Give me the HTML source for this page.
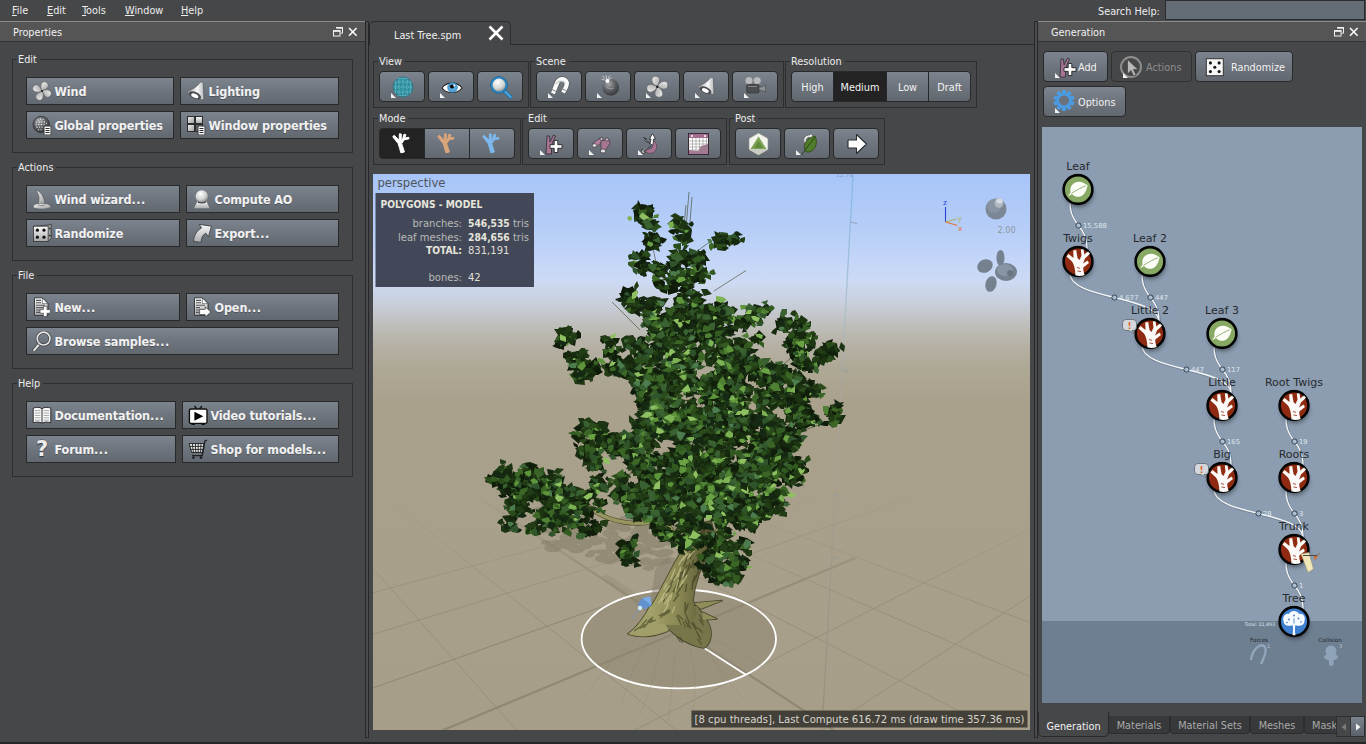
<!DOCTYPE html>
<html lang="en">
<head>
<meta charset="utf-8">
<title>Last Tree.spm</title>
<style>
*{box-sizing:border-box;margin:0;padding:0}
html,body{width:1366px;height:744px;overflow:hidden;background:#464749}
body{position:relative;font-family:"DejaVu Sans Condensed","Liberation Sans",sans-serif;font-size:10.8px;color:#eaeaea;-webkit-font-smoothing:antialiased}
.abs{position:absolute}
/* menu */
.menu{position:absolute;top:0;left:0;width:1366px;height:21px}
.menu span{position:absolute;top:4px;font-size:10.8px;line-height:14px;color:#ededed;white-space:nowrap}
.menu u{text-decoration:underline;text-underline-offset:1px}
.search{position:absolute;left:1165px;top:0;width:200px;height:20px;background:#646c76;border:1px solid #2b2c2e}
/* dock title */
.dtitle{position:absolute;height:21px;background:#555;border-top:1px solid #8c8c8c;border-bottom:1px solid #323335}
.dtitle b{position:absolute;top:4px;font-weight:normal;font-size:10.8px;line-height:14px;color:#f0f0f0}
.vline{position:absolute;width:1px;background:#27272b}
.hline{position:absolute;height:1px;background:#2a2a2e}
/* groups */
.grp{position:absolute;border:1px solid #2d2e30}
.grp>i{position:absolute;top:-7px;left:4px;padding:0 3px 0 1px;background:#464749;font-style:normal;font-size:10.8px;line-height:14px;color:#ececec;white-space:nowrap}
/* buttons */
.btn{position:absolute;border:1px solid #28292b;background:linear-gradient(#7c848e,#6f767f 45%,#62686f);color:#f2f2f2}
.lb{height:28px;font-family:"DejaVu Sans Condensed","DejaVu Sans","Liberation Sans",sans-serif;font-weight:bold;font-size:12.500px;line-height:27px;padding-left:27.500px;letter-spacing:-.120px;white-space:nowrap;text-shadow:0 1px 0 rgba(0,0,0,.25)}
.lb svg{position:absolute;left:5px;top:3px;width:20px;height:20px}
.tb{width:46px;height:31px;border-radius:4px}
.tb svg{position:absolute;left:50%;top:3px;margin-left:-12px;width:24px;height:24px}
.tb.dd:after{content:"";position:absolute;left:11px;bottom:3px;width:0;height:0;border-left:5px solid #f1f1f1;border-top:5px solid transparent}
.sel{background:#232323}
.rb{height:31px;font-size:10.8px;line-height:31px;text-align:center;color:#f2f2f2}
.rbt em{position:absolute;top:1px;font-style:normal;font-size:10.800px;line-height:29px;color:#f2f2f2;white-space:nowrap}
.dis{background:#464749;border-color:#303133}
.dis em{color:#8d8d8d}
.btab{position:absolute;top:716px;height:18px;padding-top:1px;background:#38393b;border:1px solid #2c2d2f;border-top:none;border-radius:0 0 4px 4px;font-size:10.800px;line-height:17px;text-align:center;color:#a9a9a9;white-space:nowrap;overflow:hidden}
.el{letter-spacing:.500px}
</style>
</head>
<body>


<!-- ===== icon defs ===== -->
<svg width="0" height="0" style="position:absolute">
<defs>
  <linearGradient id="gSil" x1="0" y1="0" x2="1" y2="1"><stop offset="0" stop-color="#f4f4f2"/><stop offset="1" stop-color="#9b9c9c"/></linearGradient>
  <linearGradient id="gSilV" x1="0" y1="0" x2="0" y2="1"><stop offset="0" stop-color="#fafafa"/><stop offset="1" stop-color="#a9aaab"/></linearGradient>
  <linearGradient id="gLamp" x1="0" y1="0" x2="1" y2="0"><stop offset="0" stop-color="#a2a4a6"/><stop offset=".6" stop-color="#f8f8f8"/><stop offset="1" stop-color="#b9bbbd"/></linearGradient>
  <radialGradient id="gBall" cx=".4" cy=".3" r=".75"><stop offset="0" stop-color="#ffffff"/><stop offset=".6" stop-color="#cfd0d0"/><stop offset="1" stop-color="#7c7d7e"/></radialGradient>
  <radialGradient id="gDark" cx=".38" cy=".3" r=".8"><stop offset="0" stop-color="#a4a7aa"/><stop offset=".5" stop-color="#5b5e61"/><stop offset="1" stop-color="#2e3032"/></radialGradient>
  <symbol id="iFan" viewBox="0 0 20 20">
    <g transform="rotate(22 10 10)">
      <path id="bl" d="M10 10 C6.6 7.4 5.8 2.8 8 .9 C10.4 -.7 13.9 .8 14 3.5 C14 6.300 11.600 8 10 10Z" fill="url(#gSil)" stroke="#5f6266" stroke-width=".6"/>
      <use href="#bl" transform="rotate(90 10 10)"/><use href="#bl" transform="rotate(180 10 10)"/><use href="#bl" transform="rotate(270 10 10)"/>
    </g>
    <circle cx="10" cy="10" r="1.1" fill="#1d1d1d"/>
  </symbol>
  <symbol id="iLamp" viewBox="0 0 20 20">
    <path d="M14 1.400 C15 .800 16.800 1 17.200 2.200 L17.800 17.600 C17.600 18.800 16.400 19 15.400 18.400 L2.400 12.400 C1.200 11.600 1.400 10.400 2.400 9.800 C7 8 11.500 5.500 14 1.400Z" fill="url(#gLamp)" stroke="#4e5155" stroke-width=".6"/>
    <ellipse cx="9" cy="14.300" rx="6.600" ry="3.300" transform="rotate(25 9 14.300)" fill="#4a4c4f"/>
    <ellipse cx="8.800" cy="14.800" rx="3.800" ry="2" transform="rotate(25 8.800 14.800)" fill="#fdfdfd"/>
  </symbol>
  <symbol id="iDoc" viewBox="0 0 8 10">
    <rect x=".5" y=".5" width="7" height="9" fill="#fff" stroke="#2b2b2b"/>
    <path d="M2 3h4M2 5h4M2 7h4" stroke="#2b2b2b" stroke-width="1"/>
  </symbol>
  <symbol id="iTree" viewBox="0 0 24 24">
    <path d="M10.800 20.800 L14.400 20 C13.500 16.600 12.300 13.600 11.700 11.600 L14.200 8 L15.900 2.700 L14 2.200 L12.700 6.600 L11.200 8.600 L11.300 2 L9.400 1.800 L9.200 8.300 L4.200 3.300 L2.700 4.700 L8.100 11.500 C9.100 14.600 10.100 17.700 10.800 20.800Z M14.600 6 L18.800 5.300 L18.900 6.900 L14.100 7.700Z" fill="currentColor" stroke="currentColor" stroke-width="1" stroke-linejoin="round"/>
  </symbol>
</defs>
</svg>

<!-- ===== menu bar ===== -->
<div class="menu">
  <span style="left:12px"><u>F</u>ile</span>
  <span style="left:47px"><u>E</u>dit</span>
  <span style="left:82px"><u>T</u>ools</span>
  <span style="left:125px"><u>W</u>indow</span>
  <span style="left:181px"><u>H</u>elp</span>
  <span style="left:1098px;top:5px">Search Help:</span>
  <div class="search"></div>
</div>

<!-- ===== left dock: Properties ===== -->
<div class="dtitle" style="left:0;top:21px;width:365px"><b style="left:13px">Properties</b><svg class="abs" style="left:333px;top:5px" width="26" height="11" viewBox="0 0 26 11"><path d="M3.500 1h6v5.200h-2" fill="none" stroke="#f1f1f1" stroke-width="1"/><path d="M3 .700h7" stroke="#f1f1f1" stroke-width="1.400"/><rect x=".500" y="4" width="6.500" height="5" fill="none" stroke="#f1f1f1" stroke-width="1"/><path d="M0 3.900h7.500" stroke="#f1f1f1" stroke-width="1.600"/><path d="M16 1 L23.600 8.800M23.600 1 L16 8.800" stroke="#fafafa" stroke-width="1.600"/></svg></div>
<div class="vline" style="left:365px;top:21px;height:716px"></div>
<div class="vline" style="left:368px;top:21px;height:716px"></div>
<div class="abs" style="left:366px;top:22px;width:2px;height:715px;background:#4b4c4e"></div>

<!-- Edit group -->
<div class="grp" style="left:12px;top:59px;width:341px;height:94px"><i>Edit</i></div>
<div class="btn lb" style="left:26px;top:77px;width:148px"><svg viewBox="0 0 20 20"><use href="#iFan"/></svg>Wind</div>
<div class="btn lb" style="left:180px;top:77px;width:159px"><svg viewBox="0 0 20 20"><use href="#iLamp"/></svg>Lighting</div>
<div class="btn lb" style="left:26px;top:111px;width:148px"><svg viewBox="0 0 20 20">
  <circle cx="9.3" cy="9.5" r="8.2" fill="url(#gDark)" stroke="#2d2f31" stroke-width=".8"/>
  <g fill="#e9e9e9"><circle cx="6" cy="5" r=".7"/><circle cx="8.5" cy="4.3" r=".7"/><circle cx="11" cy="4.6" r=".7"/><circle cx="4.6" cy="7.3" r=".7"/><circle cx="7.2" cy="6.9" r=".7"/><circle cx="9.8" cy="6.8" r=".7"/><circle cx="12.4" cy="7" r=".7"/><circle cx="14.4" cy="8.3" r=".6"/><circle cx="4.2" cy="9.8" r=".7"/><circle cx="6.8" cy="9.5" r=".7"/><circle cx="9.4" cy="9.4" r=".7"/><circle cx="12" cy="9.6" r=".7"/><circle cx="5" cy="12.3" r=".7"/><circle cx="7.5" cy="12.1" r=".7"/><circle cx="10" cy="12.1" r=".7"/><circle cx="6.6" cy="14.6" r=".6"/><circle cx="9" cy="14.6" r=".6"/></g>
  <use href="#iDoc" x="11.5" y="10.5" width="8" height="10"/></svg>Global properties</div>
<div class="btn lb" style="left:180px;top:111px;width:159px"><svg viewBox="0 0 20 20">
  <g stroke="#2b2c2e" stroke-width="1"><rect x="1.5" y="1.5" width="7" height="7" fill="url(#gSil)"/><rect x="9.5" y="1.5" width="7" height="7" fill="url(#gSilV)"/><rect x="1.5" y="9.5" width="7" height="7" fill="url(#gSil)"/><rect x="9.5" y="9.5" width="7" height="7" fill="#5f6368"/></g>
  <use href="#iDoc" x="11.5" y="10.5" width="8" height="10"/></svg>Window properties</div>

<!-- Actions group -->
<div class="grp" style="left:12px;top:167px;width:341px;height:94px"><i>Actions</i></div>
<div class="btn lb" style="left:26px;top:185px;width:154px"><svg viewBox="0 0 20 20">
  <path d="M3.6 1.2 C8.5 2 11.6 6.5 13.2 14.6 L6 15.2 C7.6 10.4 7.6 5.4 3.6 1.2Z" fill="url(#gSil)" stroke="#4f5256" stroke-width=".6"/>
  <path d="M1.2 17.6 C1.5 15.2 5 14.2 9.6 14.2 C14.4 14.2 18.6 15.4 18.8 17.4 C18.9 19.4 14.2 20 9.8 20 C5.6 20 1 19.6 1.2 17.6Z" fill="url(#gSil)" stroke="#4f5256" stroke-width=".6"/>
  <path d="M5.8 15.6 C8 17.2 11.6 17 13.4 15.2" fill="none" stroke="#7e8185" stroke-width=".9"/></svg>Wind wizard<span class="el">...</span></div>
<div class="btn lb" style="left:186px;top:185px;width:153px"><svg viewBox="0 0 20 20">
  <path d="M5.4 12.4 L14.4 12.4 L17.6 19.3 L2 19.3Z" fill="url(#gSilV)"/>
  <ellipse cx="9.8" cy="12.8" rx="4.2" ry="1.6" fill="#3c3d3f"/>
  <circle cx="9.8" cy="7.4" r="6.2" fill="url(#gBall)"/></svg>Compute AO</div>
<div class="btn lb" style="left:26px;top:219px;width:154px"><svg viewBox="0 0 20 20">
  <path d="M1.5 3.4 L16.2 2 L19.2 1 L19.2 15.6 L16.2 18.4 L1.5 18.4Z" fill="#9c9d9c" stroke="#2d2d2d" stroke-width=".7"/>
  <rect x="1.5" y="3.2" width="14.6" height="15.2" fill="url(#gSilV)" stroke="#2d2d2d" stroke-width=".7"/>
  <g fill="#111"><circle cx="5.4" cy="7.2" r="1.6"/><circle cx="12" cy="7.2" r="1.6"/><circle cx="5.4" cy="14.2" r="1.6"/><circle cx="12" cy="14.2" r="1.6"/><circle cx="17.8" cy="5.6" r=".8"/><circle cx="17.8" cy="12.6" r=".8"/></g></svg>Randomize</div>
<div class="btn lb" style="left:186px;top:219px;width:153px"><svg viewBox="0 0 20 20">
  <path d="M7.2 1.4 L19.4 3.2 L16.6 13.6 L13.6 10.2 C10.4 12 9.4 15.4 9 19.4 L1.4 18.4 C2 12.8 4.2 8 9.6 5Z" fill="url(#gSilV)" stroke="#33363a" stroke-width=".8" stroke-linejoin="round"/></svg>Export<span class="el">...</span></div>

<!-- File group -->
<div class="grp" style="left:12px;top:275px;width:341px;height:94px"><i>File</i></div>
<div class="btn lb" style="left:26px;top:293px;width:154px"><svg viewBox="0 0 20 20">
  <path d="M2.5 .8 L10.6 .8 L16 6.4 L16 18.4 L2.5 18.4Z" fill="url(#gSilV)" stroke="#2b2c2e" stroke-width=".9"/>
  <path d="M10.4 1 L10.4 6.6 L15.8 6.6Z" fill="#fff" stroke="#2b2c2e" stroke-width=".5"/>
  <path d="M4 3.4h5M4 5.8h5M4 8.2h9M4 10.6h9M4 13h5M4 15.4h4" stroke="#55585c" stroke-width="1.1"/>
  <path d="M11.4 10.8h3.6v3.4h3.4v3.6h-3.4v3.4h-3.6v-3.4H8v-3.6h3.4z" fill="#fff" stroke="#2b2c2e" stroke-width=".6" transform="translate(0 -1.6)"/></svg>New<span class="el">...</span></div>
<div class="btn lb" style="left:186px;top:293px;width:153px"><svg viewBox="0 0 20 20">
  <path d="M2.5 .8 L10.6 .8 L16 6.4 L16 18.4 L2.5 18.4Z" fill="url(#gSilV)" stroke="#2b2c2e" stroke-width=".9"/>
  <path d="M10.4 1 L10.4 6.6 L15.8 6.6Z" fill="#fff" stroke="#2b2c2e" stroke-width=".5"/>
  <path d="M4 3.4h5M4 5.8h5M4 8.2h9M4 10.6h4M4 13h3M4 15.4h3" stroke="#55585c" stroke-width="1.1"/>
  <path d="M7.6 12.4 L13.2 12.4 L13.2 9.8 L19 15 L13.2 20.2 L13.2 17.6 L7.6 17.6Z" fill="#fff" stroke="#2b2c2e" stroke-width=".7"/></svg>Open<span class="el">...</span></div>
<div class="btn lb" style="left:26px;top:327px;width:313px"><svg viewBox="0 0 20 20">
  <path d="M7.4 13 L2.2 19.2" stroke="#3c3e41" stroke-width="3.4" stroke-linecap="round"/>
  <path d="M7.4 13 L2.2 19.2" stroke="#e4e4e2" stroke-width="2" stroke-linecap="round"/>
  <circle cx="11.6" cy="7.6" r="6.4" fill="none" stroke="#3c3e41" stroke-width="3"/>
  <circle cx="11.6" cy="7.6" r="6.4" fill="none" stroke="#e6e6e4" stroke-width="1.7"/></svg>Browse samples<span class="el">...</span></div>

<!-- Help group -->
<div class="grp" style="left:12px;top:383px;width:341px;height:94px"><i>Help</i></div>
<div class="btn lb" style="left:26px;top:401px;width:150px"><svg viewBox="0 0 20 20">
  <path d="M1.2 3.2 C4 2 7.6 2 10 3.6 C12.400 2 16 2 18.800 3.200 L18.800 17.800 C16 16.800 12.400 16.800 10 18.200 C7.600 16.800 4 16.800 1.200 17.800Z" fill="#fbfbfb" stroke="#2b2c2e" stroke-width="1"/>
  <path d="M10 3.600V18" stroke="#2b2c2e" stroke-width="1"/>
  <path d="M2.800 5.600h5.600M2.800 8h5.600M2.800 10.400h5.600M2.800 12.800h5.600M2.800 15.200h5.600M11.600 5.600h5.600M11.600 8h5.600M11.600 10.400h5.600M11.600 12.800h5.600M11.600 15.200h5.600" stroke="#a6a8aa" stroke-width="1"/></svg>Documentation<span class="el">...</span></div>
<div class="btn lb" style="left:182px;top:401px;width:157px"><svg viewBox="0 0 20 20">
  <path d="M6.400 1 L9 4M14 1 L11.400 4" stroke="#111" stroke-width="1.200"/>
  <rect x="1.400" y="4" width="17.600" height="14.400" rx="1.600" fill="#fff" stroke="#111" stroke-width="1.400"/>
  <path d="M6.400 6.800 L15.400 11.200 L6.400 15.800Z" fill="#050505"/>
  <rect x="3.400" y="18.600" width="3.600" height="1.400" fill="#111"/><rect x="13.400" y="18.600" width="3.600" height="1.400" fill="#111"/></svg>Video tutorials<span class="el">...</span></div>
<div class="btn lb" style="left:26px;top:435px;width:150px"><svg viewBox="0 0 20 20">
  <text x="10" y="16.500" text-anchor="middle" font-family="DejaVu Sans, Liberation Sans, sans-serif" font-weight="bold" font-size="21" fill="#ececea" stroke="#4c4f53" stroke-width=".8" paint-order="stroke">?</text></svg>Forum<span class="el">...</span></div>
<div class="btn lb" style="left:182px;top:435px;width:157px"><svg viewBox="0 0 20 20">
  <path d="M1.200 4.600 L16 4.600 L14.600 13.400 L3.600 13.400Z" fill="#f2f2f2" stroke="#1e1f20" stroke-width="1"/>
  <path d="M4.400 4.600 L5.400 13.400M7.400 4.600 L7.800 13.400M10.200 4.600 L10.200 13.400M13 4.600 L12.600 13.400M2 7.400 L15.600 7.400M2.800 10.400 L15 10.400" stroke="#1e1f20" stroke-width=".9"/>
  <path d="M19 1.200 L17 2 L14.200 16.600 L4 16.600" fill="none" stroke="#1e1f20" stroke-width="1.300"/>
  <circle cx="5.400" cy="18.600" r="1.300" fill="#1e1f20"/><circle cx="13" cy="18.600" r="1.300" fill="#1e1f20"/></svg>Shop for models<span class="el">...</span></div>



<!-- ===== centre: document tab + toolbar ===== -->
<div class="hline" style="left:510px;top:44px;width:524px"></div>
<div class="abs" style="left:369px;top:21px;width:142px;height:24px;border:1px solid #2c2d2f;border-bottom:none;border-radius:5px 5px 0 0;background:#464749"></div>
<div class="vline" style="left:369px;top:26px;height:19px"></div>
<div class="abs" style="left:394px;top:29px;font-size:10.8px;line-height:14px;color:#f0f0f0;white-space:nowrap">Last Tree.spm</div>
<svg class="abs" style="left:488px;top:25px" width="16" height="16" viewBox="0 0 16 16"><path d="M1.500 1.500 L14.500 14.500M14.500 1.500 L1.500 14.500" stroke="#fff" stroke-width="2.600"/></svg>

<!-- row 1 -->
<div class="grp" style="left:373px;top:61px;width:156px;height:47px"><i>View</i></div>
<div class="btn tb dd" style="left:379px;top:71px"><svg viewBox="0 0 24 24">
  <circle cx="13" cy="12" r="10" fill="#2f8f9d"/>
  <g stroke="#8fd0e6" stroke-width="1.100" fill="none" opacity=".6" stroke-dasharray="1.500 1"><path d="M3 12h20M4.500 7h17M4.500 17h17M7 3.500h12M7 20.500h12M13 2v20M9 2.800v18.400M17 2.800v18.400M5.500 5v14M20.500 5v14"/></g>
  <circle cx="13" cy="12" r="10" fill="none" stroke="#2a6f7f" stroke-width=".7"/></svg></div>
<div class="btn tb dd" style="left:428px;top:71px"><svg viewBox="0 0 24 24">
  <path d="M3 13 C7 6.500 19 6.500 23 13 C19 19 7 19 3 13Z" fill="#fff" stroke="#2a2a2a" stroke-width="1.100"/>
  <circle cx="13.500" cy="12.500" r="4.800" fill="#55a7dc"/><circle cx="13.500" cy="12.500" r="4.800" fill="none" stroke="#2f7fb5" stroke-width=".8"/>
  <circle cx="13" cy="11.500" r="2.100" fill="#0c0c0c"/><circle cx="15.200" cy="10.400" r="1" fill="#fff"/></svg></div>
<div class="btn tb" style="left:477px;top:71px"><svg viewBox="0 0 24 24">
  <path d="M16 15.500 L22.500 22" stroke="#1f6f9f" stroke-width="4" stroke-linecap="round"/>
  <path d="M16 15.500 L22.500 22" stroke="#4da3d8" stroke-width="2.400" stroke-linecap="round"/>
  <circle cx="11" cy="10" r="7.500" fill="url(#gBall)" stroke="#2b86bf" stroke-width="2.200"/>
  <circle cx="11" cy="10" r="8.600" fill="none" stroke="#1c5f8a" stroke-width=".6"/></svg></div>

<div class="grp" style="left:530px;top:61px;width:254px;height:47px"><i>Scene</i></div>
<div class="btn tb dd" style="left:536px;top:71px"><svg viewBox="0 0 24 24">
  <path d="M6 18.500 L10.200 7.500 C11.800 2.500 20.500 3.200 19.800 9 C19.500 11.800 17.800 14.500 16 17.500" fill="none" stroke="#5e6165" stroke-width="5.800"/>
  <path d="M6 18.500 L10.200 7.500 C11.800 2.500 20.500 3.200 19.800 9 C19.500 11.800 17.800 14.500 16 17.500" fill="none" stroke="#fbfbfb" stroke-width="4.200"/>
  <path d="M9 9.300 C10.500 4.800 17.600 5.200 17.800 9" fill="none" stroke="#c3c5c7" stroke-width="1.300"/>
  <path d="M4.800 14.600 l4.200 1.600 M14.800 13.600 l4 2" stroke="#8c8f93" stroke-width="1.100"/></svg></div>
<div class="btn tb dd" style="left:585px;top:71px"><svg viewBox="0 0 24 24">
  <circle cx="14.700" cy="12.400" r="8.300" fill="url(#gDark)"/>
  <path d="M10.500 12 c2 2 5 2.500 7.500 1" fill="none" stroke="#a9acaf" stroke-width="1" opacity=".7"/>
  <path d="M11 6.500 l-2 -2.500" stroke="#3a3c3f" stroke-width="2.400"/>
  <path d="M11.200 5.800 l-4.700 -5M11.200 5.800 l-1.200-5.500M11.200 5.800 l2.500-5.300M11.200 5.800 l-5.700-1.800M11.200 5.800 l4.500-3" stroke="#dcdcdc" stroke-width=".8"/>
  <circle cx="11.400" cy="5.900" r="2" fill="#fff"/></svg></div>
<div class="btn tb dd" style="left:634px;top:71px"><svg viewBox="0 0 24 24"><g transform="rotate(-38 12.300 11.700)"><use href="#iFan" x="1.300" y=".700" width="22" height="22"/></g></svg></div>
<div class="btn tb dd" style="left:683px;top:71px"><svg viewBox="0 0 24 24"><use href="#iLamp" x="3" y="1.500" width="19" height="19"/></svg></div>
<div class="btn tb dd" style="left:732px;top:71px"><svg viewBox="0 0 24 24">
  <circle cx="6" cy="5.600" r="3.900" fill="#b9bbbd" stroke="#777a7e" stroke-width=".6"/><circle cx="14.200" cy="5.600" r="3.900" fill="#b9bbbd" stroke="#777a7e" stroke-width=".6"/>
  <rect x="3.600" y="9.600" width="12.500" height="8.400" rx="1.500" fill="#4b4d50" stroke="#2f3133" stroke-width=".6"/>
  <path d="M16 12 L18.500 12 L22.500 10.300 L22.500 16.800 L18.500 15.400 L16 15.400Z" fill="#8e9194" stroke="#3a3c3f" stroke-width=".5"/>
  <path d="M5 11.500 h9" stroke="#85888b" stroke-width="1"/></svg></div>

<div class="grp" style="left:785px;top:61px;width:192px;height:47px"><i>Resolution</i></div>
<div class="btn rb" style="left:791px;top:71px;width:43px;border-radius:4px 0 0 4px">High</div>
<div class="btn rb sel" style="left:833px;top:71px;width:54px;border-radius:0">Medium</div>
<div class="btn rb" style="left:886px;top:71px;width:43px;border-radius:0">Low</div>
<div class="btn rb" style="left:928px;top:71px;width:43px;border-radius:0 4px 4px 0">Draft</div>

<!-- row 2 -->
<div class="grp" style="left:373px;top:118px;width:148px;height:47px"><i>Mode</i></div>
<div class="btn tb sel" style="left:379px;top:128px;width:46px;border-radius:4px 0 0 4px"><svg viewBox="0 0 24 24"><use href="#iTree" color="#ffffff"/></svg></div>
<div class="btn tb" style="left:424px;top:128px;width:46px;border-radius:0"><svg viewBox="0 0 24 24"><use href="#iTree" color="#dba57c"/></svg></div>
<div class="btn tb" style="left:469px;top:128px;width:46px;border-radius:0 4px 4px 0"><svg viewBox="0 0 24 24"><use href="#iTree" color="#7db9ef"/></svg></div>

<div class="grp" style="left:522px;top:118px;width:205px;height:47px"><i>Edit</i></div>
<div class="btn tb dd" style="left:528px;top:128px"><svg viewBox="0 0 24 24">
  <path d="M7 22 L8 4 L10.500 4 L11 10 L14.500 3 L16.500 4 L12.500 13 L12.500 22Z" fill="#a87693" stroke="#2b2c2e" stroke-width=".8"/>
  <path d="M15.200 8.500h3.600v4.200h4.200v3.600h-4.200v4.200h-3.600v-4.200H11v-3.600h4.200z" fill="#fff" stroke="#222" stroke-width=".9"/></svg></div>
<div class="btn tb dd" style="left:577px;top:128px"><svg viewBox="0 0 24 24">
  <g stroke="#3a3c3f" stroke-width=".7"><path d="M5 11 L13 5.500 L15.500 8.500 L9.500 14 L6 14.500Z" fill="#b27e9c"/><path d="M13 9 L21 7 L22 11.500 L17 19 L13 17.500Z" fill="#a87693"/><ellipse cx="15" cy="19" rx="2.600" ry="2" fill="#e6e6e6"/><ellipse cx="6.500" cy="13.500" rx="2.200" ry="1.800" fill="#e6e6e6"/><circle cx="13.500" cy="7" r="1.600" fill="#d9b7ca"/><circle cx="19" cy="7.500" r="1.600" fill="#d9b7ca"/></g></svg></div>
<div class="btn tb dd" style="left:626px;top:128px"><svg viewBox="0 0 24 24">
  <path d="M17 9 C21 12 20.500 19 15 21 C11.500 22 9 20.500 8 19 L12.500 17 C15 17.500 16.500 14 15 11Z" fill="#a87693" stroke="#5e3d50" stroke-width=".7"/>
  <path d="M15.500 1.500 L18.500 7 L16.500 7 L16 13.500 L11.500 10.500 L7.500 8.500 L9.500 7 L6.500 5.500 L13 11.500 L14 7 L12.500 7Z" fill="#fff" stroke="#222" stroke-width=".8" stroke-linejoin="round"/>
  <path d="M14 14 L6.500 19 L8.500 20.500 L5 21.500 L5 17 L6.500 18" fill="#fff" stroke="#222" stroke-width=".8" stroke-linejoin="round"/></svg></div>
<div class="btn tb" style="left:675px;top:128px"><svg viewBox="0 0 24 24">
  <rect x="2.500" y="1.500" width="20" height="21" fill="#fff" stroke="#3a2a33" stroke-width="1"/>
  <rect x="3" y="2" width="19" height="4" fill="#a26d8c"/>
  <path d="M3 22 L3 18 L12 19 L15 14 L22 12 L22 22Z" fill="#a87693"/>
  <path d="M3 9h19M3 12h19M3 15h19M3 18h19M6.500 6v16M10 6v16M13.500 6v16M17 6v16M20.500 6v16" stroke="#8e8e8e" stroke-width=".6"/>
  <circle cx="6" cy="4" r="1" fill="#fff"/><circle cx="19" cy="4" r="1" fill="#fff"/></svg></div>

<div class="grp" style="left:729px;top:118px;width:156px;height:47px"><i>Post</i></div>
<div class="btn tb" style="left:735px;top:128px"><svg viewBox="0 0 24 24">
  <path d="M12.500 1 L22 6.500 L22 17.500 L12.500 23 L3 17.500 L3 6.500Z" fill="#f3f3ee" stroke="#8a8d84" stroke-width=".6"/>
  <path d="M12.500 4.500 L20.500 17 L4.500 17Z" fill="#7fa354"/><path d="M12.500 9 L17 16 L8 16Z" fill="#5f8b3a"/>
  <path d="M3 17.500 L12.500 23 L22 17.500 L20.500 17 L4.500 17Z" fill="#c9ccc2"/></svg></div>
<div class="btn tb dd" style="left:784px;top:128px"><svg viewBox="0 0 24 24">
  <path d="M9.500 11 C7.500 6.500 10.500 2.500 15 3 L15.500 1 L18.500 5 L14 7 L14.500 5.200 C11.800 5 10.500 7.500 11.500 10.500Z" fill="#f1f1f1" stroke="#55585c" stroke-width=".6"/>
  <path d="M20 4 C24 12 19 21 11.500 20 C7 15 10 6 20 4Z" fill="#4f7d2b" stroke="#2a4516" stroke-width=".8"/>
  <path d="M19.500 5.500 C15 11 11 17 6.500 23" fill="none" stroke="#2a4516" stroke-width="1"/></svg></div>
<div class="btn tb" style="left:833px;top:128px"><svg viewBox="0 0 24 24">
  <path d="M4 8 L12.500 8 L12.500 2.500 L22.500 12 L12.500 21.500 L12.500 16 L4 16Z" fill="#fff" stroke="#2b2c2e" stroke-width="1.100" stroke-linejoin="round"/></svg></div>

<!--VP_START-->
<svg class="abs" style="left:373px;top:174px" width="657" height="556" viewBox="0 0 657 556" font-family="DejaVu Sans, Liberation Sans, sans-serif">
<defs>
<linearGradient id="sky" x1="0" y1="0" x2="0" y2="1">
<stop offset="0" stop-color="#a7c5f8"/><stop offset=".10" stop-color="#b6cef8"/><stop offset=".16" stop-color="#c5d6f8"/><stop offset=".195" stop-color="#cddaf3"/>
<stop offset=".23" stop-color="#c9d0de"/><stop offset=".265" stop-color="#c0c1c0"/><stop offset=".30" stop-color="#b7b3a8"/><stop offset=".345" stop-color="#aea896"/><stop offset=".41" stop-color="#a9a18c"/><stop offset="1" stop-color="#a69e89"/></linearGradient>
<linearGradient id="gfade" x1="0" y1="0" x2="0" y2="1"><stop offset=".56" stop-color="#000"/><stop offset=".80" stop-color="#fff"/></linearGradient>
<mask id="gm"><rect width="657" height="556" fill="url(#gfade)"/></mask>
<linearGradient id="rul" x1="0" y1="0" x2="0" y2="1"><stop offset="0" stop-color="#79b4dc"/><stop offset=".25" stop-color="#a9bcc9"/><stop offset=".38" stop-color="#aaa79c"/><stop offset="1" stop-color="#918b78"/></linearGradient>
<linearGradient id="trk" x1="0" y1="0" x2="1" y2="0"><stop offset="0" stop-color="#a7a56c"/><stop offset=".45" stop-color="#8b8954"/><stop offset="1" stop-color="#4d4c2c"/></linearGradient>
<filter id="shb" x="-10%" y="-10%" width="120%" height="120%"><feGaussianBlur stdDeviation=".7"/></filter>
</defs>
<rect width="657" height="556" fill="url(#sky)"/>
<g mask="url(#gm)">
<path d="M0.0 418.8L657.0 240.9M0.0 460.3L657.0 258.5M0.0 514.0L657.0 281.1M0.0 689.2L657.0 355.1M0.0 847.7L657.0 422.0M0.0 513.9L657.0 281.1M0.0 394.5L657.0 1134.4M0.0 311.9L657.0 841.2M0.0 216.5L657.0 502.8M0.0 201.2L657.0 448.6M0.0 236.4L657.0 573.4" stroke="#8d8672" stroke-width="1" opacity=".62" fill="none"/>
<path d="M40.6 568.5L482.3 384.1" stroke="#8a836f" stroke-width="2.200" opacity=".8"/>
<path d="M112.2 327.9L477.1 567.0" stroke="#8a836f" stroke-width="2.200" opacity=".8"/>
</g>
<path d="M480 2L449 556" stroke="url(#rul)" stroke-width="1.300" opacity=".8"/>
<path d="M477.4 48.0l7 1.500" stroke="#8f9aa0" stroke-width="1" opacity=".8"/>
<path d="M469.1 196.0l7 1.500" stroke="#8f9aa0" stroke-width="1" opacity=".8"/>
<path d="M462.1 321.0l7 1.500" stroke="#8f9aa0" stroke-width="1" opacity=".8"/>
<path d="M458.7 383.0l7 1.500" stroke="#8f9aa0" stroke-width="1" opacity=".8"/>
<text x="463" y="3.0" font-size="6" fill="#7f9fc4">12.79</text>
<ellipse cx="305.8" cy="464.9" rx="97.2" ry="49.4" fill="#8f8772" opacity=".55"/>
<g fill="#807964" opacity=".5" filter="url(#shb)"><ellipse cx="193.4" cy="367.3" rx="7.4" ry="3.5"/><ellipse cx="220.0" cy="366.8" rx="6.1" ry="2.9"/><ellipse cx="220.3" cy="365.6" rx="4.7" ry="2.2"/><ellipse cx="191.3" cy="362.9" rx="4.9" ry="2.3"/><ellipse cx="173.1" cy="368.5" rx="5.1" ry="2.4"/><ellipse cx="203.2" cy="375.1" rx="8.8" ry="4.1"/><ellipse cx="181.2" cy="355.7" rx="8.9" ry="4.2"/><ellipse cx="227.4" cy="365.8" rx="5.8" ry="2.7"/><ellipse cx="205.8" cy="365.9" rx="5.9" ry="2.7"/><ellipse cx="204.5" cy="354.0" rx="7.1" ry="3.3"/><ellipse cx="186.5" cy="352.6" rx="7.0" ry="3.3"/><ellipse cx="206.2" cy="362.7" rx="5.4" ry="2.5"/><ellipse cx="190.1" cy="350.3" rx="5.9" ry="2.8"/><ellipse cx="180.5" cy="354.8" rx="5.8" ry="2.7"/><ellipse cx="206.4" cy="346.5" rx="5.6" ry="2.6"/><ellipse cx="178.3" cy="355.1" rx="8.4" ry="3.9"/><ellipse cx="196.8" cy="351.4" rx="8.9" ry="4.2"/><ellipse cx="214.3" cy="368.9" rx="7.9" ry="3.7"/><ellipse cx="211.9" cy="371.3" rx="4.7" ry="2.2"/><ellipse cx="185.2" cy="347.3" rx="7.1" ry="3.3"/><ellipse cx="211.7" cy="353.9" rx="7.6" ry="3.6"/><ellipse cx="178.8" cy="353.3" rx="6.6" ry="3.1"/><ellipse cx="215.7" cy="346.2" rx="6.6" ry="3.1"/><ellipse cx="195.0" cy="357.2" rx="7.7" ry="3.6"/><ellipse cx="179.8" cy="346.7" rx="8.2" ry="3.8"/><ellipse cx="194.7" cy="371.9" rx="7.5" ry="3.5"/><ellipse cx="220.5" cy="362.7" rx="5.3" ry="2.5"/><ellipse cx="204.8" cy="363.9" rx="8.0" ry="3.7"/><ellipse cx="209.9" cy="367.5" rx="6.3" ry="2.9"/><ellipse cx="205.3" cy="357.3" rx="6.5" ry="3.0"/><ellipse cx="170.4" cy="355.8" rx="8.2" ry="3.8"/><ellipse cx="210.1" cy="353.8" rx="6.4" ry="3.0"/><ellipse cx="180.0" cy="374.1" rx="8.8" ry="4.1"/><ellipse cx="206.8" cy="367.1" rx="5.5" ry="2.6"/><ellipse cx="201.3" cy="373.5" rx="7.2" ry="3.3"/><ellipse cx="198.8" cy="362.1" rx="6.4" ry="3.0"/><ellipse cx="182.6" cy="370.9" rx="8.8" ry="4.1"/><ellipse cx="190.6" cy="349.0" rx="7.3" ry="3.4"/><ellipse cx="195.7" cy="357.3" rx="8.5" ry="4.0"/><ellipse cx="204.6" cy="344.5" rx="8.1" ry="3.8"/><ellipse cx="183.2" cy="368.1" rx="5.0" ry="2.3"/><ellipse cx="193.7" cy="357.6" rx="4.8" ry="2.2"/><ellipse cx="202.3" cy="368.0" rx="6.0" ry="2.8"/><ellipse cx="199.5" cy="361.1" rx="5.2" ry="2.4"/><ellipse cx="214.5" cy="367.5" rx="4.6" ry="2.2"/><ellipse cx="253.6" cy="371.2" rx="5.2" ry="2.4"/><ellipse cx="236.7" cy="387.3" rx="6.1" ry="2.9"/><ellipse cx="256.8" cy="388.0" rx="9.0" ry="4.2"/><ellipse cx="216.6" cy="381.1" rx="4.9" ry="2.3"/><ellipse cx="251.1" cy="383.9" rx="5.7" ry="2.7"/><ellipse cx="242.7" cy="374.1" rx="4.6" ry="2.1"/><ellipse cx="257.8" cy="375.9" rx="5.2" ry="2.4"/><ellipse cx="232.2" cy="378.4" rx="6.9" ry="3.2"/><ellipse cx="264.6" cy="377.2" rx="7.6" ry="3.6"/><ellipse cx="235.7" cy="387.5" rx="5.3" ry="2.5"/><ellipse cx="240.0" cy="368.9" rx="8.0" ry="3.7"/><ellipse cx="230.2" cy="384.8" rx="8.2" ry="3.8"/><ellipse cx="264.6" cy="377.8" rx="8.1" ry="3.8"/><ellipse cx="247.7" cy="368.1" rx="5.5" ry="2.6"/><ellipse cx="219.2" cy="378.1" rx="4.6" ry="2.2"/><ellipse cx="252.6" cy="380.3" rx="5.7" ry="2.6"/><ellipse cx="226.6" cy="366.2" rx="6.5" ry="3.0"/><ellipse cx="264.5" cy="373.6" rx="8.8" ry="4.1"/><ellipse cx="227.7" cy="383.9" rx="5.5" ry="2.6"/><ellipse cx="241.5" cy="385.0" rx="7.3" ry="3.4"/><ellipse cx="259.3" cy="371.5" rx="6.7" ry="3.1"/><ellipse cx="221.6" cy="368.7" rx="4.9" ry="2.3"/><ellipse cx="221.8" cy="367.7" rx="8.0" ry="3.7"/><ellipse cx="237.0" cy="369.3" rx="5.3" ry="2.5"/><ellipse cx="241.2" cy="371.2" rx="8.1" ry="3.8"/><ellipse cx="255.6" cy="377.4" rx="6.3" ry="2.9"/><ellipse cx="261.1" cy="375.1" rx="5.3" ry="2.5"/><ellipse cx="245.1" cy="382.9" rx="8.6" ry="4.0"/><ellipse cx="241.0" cy="374.0" rx="8.2" ry="3.8"/><ellipse cx="261.1" cy="377.6" rx="6.1" ry="2.8"/><ellipse cx="226.6" cy="377.5" rx="4.6" ry="2.1"/><ellipse cx="260.8" cy="376.9" rx="6.9" ry="3.2"/><ellipse cx="255.1" cy="375.3" rx="8.4" ry="3.9"/><ellipse cx="243.3" cy="373.3" rx="5.6" ry="2.6"/><ellipse cx="233.1" cy="385.6" rx="7.1" ry="3.3"/><ellipse cx="235.9" cy="388.0" rx="5.1" ry="2.4"/><ellipse cx="252.1" cy="374.5" rx="6.6" ry="3.1"/><ellipse cx="212.3" cy="372.3" rx="6.4" ry="3.0"/><ellipse cx="255.5" cy="374.1" rx="6.9" ry="3.2"/><ellipse cx="232.9" cy="378.7" rx="6.5" ry="3.0"/><ellipse cx="267.8" cy="358.9" rx="8.1" ry="3.8"/><ellipse cx="276.7" cy="367.7" rx="7.8" ry="3.6"/><ellipse cx="250.9" cy="354.8" rx="6.8" ry="3.2"/><ellipse cx="242.0" cy="353.2" rx="5.0" ry="2.3"/><ellipse cx="253.1" cy="355.1" rx="5.7" ry="2.7"/><ellipse cx="270.0" cy="346.7" rx="7.0" ry="3.3"/><ellipse cx="268.8" cy="342.7" rx="6.5" ry="3.0"/><ellipse cx="250.8" cy="350.6" rx="6.8" ry="3.2"/><ellipse cx="259.9" cy="347.9" rx="6.9" ry="3.2"/><ellipse cx="238.2" cy="360.1" rx="7.6" ry="3.6"/><ellipse cx="287.8" cy="347.1" rx="5.7" ry="2.6"/><ellipse cx="239.9" cy="352.3" rx="8.3" ry="3.9"/><ellipse cx="273.8" cy="362.2" rx="6.5" ry="3.0"/><ellipse cx="280.2" cy="361.5" rx="4.8" ry="2.3"/><ellipse cx="254.1" cy="345.6" rx="8.5" ry="4.0"/><ellipse cx="281.3" cy="369.2" rx="7.5" ry="3.5"/><ellipse cx="284.6" cy="369.8" rx="8.9" ry="4.1"/><ellipse cx="272.6" cy="373.3" rx="6.3" ry="2.9"/><ellipse cx="237.2" cy="359.3" rx="8.2" ry="3.8"/><ellipse cx="277.4" cy="366.9" rx="6.8" ry="3.2"/><ellipse cx="260.0" cy="364.0" rx="5.9" ry="2.8"/><ellipse cx="266.3" cy="355.8" rx="7.0" ry="3.3"/><ellipse cx="263.2" cy="358.8" rx="6.0" ry="2.8"/><ellipse cx="251.7" cy="350.0" rx="4.8" ry="2.2"/><ellipse cx="293.5" cy="356.7" rx="8.9" ry="4.1"/><ellipse cx="279.2" cy="363.0" rx="4.7" ry="2.2"/><ellipse cx="269.8" cy="349.8" rx="5.1" ry="2.4"/><ellipse cx="241.7" cy="365.2" rx="8.2" ry="3.8"/><ellipse cx="266.4" cy="364.2" rx="8.6" ry="4.0"/><ellipse cx="244.3" cy="352.3" rx="4.9" ry="2.3"/><ellipse cx="290.3" cy="362.7" rx="6.4" ry="3.0"/><ellipse cx="293.1" cy="364.8" rx="7.4" ry="3.4"/><ellipse cx="269.8" cy="353.6" rx="8.4" ry="3.9"/><ellipse cx="292.5" cy="364.0" rx="6.5" ry="3.1"/><ellipse cx="255.1" cy="368.1" rx="8.7" ry="4.0"/><ellipse cx="281.1" cy="389.6" rx="6.9" ry="3.2"/><ellipse cx="282.5" cy="389.3" rx="5.2" ry="2.4"/><ellipse cx="291.4" cy="387.4" rx="5.9" ry="2.8"/><ellipse cx="275.5" cy="394.2" rx="5.8" ry="2.7"/><ellipse cx="272.7" cy="386.0" rx="6.1" ry="2.8"/><ellipse cx="292.9" cy="386.6" rx="4.6" ry="2.1"/><ellipse cx="280.3" cy="378.6" rx="5.4" ry="2.5"/><ellipse cx="261.0" cy="387.5" rx="5.0" ry="2.3"/><ellipse cx="288.1" cy="380.0" rx="6.7" ry="3.1"/><ellipse cx="289.0" cy="380.6" rx="6.8" ry="3.2"/><ellipse cx="273.7" cy="376.8" rx="6.0" ry="2.8"/><ellipse cx="291.1" cy="378.7" rx="7.4" ry="3.4"/><ellipse cx="271.3" cy="389.3" rx="4.7" ry="2.2"/><ellipse cx="286.0" cy="387.9" rx="7.8" ry="3.7"/><ellipse cx="281.7" cy="390.0" rx="4.9" ry="2.3"/><ellipse cx="293.1" cy="378.2" rx="7.5" ry="3.5"/><ellipse cx="279.8" cy="390.8" rx="5.8" ry="2.7"/><ellipse cx="273.5" cy="387.0" rx="6.5" ry="3.0"/><ellipse cx="173.9" cy="346.8" rx="8.9" ry="4.1"/><ellipse cx="168.4" cy="336.7" rx="8.8" ry="4.1"/><ellipse cx="171.9" cy="343.0" rx="4.5" ry="2.1"/><ellipse cx="167.9" cy="342.2" rx="6.8" ry="3.2"/><ellipse cx="178.0" cy="344.1" rx="4.5" ry="2.1"/><ellipse cx="174.6" cy="340.7" rx="6.3" ry="2.9"/><ellipse cx="177.0" cy="338.3" rx="5.9" ry="2.7"/><ellipse cx="176.2" cy="344.8" rx="6.9" ry="3.2"/><ellipse cx="175.0" cy="330.7" rx="7.7" ry="3.6"/><ellipse cx="181.3" cy="334.1" rx="6.0" ry="2.8"/><ellipse cx="180.4" cy="337.7" rx="7.8" ry="3.6"/><ellipse cx="173.2" cy="336.5" rx="8.3" ry="3.9"/><ellipse cx="332.4" cy="357.0" rx="7.8" ry="3.6"/><ellipse cx="320.6" cy="359.8" rx="6.9" ry="3.2"/><ellipse cx="294.2" cy="365.5" rx="8.1" ry="3.8"/><ellipse cx="325.8" cy="353.8" rx="8.5" ry="4.0"/><ellipse cx="308.5" cy="352.3" rx="5.5" ry="2.6"/><ellipse cx="325.9" cy="367.3" rx="6.1" ry="2.9"/><ellipse cx="335.1" cy="376.1" rx="7.0" ry="3.3"/><ellipse cx="303.3" cy="355.8" rx="7.6" ry="3.5"/><ellipse cx="315.6" cy="366.1" rx="8.1" ry="3.8"/><ellipse cx="316.8" cy="353.2" rx="6.9" ry="3.2"/><ellipse cx="313.5" cy="362.1" rx="7.8" ry="3.6"/><ellipse cx="316.9" cy="370.9" rx="5.7" ry="2.7"/><ellipse cx="315.5" cy="357.9" rx="7.8" ry="3.7"/><ellipse cx="334.4" cy="364.1" rx="6.2" ry="2.9"/><ellipse cx="296.5" cy="368.0" rx="8.0" ry="3.7"/><ellipse cx="302.1" cy="356.3" rx="4.8" ry="2.3"/><ellipse cx="324.6" cy="373.3" rx="7.8" ry="3.7"/><ellipse cx="310.7" cy="378.8" rx="4.6" ry="2.1"/><ellipse cx="329.0" cy="369.5" rx="7.5" ry="3.5"/><ellipse cx="309.7" cy="352.2" rx="5.8" ry="2.7"/></g>
<path d="M295 454 L227 404 L234 400 L307 448Z" fill="#8d8670" opacity=".35"/>
<ellipse cx="305.8" cy="464.9" rx="97.2" ry="49.4" fill="none" stroke="#ffffff" stroke-width="1.800"/>
<path d="M330.8 473.7L372.5 500.5" stroke="#fff" stroke-width="1.800"/>
<path d="M277 466Q257 496 249 531M287 471Q282 506 267 541M317 474Q327 516 317 546M332 471Q352 506 372 526M267 462Q237 486 217 516M342 466Q372 481 392 494M302 476Q299 516 295 548" fill="none" stroke="#7d7763" stroke-width=".9" stroke-dasharray="1.500 1.500" opacity=".45"/>
<path d="M277.0 432.0 282.0 396.0 295.0 382.0 307.0 386.0 295.0 426.0Z" fill="#857e69" opacity=".5"/>
<path d="M277.0 432.0 C271.0 444.0 263.0 454.0 255.0 460.0 C267.0 464.0 281.0 463.0 295.0 457.0 L301.0 438.0ZM293.0 452.0 C303.0 463.0 317.0 472.0 331.0 474.0 C338.0 470.0 340.0 460.0 336.0 450.0 L324.0 432.0 L291.0 438.0ZM321.0 429.0 349.0 426.5 328.0 435.0ZM329.0 438.0 344.0 445.0 330.0 446.0ZM274.0 439.0 282.0 426.0 291.0 409.0 300.0 392.0 308.0 378.0 315.0 368.0 321.0 358.0 327.0 349.0 338.0 347.0 342.0 361.0 338.0 374.0 331.0 388.0 326.0 400.0 322.0 414.0 320.0 426.0 324.0 440.0 317.0 452.0 283.0 450.0Z" fill="#45442a" stroke="#45442a" stroke-width="1.600" stroke-linejoin="round"/>
<path d="M277.0 432.0 C271.0 444.0 263.0 454.0 255.0 460.0 C267.0 464.0 281.0 463.0 295.0 457.0 L301.0 438.0Z" fill="#a19f69"/><path d="M293.0 452.0 C303.0 463.0 317.0 472.0 331.0 474.0 C338.0 470.0 340.0 460.0 336.0 450.0 L324.0 432.0 L291.0 438.0Z" fill="#77754a"/><path d="M321.0 429.0 349.0 426.5 328.0 435.0ZM329.0 438.0 344.0 445.0 330.0 446.0Z" fill="#8f8d5a"/>
<path d="M274.0 439.0 282.0 426.0 291.0 409.0 300.0 392.0 308.0 378.0 315.0 368.0 321.0 358.0 327.0 349.0 338.0 347.0 342.0 361.0 338.0 374.0 331.0 388.0 326.0 400.0 322.0 414.0 320.0 426.0 324.0 440.0 317.0 452.0 283.0 450.0Z" fill="url(#trk)"/>
<path d="M276.5 448.5l5.9 -2.4M287.8 441.0l7.9 -4.8M261.5 456.7l7.3 -4.9M274.5 448.6l4.8 -4.8M267.3 454.1l4.6 -3.6M289.6 439.6l7.3 -3.5M287.6 443.6l4.9 -4.7M275.6 446.8l4.0 -3.5M274.5 448.8l4.6 -3.0M270.5 453.7l4.0 -4.3M286.2 441.5l7.7 -4.1M288.0 441.3l5.5 -3.2M291.0 441.2l5.4 -3.3M269.3 450.4l4.4 -4.5M309.6 468.3l-2.7 -5.1M316.3 448.9l-3.1 -7.8M327.5 465.1l-3.9 -7.7M329.2 458.3l-4.2 -4.2M323.0 455.7l-4.3 -6.6M309.6 445.3l-4.8 -4.5M315.2 452.9l-2.9 -7.0M330.3 450.8l-4.0 -5.2M317.7 454.3l-2.5 -4.6M307.2 467.6l-3.5 -4.9M328.2 469.9l-3.3 -4.6M306.8 446.4l-3.0 -4.4M308.2 450.7l-3.7 -7.5M323.5 454.7l-3.2 -6.1M312.3 452.8l-2.2 -5.1M330.0 447.3l-3.5 -6.5" stroke="#3b3a20" stroke-width="1.400" opacity=".55" fill="none" stroke-linecap="round"/>
<path d="M325.6 365.3L327.3 359.9M310.8 403.7L317.4 392.4M322.8 364.0L325.5 360.2M330.9 363.8L331.3 356.2M320.9 406.8L325.9 396.9M329.4 357.8L329.4 353.4M320.2 394.0L325.9 384.1M326.3 384.7L330.5 377.3M313.0 436.4L315.1 430.0M318.3 381.5L320.3 376.3M324.7 385.1L326.0 379.3M318.4 393.2L320.7 385.9M311.2 383.0L314.6 376.9M335.3 359.5L334.6 349.8M299.7 418.8L306.0 406.4M297.2 411.1L302.7 401.6M307.7 400.7L314.1 391.5M293.8 419.2L297.2 411.0M318.1 378.1L324.1 369.9M310.5 392.4L315.5 381.2M324.5 368.4L327.8 363.5M319.0 415.3L319.9 406.8M303.7 420.1L309.6 410.7M300.7 427.0L305.6 420.7M290.5 427.4L292.5 421.7M337.7 364.9L339.5 355.8M329.7 360.8L332.1 356.0M318.1 372.6L321.8 365.2M307.3 405.7L308.1 398.3M304.0 414.8L307.6 401.8M328.6 358.3L330.7 352.6M327.9 369.1L329.7 364.7M320.2 408.5L321.6 401.9M323.7 362.4L327.4 356.7M319.1 371.2L319.8 366.9M328.2 361.5L331.3 353.6M304.5 408.9L310.7 396.1M312.5 417.3L313.6 410.2M312.3 439.4L312.2 428.4M325.3 359.3L327.1 354.5M340.1 360.4L337.8 353.0M313.0 401.0L316.8 389.5M332.6 371.8L336.9 362.8M317.1 384.7L320.1 378.4M320.5 370.3L323.9 365.7M295.5 417.2L298.4 411.5" stroke="#3b3a20" stroke-width="1.500" opacity=".6" fill="none" stroke-linecap="round"/>
<path d="M308.1 410.9L313.8 401.3M291.1 414.9L293.8 409.6M317.6 375.5L320.0 371.2M316.3 383.1L321.4 376.4M311.8 377.2L315.7 370.4M310.3 386.2L313.7 378.3M292.9 417.0L297.1 411.6M310.3 385.0L314.9 379.7M305.8 390.6L310.9 382.4M324.3 356.0L327.3 351.4M328.1 367.6L329.1 364.1M285.9 429.3L291.4 418.9M325.2 360.2L327.7 353.6M302.5 416.6L305.4 406.0M314.6 384.8L316.8 380.0M287.1 427.4L290.4 421.5M312.2 378.4L313.7 375.2M313.2 376.5L315.3 371.9M322.5 369.8L323.1 366.2M304.7 402.8L307.5 393.7M297.3 425.5L299.2 418.7M307.0 412.5L309.8 406.3M300.9 406.2L307.5 396.3M298.0 404.9L301.9 394.9M299.1 439.0L301.7 432.8M309.9 402.8L311.9 395.2M290.7 438.1L295.0 430.8M294.1 431.9L295.7 426.0M288.8 427.1L294.3 419.4M291.8 430.2L297.3 421.4" stroke="#c4c38c" stroke-width="1.300" opacity=".75" fill="none" stroke-linecap="round"/>
<path d="M293.0 345.0 C267.0 353.0 235.0 350.0 215.0 332.0" fill="none" stroke="#4d4b2b" stroke-width="4.8" stroke-linecap="round"/>
<path d="M293.0 345.0 C267.0 353.0 235.0 350.0 215.0 332.0" fill="none" stroke="#97955f" stroke-width="3.6" stroke-linecap="round"/>
<path d="M339.0 366.0 C349.0 348.0 361.0 331.0 373.0 314.0" fill="none" stroke="#4d4b2b" stroke-width="4.6" stroke-linecap="round"/>
<path d="M339.0 366.0 C349.0 348.0 361.0 331.0 373.0 314.0" fill="none" stroke="#97955f" stroke-width="3.4" stroke-linecap="round"/>
<path d="M327.0 352.0 C319.0 326.0 311.0 296.0 303.0 256.0" fill="none" stroke="#4d4b2b" stroke-width="4.8" stroke-linecap="round"/>
<path d="M327.0 352.0 C319.0 326.0 311.0 296.0 303.0 256.0" fill="none" stroke="#97955f" stroke-width="3.6" stroke-linecap="round"/>
<path d="M355.0 340.0 C367.0 334.0 377.0 338.0 385.0 348.0" fill="none" stroke="#4d4b2b" stroke-width="2.5999999999999996" stroke-linecap="round"/>
<path d="M355.0 340.0 C367.0 334.0 377.0 338.0 385.0 348.0" fill="none" stroke="#97955f" stroke-width="1.4" stroke-linecap="round"/>
<path d="M215.0 332.0 C203.0 323.0 187.0 317.0 173.0 315.0" fill="none" stroke="#4d4b2b" stroke-width="3.2" stroke-linecap="round"/>
<path d="M215.0 332.0 C203.0 323.0 187.0 317.0 173.0 315.0" fill="none" stroke="#97955f" stroke-width="2.0" stroke-linecap="round"/>
<path d="M307.0 371.0 C299.0 358.0 295.0 352.0 293.0 345.0" fill="none" stroke="#4d4b2b" stroke-width="5.2" stroke-linecap="round"/>
<path d="M307.0 371.0 C299.0 358.0 295.0 352.0 293.0 345.0" fill="none" stroke="#97955f" stroke-width="4.0" stroke-linecap="round"/>
<path d="M313 54L316 18M317 48L319 23M311 52L313 31M325 76.5L340 65.5M341 117L373 96.5M317 246L387 161M267 156L239 128M347 246L427 176M362 281L465 244M267 296L189 326M372 314L402 266M303 256L295 206M278 66L283 88" stroke="#3d4326" stroke-width=".8" opacity=".75" fill="none"/>
<path d="M266.0 435.0l-7 10" stroke="#8c929b" stroke-width="2.200" opacity=".75"/><path d="M264.5 430.0l5 -6l8 -1.500l1 9l-7 4z" fill="#5f92d4" opacity=".92"/><path d="M269.5 424.0l8 -1.500l1 9z" fill="#7fb0ea" opacity=".9"/><circle cx="267.0" cy="434.0" r="2.200" fill="#c9ecff"/>
<g><path fill="#0e1a08" d="M272 44l-5-2l-5-1l5-5l6 0zM270 40l2 7l-2 3l-5-4l-1-4zM268 38l3-6l7-1l0 3l-2 7zM282 37l-9 7l-8-3l2-4l9-4zM276 73l0-4l0-5l7 2l4 3l-7 4zM290 67l-8 2l-5-2l2-5l5-4zM273 69l8-1l5 3l-7 3l-5 1zM289 67l-2 4l-5 4l-3-3l-1-7l6 0zM313 51l-6 0l-5-6l7 0zM351 72l-4 0l-6-4l5-2l8 1zM352 65l0 2l1 6l-6-2l-7-2l7-5zM269 75l5 6l4 5l-9 0l-6-3zM270 100l-5-7l2-7l7 4zM295 121l0-9l5-5l5 4l0 7zM296 114l2-6l2-4l4 5l-1 5zM301 99l9 3l1 8l-9-3zM301 86l6 4l2 6l-7 0l-8-2zM312 81l6 6l-3 6l-6-3l-4-6zM318 98l6-1l7 2l-6 4l-4 2zM321 95l3 3l4 6l-8 0l-5-4zM328 100l-5 0l-6-4l4-3l8 0zM321 94l3 3l3 3l-6 1l-4-3zM317 111l-2 5l1 4l-7-1l-5-2l5-4zM318 101l5-4l5-3l2 6l-3 5zM279 106l9 1l4 3l-4 4l-4 1l-3-3zM328 80l-2 6l-2 7l-5-4l-4-6l5-2zM308 87l-3 6l-10 1l4-5zM310 108l-7 0l-4-6l8 0zM319 99l8 4l-1 5l-6-3zM265 130l-8 5l-5-6l6-2zM255 136l7-4l5 1l-7 5zM271 123l1 8l-6 7l-5-7zM262 133l-5-5l2-9l6 4l1 7zM250 112l6 3l3 3l-3 4l-7 2l-1-6zM246 119l9-1l4 0l-1 9l-7 2zM352 130l7 5l3 4l-5 2l-5 2l-1-6zM342 145l-6-3l0-9l6 4zM336 145l-8-1l-6-6l10-1l8 2zM318 133l4-3l8-2l-3 7l-8 3zM311 142l-4 0l-8-3l4-3l6-6l1 7zM280 147l-1 4l-5 3l-3-4l3-7zM288 153l-10 0l-6-5l6-2l9-1zM276 155l-3-2l-5-4l6-2l6 3zM278 135l-1-7l8-2l-2 7zM329 160l-6-4l-5-2l6-4l8-1zM328 155l-5-2l-2-7l6 0l4 4zM293 146l-2 6l-7 1l1-5zM349 146l0-5l4-6l2 5l1 6zM328 130l-7 2l-4-3l2-4l6-4l1 6zM323 134l-5-2l-2-3l7-3l5 2l-2 3zM325 153l0-4l1-5l4 2l5 3l-4 2zM358 145l-11 0l-4-9l9 1zM327 150l-5 4l-9-1l7-6zM350 125l1 7l-9 5l-1-9zM369 143l9-4l7 4l-6 3l-5 2zM368 144l7-6l8 2l-4 7l-8 3zM367 142l8 5l1 6l-7 0l-4-5zM400 135l-5 7l-9-1l2-6l5-6zM380 166l1-4l4-4l2 2l5 4l-6 2zM194 171l-7 4l-6-2l1-4l6-4zM210 178l-2 6l-6 5l-1-6zM199 191l-1-6l3-5l6 5l1 5zM191 179l8 0l8 0l-6 6l-7 1zM194 197l3-8l9 0l-1 5zM217 201l2-7l5-4l3 5l3 3l-5 3zM223 183l4 8l1 5l-10-2l-3-5l5-3zM208 209l-5-6l4-6l4 5zM210 192l10 1l0 12l-8-5zM241 197l4-5l2-3l4 4l0 8zM241 184l-8-2l-2-7l8 0l8 2zM240 193l7-2l4 5l-8 2zM276 201l-2-4l2-6l3 3l6 2zM274 191l7 4l1 5l-5 2l-7 1l1-7zM264 206l-10 0l-7-3l2-3l9-7l2 8zM308 184l-7 3l-6 2l2-8l7-2zM376 174l-3 3l-9 3l1-6l3-4zM332 161l4-3l4-4l4 5l3 5l-7-1zM356 193l-8-3l-4-6l10-2l7 3zM347 177l5 3l6 6l-5 1l-8 3l1-6zM335 200l3-2l5-1l1 6l-2 4l-4-2zM338 201l10 0l-1 7l-7-2zM348 204l-8 3l-4-1l3-5l7 0zM343 162l-5 2l-5-1l1-6l10-3zM354 166l2 9l-3 8l-9-9zM357 168l5 3l7 5l-6 4l-11-2zM346 173l8-2l4 6l-7 1zM301 197l0 8l-4 4l-5-2l-2-5l6-3zM294 205l4-2l2-5l6 3l1 6l-5 1zM320 152l6-8l8 3l-5 4zM294 203l-3-5l6-3l1 3zM290 207l-1-5l-1-6l7 0l7 6l-4 2zM302 152l-2-7l6-2l1 5zM290 139l7-2l7 2l-2 6l-8 5zM299 165l-6-2l0-8l6 3l5 2zM304 163l8 2l6 2l-6 4l-4 2l-3-5zM356 179l4 3l2 4l-5 1l-6-2l2-2zM300 187l-2 6l-4 4l-4-3l-1-6zM302 198l-5 4l-10 2l3-7l2-3zM329 154l-5-4l2-6l5 1l4 7zM330 138l7 3l3 3l-8 3l-5 0l2-5zM339 187l-3-6l-3-4l8-2l6-1l-1 6zM289 178l8-4l4 2l-2 5l-6 0zM314 162l4-4l7-6l3 9l-1 4zM313 159l8 0l9 6l-10 5zM341 162l-3 3l-2 5l-5-5l0-6l5 2zM283 154l-3 6l-6 0l2-5zM331 150l5-4l5 1l-1 5l-6 1zM337 153l-7-3l-3-7l9 1l6 1zM339 152l2 3l3 6l-7 4l-7 0l3-7zM326 164l3-7l10-2l-2 7zM318 197l-9-5l-3-4l10-2l6 7zM308 193l6 0l7 3l-5 5l-8-2zM273 165l-2 5l-5 4l-1-5l1-6zM324 173l0 3l-3 4l-5-1l0-5zM295 150l8 0l3 6l-6 4l-7-2zM289 171l-3 7l-8 3l1-5l1-7zM351 169l-4-2l-4-5l6-2l4 0zM404 151l8-5l8 4l-5 5zM402 146l11 4l3 9l-12-3zM408 157l-3-4l2-5l6 1l2 3zM417 190l8-6l7-2l-2 9l-6 3zM424 191l-2-3l0-5l5 1l2 1l-3 4zM422 173l10 3l2 6l-8-2zM424 177l2 5l-5 6l-4-4l-1-6zM427 183l1-7l3-3l4 5l-3 6zM446 189l-6 6l-8-1l6-6zM418 164l6-4l6-1l-2 9l-7 0zM443 159l-1 6l-6 5l-4-5l-5-4l10-1zM429 187l6 5l-3 6l-6-4zM458 177l-6-2l-3-7l7 3l5 1zM343 226l-9 3l-6 1l4-7l5-7l2 6zM334 227l-3-4l6-6l3 7zM360 240l5-3l5-2l0 8l-6 3zM397 206l6 5l-2 5l-6-4zM307 180l7 3l6 3l-6 3l-5 3l-3-5zM397 246l-8-1l-5 0l4-4l2-5l5 6zM387 246l-2-4l0-9l6 2l5 1l-4 7zM375 199l6-2l8 4l-8 3zM372 246l-7 1l-4-5l7-1zM369 239l3 3l4 4l-8 1l-5-4zM270 212l-2 3l-8 4l2-5l1-7zM402 220l4 4l-3 11l-4-5l-5-5zM264 221l0-2l7-5l1 5l-2 5zM371 240l9 0l3 5l-8-1zM340 254l1 5l-1 5l-5-3l-5-2l4-3zM331 257l11 1l4 5l-9 1l-6 0zM341 251l5 5l-2 5l-6-4zM330 238l6-5l10-2l-3 7l-7 5zM337 242l-6-3l0-6l6 3zM318 210l-3 8l-12 0l8-6zM413 239l4-2l7 2l-3 3l-1 5l-4-4zM424 232l-4 9l-9-1l6-7zM347 219l-6-1l-3-4l6-1l4 3zM343 214l4 5l-4 6l-5-3l-5-4l5-3zM374 225l-7 4l-8-1l4-4l5-2zM366 219l5 4l-4 8l-4-7zM322 242l4 6l-6 7l-1-6zM323 253l3-5l4-2l3 3l-2 7zM306 188l-2 6l-7 4l-2-8zM283 223l4-3l5-6l5 9l-3 5l-4-1zM291 214l-6 2l-4-1l1-4l7-3zM410 212l-9-3l-4-5l7-1l6 2zM406 204l0 5l-3 2l-3-2l-4-3l4-2zM415 229l3-1l10 1l-1 3l-6 8l-4-5zM417 238l-5-6l5-7l5 4l3 5zM314 214l0-4l3-4l3 2l6 2l-7 4zM308 256l-5-1l-6-4l8-5l6 0l-1 4zM364 220l-7 6l-9-5l5-4zM345 202l1 4l0 4l-4-1l-6-4l4-2zM335 185l3-7l8-4l-1 6l-3 6zM352 256l-1-6l2-6l6 3l0 6zM351 240l6 4l-3 7l-5-5zM425 235l5 0l6 6l-10 0zM425 231l7-2l7 3l-6 4l-6 2zM393 239l1 6l1 8l-7-2l-7-5zM392 249l-3-5l-2-5l5 1l6 2zM332 256l-4-3l-3-9l7 1l7 6zM341 228l3-3l9-3l-2 5l-1 5l-5-1zM359 218l2 5l2 4l-6-1l-6-2l4-3zM299 215l5 7l-1 3l-6 2l-6-7zM296 210l4 2l7 4l-7 1l-4 4l-2-5zM285 217l5 4l5 1l-6 4l-6 1zM359 199l2-3l6-6l0 7l0 5zM295 224l6 4l-3 7l-4-4zM283 223l10 2l1 4l-3 2l-8-3zM379 211l-4 8l-5 1l-3-7l3-5zM351 225l-1-6l-1-5l9 4l1 5zM298 220l-5-1l-10 0l2-4l8-6l3 3zM293 221l-7-6l1-6l10 5l2 7zM376 237l-7 0l-4-6l5-3l5 2zM429 239l-6 6l-9-2l4-7zM418 236l5-2l4 0l1 7l-4 3l-3-3zM425 217l-6-2l-3-7l10 2zM293 203l8 3l4 6l-7 1l-8-2zM365 244l1-5l7-1l-4 6zM361 202l-2-8l10-3l0 7zM370 195l-7 1l-7-4l7-5l8-1zM299 194l-6 2l-7-3l5-3l7 0zM268 202l4 3l4 3l-7 4l-6-3zM351 199l-8-8l-1-4l10 0l8 5zM353 200l-7-2l-5-1l4-5l8-1l-1 4zM273 208l6 2l3 4l-5 3l-6-4zM368 195l-1-5l1-3l3 1l3 2l-3 4zM305 190l-3 7l-6 5l0-8zM314 199l-1-5l-1-8l6 3l9 2l-7 6zM377 255l0-6l3-4l3 4l3 6zM374 191l-4 1l-7-3l5-3l7 2zM367 184l5 1l7 2l-5 5l-4 1l-3-5zM375 195l-3-5l-4-2l4-4l11 1l-3 5zM284 207l-5 2l-6 3l2-7l3-4zM274 213l1-7l7-4l0 7l-4 4zM393 190l4 6l-3 3l-3-4zM381 212l-1 5l-4 9l-5-7l0-8zM327 263l-9 1l-7-1l0-4l4-7l4 4zM348 216l1-9l6-7l3 12zM398 219l3-7l9-1l-1 8zM442 213l0 3l1 5l-5 1l-4 0l1-6zM416 199l0 4l0 7l-9-6l-3-4zM417 205l-9-1l-4-3l5-4l7 2zM410 232l-2-6l6-4l3 7zM421 224l-3 9l-8-2l5-6zM409 220l-6 3l-4 1l-1-5l-2-7l9 4zM401 206l7-4l6 1l-3 4l-6 2zM430 220l-3-4l5-6l3 7zM427 223l3 2l2 8l-6-2l-4-4zM432 226l-3 3l-11 1l2-5l4-6zM414 212l10-2l8 3l-11 5zM429 211l-2 7l-8 2l3-8zM395 227l1-6l5-4l2 7zM273 228l0-3l2-5l6 6l-4 3zM315 242l-6 2l-7-6l6-2zM268 229l7 0l5 1l-4 5l-9 0zM288 234l-6-1l-3-3l2-3l7 0zM271 236l3-5l7-4l0 7l-3 5zM298 232l-5 4l-4 1l-2-6l0-3l4 1zM301 244l-7 1l-7-4l10-3zM291 250l1-7l6-3l2 6l2 4zM312 202l-6 7l-1 4l-7-4l-2-5l7-2zM292 204l4-3l11 0l-4 8l-5 4zM296 237l2 3l0 5l-7-1l-3-4zM280 219l-6 5l-3 2l-3-5l0-7zM304 238l-5-1l-6-3l4-2l5-5l3 5zM303 253l-6 4l-6-7l6-1zM286 251l2-6l5-3l4 8l-1 5zM271 234l5 2l6 3l-1 3l-5 6l-5-7zM276 232l4 8l-5 2l-2-4zM297 238l3 11l-4 4l-3-3l-6-8zM286 246l9-5l10 0l-6 5l-6 5zM315 250l4-4l7 2l-6 6zM303 215l-4-7l7-10l5 8zM306 198l5 1l5 4l-4 3l-12-1zM269 222l7 8l-6 7l-5-9zM289 243l11-5l6 2l-2 8l-6 4zM280 227l-5 3l-8-4l3-3l6-2zM281 217l3 9l-8 6l-3-4l1-10zM456 239l8 0l3 5l-5 1l-4 1zM466 234l1 5l-7 4l-4-4l3-7zM460 248l-3-6l-1-4l4 1l7 3l-4 2zM439 251l-7 4l-9 2l4-9l4-6zM423 248l7-2l8 1l-6 6l-8 2zM228 272l7-2l8 0l-5 6l-5 2zM222 286l7 3l3 9l-11-4zM218 285l-6-7l1-6l9 4zM217 258l-7-6l0-7l8 2l6 4zM236 262l9 3l0 6l-8-3zM224 262l0-9l12-4l-3 8zM219 285l-2 4l-3 3l-3-4l0-5zM249 282l-10 1l-5-7l9-2zM251 277l-8 4l-8-3l7-5zM227 262l7 1l6 1l-6 7l-8 1zM203 259l8 2l2 6l-7 1l-5-5zM264 266l1 5l0 3l-7-2l-4-2l4-3zM274 263l4 8l-7 5l-2-6zM274 251l-7 2l-2 1l-3-5l3-5l3 3zM273 244l1 5l-4 4l-4-3l2-6zM280 276l-4-6l4-6l5 5zM243 258l9 3l4 3l-10 3l-4-4zM255 267l-8 0l-5-5l10 1zM274 244l4-5l9 2l-4 4l-3 2zM264 237l12-1l6 6l-8 1l-9-1zM281 246l-6-4l-3-1l1-4l6-3l1 6zM306 289l2 9l2 4l-10-2l-6-5l7-2zM312 273l-5 0l-8-3l7-6l11 4zM259 267l-1 5l-8 2l3-7zM252 266l8 5l1 7l-10-2l-8-3zM370 315l1-8l6-3l0 7zM296 306l-13-2l-5-4l11-5l8 5zM310 296l-4 5l-7 3l-1-8l7-4zM274 259l5-9l9-1l-6 9zM308 256l1 7l-4 4l-3-3l0-6zM291 241l5 7l-4 4l-5-7zM362 249l3-9l9 4l-4 6zM390 242l6 3l2 10l-7-2l-5-6zM402 245l-4 6l-5 5l0-7zM385 290l7-2l6 2l-4 5l-4 3l-4-5zM384 295l0-5l2-4l4 2l2 5zM398 296l-7 0l-6-2l6-4l3-3l4 5zM357 280l-10-1l-8-5l11-1zM348 274l1 5l0 5l-7-2l-3-4l6-1zM340 273l7-1l9 5l-5 1l-9 3zM372 262l2 6l-9 6l-3-8l5-6zM396 283l-7 7l-10 0l3-6l9-4zM386 281l8 5l-2 8l-6-6zM399 284l-5 4l-6-1l4-5zM316 245l3-5l3-4l4 6l-1 6zM430 292l-9 2l-4-7l8-1zM314 282l-6-2l-3-5l3-2l10-2zM409 291l-9-2l-1-10l10 4zM402 292l11 5l2 3l-6 4l-9-5zM396 299l5-5l4-1l3 6l-2 3zM309 309l3-5l6-3l0 5l-2 7zM312 311l4-6l6 0l0 5l-5 4zM282 300l1-2l9-2l-2 5l-1 4zM306 294l11-1l4 6l-7 3l-8-2zM301 264l11 1l1 9l-8-4zM418 296l-9-3l1-9l8 5zM319 303l-3 4l-3 4l-5-6l1-5l4 1zM327 302l-3 7l-10 1l2-6zM286 283l8-3l9 5l-10 5zM403 262l7 2l4 2l-3 5l-4 1l-3-3zM278 294l-5 7l-8 1l2-6zM276 303l-5 4l-5 4l-1-6l3-4zM271 291l1 6l-1 8l-5-8zM352 266l-8-5l2-6l7 5zM323 314l-4 4l-5 0l1-4l2-6zM407 281l-2 4l-8-1l3-3l3-4zM350 303l2 4l2 6l-10-2l-4-3zM341 291l-4 3l-7-1l1-5l4-4zM361 254l-5-4l2-8l6 4l1 5zM355 307l6-5l5-2l1 7l-7 3zM360 308l0 5l-2 5l-7-4l0-3l6-3zM359 258l6-5l7-5l0 9l-5 5zM288 250l6-1l10 0l-3 5l-6 5zM294 260l-2-7l3-8l5 5l1 10zM269 258l1 8l-5 3l-3-5l1-5zM259 269l6-2l5-3l1 7l-1 4l-6-2zM251 286l7-4l6 3l-7 4zM359 248l-2-7l4-6l2 5l3 4zM367 241l-2 9l-6 3l-2-7l0-3zM310 285l-1 6l-10 4l-1-5l3-6zM304 291l-5-3l-3-6l6 0l5 3zM318 305l1-6l6-2l0 5l-2 6zM316 302l1-5l0-4l7 3l2 4zM302 312l-5 1l-2 1l-2-4l0-5l4 3zM418 255l-6 4l-11-3l8-5zM299 304l-5 5l-7-2l7-4zM389 273l-3 1l-7-3l4-2l3-3l3 2zM387 271l4-7l8-2l-3 8l-4 6zM301 251l3 6l-3 7l-6-5l-3-3zM342 292l-1 7l-12 2l5-7zM360 272l-5-2l-1-4l8 1zM358 262l5 3l3 6l-5 0l-4 0l-2-6zM404 281l-2-7l-1-6l10 4l5 6l-9 1zM286 289l-3 3l-8 0l0-5l4-3zM270 289l6-1l5-2l-3 8l-6 1zM314 253l0 9l-5 4l-2-4l-4-5zM310 251l-1 6l-10 1l4-5zM260 279l6 3l4 4l-5 2l-7 1l-1-5zM259 289l-3-6l1-6l7 3l2 7zM357 287l-2 6l-4 2l-2-2l-3-3l5-3zM403 273l-11-1l-3-6l9-2l8 1zM406 275l-10 0l-7 1l4-7l6-5l4 7zM403 254l-4 7l-6-1l4-4zM378 281l10 3l1 7l-10-1l-7-3zM379 289l5-7l5 3l-4 3zM338 267l-1-8l0-6l9 6l0 6zM348 261l-6 3l-5 4l-3-7l5-4zM391 280l-6-1l-5-2l5-5l10 2zM326 278l-4 3l-5 5l-3-8l3-5zM354 294l3 8l-7 1l-1-6zM320 303l-2 8l0 4l-8-2l-3-4l6-5zM316 299l7 5l0 7l-9-3zM353 250l10 3l0 9l-7-4zM260 295l3-5l8-4l1 6l-1 6zM278 295l-5 0l-6-2l4-3l6-1zM395 275l-7 3l-7 1l3-7l4-1zM381 272l5 5l-2 8l-4-5l-4-6zM353 291l-6-5l-4-6l7 0l8 0l-3 6zM387 271l2 2l1 7l-5-1l-7-3zM409 258l5-4l7-3l2 6l-1 7l-6-2zM411 259l7 2l4 2l-5 3l-6 2zM402 257l5-4l3-5l3 7l2 7l-6-2zM329 269l-6 3l-4-4l5-3zM269 301l8 4l0 4l-7-2zM268 258l3-3l9 1l-3 6l-5 5zM273 257l-2 7l-4 3l-3-7l3-6zM285 267l2-6l3-6l6 5l0 5zM371 289l9-2l6 4l-5 3l-9-1zM412 295l-2-7l10-7l0 8zM378 313l-5 3l-7-1l1-3l2-4l6 3zM402 318l6-3l5 0l-3 6l-5 2zM390 261l5 3l4 5l-7 2l-8-1zM375 305l6-3l7 1l-7 6zM376 309l5-3l9 0l-5 8l-8 0zM397 291l-10-5l-3-3l10-2l4 3zM429 291l7 4l0 3l-7 0l-6-4zM405 298l6 0l5 1l0 2l-3 5l-4-3zM155 309l-3-6l0-5l7 3l0 5zM192 326l-6-7l4-6l7 4l3 4zM168 361l-7-2l-5-1l4-6l5-1zM162 360l-3-5l-4-6l7 0l5 4zM146 312l2-6l9-3l1 6zM176 306l9-4l5 3l-5 6zM173 333l4-3l5-2l0 5l-2 4zM171 317l2-6l4-6l3 6l5 6l-8-1zM183 315l-2 3l-2 3l-4-3l2-6zM151 308l9-3l4 4l-8 3zM169 295l4 6l-4 5l-4-6zM166 337l7 0l4 4l-6 4l-7-1zM173 320l9-2l5 8l-9 0zM133 320l9-1l4 7l-7-1zM187 306l1 6l-1 3l-6-1l-3-4zM145 307l6-6l12 2l-5 6zM148 334l-2 4l-8 4l-1-5l3-5zM172 342l5-1l4 0l0 5l-6 1zM169 338l7 0l9 3l-7 6l-6 0zM180 309l-1 6l-3 4l-4-7l1-4zM175 351l10-6l6 6l-6 1zM140 335l13-3l6 3l-10 4zM143 325l7 3l5 5l-7 4l-9 1zM148 317l-6-4l1-9l8 4l3 3zM148 299l4 1l6 4l-8 5l-6-1l0-4zM157 312l-5-3l-4-3l5-2l5 0zM141 330l-5-6l5-5l5 4zM189 330l3 5l3 4l-8 3l-7-3l2-4zM145 309l-6 3l-8 0l6-7zM160 312l-3 1l-6-1l4-6l4-1zM147 315l5-2l6 2l-6 3zM155 321l0-7l9-2l2 4l-4 8zM127 292l7 1l5 8l-11 0l-8-3zM149 300l2 4l2 5l-7-2l-2-4zM115 300l6 3l4 4l-6 3l-7-2zM119 314l0-10l4-3l4 2l3 7zM147 314l-6 5l-10 2l4-6l2-6l5 4zM216 354l4-5l6 0l-1 5l-4 5zM220 357l3-7l3-1l3 3l0 5l-6-1zM213 318l2 5l-2 6l-9-5l-1-6zM214 355l3 5l-4 4l-3-3l-3-6zM228 313l-2-5l3-5l5 7zM219 305l7-1l5 6l-8 0l-8-1zM220 335l1 5l-1 5l-8-4l-1-6zM225 333l0-6l9-2l0 5zM182 320l3-4l6-4l1 7l-1 3zM185 325l3-3l5 0l-1 4l-3 3zM279 331l1 5l-7 3l0-5zM257 338l6-4l6-2l0 5l-1 5l-3-1zM264 335l4 8l1 5l-9-2l-2-7zM272 330l-2-4l1-5l5 3l3 3zM269 319l9 0l6 8l-12-1zM286 327l9-3l8 0l-6 9l-9 1zM294 320l5 9l-5 5l-6-3l0-10zM296 319l5 6l2 6l-10-1l-1-7zM261 340l1-4l-3-5l8 1l3 2l-2 4zM264 339l4-4l3-7l4 5l3 6l-6 1zM289 307l4-6l6-1l1 4l-5 5zM305 299l-6 3l-9 2l3-7l6-5zM296 303l-1 4l-4 8l-7-9l2-5zM293 312l-7-3l-3-5l8-2l6 3zM294 304l-7 3l-4-3l7-2zM276 338l-5-5l1-4l6 0l4-2l-1 7zM293 308l5-7l6-4l4 8l-2 5l-7-1zM264 322l4-3l4-2l3 5l-2 7zM291 323l-6 3l-5 0l4-7l3-2zM271 328l2-5l5-7l3 9l-1 8zM272 313l5 3l2 8l-7-1l-5-2zM297 286l6 1l7 8l-9 1l-5 0l-1-6zM284 341l-3-6l5-4l3 6zM251 314l2 6l2 5l-5 0l-7 2l1-7zM272 321l-2 3l-6 3l0-3l-1-6l5 2zM271 287l6 1l3 2l-5 4l-2 2l-2-5zM262 320l-6-1l-7-5l7 0l8 2zM282 323l5-2l6-1l-1 5l-6 2zM264 290l-8 3l-7-5l7-2zM269 344l-8 0l-6-4l7-4l3-1zM305 327l3 7l-2 6l-7-5l-2-6zM297 322l5 3l-3 7l-3-5zM284 297l3 4l2 2l-5 2l-4 1l1-6zM254 315l3-2l4-4l1 6l0 5l-5-2zM348 301l5 3l4 6l-9 2l-6-3zM343 314l8-6l8 2l-9 6zM352 351l-7-3l-3-3l6-3l4-1l2 6zM289 354l5 4l5 7l-10-2l-4-6zM303 359l-2 6l-6 2l0-5l0-5zM298 321l8-5l9 5l-8 4zM360 309l-6 0l-4-3l6-3l7 2zM376 325l-3 7l-2 2l-4-3l-3-6l7 0zM355 318l9 1l5 4l-4 5l-6-1l-1-3zM291 309l-1-6l6-5l0 6zM353 341l-3 1l-7 1l2-3l3-6l3 4zM304 297l2 4l1 6l-6-4l-5-1zM323 336l3 6l1 7l-7-1l-6-8zM288 368l-2-6l7-8l2 7zM337 297l-1 4l-3 3l-5-3l-1-5l7 0zM318 356l-4-4l-2-9l8 2l5 6zM334 303l3-3l6-1l-1 4l-3 3zM375 339l-2 6l-6 4l1-8zM362 316l-3 3l-7 1l2-5l7-3zM367 321l-7-4l0-7l7 2zM323 352l-6 1l-5-1l3-4l6-1zM308 297l6 5l3 1l-6 5l-4 1l-1-6zM339 312l4 7l3 2l-6 3l-8-1l2-5zM278 344l9 0l2 11l-10-3zM335 319l1-8l2-5l6 6l-5 7zM301 352l-7-4l-2-5l3 0l7-2zM302 344l-1-4l3-4l3 2l2 2l-4 3zM297 344l3-3l5-7l2 6l3 8l-7-1zM321 323l1-6l6-3l1 7l-2 4zM292 322l-5 2l-10-2l4-5l7-5zM302 292l7 4l4 5l-6 1l-6 1l1-5zM297 333l-2-4l2-4l3 1l4 2l-3 4zM354 339l-6 5l-8-2l6-5zM299 341l0 5l0 5l-5-2l-4-5zM338 329l8-3l6 4l-7 3zM283 362l-1-8l5-5l4 4l0 5zM282 351l6 4l1 4l-5-1l-6 0l3-4zM359 341l5-3l6-1l-2 6l-3 4zM302 371l1-5l-1-5l8 4l7 2l-10 4zM302 359l3 3l1 6l-5-1l-6 1l4-6zM386 333l-6 2l-6-1l3-4l3-3l3 2zM331 329l0-7l8-2l1 6zM329 300l-2-6l0-5l7 4l1 5zM305 319l-7 3l-7-3l4-4l6-2zM322 334l9 1l3 8l-8 0zM316 317l8 1l5 7l-10 1zM320 364l10 0l4 8l-9-2zM358 324l-2-6l6-6l3 4l-2 7zM369 316l-4 5l-8-1l0-3l4-6l5 2zM319 353l6-2l7 1l-5 5l-5 1zM334 319l8 0l7 5l-11 2zM326 294l3-2l8 2l-1 4l-7 3zM334 303l-6-1l-3-10l10 5zM330 293l8 3l-1 7l-9-5zM384 342l3 6l-4 4l-5-4l1-6zM374 351l2-7l3-4l6 4l1 4l-6 2zM393 327l0 6l-1 4l-4-3l-3-4l3 0zM397 328l-2 5l-8 2l2-5zM365 330l-8 5l-6-1l1-5l5-6zM363 333l-8 4l-4 0l2-7l4-2zM392 336l4 3l2 4l-7 3l-5-1l1-5zM345 316l4 7l-3 5l-4-3l-3-8zM377 320l5 4l4 4l-6 3l-7-4zM395 329l-4-6l1-6l6 4l5 6zM355 336l5 4l-3 6l-4-1l-4-5zM379 333l7 1l4 2l-4 5l-9-2zM380 330l-6 3l-6-1l2-3l1-4l5 3zM340 392l1 7l-9 6l-2-8l0-4zM363 391l1-5l6-6l2 6l-3 6zM361 384l-8 1l-9-1l4-8l8-5l1 7zM348 374l6 0l3 4l-6 3l-5-4zM368 376l-4 0l-4-4l3-3l8 0zM351 395l-4 0l-5-2l3-3l5-2l0 3zM332 387l5-2l6 2l-4 3zM357 369l-8 5l-9 2l2-9l6-4zM336 384l5-6l8-1l-1 4l-7 5zM349 374l-2 6l-10 1l2-7l5-6zM364 379l3 2l3 7l-7-1l-6-5zM360 385l7 2l1 6l-6 0l-4-2zM349 407l-7-3l-5-6l6 0l5 1zM358 388l8 6l1 6l-10-5zM366 362l8 2l8 5l-7 2l-7 4l-2-6zM338 394l-3-5l2-4l3 0l5 2l-2 4zM340 375l7-4l8-3l-3 10l-6 2zM345 369l-8 1l-8-6l9-2l6 0zM383 350l-7 3l-6 1l0-6l4-4l6 3zM381 346l3 6l-2 8l-6-4l-4-8zM247 387l2-4l2-5l4 4l-1 6zM249 372l5-5l8 0l-1 4l-3 5zM335 372l4-7l3-7l4 8l3 5zM346 369l-4 5l-4 3l-1-7l6-6zM314 365l3-3l5-1l3 4l1 3l-8 1zM317 372l-6 1l-6-5l4-1l7-1z"/><path fill="#13230b" d="M271 40l-4 4l-6 2l0-6l-1-4l6 0zM262 35l7-2l6 6l-7 2l-7 2zM277 44l0 5l-6 2l0-4zM279 44l-7-3l-6-5l4-2l10-4l0 8zM314 49l1 6l1 6l-10-3l0-6zM362 67l-4 3l-9 0l1-5l4-5zM362 57l4 6l1 2l-6 0l-3-1l3-3zM347 62l8 5l1 3l-5 2l-6 0l1-5zM273 87l-5 5l-8-1l7-5zM275 96l-4 0l-6-2l4-4l5-2l2 2zM298 103l5 2l4 8l-7 0l-5-2zM317 106l-3-6l7-3l0 5zM304 110l7-10l8-2l-3 9zM295 88l4-1l7 0l-3 4l-6 3zM332 86l-5 5l-6-1l5-6zM318 81l-1 7l0 4l-6-2l-5-2l6-4zM284 91l9 2l2 6l-5 2l-5 1l-2-5zM321 93l4 4l-4 7l-5-4zM304 103l4 1l4 0l-4 5l-3 3l-3-5zM317 116l-2 5l-2 2l-3-4l-2-7l5 3zM313 118l-4-3l-1-5l8-1l6 4zM283 105l7 1l3 9l-5-1l-7-4zM293 111l2 4l-1 5l-6-2l-4-5zM337 87l-10 0l-4-8l10 2zM308 90l-4 4l-3 4l-4-7l0-4zM306 101l5 3l3 6l-6 2l-7-1zM296 105l7-2l4-1l-1 6l-2 4l-4-4zM333 101l-4 3l-6 3l-1-7l1-4l6 3zM279 95l8-1l8 5l-9 4zM259 125l-6 1l-4-3l4-4l3-1l3 4zM315 125l-4 5l-5 5l-2-9l4-6zM287 123l2 6l0 8l-4-1l-9-5zM340 129l-1 8l-8 3l2-8zM279 138l-1 5l-2 4l-3-2l-3-4l3-1zM323 139l-5-1l-8-6l7-3l7-2zM317 134l8-1l6 1l-4 5l-5 1zM351 129l3 5l-4 5l-4-4zM307 134l5 5l1 4l-9-1l-5-2zM305 156l-7 3l-5 0l3-7l6-3zM275 135l-3-3l-2-5l6 0l4-1l-1 6zM285 150l-5 1l-6-1l3-6l10-1zM289 151l-9 2l-4-3l6-7l8 1zM284 139l7 5l-6 10l-7-8zM285 152l0-8l4-5l7 3l-2 7zM302 157l-12 2l-2-7l7-1zM319 129l5-2l6-1l-1 4l-6 6zM308 144l6 6l-3 6l-4-3l-3-7zM314 146l2 6l-2 6l-6-4l-4-5zM322 140l12-1l6 4l-9 5zM345 145l4-4l8 2l-6 3zM316 143l-4-5l0-6l5 3zM355 134l-3 3l-5 0l-1-4l6-3zM384 132l9 1l3 6l-8 3l-6-3zM360 141l10 6l0 5l-9 0zM381 130l7 2l2 6l-5 1l-8-2zM386 156l7 7l-8 8l-3-9zM385 136l-2 5l-4 3l-3-3l0-5zM192 156l5 6l-5 5l-2-6zM200 160l-3 4l-5 2l-2-5l2-4l5 2zM184 156l7-2l9 0l-1 6l-2 5l-10-4zM204 187l0-6l4-6l4 5l0 5zM197 197l3-8l11-1l-6 6zM237 169l3-5l7 0l-2 5l-6 3zM233 161l2 5l-5 4l-3-3l1-5zM252 195l8-4l5 4l-5 3zM254 190l11 1l8 4l-10 4l-5-1zM237 187l8 5l-5 5l-5-4zM241 186l5 2l5 1l-3 5l-5 3l-3-6zM246 198l-6-3l-1-5l7 2l4 4zM249 195l-5-5l3-7l4 3l6 6zM248 182l2 7l-3 5l-5-5l-1-9zM267 196l-5-2l-4-5l5-1l7 3zM268 183l4 3l2 4l-5 2l-8-3l5-3zM261 171l-8 2l-5-7l7 1zM278 204l0-5l4-6l5 3l1 7zM270 200l6-5l8-2l-2 5l-6 6zM270 201l-1 8l-6 4l-2-5l1-9zM272 208l-8 2l-4-2l7-2zM268 215l6-4l9-4l-1 9l-6 3zM253 202l1-3l2-5l6 4l0 5zM260 201l-5 4l-6-1l3-4l5-4zM294 189l3-7l7-3l-1 8zM360 193l-5 3l-7-1l0-5l6-4zM351 162l-3 4l-4 3l-3-3l-5-4l9-1zM352 188l-5-3l-3-6l7 1l5 2zM336 157l1-7l8-4l1 6l-2 3zM279 163l6-2l5 3l-4 4zM314 186l7 0l4 4l-6 3zM297 146l5-2l6 1l-3 5l-3 3zM280 180l-6 2l-8-5l9-4zM283 201l11-2l6 0l-3 7l-7 2zM311 186l-3 4l-4 2l-2-4l2-4zM304 181l2 6l-3 5l-6-2l-2-10zM361 174l5 3l3 3l-7 3l-8-2zM374 178l1 5l3 6l-9-1l-4-4l4-2zM368 176l6 6l0 5l-7-1l-4-6zM295 153l13 1l2 6l-4 2l-11-1zM348 188l11-5l7 3l-9 5zM317 153l-6-5l3-7l6 7zM325 150l-2-4l4-4l2 6zM351 178l-7 4l-9-3l4-4l11-2zM337 154l6-3l9 0l-5 5l-4 4zM330 162l-9 5l-5-2l2-5l6-5zM278 161l2-3l2-4l5 2l4 4l-8 2zM288 163l-4-6l5-8l4 9zM286 159l-4-5l5-8l3 6zM293 152l-2 7l-6-1l3-6zM342 168l-6 1l-6-3l7-4l7 0zM324 163l6-1l10 0l-4 4l-2 5l-6-2zM290 174l-8 1l-6-5l5-2l9-3zM288 161l-8 1l-4-7l6 1zM335 172l-5-3l1-6l7 3zM310 171l3-6l8 0l-4 6zM262 169l6-4l9 6l-7 5zM331 181l-4 5l-7 0l1-3l1-8l7 2zM367 176l-2 5l-8 1l0-5l1-5l5 1zM356 172l4 1l7 4l-5 4l-8 1l-1-4zM293 163l0-5l4-5l4 4l1 5zM277 172l3 0l6 1l-1 3l-5 3zM300 156l3-5l8-1l-2 6zM344 156l8-3l9 3l-9 4zM421 171l8 3l10 2l-9 5l-9 2zM448 189l-3 5l-6 2l-1-3l0-5l5 0zM424 164l-4-3l0-6l6 3zM432 152l-8-2l-5-1l4-5l9 1zM440 165l0 6l-4 4l-4-6l4-6zM453 180l4-6l7-5l1 9l0 6l-7-5zM442 176l7 2l3 5l-6 0l-6-2zM335 223l-1 4l-7 4l-1-6l4-6zM375 239l-6 1l-6-4l5-4l7-1zM403 214l-9-3l-7-2l8-5l6-4l2 9zM407 205l-6 3l-6 1l3-5l3-5zM349 201l-1-7l8-4l-1 6zM355 199l-4-4l-4-6l11-1l6 7zM309 182l3 5l-6 6l-1-7zM394 251l-7-4l-3-4l11 0l6 2zM394 250l-6-3l2-10l6 5zM400 256l-4-3l-7-4l7-4l11-2l-4 6zM323 252l-6-7l7-6l4 7zM375 208l0-7l7-7l2 9zM390 197l-6 8l-6 3l-2-8l9-6zM306 199l5-6l4-2l2 4l2 4l-8 0zM276 232l7 0l8 6l-7 2l-9-2zM383 188l-8 3l-5 1l0-5l1-4l6 2zM389 189l-4 5l-11-1l3-7l8-3zM326 247l3-3l5-3l1 5l-3 5zM318 245l5-4l6 2l-2 3l-3 3zM314 247l8-4l6 1l-3 6l-10 1zM263 214l0-4l3-5l4 6l1 3zM272 209l0 6l-7 0l0-4l2-5zM416 232l5 2l2 4l-4 1l-5 2l0-6zM397 229l-4-5l1-6l7 3l2 6zM405 223l-5 3l-7 2l2-7l6-3zM322 214l-3-8l3-5l5 5l4 5zM262 219l6-4l9 5l-8 3zM331 236l-2 4l-5 3l1-8zM315 223l-2-8l3-8l6 6l5 1l-5 6zM430 206l-2 5l-5 5l-3-5l0-4zM370 195l4 5l-2 7l-7-4l-1-6zM373 198l-4 4l-6 0l2-6l6-1zM306 204l4 7l-4 5l-5-2l-3-6zM365 232l-3-7l-2-7l7 2l8 5zM305 240l-7 1l-4 1l-2-6l1-4l9 4zM297 201l0-8l2-6l5 4l1 5zM354 225l3 7l-6 5l-3-5zM282 215l-1-6l0-3l9 0l6 4l-6 2zM281 220l2-7l7 1l-1 4zM313 202l3 4l1 5l-5-1l-3-4zM276 217l6 0l7 3l-4 2l-6 3zM282 211l9 6l-4 7l-9-5zM421 208l-8 1l-5 1l2-8l1-3l6 5zM427 233l10-3l4 9l-8-1zM406 219l-6-2l-6-6l8-5l10 3zM393 210l6-3l7 5l-4 4l-9 0zM403 209l4 2l4 6l-7 2l-8-3zM334 248l-6 0l-3 1l2-6l3-1zM323 224l-1 9l-10 3l2-7zM316 226l6 1l3 4l-4 2l-5 3l0-5zM313 230l3-3l5-5l2 6l-3 7zM343 219l10 0l4 5l-3 3l-10 0zM340 227l0-6l2-4l5 6l1 3zM354 232l-6-5l-4-4l11 0l5 4zM360 218l0 7l-6 4l-1-8zM296 223l-7 5l-6 2l-1-6l1-7zM389 189l-3 7l-7 3l-1-4l-2-6l9 0zM377 199l1-6l7-2l2 5l-3 6zM378 189l3 6l0 5l-7-2l-3-3zM349 213l-10-5l2-6l8 4zM363 238l1-6l6-7l5 6l-1 7zM354 230l8-2l4 6l-5 1zM425 214l-3 5l-7 1l2-6zM361 195l3-8l9-3l0 8l-4 8zM373 237l-5 1l-7-2l3-4l2-4l5 6zM346 236l-4 9l-6 2l-1-6l3-8zM306 211l-10 4l-7 0l3-7l2-5l7 4zM358 189l4 7l2 3l-6 2l-6-5zM276 211l5 1l7 1l-5 5l-10 4l0-5zM417 205l3-3l6-2l-2 6zM365 208l-1 5l-2 4l-5-3l-2-6zM363 216l-1-3l3-6l4 5l1 3zM275 202l1 7l-8 7l0-10zM296 189l6 3l4 7l-7 1l-7-2zM269 216l5-3l4-1l0 8l-5 4zM367 191l-1-5l2-3l3 0l3 4l-4 2zM368 183l6 2l5 0l-5 6l-2 3l-4-6zM307 193l-5 2l-5 3l-1-5l-1-7l6 3zM312 186l2 5l-3 6l-5-4l-4-6zM374 250l7-4l9 2l-9 6zM357 238l-1 6l-7 4l-1-4l-1-7l5 2zM345 197l-4 7l-8-1l5-6zM352 200l-3 2l-7 3l1-6l3-5l3 2zM395 199l-3-5l0-5l9 3l3 6zM371 195l3-4l8-1l-2 6l-4 4zM368 193l1-5l2-5l6 3l5 2l-8 4zM310 254l5 1l5 1l-1 4l-3 3l-3-3zM368 253l-6-8l4-6l5 4l3 4zM385 206l5-6l7-3l3 7l-2 3zM418 199l-6 1l-6-6l4-2l9 2zM414 199l-7-4l-3-5l7 0l4 1zM418 233l-10-2l-3-4l9-4l5 5zM404 227l-7-4l1-8l7 5zM408 225l-8-3l-2-8l10 4zM419 199l4 6l-3 8l-4-8zM437 213l-5 6l-5 5l-1-6l-2-5l7-1zM396 222l-6 2l-6-2l3-6l3-2l4 4zM296 238l-7 1l-9-4l6-4l6-4zM293 234l-7 0l-6-6l4-2l9-1zM323 246l-6-3l0-5l6 0l6 3zM317 251l0-5l4-6l4 4l1 6zM295 247l0-7l3-3l4 5l1 3zM276 217l0 7l-4 6l-4-6l-5-4l7-2zM281 220l-5 5l-6 2l-2-7l5-5zM304 234l-7-2l-2-2l6-2l7 0zM300 255l-8 2l-4-6l5-2l7-1zM298 237l3 5l-4 7l-4-8zM272 237l8-5l7 2l-8 5zM281 241l-6-1l-8-5l7-2l11 1zM316 249l4 2l5 5l-6 0l-6-2zM268 231l6-4l9-1l-4 8l-8 2zM305 237l5-2l6 3l-5 3l-4 3zM291 250l-5-4l-4-6l6-1l8 2l-3 4zM284 240l8 0l4 8l-7-3zM292 206l-4 7l-10 0l5-6zM325 215l-8-3l-3-4l8 0zM456 241l4-2l5-2l0 5l-4 5zM464 242l-6 1l-5 0l2-3l5-6l2 5zM456 240l5-3l6 4l-5 2l-6 2zM438 249l-2-4l0-7l4 1l5 3zM429 244l2 6l-9 3l0-5zM424 251l4-3l1-1l3 4l-1 4l-2-1zM202 274l9-2l8 0l-2 7l-7 4zM219 272l4 3l1 3l-6 2l-3 0l-1-4zM218 278l2-5l5-4l3 7l-6 6zM222 263l8 1l2 6l-8-1zM228 273l-6-5l-2-5l4 0l8 2l-2 2zM231 257l-3 7l-3 3l-5-5l-1-6l5 1zM217 247l-2 6l0 4l-7-5l-1-4zM241 277l-5-3l-6-5l9-2l7-2l-2 8zM210 279l5-3l4 2l-1 2l-6 3zM225 248l5 5l1 7l-8-2l-7 0l6-7zM213 290l-5-7l6-6l4 4l2 7zM242 277l4-3l10 0l-4 4l-3 6zM206 270l-8-7l2-6l8 5zM265 258l-6-4l3-8l7 7zM275 268l-7 2l-5-4l7-2zM265 247l7-2l8 1l-6 5l-6 4zM277 263l6 4l4 5l-9 1l-4-3zM236 263l8-2l8 4l-8 3zM266 257l5-2l6-2l1 3l-2 8l-5-3zM255 262l-3 6l-4 2l-3-5l2-4zM283 245l-6-5l3-6l5 7zM266 287l-4-3l-4-1l4-5l5 0l1 3zM258 285l3-4l5 0l1 4l-1 4zM309 285l6 6l1 6l-8-2l-7-4zM339 242l9 0l6 3l-8 4l-9 0zM342 251l3-3l7-2l1 3l-3 8zM376 280l0 5l-4 4l-3-4zM371 280l-2 6l-5 1l-1-8zM369 281l5-3l6 1l-5 5zM335 289l-2-5l0-5l3-1l6 1l-1 4zM328 242l8-5l10 4l-9 5zM336 236l6 4l2 4l-7 3l-8 2l3-8zM334 250l-1-4l3-7l5 2l3 4l-4 3zM295 248l3-5l4-4l3 5l0 7zM309 240l-5 2l-7 1l2-5l3-5zM300 245l1-7l9-1l-4 8zM419 265l5 2l0 6l-6-1l-2-5zM326 237l8-5l5 0l-1 6l-1 3l-5-1zM374 319l-7-4l7-9l2 8zM282 308l8 0l4 3l-5 4l-8 0zM343 289l0-4l4-4l4 4l-1 5zM347 277l2 6l-4 5l-4-3l0-6zM352 287l-4-5l-2-6l9 2l4 6zM313 283l5-2l6-1l-2 4l-4 4zM313 267l-8-1l-7-6l5-3l8-4zM279 245l7 0l4 3l-3 3l-4 1zM366 261l3 3l2 6l-7-2l-3-4zM319 250l0-7l1-4l7 2l4 4l-3 3zM333 310l-7 1l-9 2l3-7l1-5l7 3zM324 303l0 6l-5 6l-4-8zM290 292l-6-5l-3-6l7 0l8 3zM317 276l1 4l1 8l-9-5l-2-6zM402 292l7 4l2 6l-4 1l-8 2l1-7zM330 301l-4 8l-11-1l6-7zM420 270l-2 7l-6 2l-2-6l0-4zM292 308l-4-6l-2-5l6-1l6 3l-3 3zM316 299l-5-5l0-6l8 3zM326 286l-5-3l-5-7l8-1l5 4zM409 289l1-2l4-4l2 5l1 2l-6 1zM415 298l-7-3l1-8l8 5zM320 261l3-3l8-3l-1 4l2 3l-7 2zM332 269l-9 0l0-8l6 2zM326 301l-5 6l-9 2l0-5l3-6zM300 288l-3-7l0-6l10 3l2 8zM292 280l4 3l-1 5l-3-1l-4-6zM344 277l0 6l-1 3l-4-2l-3-4l4-2zM350 311l-6 2l-7 3l3-9l7-3zM272 253l7-4l3-2l1 4l1 4l-6 0zM319 297l-3-6l-2-4l4-1l4-2l1 5zM310 286l6-4l8 4l-7 5zM325 282l0 4l-3 5l-3-3l-5-2l5-3zM372 250l-7-5l5-9l5 8zM357 248l3-5l3-3l4 4l0 4zM273 269l-9 0l-7-6l12-1zM254 281l8 1l-2 6l-5-2zM259 289l-2-6l1-6l5 4l5 4zM375 261l4-6l7 3l-4 4zM368 254l6-2l9 5l-9 4zM304 309l-5 0l-7-1l4-3l5-6l2 4zM339 267l4 6l-3 5l-5-4l0-7zM295 297l3 8l0 5l-8-2l-3-5zM298 309l-5 1l-6 0l-1-2l3-7l4 3zM356 263l7 4l1 5l-8 1l-7-4zM278 281l4 5l-2 8l-3-3l-5-3zM379 306l-5 0l-7-2l5-4l8-1zM350 299l-3-7l3-4l5 4l0 4zM395 272l0-5l1-2l5 3l0 4zM396 261l5-4l6-1l-1 7l-4 2zM318 302l6-2l5 0l-2 6l-2 2l-5-3zM323 313l-1-4l1-6l5 3l4 5zM389 292l-7-4l-4-5l8-2l6 2zM335 267l4-7l10 0l-7 8zM384 279l0-6l0-3l5 1l4 3l-5 3zM396 258l2-7l3-3l3 3l6 3l-6 3zM265 266l2 5l-1 3l-6-3l-4-2l5-2zM309 279l5-3l12 4l-7 3zM340 270l-7 2l-10-3l8-6l11 1zM341 266l-3 3l-7 2l1-6zM386 275l-3 5l-6 2l-2-4l0-8zM347 278l-4-4l-2-3l6-2l4 0l-1 5zM347 275l8 0l4 6l-5 3l-10-5zM289 249l-6 5l-2 5l-4-5l-3-5l7-2zM382 280l1-7l5-2l2 7l-4 7zM411 256l7-1l4 4l-5 3l-7 0zM311 276l6 7l1 5l-5-1l-9 0l5-5zM300 312l5-4l5-2l3 4l-2 9l-6-5zM300 313l5-4l8-2l1 5l-4 7zM338 262l-5 3l-5 0l-1-5l7-4zM325 275l-2-6l0-5l4-1l7 0l-3 8zM275 308l2-6l6-2l-3 8zM274 307l2-6l8-4l0 6l2 7zM283 251l8 6l5 5l-10 0l-8-7zM341 240l9-1l3 1l0 4l-8 6l0-5zM404 266l2-6l5-5l5 5l3 7zM308 294l8-1l6 4l-6 4l-5-1zM317 293l-9 0l-6-2l8-5l6 0zM379 306l9 0l3 2l-4 5l-7 0zM412 312l0-7l1-7l7 4l1 7zM393 304l7-1l8 7l-10 0zM364 303l6-4l4-1l1 6l-3 5l-5-4zM367 304l3 0l6-1l1 5l-2 5l-4-4zM417 289l-6 4l-7-3l2-5l7 0zM393 325l5 0l9 3l-11 4zM371 287l10-1l5 5l-6 2l-6 1zM386 287l0 5l-4 3l-3-5l-1-5zM376 304l1 7l-7 6l-2-7zM376 311l4-4l7-1l-3 6l-1 2zM382 310l0-7l4-3l4 5l-2 4zM410 282l0 4l-5 6l-4-4l-3-6zM388 277l4 2l3 5l-5 2l-5-1zM383 309l-4 3l-7-3l6-3zM388 287l2-6l4-3l3 6l-1 7zM423 284l5 4l5 6l-9 0l-9-7zM422 290l-4 3l-7 4l0-6l-5-6l8 0zM377 292l-7 3l-5-3l6-5zM206 320l-8 5l-6-1l2-5l6-3zM197 322l0-5l-1-5l5 0l7 2l-5 5zM201 318l-4 5l-4 6l-3-8l-2-4l6-2zM193 319l-6 0l-5-5l6-2l5-2zM170 306l5 0l6 4l-4 2l-7 0zM167 304l-3 1l-7-2l6-6l7 2zM131 343l8 1l6 0l-3 5l-5 2l-3-5zM153 328l-3-6l0-4l8 2l1 6zM147 321l5-1l4-3l0 6l-3 4l-3-3zM166 319l-3 3l-5 3l0-3l-4-4l7-1zM153 324l-4-5l-2-6l11 1l4 6l-5 2zM156 318l4-2l6-3l-2 8l-4 4zM143 330l1 6l-6 7l-1-6l-2-4zM187 313l-9 3l-6-5l2-3l11-1zM177 316l-3-1l-1-8l5 2l6 3zM179 316l-9-1l-5-1l6-6l4-2zM164 316l6-1l4-2l0 6l1 4l-7-3zM160 322l2-3l6-7l3 7l-2 6zM186 347l0 3l-4 3l-3-3l-2-4l5-1zM146 324l-6 6l-7-1l2-5l6-2zM195 340l-7 4l-6 0l1-7l7-4zM151 289l6-1l8 3l-4 4l-6 4l-2-6zM151 310l8-5l4 5l-7 3zM143 317l5 0l5 4l-4 2l-6-1zM155 316l-6 1l-6 3l-2-4l0-5l7 1zM124 298l8 1l4 8l-7 0zM140 304l-7 2l-6-3l6-4l6-3zM126 294l10 4l-1 6l-6-3zM146 310l2 7l-6 4l-2-7zM199 353l2-4l2-3l6 2l3 5l-4 1zM221 322l-5 6l-6 3l-2-6l1-6zM217 308l12 2l2 5l-7 3l-6-4zM230 316l-5-3l-2-5l7 0l4 3zM233 316l-8-2l1-5l7 1zM210 341l-6-4l3-7l5 3zM204 338l6-5l6 1l-1 4l-1 6l-5-4zM207 331l-2-8l8-3l-1 7zM196 331l-6-1l0-9l6 3zM296 321l7 3l4 5l-5 1l-7 0zM301 326l3 5l-5 4l-3-6zM263 327l-3 5l-7 4l-1-5l-1-6l5 2zM261 311l10-1l4 5l-7 1zM261 339l-5-2l-7-5l8-3l9 1zM278 337l-5 2l-6 3l-3-7l2-5l6 2zM310 296l-8 6l-7-1l4-6zM290 331l-1 5l-6 7l-3-6l-3-6l4-2zM276 319l-2 8l-6 5l-6-7l-1-6l9 1zM241 308l7-6l9-1l-6 8zM270 281l8-1l5 1l-1 7l-6 4l-4-6zM291 320l-5 2l-9-2l6-5l4-2zM284 328l3-7l7 0l-2 5zM254 314l-2 2l-7 2l1-5l3-4zM243 315l2-5l8 0l0 3l-4 5zM262 287l1 7l0 3l-5-2l-4-6zM263 331l5 4l0 3l-5 1l-6-5zM262 330l5 6l-9 7l-2-8zM292 325l7 2l7 3l-6 2l-4 2l-2-3zM299 338l-4 7l-11-2l9-7zM285 305l0 4l-5 4l-3-4l2-5zM252 312l5-3l4-1l0 5l-2 5zM254 325l-6-8l0-8l9 2l7 6zM369 327l-8-3l-1-8l7 3zM354 350l-6 0l-7-2l5-2l3-4l4 5zM347 313l-2 3l-6 2l0-5l-1-3l6 1zM300 356l1 6l0 3l-6-1l-4-7zM302 323l7-8l9 0l-2 5l-7 5zM278 355l0-7l5-4l3 8l-4 7zM356 312l-7-4l-4-4l9-4l6 1zM368 317l-1-5l1-6l4 4l1 5zM298 305l-11-1l-3-6l8-2l5 3zM356 341l1 6l-3 4l-6-4l2-6zM338 326l-8 5l-8-1l4-5l9-4zM327 344l-3 5l-4 3l-3-4l1-6zM290 367l-5-2l-2-8l9 4zM325 335l-7-3l0-8l6 1l6 5zM325 338l-1-4l1-8l6 8zM376 346l-3 3l-5 1l0-4l0-3l4 0zM345 300l1 4l-1 4l-4-2l-1-6zM375 340l0 7l-5 6l-3-6l0-5zM362 315l-3 3l-4 3l-4-6l2-4l5 2zM321 327l5 4l-2 6l-5-3l-5-3zM327 330l1 7l-8 0l2-5zM347 349l-7-3l-6-6l10-2l8 3zM319 348l-1 5l-8 3l-2-7zM318 352l3-6l6-3l1 7zM324 343l6 3l3 6l-6-1l-5-3zM312 299l2 8l-5 4l-2-2l-5-2l5-5zM332 321l1-4l3-5l3 4l5 6l-5-1zM366 320l3 4l-1 6l-5-3l-2-6zM340 315l-4-5l-1-5l6 0l6 2zM299 338l2 6l-2 5l-5-3l0-5zM305 299l3-4l8-5l1 9l-4 7zM296 324l7 4l2 5l-6 1l-6-2zM349 299l8 1l6 5l-9 3l-8 1zM373 344l-7 1l-7-7l7-1l7-1zM375 335l3 2l5 6l-8 2l-6 0l1-6zM293 341l6 4l-1 7l-9-2l-2-5zM291 353l1-10l7-3l1 7zM282 356l2-3l3-4l4 4l-1 4zM370 323l4-1l6 0l-3 4l-2 3zM370 326l3-5l7-1l0 6l-5 4zM336 299l-6-2l-5-7l4-2l11 1zM290 310l-3 4l-6 4l0-4l-1-6l4 0zM318 319l-3 7l-9 2l1-8l1-4zM304 356l2 6l-5 7l-3-3l-5-6zM297 363l2-5l7-1l-2 5zM324 338l1-5l5-4l1 5l3 6l-6 0zM332 350l-5 1l-6-1l1-5l5-4l2 5zM332 317l7-2l6 4l-6 3l-5 3zM369 341l-8-1l-5-5l5-2l8 2zM359 313l3 5l1 4l-8 0l-4-4zM387 348l-6-1l-2 0l-1-4l1-3l6 2zM332 338l1-9l4-3l4 7zM390 333l-2-3l2-6l4 1l4 6zM385 329l2 4l1 5l-7 1l-8-5l7-2zM354 336l-5-1l-4-5l5 0l4-1l0 3zM348 333l4 0l10 1l-5 5l-1 4l-6-5zM354 338l3 2l5 2l-4 3l-6 4l-1-7zM382 327l6 7l-5 7l-4-7zM391 328l-5 4l-5 3l-2-9l3-4zM384 345l-2-4l-4-5l7 1l8 2l-4 4zM344 374l9-3l7 4l-5 3zM356 379l-7-4l-5-9l11 4zM339 395l-6 3l-7-3l5-3l7 0zM354 408l-3-2l-3-3l3-3l7-1l-1 6zM353 400l0 7l-2 4l-8-3l-2-9zM359 389l1 4l-4 10l-5-6l-2-6l6-1zM374 391l-8 0l-9-2l5-4l2-5l8 6zM340 378l8 1l2 4l-6 2l-6-4zM343 399l6-4l5 0l0 4l-5 3zM336 385l6 0l5 5l-6 1l-7-1zM345 374l5-6l7-1l-1 8l-6 3zM359 373l-7 1l-9-3l10-4l6 2zM355 407l0-3l-1-5l6 1l5 3l-5 4zM340 374l9 2l5 6l-7-1l-9-1zM339 395l7 1l1 6l-3 0l-5 2l-1-6zM349 399l-1 4l0 4l-5-2l-4-6l5 1zM358 404l2-7l4-1l1 3l-1 6zM373 366l1 4l-2 5l-7-4l-1-3zM333 380l4 2l5 3l-4 2l-4 2l-1-3zM329 388l0-9l6-5l3 7l5 4l-9 2zM350 372l1 6l1 2l-5 0l-7-5l6-1zM375 345l6 1l4 2l-3 3l-8 1l1-5zM375 347l6 2l1 4l-8-2zM375 341l1 5l-2 5l-5-1l-6-4l4-3zM247 373l7 7l-3 7l-5-3l-4-5zM259 380l-5-2l-3-4l6-1l5 1zM252 385l4-3l6 6l-6 1zM249 386l9-6l10 7l-11 3zM249 365l4 2l0 6l-6 1l-5-4l3-3zM347 365l-3 6l-9-3l4-4zM314 355l9 4l5 5l-9 3l-5-2zM322 371l-4-5l-1-4l4 0l8 2l-3 4z"/><path fill="#182c0f" d="M287 47l-7 7l-8 0l2-8zM271 51l0-5l6-3l3 5l-3 3zM276 41l1 3l3 8l-5 0l-7-1l1-7zM276 51l-8-2l-5-2l8-6l9-1l-1 8zM276 76l-6-7l3-10l7 9zM314 54l-3 4l-4 1l-2-5l-1-4l6 1zM367 64l-2 6l-4 2l-2-5l5-6zM346 71l6 0l4 3l-4 3l-8-1zM341 57l9 4l0 5l-7-3zM270 84l-7 2l-7-1l1-3l7-5zM268 102l-3-5l-1-6l5 1l6 5zM274 89l0 6l-8 2l3-6zM330 88l-7-7l2-6l5 7zM291 91l-5 5l-3 3l-3-6l0-7l5 2zM324 108l-1-7l7-4l3 6zM326 89l-7-3l-2-5l8-1l6 4zM290 97l-1 4l-2 3l-3-1l-3-5l4 0zM266 138l-5 0l-10-3l3-3l4-6l5 6zM267 124l0 6l-1 5l-8-2l-2-4l6-3zM252 123l5-7l4-1l2 4l1 6l-7-2zM262 124l-7-6l-3-3l8-2l5 5zM343 144l7-5l7-2l-1 6l-8 7zM349 130l5 4l1 6l-8-2zM310 125l-1 6l-7 5l-2-6l4-7zM290 136l-11 0l-3-8l9 1zM283 133l1-8l12-1l-6 9zM340 132l0 8l-8 2l2-6zM331 144l-6-6l7-6l3 5zM278 148l-7-3l-3-5l7-2l9 4zM353 136l-2 3l-1 5l-6-4l-3-6l7 1zM346 136l3-6l5-2l1 7l-5 2zM307 145l-5-6l-1-4l6 1l6 6zM299 149l-1 5l0 5l-6-3l-1-5zM288 128l-10 0l-5-4l8-2l6 2zM289 156l-6-8l6-5l3 7zM284 146l-5 4l-7-2l1-4l5-4zM285 151l6-6l4-2l1 6l0 5l-7-2zM315 121l6-2l6-2l-2 6l-3 3zM319 114l6 4l6 3l-8 5l-6-1l1-4zM324 127l-4-1l-5-5l5-1l7 0zM309 150l1-3l4-5l4 5l3 7l-9-2zM316 148l6 3l9 2l-5 6l-7 1l-2-4zM388 144l-2-6l-4-5l11 0l4 5l-4 4zM365 145l6 0l5 2l-4 6l-4 2l-3-3zM388 162l-2 5l-5 3l-1-3l-1-5l3 1zM385 137l2 6l0 5l-6-2l-4-4zM190 170l-1-8l6-2l3 4l-1 4zM181 168l4-7l9-1l0 7l-6 4zM184 170l2-6l3-1l2 4l-3 5zM197 160l-6 0l-5-6l7-1l6-1l-1 3zM211 189l-6-2l-7-4l8-4l7-3l0 7zM229 193l-7 3l-7 2l2-7l5-4zM222 201l-6 5l-9 0l1-5l8-5zM246 188l-1 6l-6 2l0-6zM245 200l-2-4l3-7l4 4l4 3zM232 175l5 3l5 5l-5 0l-7 1l0-5zM259 187l-7 7l-6 0l-1-6l10-5zM263 186l6-3l5 0l-2 5l-7 3zM264 168l-9-1l-2-5l7-1zM273 194l6 1l4 1l-2 4l-5 4l-1-4zM282 198l-7 4l-6-2l6-6zM255 205l11-4l5 3l-8 5zM267 202l6 1l4 5l-5 2l-6-1zM268 202l6 3l3 1l-4 4l-7 0zM282 201l-6 2l-7 1l0-6l8-6zM274 218l0-6l3-7l4 4l2 6zM291 210l0 5l-7 5l-1-9zM309 193l-10-2l-4 0l5-6l8-4l-2 5zM369 164l4 2l6 6l-6 2l-4 4l-2-6zM359 164l8-1l6 5l-8 3zM342 167l-7-3l-3-4l8-1l8 1l-4 5zM273 190l2-4l6-5l2 4l3 5l-7 1zM282 177l6 3l0 4l-4 1l-4-4zM307 189l0-5l4-5l3 2l1 7zM282 167l4 0l8 2l-6 3l-5-1zM292 205l3-4l7-2l-1 7zM299 163l10 2l5 5l-11 0zM323 149l4-3l7 0l-2 6l-6 3zM307 137l-2 6l-4 7l-5-7l-2-7zM266 181l3-6l6-4l3 8l-2 6zM266 175l5 2l7 3l-7 5l-6 0l-1-4zM293 200l-1-4l3-7l4 6l5 4zM303 154l7 4l4 5l-10 2l-7-6zM303 171l-2-4l-1-4l5-1l4 4zM285 172l7 1l5 2l-4 4l-11-1zM285 172l9 1l2 5l-6 2l-5-3zM294 172l-1 5l0 3l-4-2l-6-5l5 0zM297 188l5-3l10 0l-5 6zM370 179l4 3l4 5l-6 0l-5 0l2-4zM298 163l3-8l7-5l-1 9zM316 156l-4-4l-3-6l7 1l5 0l0 4zM294 198l-6-4l4-5l4 3zM298 193l-5 1l-8-3l5-4l7-4zM284 200l10 0l2 3l-6 2zM300 201l-5-2l-4-3l2-1l6-4l0 7zM333 181l3-4l8-2l-1 5l-5 5zM348 158l-4-2l1-8l5 5zM285 174l4-1l6-2l0 4l-2 8l-3-4zM284 171l-2-4l0-4l4 2l3 3zM285 166l10 5l-1 5l-8-1zM333 158l9-6l5 4l-2 5l-6 1zM277 160l2-5l7-2l2 4l0 7l-5-1zM331 173l-1-7l8-2l-1 6zM330 172l2-6l3-1l3 5l-1 3zM315 163l5 4l-1 7l-6-3zM305 168l5-5l12-5l-3 7l0 5zM262 165l4 5l0 3l-8 0l-3-5l4-2zM333 174l-5 3l-6 1l2-4l4-5zM366 181l-4-5l-1-8l5 2l6 3zM278 172l8 3l5 5l-6 2l-9-3zM303 147l7 6l-2 10l-7-6zM370 182l-6 3l-9-4l7-3l7-3zM372 177l-1 5l-3 6l-3-2l-4-5l5-2zM370 185l-6-5l-2-7l8 2l6 3zM350 158l2 4l-2 7l-7-5l0-3zM428 170l-8 0l-9 2l2-8l9-5l1 6zM425 169l-8 0l-5-5l8-1zM410 167l11 0l2 8l-11-1zM419 143l1 4l-1 3l-5-2l-3-4zM441 195l-8-2l-2-6l8 1zM430 163l-8-1l-4-5l7-2l7 4zM429 169l-7 4l-9-7l10-2zM424 158l5 6l1 7l-9 0l-6-3zM426 192l2-5l7 0l1 5l-4 5zM463 179l-6 0l-3-3l5-2l5 0zM455 186l-5 0l-5-5l8-3l7 4zM359 189l1 4l0 4l-4 0l-6-1l4-5zM398 238l-1 5l-4 5l-4-5l1-8zM325 252l-7 2l-5-2l5-4zM360 249l0-5l4-5l3 3l3 4l-4 2zM318 194l-1 5l0 2l-6-2l-1-4l4-2zM376 181l2 4l4 5l-6 3l-6 0l1-6zM416 236l-5-4l-2-6l9 0l4 7zM272 226l-9-3l-2-6l8-2l6 4zM383 247l-6 0l-5-1l2-6l3-6l5 7zM319 218l-8-2l-1-7l7 2zM412 249l1-7l9-1l-4 7zM296 219l2 6l0 6l-7-3l-2-5zM425 202l5 4l0 8l-8-3zM296 207l12 0l0 7l-6-2zM308 212l-5-5l-1-5l7 1l3 4zM386 194l-11 0l-6-5l9-4zM385 190l-7 0l-7 0l5-7l6-2zM336 247l-3 4l-7 0l1-5zM301 192l-5 2l-4-2l2-2l1-3l4 1zM343 228l4-4l8-4l2 11l-8 5zM352 240l-5-3l-5-3l4-4l8 3zM280 212l4 4l1 10l-5-3l-10-6zM426 228l-6 0l-4-4l5-3l5 1zM298 251l5-6l6-2l0 7l-7 5zM308 257l-5-1l-7-3l5-4l6-1zM362 230l-10-2l-3-6l7-1zM279 218l8 2l1 9l-8-3l-7-4zM412 209l-1-3l-3-6l9 1l6 3l-5 2zM346 179l-2 6l-2 6l-8-4l-2-8zM338 212l-2 6l-9 3l0-8zM324 208l8-1l6 1l-3 4l-4 3l-3-3zM349 252l8-5l7 0l-2 6l-9 2zM397 247l-6 3l-9 0l3-4l-1-7l10 4zM395 222l1 9l-9 2l2-7zM382 226l7 0l6 5l-6 3zM367 192l3 4l0 8l-9-3l-5-4l6-4zM351 200l10-4l7 3l-4 5l-10 3zM370 240l4 6l-4 7l-4-5zM358 212l5-4l3-3l3 6l-1 7l-6-2zM347 211l5-2l6 5l-6 2zM374 236l-4-1l-7-1l2-5l5-2l3 2zM361 222l5 5l-1 7l-8-6zM357 233l3-5l4-3l2 6l-1 6zM370 233l-1 5l-2 3l-4-2l-2-4l5-2zM374 233l-2 6l-8 1l4-7zM343 243l-5 1l-4 4l-3-7l4-7l5 5zM341 236l2 7l-6 6l-4-5l-1-4zM301 208l-3 7l-3 3l-4-5l2-6zM371 242l-8-4l-4-5l9-1l5 4zM363 200l-5-6l0-7l8 2l5 6zM362 197l-8 3l-5 0l3-6l7-2zM353 188l7 4l5 4l-10 2l-9-4zM420 201l6 4l4 3l-7 1l-5 0zM413 208l2-3l4-3l4 5l0 4l-3-1zM301 198l-9 3l-6-3l6-3zM283 232l2-8l7 0l-2 6zM281 220l5 4l3 4l-5 1l-6 0zM362 214l-5-6l0-3l8 0l5 5zM264 211l4-5l8-1l-3 6zM301 188l4 6l-3 5l-4-4l-2-6zM355 191l-3 5l-4 3l-3-6l4-4zM269 219l3-5l5-6l3 3l2 7l-4-1zM376 255l-4 3l-6-2l3-3l5-1zM395 233l-1-7l6-8l2 7l-1 6zM395 230l7-5l10 1l-6 6l-8 6zM403 229l-8-1l-4-4l5-2zM362 236l-1 5l-1 4l-8-4l-3-4l5-2zM334 215l0-6l0-6l8 3l2 8zM334 203l4-4l10-3l-1 8l-11 7zM372 210l5 3l3 8l-8-1zM341 202l8 1l6 5l-7 3l-6-3zM396 207l-10-1l-5-6l10 0zM412 217l-4 4l-10 0l3-6l5-5zM437 215l-3-5l2-6l5 4l3 6zM417 199l-4 4l-6-3l6-4zM434 205l-9 3l-7 1l1-6l7-7zM431 201l-1 8l-6 2l-3-6l4-5zM405 204l1 6l-4 3l-2-4l0-5zM432 225l-3-6l2-7l6 3l4 8zM438 228l-7 3l-8 0l1-5l7-6zM404 230l-10-3l1-9l8 3zM400 213l0 5l-4 5l-1-2l-5-5l7-1zM277 225l-2-5l0-2l6 0l2 4zM282 231l-7-1l-1-9l8 2zM306 242l-6-4l1-8l6 6zM308 238l3 4l-3 7l-4-4l-1-6zM288 240l-5-5l-4-3l7-2l5-2l-1 6zM316 242l-1-5l1-2l4 0l4 4l-4 1zM310 254l-2-7l-1-2l6 0l5 4l-3 2zM314 241l4 4l-3 7l-3-6zM270 237l1-3l1-6l6 5l0 6zM290 211l5-3l4-2l0 5l1 5l-6-2zM301 238l-4 4l-6 2l2-6l3-2zM304 235l-3-8l6-6l3 10zM296 246l9 3l4 3l-5 5l-4 1l-4-5zM294 242l1 7l-3 4l-5-4l1-7zM324 256l-7-3l-3-3l6-2l7 2zM273 223l-2 7l-11-2l8-5zM310 243l-3-5l4-5l3 4zM283 249l9-7l8-1l-3 8l-7 2zM285 203l3 6l0 5l-6-1l-7-2l4-4zM287 222l-3-7l0-5l8 2l9 3l-8 3zM281 229l-5 1l-8-2l4-4l9-2zM282 252l5-3l5 6l-7 0zM276 254l2-4l3-3l2 4l3 4l-5-1zM317 213l6-6l5 0l0 7l-4 3zM473 241l-5 9l-8 0l6-9zM467 242l-9-1l-7-3l7-6l4 1zM428 241l4 7l-2 8l-6-5l-4-6zM428 244l6 0l5 6l-7 0l-6-1zM431 250l4-4l4-3l3 5l0 5zM231 271l4 1l6 1l-4 5l-7-2zM210 277l4-3l9-3l-3 6l-2 4l-3-3zM215 282l-4-6l-2-4l6-2l8 3zM224 272l-4 5l-9 4l0-5l0-8l7 4zM209 281l5-5l7-4l0 6l-1 7l-7-3zM205 276l4-2l4-3l3 6l-2 3zM210 247l4 6l-1 7l-6-3l-5-4zM212 283l-8-3l6-7l3 5zM204 275l4 2l7 2l-3 3l-4 4l-6-4zM209 283l7-5l7-4l1 9l0 5l-9-2zM217 277l6-3l9-1l-4 7l-5 3zM215 260l-3-7l4-4l3 4l3 5zM235 266l-4 4l-6 1l2-6l5-3zM263 267l-4 2l-6 0l2-6l4-2zM269 269l4-2l7-3l0 7l-1 4l-5 0zM272 267l6 4l2 4l-6 2l-4 3l-2-7zM258 250l12-1l5 7l-9-1zM262 270l0-7l6-4l2 4l0 7zM266 246l4 2l4 7l-8-1l-6-2zM274 241l1 4l-4 4l-4-1l-2-6zM266 242l9 4l-1 7l-8-3zM279 271l-5 0l-4-4l2-1l6-1zM247 258l5 3l-2 9l-5-4zM272 248l4 9l-7 5l-4-4l-2-8zM262 255l10 4l1 6l-8-1zM267 281l-6-2l-6-3l6-2l6-1zM313 287l1 6l-4 5l-3-6zM306 276l3-5l0-4l6 3l1 4l-3 1zM301 276l5-7l10 2l-3 6zM261 251l8-9l8 0l-1 8l-4 4zM342 239l9 5l-5 8l-4-7zM377 259l7 1l8 0l-6 6l-6 3zM342 274l3 5l1 6l-7-2l-4-4zM250 270l7 1l-1 9l-7-3zM413 267l7 3l5 4l-4 1l-8 1l1-5zM303 242l8-2l5 4l-5 2l-8 2zM325 233l9 1l5 2l-5 3l-7 0zM283 317l2-5l3-6l4 4l5 3l-6 3zM312 301l-6 0l-6-3l4-5l9 1zM282 248l6 8l-2 6l-4-3l-4-7zM310 271l-9-5l-3-4l4-1l6-3l1 7zM362 248l-2-4l3-4l4 3l0 5zM375 251l-5 2l-8-2l5-7l8-1zM345 309l1-4l0-5l5 2l4 5l-4 2zM339 244l-8-1l-5 0l4-8l4-3l2 5zM330 308l-7-1l-2 0l2-5l6-4l2 6zM291 283l-2 7l-5 4l-2-8zM422 297l-3-2l-6-3l7-3l5 0zM409 287l-4-1l-8-3l6-4l8-1zM330 303l3 4l3 4l-7 0l-5-1l4-4zM339 253l6-7l10-2l-2 7l-4 4zM347 254l-2-7l6-5l1 7zM421 261l1 5l-1 5l-5-3l-3-4zM351 295l7-1l7-1l-3 6l-4 5l-4-4zM356 304l5-8l8 4l-7 5zM368 304l-8-1l-9-5l7-2l7-1l1 3zM284 303l4-3l4-1l1 6l-2 4zM315 281l6-5l4-4l3 8l4 4l-9 0zM316 284l0-8l8-3l2 6zM308 264l6-1l4 6l-7-1zM311 262l-1 5l-4 2l-3-3l3-7zM336 290l-3-8l12-4l-2 8zM324 283l9-5l9 0l-3 7l-11 4zM403 271l1-6l7-3l3 5l-4 5zM350 259l-1 5l-7 3l0-6l2-4zM320 309l9 2l6 7l-7 0l-10 0zM311 307l10-2l4 6l-10 2zM394 286l1-5l6-3l2 5l0 5zM331 302l0-5l7-3l-3 7zM367 249l-8 5l-5-10l6 0zM276 260l3-10l8-3l-2 9zM363 255l5-2l7 1l-3 4l-5 4l-3-4zM371 243l-5 6l-11-6l13-3zM313 310l-1-6l-2-6l7 2l5 4l-5 3zM358 251l0-8l2-5l9 3l5 4l-8 4zM305 288l-6-4l2-7l5 3zM376 261l-1-5l-3-7l7 1l6 1l-3 6zM431 266l-6 5l-9-4l6-6zM417 266l5 3l1 4l-4 1l-5 0l1-5zM428 267l-5 2l-7 2l2-9l6-1zM414 252l1 3l0 4l-4 0l-6-3l5-3zM395 267l-4 5l-6-4l4-3zM303 263l-4-3l-5-4l6-2l3-1l2 4zM297 253l4-3l9 3l-6 2zM349 298l-9 2l-7-3l4-5l6-2zM390 259l4 5l3 6l-6 0l-6-1l2-5zM385 262l0 4l-4 5l-2-3zM388 266l1 7l-7 2l-1-7zM314 255l-2 4l-10 5l0-8l5-6zM373 296l3 4l-4 7l-3-5zM379 302l-5 4l-7 0l0-6l3-4zM265 292l-6-2l-4-1l5-4l1-3l4 4zM406 265l-7-1l-6-2l7-5l5 1zM319 314l3-5l5-4l2 6l1 7zM401 254l-3 4l-7 3l-1-8l4-4zM394 259l-4-4l-4-6l7 1l6 2l-2 4zM315 277l4 3l2 6l-8-3l-3-4zM261 266l0 4l-6 6l-1-5l-2-6zM348 300l6-1l4-1l-1 6l0 3l-5-3zM351 304l1-5l9-3l-2 6zM314 273l6-1l9-4l-2 7l-3 5l-5-2zM267 281l7 3l3 2l-5 4l-7-2zM351 262l4 2l2 6l-4 1l-8 0l4-6zM341 271l6-2l4 3l-3 4l-8 2zM344 273l6 0l7 1l-5 8l-6 1l-2-5zM283 244l-3 6l-2 4l-5-4l-3-3l6-4zM281 244l4 3l2 6l-6-2l-5-4zM318 290l-8 1l-6-2l6-6l6-2zM261 260l1-5l10-6l1 7l-3 7zM269 255l5 0l5 3l-6 2l-5-1zM405 251l0-4l2-3l4 3l3 4zM310 316l-5-1l-1-10l6 3zM257 259l5-3l6-4l2 4l1 7l-7 0zM284 266l1-5l6-2l0 5l-2 5zM353 242l-2 4l-5 5l-7-4l-2-5l9 0zM378 288l11 2l0 8l-9-3zM388 298l-8 1l-7-1l1-6l7-3l2 4zM348 304l10-1l6 3l-7 4l-7-1zM414 255l5 4l3 5l-9 0l-8-3zM412 269l-3-5l-5-3l9-2l5 2l-2 5zM315 261l-3-3l-2-3l6-2l4 4zM326 260l-9 4l-4 2l-1-5l4-6l5 4zM316 300l-10-3l-1-7l5 0l7 1zM392 310l-5 3l-7-2l4-4l5-4zM382 303l12 3l4 3l-9 4l-6-2zM419 306l-3 3l-8 0l5-4zM420 299l3 6l-2 6l-6-1l-3-4zM405 305l-5 3l-5 0l1-6l7-2zM395 296l5 4l3 4l-9 2l-4-5zM398 329l-9-2l-4-6l9 1zM394 331l0-6l4-4l4 4l0 7zM374 317l-6-2l-8-1l8-6l7 0zM420 299l0 10l-1 6l-8-7l0-5zM413 307l2-4l4-5l5 4l5 4l-7 3zM405 328l-1-3l-5-5l6-2l7 2l-2 4zM400 322l6 1l7 3l-5 2l-2 3l-3-4zM373 278l0 6l-4 2l-4-4l3-6zM376 281l-2 5l-4 4l-3-4l0-7zM416 284l-8 6l-10-5l10-5zM409 283l2-4l6-2l-1 5l-5 5zM380 313l-1-5l4-5l3 3l4 4zM400 290l-6 1l-6-6l3-3l9-3zM389 290l-2 4l-7 5l-1-5l0-5l4 0zM379 293l7-2l8 1l-5 5l-3 5l-3-6zM413 286l8 1l4 1l-2 3l-3 4l-3-3zM359 294l10-7l5 0l-1 7l-8 2zM361 295l6-7l6 0l-4 7zM406 303l-2-6l5-7l4 7zM414 293l-4 5l-5 4l-1-7l3-4zM164 357l-9-2l-4-3l8-4l7 0l-2 5zM150 305l8 3l0 12l-8-6zM162 306l-6 5l-6-1l2-4l4-5zM185 309l-4 4l-6 0l2-4zM189 344l-3-6l3-5l3 2l5 4zM165 305l2-5l4-3l2 6l-2 4zM139 314l-3 4l-6 5l-3-5l-1-7l8 2zM137 321l-5-5l-3-7l10 2l3 4zM129 342l9-1l5 6l-9 2zM175 340l-1 3l-6 5l-1-5l-2-4l8-1zM159 306l-9 3l-3-7l10 0zM163 313l-10-8l1-6l7 1l4 7zM159 304l-4 6l-2 3l-4-5l0-4l4 1zM138 327l6-6l3-6l5 6l3 3l-9 5zM194 336l-7 0l-5-4l6-3l6-3zM160 329l-8-4l-6-4l8-3l8 1zM193 311l-8 3l-6 4l-1-7l-2-6l9 2zM172 332l10 1l4 5l-7 3l-8-3zM155 299l6 4l1 5l-8 0l-5-2zM161 303l-5 5l-6 1l1-5l3-4zM182 343l6 7l-7 7l-4-7zM171 302l7-2l11 1l-7 7l-8 0zM177 350l-4-4l-5-5l9-1l5 5zM173 333l-3-2l-7-7l8-1l5 0l1 4zM135 305l6-3l7 0l-1 5l-2 4l-6-3zM193 338l-8 4l-5-5l4-4zM197 336l-6-2l-2-6l6 0l5 3zM202 326l-8 7l-6-1l-1-4l8-4zM144 315l-7 3l-4 1l1-6l4-4zM154 314l6 2l1 6l-7-2zM127 311l3-8l6-7l1 8l-2 8zM140 313l0-6l4-4l4 5zM131 311l-7 0l-5 1l4-6l3-1l3 3zM147 321l-9-1l-6-3l7-4l9-1zM228 359l-8-4l-1-6l9 2zM202 352l3-4l6-1l-1 4l-4 5zM198 356l1-8l5-4l3 4l0 4zM212 323l-8 2l-4-7l8 1zM217 331l-4 1l-8 0l2-4l3-5l5 3zM216 350l3 10l-7 3l-4-7zM211 361l-5-2l-2-8l10 3zM195 346l-3 5l-6 3l-1-5l5-4zM230 311l-4 3l-4 5l-4-6l-2-3l8-3zM217 306l4-3l6-4l-1 8l-7 2zM190 337l5 2l1 8l-6-1l-8-3zM235 330l-6 3l-5-5l5-1l5 0zM184 316l9 2l7 6l-14 0zM277 339l3-5l9-2l1 7l-3 5zM299 334l-5-7l1-8l8 5l4 3zM256 344l-5-6l-1-7l4 0l7 6zM269 335l8 0l7 3l-5 3l-8 3zM274 340l1-8l12-1l-6 7zM281 345l-3-6l6-4l3 5zM283 315l-8 1l-9-5l6-4l7-2zM261 341l-8-4l-1-3l7-1l5 2zM253 329l8 2l7 4l-6 2l-4 4l-4-8zM291 311l3-8l7-6l0 8l2 8zM303 323l-6 2l-10 1l5-6l8-4zM296 325l-8 3l-4 0l0-5l4-5l3 3zM307 316l-6-4l-2-7l5-1l7 3zM287 323l-8 1l-3-2l3-4l7 0zM298 300l0-7l5-7l3 5l1 10zM276 333l10-1l5 4l-6 5l-9 0zM237 319l9-2l8 1l-6 8l-8 0zM241 306l5-4l7-5l0 11l-5 6zM248 306l3-1l5-1l-1 4l-5 3zM269 288l6-4l4-1l0 5l-3 4zM266 317l-2 7l-4 5l-3-4l-3-8l7 2zM259 315l5 5l1 4l-5-1l-3 1l0-6zM252 319l-7-4l-3-5l7-2l6 3zM270 301l-5-3l-3-5l6 1l5 1l-2 3zM352 337l2 7l-3 6l-6-7zM352 318l-6 1l-8-5l5-3l8-1zM360 308l6-3l7 1l-1 5l-8 4zM283 350l2 6l-3 2l-2-4zM369 321l-2 6l-3 5l-4-6l1-10zM329 333l0-3l1-7l6 4l2 7zM302 299l1 6l-1 6l-6-4l-2-5zM331 346l-9 2l-7 0l2-7l4-6l6 6zM323 312l7-1l9 6l-7 2l-10 0zM325 304l6-6l9-3l-2 7l-5 5zM373 344l7 2l1 5l-7 1l-4-6zM305 345l9-1l6 2l-5 5l-9-1zM318 353l-7 2l-10-3l11-7zM343 298l4 2l4 7l-9 0l-5-4zM326 334l-5 4l-7 0l0-4l4-4l2 2zM315 335l-7-4l3-8l8 4l2 6zM381 347l-10 0l-6-4l9-4l9 0zM341 348l1-6l4-3l3 2l3 5l-4 1zM343 314l-2-8l6-5l3 5l2 8zM352 312l-7 4l-5 0l0-5l8-5zM342 313l-1-7l7-3l0 6zM329 354l-8 2l-7 0l2-6l8-4zM298 301l8 0l8 0l-6 8l-5 2l-4-7zM348 315l-3 5l-6 1l-3-6l3-4zM280 345l6 1l4 4l-9-1zM361 313l6 5l1 6l-6 0l-6-3zM300 337l3 5l-3 6l-6-2l-4-3l5-4zM369 316l-4 1l-6 0l2-5l5-2zM353 318l3-4l6-6l5 4l2 5l-4 3zM277 323l-2-5l7-5l2 7zM275 313l8 3l-1 12l-5-5zM305 334l-7-4l-2-7l4 0l9 1zM299 332l3 6l-5 4l-3-5l-2-6zM292 332l6 1l7 3l-4 4l-7 1zM369 306l4 3l2 6l-8 0l-2-5zM373 312l2 6l-5 6l-5-4l-1-7zM350 301l8 2l2 4l-7 2l-5-3zM349 356l2 2l1 6l-5-1l-3-1l2-3zM351 367l-4-4l4-5l3 4zM333 322l6-1l6 3l-5 3zM340 330l-7-3l-1-9l7 4zM283 307l-1 5l-2 2l-4-4l-3-3l6 0zM280 306l6 2l6 5l-8 3l-8-2l3-4zM302 323l7-3l8 2l-6 4l-3 2zM304 322l3-6l7-2l2 5l-6 10zM305 324l-7-2l-3-3l6-1zM297 318l1 3l-6 9l-4-5l-2-6zM326 312l-4 5l-2 4l-5-2l-1-7l4 0zM313 308l7 3l2 6l-6 1l-5-4zM324 343l4 4l5 2l-6 6l-4-1l-2-5zM331 317l7 1l8 2l-8 6l-7 1zM354 326l8-1l4 4l-7 2zM356 335l3-6l2-4l3 6l2 6l-7-2zM376 327l-4 9l-7 3l-2-9l0-4zM361 333l3-4l7-1l1 4l-3 6zM370 343l-4 7l-2 4l-5-4l-2-5l8 0zM358 314l3 3l1 6l-3-2l-6-3l2-2zM362 315l-2 9l-4 5l-4-10l2-5zM342 318l-2-4l3-8l5 4l2 4zM385 341l10-2l6 0l-4 7l-6 1zM391 313l-5-3l1-9l6 6zM398 310l-4 6l-9 4l0-9l0-5zM348 328l4 6l-5 4l-4-3l-1-4zM346 333l-6-6l-2-5l11-1l2 7zM352 318l2 4l-3 6l-8-3l-1-4l4-2zM407 338l-6 2l-4-2l4-3zM381 333l-6 3l-4-1l2-6l8 1zM375 331l-2-3l4-8l3 8zM405 323l-4-1l-9-5l9-3l8 1zM401 317l0 6l-5 6l-5-4l0-6zM375 328l3 5l-1 3l-5-2l-2-4zM379 337l-6 3l-7-3l4-4l8-3zM333 403l-4-6l1-6l6 3l5 3zM360 403l-6 1l-5-1l4-4l6 0zM371 376l-9 0l-6-4l6-3l8-2zM348 389l-9 1l-6-6l8-2l6-2zM355 402l7-1l7 2l-6 6l-7 2zM367 409l-7-1l-6-7l8-2l10 2zM358 387l5 0l5 4l-6 2l-7-1zM342 378l-4-6l3-6l6 5l2 3zM377 343l3 2l5 3l-8 3l-3 0l-2-3zM320 368l-4-6l5-9l4 7zM316 377l-5-4l-5-8l10 0l7 2zM305 379l2-10l7 0l-1 6zM308 361l4 3l3 4l-4 2l-4-1l1-3z"/><path fill="#1d3512" d="M282 56l-8 0l-6-3l6-4l7 0zM261 45l5-3l5-1l-1 3l-2 6l-4-4zM277 43l3 5l-1 7l-6-1l-5-4zM285 70l-6 2l-5-5l6-2l4 1zM288 69l-8 2l-4 5l-3-6l-2-8l7 1zM286 61l-3 5l-7 4l-1-4l1-9zM278 63l4 4l0 6l-5-5l-4-2zM303 48l6-1l7 2l-5 4l-4 4zM294 50l8-7l9-1l-4 8l-5 2zM309 62l5 3l1 4l-4 0l-6-5zM321 67l-7 3l-5 2l0-8l5-6zM303 61l9-2l6 4l-10 6zM316 61l-5-5l3-6l5 5zM347 74l-4-4l2-6l6 4zM267 77l5 1l6 4l-4 2l-7 2l2-5zM279 97l-7-1l-4-6l7 1l6 2zM302 84l4 7l2 5l-10 0l-6-6zM332 80l-1 7l-2 5l-7-5l0-6l4 1zM317 82l2 5l-3 6l-2-4l-4-6zM280 94l5-5l6 3l-1 3l-5 3zM319 97l8-2l7 1l-7 8l-6-1zM319 100l5 0l6 0l-3 5l-4 4l-2-5zM328 104l-10-2l-6-3l9-4l7 1zM302 95l2 7l-3 4l-4-3l-1-7zM312 101l-2 4l-9 3l0-7l2-6zM324 96l1 5l-3 6l-7-6l2-5zM331 100l-2 0l-7 0l2-5l5-6l2 5zM309 99l-5 0l-5-2l6-4l7 1zM295 76l4 0l5-1l2 5l-4 3l-2-2zM302 89l2-9l7-2l2 6zM306 86l-7 3l-6-7l8-1zM331 109l-5-3l-3-1l4-3l6 1l-2 2zM284 102l-3-2l-5-3l6-1l6 0zM248 126l7-7l7 0l0 7l-6 5zM321 128l-6 1l-8-3l7-3zM324 143l1-7l3-3l4 2l5 3l-7 3zM270 139l6-2l4 1l-1 2l-1 6l-6-3zM297 161l-5-4l-5-5l9-2l6 3zM292 147l-6 3l-5 4l-2-5l1-6l4 0zM326 158l-6-9l3-7l6 4zM345 138l6 2l1 7l-9 0l-3-6zM341 136l4 2l5 2l-6 4l-6-1zM301 163l-9 0l-4-5l6-3l7 0zM282 149l8-3l9 4l-8 5zM330 150l-2-6l2-6l7 6zM356 151l-6-6l-1-5l11 2l4 5zM314 165l-2-3l-3-5l5-1l5 1l-2 4zM321 144l-7-1l-8-3l3-4l9-1zM318 137l0 5l-7 4l-1-6l1-6zM355 139l-12-3l1-5l9 1zM382 146l-6-1l-4 1l0-4l4-5l5 4zM370 151l-2-5l0-4l6 0l5 1l-3 4zM366 142l7-1l3 1l-1 4l-4 5l-5-5zM386 139l-5-2l-2-4l5-1l4 2zM365 144l10 4l-1 6l-8-3zM376 134l8-1l5 5l-7 2zM381 139l7 3l2 7l-8-1zM193 162l-8-1l-4-6l7 0l8 1zM206 177l-1 4l-7 3l1-6zM197 194l4-6l6 0l-2 5zM207 198l4 5l1 8l-10-1l-3-9zM211 200l6-5l7 4l-4 5l-11 1zM213 193l9 1l1 3l-8 0zM243 173l-6-4l1-5l5 4zM272 187l-3 4l-2 3l-6-2l-2-3l4-3zM230 176l8 1l4 4l-8 1l-4 0zM234 200l4-6l5-5l3 8l1 6l-10-3zM233 192l13-1l5 6l-10 3zM254 161l4 8l-7 7l-3-11zM362 195l-8-2l-6-3l7-4l10 5zM352 184l5 4l0 5l-5-1l-3-5zM285 178l1 7l-12 5l2-10zM340 154l-4-2l-2-5l6 0l2 0l-1 4zM346 147l-5 6l-10 0l3-6l8-4zM318 183l-4 4l-6 1l2-6zM316 179l-2 8l-10 2l4-9zM346 159l-7 1l-6 0l2-6l6-3l2 5zM339 151l5 1l6 1l-3 6l-3 2l-5-2zM301 163l-5 4l-6 2l-2-4l4-8zM305 168l-2 3l-7 2l1-3l1-8l3 3zM304 174l0-8l5-4l2 6zM329 152l-4-6l1-3l6 4zM326 183l-4 4l0 5l-8-3l-3-6l7-1zM323 185l0 5l-3 7l-4-5l-2-3zM306 201l-5 3l-9-1l2-6l7-2zM302 152l-5-6l-1-5l6 3l4 4zM302 147l-4 3l-4 0l-1-4l1-6l5 3zM301 197l1 5l-7 3l0-6zM304 175l0-8l7-3l0 7zM307 177l-1-2l1-7l5 4l3 4zM370 179l-8-3l-5-4l11-1zM366 175l-4 4l-4 2l-4-6l2-4l5 0zM296 158l2-4l0-4l6 3l5 4l-6 1zM347 194l3-6l6-2l-1 4l-3 6zM324 153l-6 6l-7 2l1-8l6-4zM340 158l1-6l3-7l3 3l3 6zM294 179l5-6l0-5l6 5l3 5l-8 2zM293 163l-8 4l-6-5l5-2zM285 178l-2-3l-1-6l6 2l3 5zM343 159l-5-1l-3-2l6-4l6 2zM342 167l-6-5l-3-2l5-4l6-3l1 8zM343 159l-10-2l-4-6l6-2l10 4zM341 163l-7-2l-3-4l5-2l5 0zM320 195l-7 1l-4-5l5-1zM299 160l-4-2l-4-3l8-2l5 1l-1 3zM355 167l-1 6l-8 0l4-6zM356 166l0 6l-5 3l-5-5l2-3zM351 176l-2-4l2-5l7 2l1 5zM308 154l1 4l0 5l-5-1l-7-4l5-1zM424 152l-7 3l-11-5l10-4zM409 154l-5-5l4-9l6 4l3 8zM419 186l5-1l3-2l2 5l-3 5l-3-2zM425 185l0-2l0-6l3 1l7 2l-5 3zM423 173l5-1l4-2l0 5l0 6l-4-3zM430 162l-8 2l-5 2l1-6l2-6l5 5zM432 159l-10-6l-1-6l8 0l6 2zM435 146l-2 3l-10 2l2-4l3-6zM441 163l2 6l-1 6l-9-4l0-9zM428 190l3-4l4-4l4 6l-2 5zM462 170l5 7l-8 5l-1-7zM456 169l8 4l1 5l-7-1l-4-4zM462 170l-4 9l-9 1l5-7zM455 189l-9-3l-1-9l8 4l4 1zM368 233l3 4l-2 5l-5-3l-2-4zM323 192l-10-1l-6 2l2-7l7-6l3 5zM391 247l6 0l4 1l-1 5l-3 3l-5-3zM402 252l-9-4l-3-4l7-3l7-1l0 6zM401 240l-4 5l-9 1l3-5l6-6zM326 252l-4 3l-7 2l1-5l2-5zM318 193l-5 6l-6 1l-1-7l4-4zM272 241l3-11l5-2l3 9zM272 233l7-4l6 1l-4 7l-5 2zM423 228l-5 5l-6 1l1-5l4-5zM324 206l10 2l-1 6l-7-3zM329 202l5 3l3 1l-3 4l-5 3l-1-5zM329 237l-3 4l-10 3l2-5l-2-8l7 1zM330 237l-4 8l-6 3l-1-7l6-5zM381 241l-7 1l-6 0l7-5l5-1zM343 232l-1 5l-2 4l-5-3l-2-3l6-2zM414 247l3-9l10 1l-2 5zM308 218l-7 7l-5-1l-2-5l6-4zM301 223l-6-2l-1-5l6 1zM427 243l-5-4l0-6l7 0l5 4zM424 234l3 7l-8 5l-2-6zM418 213l5-8l7 2l-5 5zM338 217l7-5l8 3l-3 4l-6 4zM372 199l-3 5l-10-1l6-3zM283 241l10 0l5 5l-6 1l-6 1zM289 245l7-2l4 4l-7 0zM375 194l-1-4l0-6l6 3l2 5zM284 215l4 5l1 5l-7-2l-2-5zM394 209l6-5l6 3l-5 3zM316 212l-7-5l0-7l8 1l7 3zM348 224l4-5l11-2l-5 9zM415 199l2 6l-9 4l1-8zM356 196l-2 9l-10 3l0-7l2-6zM342 208l4-3l4-4l4 5l1 3l-7 1zM334 192l-4-9l5-7l6 7l0 5zM330 207l4 6l-1 5l-6-1l-3-8zM395 226l-7 4l-6-3l6-4zM324 246l8-3l5 5l-7 0zM294 215l9 5l-4 9l-5-4zM292 229l-3-6l-4-5l8 1l6 0l-1 5zM283 220l5-3l7-1l0 3l1 6l-8-1zM371 241l3 5l-2 5l-5-5zM373 247l-6-2l-4-4l8-2l6 3zM361 210l6 0l6 3l-3 4l-4 3l-2-5zM356 208l2 7l-6 5l-1-5zM288 213l6-1l6 5l-5 1l-5 2zM332 207l5-1l5-3l-1 7l-4 6l-3-5zM338 214l-3-2l-1-6l6 0l4 5zM420 238l2 5l-2 7l-6-5l-2-6zM419 215l8 2l3 5l-5 1l-6 1l1-4zM373 191l-1 4l-9 2l2-4l1-7zM364 197l-1-6l2-5l6 5l-1 5zM289 218l2 7l-6 9l-6-6l0-6zM276 228l12 0l4 2l-7 6l-7-4zM288 222l-2 4l0 3l-5-4l-1-3l4 0zM367 231l3 9l-7 3l-2-5l1-4zM278 226l-5-5l-2-4l6-2l5 4zM282 213l-3 6l-9-1l3-6zM295 193l3 2l5 3l-7 2l-5-3zM281 234l-3-6l2-5l4 4l3 3zM388 194l9 1l1 6l-6 0zM398 186l6 6l3 6l-5 0l-6 2l0-7zM399 205l-1-5l5-5l2 8zM302 189l1 7l-2 5l-5-6l0-6zM360 253l6 4l-2 5l-3-2zM371 247l1 5l-6 3l-1-6zM300 194l-6 3l-6-2l3-3l6-2zM396 229l-4 4l-7 1l1-4l6-4zM387 221l6 4l0 9l-7-4zM385 227l7 2l-1 6l-4-3zM323 187l-2 6l-7 3l-2-4l0-6zM383 244l4 6l-3 3l-4-2l-2-4zM352 241l4-9l9 3l-4 5zM339 198l9 3l4 5l-6 3l-8-4zM268 210l5-2l4-1l2 5l-4 5l-3-5zM355 200l-7 3l-6 2l-1-5l3-7l3 3zM392 200l5-4l6 1l-3 4zM380 220l-7 0l-5-1l4-5l6 0zM381 193l-6-4l2-7l5 4zM310 248l5 2l5 3l-5 4l-9 1l3-4zM364 236l5 2l2 5l-3 1l-8-1l2-3zM357 239l7-4l9 4l-8 5l-8-1zM353 205l2 6l-4 7l-5-4l0-6zM386 200l7 1l6 1l-4 6l-8 2zM403 216l7 1l2 7l-7-2zM434 215l7-4l4-2l3 6l0 6l-7-3zM405 200l-1-5l0-5l4 1l6 3zM396 200l10 0l4 8l-8 2zM428 216l-7-2l-3-6l8 0l7 4zM406 222l-4 4l-7-1l2-5l6-1zM386 225l5-5l6-2l0 8l-7 3zM323 236l0 6l-5 6l-3-4l4-7zM275 234l-3 4l-7 1l3-6zM274 229l5-1l10 0l-5 7l-12 1zM280 236l3-7l10 1l-4 7zM282 233l5-4l6 1l-1 3l-4 8l-4-5zM301 250l-6 0l-7-2l6-7l6-3zM290 254l-3-4l0-5l3 0l6 1l-4 6zM280 236l-3 6l-11 1l2-6l8-4zM285 233l-4 6l-5 0l-1-5l2-6zM306 205l4-7l7 1l-5 6zM310 229l6 1l4 4l-4 3l-8 3l0-6zM293 252l2-7l3-3l5 4l0 6zM283 241l3 0l7 4l-6 3l-3 0zM292 206l-3 7l-5 2l-2-5l2-7zM279 219l6-4l7-1l-3 5l-2 3zM290 214l-6 4l-6-2l5-4l5-1zM295 252l-1 5l-6 3l-1-6l2-4zM315 208l8 3l1 7l-8-2l-4-4zM465 248l-3-5l-2-5l5 0l4 5zM438 242l4 3l-2 8l-4-5l-2-3zM234 280l-1-4l4-6l5 4l4 3l-7 3zM223 290l1 4l1 3l-7 0l-6-3l5-2zM224 297l-5-3l-5-4l8-2l5 1zM239 275l-3-4l-2-5l8 1l7 3zM236 249l-3 4l-6 2l-2-3l0-5l6 0zM223 285l-5-4l-2-6l5 1l7 4zM220 277l6 2l4 5l-6 2l-6 0zM220 261l-4-5l1-8l7 7zM221 251l-3 6l-3 5l-4-5l3-7zM239 269l-6-2l-4-5l5-1l9 1zM204 260l7-1l4 4l-9 1zM257 268l5 4l1 4l-4 0l-6 0l2-4zM267 261l5 6l-2 5l-7-1l-1-9zM268 243l3 6l0 6l-6 0l-6-4zM250 257l3 5l2 6l-6 0l-4-3l2-3zM270 238l7-2l8 6l-9 3zM269 240l7-4l6 0l-1 5l-5 3zM283 237l-3 5l-9 0l1-5l6-5zM285 248l-3-6l7-3l1 6zM275 234l6 7l-6 6l-5-9zM277 245l1 6l1 4l-7-2l-7-4l7-3zM269 255l1-4l8-3l-1 5l-1 6zM389 269l-10-4l-2-10l7 4zM386 270l-8-7l1-7l7 3l7 5zM336 282l4-2l6-2l-1 6l-5 3zM423 264l4 5l-7 5l0-6zM319 243l-7 4l-7-3l11-5zM302 250l3-8l3-5l4 6l4 7l-8-1zM345 242l-7-1l-6-2l3-6l10-1zM367 310l7 0l5 1l-2 4l-3 2l-3-3zM277 306l12-1l7 7l-12 1zM332 290l-9 1l-6-4l8-4zM314 292l2-5l6-5l1 5l-1 5zM291 305l-5 3l-6 0l2-4l3-4zM300 306l-10 0l-8-3l7-4l6-4l1 6zM305 296l4 2l5 2l-6 3l-7-2zM273 246l9 1l3 5l-4 1l-9-3zM284 238l8 4l0 7l-5 1l-7-5zM351 306l-8-3l-3-5l9-1l6 5zM353 305l-8-4l-7-4l6-2l8-3l-2 8zM399 247l-4 2l-1 5l-6-3l-2-8l5 2zM407 302l-4-3l-1-5l4 0l6 1l-1 3zM414 300l-7-1l-4-4l6-2l6 1zM403 292l4-1l7-3l1 4l-1 6l-6-2zM363 270l-3-6l4-6l3 4l4 5zM293 283l1 10l-10 0l2-7zM416 292l-2-3l-3-7l6 0l9 1l-4 6zM320 274l-3 5l-8 1l1-4l4-4zM400 294l3-4l11-2l-4 7zM326 306l4-5l6 0l-1 3l-3 4zM348 241l4 0l8 2l-6 7l-4 3l-4-5zM311 314l-1-4l0-8l6 1l6 2l-3 7zM421 269l-1 5l-7 1l-1-6l3-4zM306 295l8-4l7 5l-7 4zM336 258l-3 3l-5 4l-2-5l1-4l4 1zM397 261l7 1l1 6l-6 0l-4-1zM343 259l8 4l0 5l-7-2zM409 280l-6 6l-8 2l0-9l4-5zM353 311l-3 4l-8 3l-1-7l2-4l6 1zM329 302l3-9l2-6l8 6l-1 9zM368 248l-3 5l-7 4l-1-9l1-7zM280 248l4 3l6 6l-6 1l-6 0l-2-4zM363 310l-4 5l-7 1l-1-6l2-3zM376 250l2 6l-1 3l-5-4l-1-4zM311 307l5-3l5-4l3 4l4 5l-10 1zM325 303l-4 8l-9 1l2-6l8-5zM289 255l5-4l6 1l-2 5l-5 4zM318 296l8 3l1 9l-7-2zM292 308l6-3l11 0l-4 5l-5 7zM278 282l-4 4l-6 2l1-4l3-5zM277 284l-2 4l-6 3l0-6l4-3zM262 292l1-7l10-1l-1 5zM401 252l7 1l1 8l-7-4zM340 270l2 3l0 7l-8-3l-2-3zM337 264l6 4l1 6l-6-1l-4-5zM343 300l-9-1l-5-8l10 2zM401 280l-1-5l5-3l4 5l-3 5zM404 276l6 1l6 2l-7 5l-8-1zM351 287l3 6l-3 8l-7-6zM321 301l-2 5l-7 1l-1-4l4-6zM314 311l0-5l-1-6l7 5l1 6zM331 309l-6 1l-5-4l5-2l6 0zM393 280l-5 0l-9-3l8-5l7 0zM323 283l-9 0l-6-6l11-1zM265 265l-1 6l-6 2l0-5zM328 300l0 8l-1 4l-7-5l-3-3l6-3zM356 261l10-3l7 3l-6 5l-11 0zM358 266l0-3l1-7l7 5l3 6zM320 279l-6 4l-6-1l7-5zM344 271l-8 0l-5-6l7 0zM387 265l5 3l8 3l-7 4l-8 2l0-4zM314 284l-7 5l-5-1l2-7l5-3zM264 253l1-2l9-2l-1 6l-1 6l-6-3zM403 252l6 0l5 5l-6 2l-6 2zM346 254l-1-3l5-7l4 5l4 3l-8 3zM340 305l7 0l9 0l-6 6l-1 7l-8-5zM348 304l9 2l4 5l-9 2l-3-1zM319 264l-2 0l-3-6l4-1l5 1zM382 308l-5 0l-8 4l1-7l3-5l3 2zM415 280l3 5l2 2l-7 4l-5 1l0-7zM369 290l9-2l6 8l-5 0l-10-1zM390 300l0-6l0-4l6 0l4 1l-3 5zM389 291l5-5l8 0l-1 7l-2 4zM389 302l0-5l11-4l-2 7l-2 5zM422 307l-6-6l2-7l5 4l6 3zM373 274l0 8l-2 6l-5-5l-2-6zM408 274l-6-2l0-7l7 2zM418 262l-5 5l-5 2l0-7l6-3zM405 274l-5-5l-2-4l7 0l6 3l-2 3zM386 313l-3-1l-5-2l3-3l7 0zM387 273l-3-6l-1-4l9 1l5 4l-7 3zM402 272l-3 1l-6 1l-1-4l1-4l8 2zM388 311l-6-3l-6-3l7-4l7-1l0 6zM378 303l5-4l7-2l-1 7l-5 4zM391 278l4 2l0 6l-5-3l-2-4zM398 284l4 4l0 4l-5-1l-6-2l6-3zM392 290l-5 4l-8 5l-1-6l-1-10l8 4zM425 302l1-7l1-6l6 5l2 5l-5 1zM420 293l-7-2l-5-6l5-1l5-2l1 5zM157 299l4 7l-2 4l-5-2l-3-5zM156 298l7 3l5 2l-6 5l-4 1l-1-3zM199 308l2 8l2 4l-9 0l-5-5l5-3zM174 310l3-7l5-3l5 6l-2 5l-6 0zM172 326l8-1l5 3l-6 4l-5 1zM179 334l-3-8l4-5l7 5zM160 295l-5 6l-5-1l3-6zM161 300l0 8l-10 3l-1-7l4-7zM182 333l9 3l2 8l-7-2zM184 336l9 3l5 6l-10-1zM137 316l-8 2l-6-3l8-4l7 2zM133 349l7-1l5 2l-6 4l-6 0zM178 332l-2 8l-8 1l-2-6l7-5zM175 320l5-5l5 4l-4 3zM181 318l-6 0l-7-6l7 0l5-1zM143 323l4 3l1 5l-7-1l-3-3zM193 339l-8-6l5-5l5 5zM194 328l-2 7l-4 6l-3-5l-1-7zM190 310l-3 4l-5 5l-3-5l1-8zM169 336l9 1l2 6l-3 2l-9-4zM183 345l-9 0l-7-5l10-3l7 0zM146 332l0 8l-1 3l-5-1l-5-3l5-4zM171 347l7 2l4 7l-10-3zM184 359l-6-6l-2-5l8 2zM184 303l2 4l-2 6l-6-1l-4-2l5-6zM173 351l2-4l-1-8l10 3l5 3l-7 5zM157 337l-8 2l-8-7l11-1zM150 312l-1-4l5-6l3 5l0 7zM156 312l-6-4l0-5l4 0l7 5zM141 326l-2 4l-3 4l-5-5l1-4zM200 324l-3 8l-1 3l-6-3l-2-8l7 2zM146 314l-7-3l-6-2l7-5l7-1l0 6zM162 300l-5-1l-4-4l3-1l3-3l3 3zM158 304l-5-7l5-6l4 6zM149 316l4-4l8 1l-5 5zM137 312l3-4l8-1l0 7l-7 5zM139 289l1 6l-4 4l-4-6zM144 314l-4-7l8-4l-1 7zM197 313l9 1l5 1l-3 6l-5 3l-4-4zM200 316l7-1l7 1l-2 3l0 4l-7-1zM190 343l4 2l6 2l-6 4l-9 1zM189 352l5 2l3 4l-8 0zM216 315l4-5l6-3l2 5l-1 6l-6-3zM234 319l-8-2l-2-7l8 1zM195 339l6 5l-1 5l-7-2zM184 348l5-7l7 1l-4 7zM230 324l1 7l-5 4l-3-4l0-5zM211 326l0 8l-7 6l-4-3l-3-8l5 0zM205 323l4 4l-2 7l-4-5zM196 326l-8 0l-2-3l4-2l5 0zM191 319l4 2l1 6l-4 1l-8-5zM285 329l-4 5l-3 4l-4-3l-1-6l4 0zM264 344l-2-5l-2-8l7 2l6 7zM260 326l1 8l0 5l-9-3l-2-4zM278 323l-5 0l-8-2l5-5l7 0zM276 323l-9-1l2-11l7 4zM299 304l-4 9l-9-1l5-6zM301 313l-3-2l-7-2l3-4l6-4l3 7zM290 326l6-5l6 3l-4 4zM281 324l-2 7l-5 5l-4-4l1-6zM289 335l-5 3l-5 0l1-4l2-5zM307 310l-6-2l-6-3l6-3l6 2zM264 327l4-4l4-1l0 4l-3 5zM269 318l5 4l1 5l-5-1l-5 0l3-5zM277 328l2-6l1-2l6 2l3 4l-6 2zM281 325l-3-4l-1-7l8 1l3 6zM301 289l4 5l-3 6l-4-6zM237 321l7-3l4 5l-7 3zM264 324l0-3l2-4l5 4l-1 4zM258 287l4 0l6 5l-4 4l-11-1zM275 303l-5 0l-6 2l0-7l3-3l4 2zM264 296l-2-2l-5-3l7-3l6-1l-3 5zM250 328l-7-3l-4-3l6-3l5-2l0 6zM247 315l-5 7l-6 1l4-6zM252 315l-4 6l-11-2l6-6zM299 341l-9 0l-1-5l5-1l8 2zM289 337l-2 5l-1 4l-6-4l0-7l6 2zM286 306l-9 2l-2-10l8 3zM366 321l0 3l-9 4l2-6zM356 321l7-1l7 0l-4 6l-6 3zM345 311l-1-8l6-3l3 6l0 6zM338 321l4-4l3-4l3 5l1 3l-6 0zM305 311l5 7l-5 4l-2-5zM371 319l-3-4l-3-9l8 3l4 5zM363 309l6 3l5 4l-5 2l-7 0zM280 357l-3-4l1-6l6 2l6 5l-4 1zM342 304l4-6l10 0l-3 6zM370 310l-1 4l-3 5l-6-3l-1-3l4-4zM366 307l0 3l-3 6l-5-1l-6-4l7-6zM292 309l-1-6l2-6l8 4l0 9zM353 351l-4-2l-3-2l3-3l4-2l1 5zM327 330l-2-7l5-4l3 4zM306 310l-5-4l-2-3l8-2l5 1l-3 3zM286 368l4-7l10 2l-5 4zM325 327l6 1l9 1l-8 7l-7-1zM335 319l-6 0l-8-3l9-5zM335 319l-5 1l-4 1l0-7l4-2zM336 302l-9 0l-4-3l4-4l3-4l4 6zM377 353l-5-3l-3-6l8 0l4 3zM320 327l-7 7l-7-1l2-8l8-3zM328 335l-7-3l2-9l5 4zM352 340l-9 8l-6-1l5-9zM326 354l-2 4l-7 5l-1-6l-1-5l5 0zM277 350l-1-4l-2-4l7-1l5 3l-3 4zM361 332l-3-6l1-6l5 3l5 1l-5 5zM341 314l-5-8l1-6l7 3l6 3l-6 4zM370 316l-6 5l-3 2l-2-6l0-5l5 1zM311 346l-9-2l-1-5l9 1zM325 332l2-6l4-5l4 7zM325 319l5 1l4 3l-3 4l-8 0zM316 293l0 6l-2 5l-5-2l-2-7zM306 334l-3 5l-6 3l-2-4l0-5l5 0zM369 311l-2 8l-8 0l4-10zM356 341l-7 0l-2-6l4-1zM345 331l7 0l5 4l-6 3l-6-1zM359 310l-6-1l-6-3l5-4l7 1zM372 341l1 4l-4 4l-3-1l-4-3l8-3zM351 363l-6-4l-4 0l4-3l5-4l1 7zM337 329l9-5l7 0l-2 6l-9 5zM351 332l-7 0l-3-2l3-5l8 1zM372 344l-8-3l-7-4l6-2l7-2l2 4zM366 334l4 3l1 7l-7-3l-1-6zM304 372l3-5l7-2l1 5l0 7l-6-3zM325 291l7 1l1 8l-4-2l-8-5zM302 357l6 4l2 6l-6-2l-5-2zM338 333l-3 7l-5 5l-4-6l3-7zM329 366l-3 6l0 5l-6-5l-4-6l5 0zM329 364l1 7l-7 3l-1-7zM365 312l-5 7l-5 2l-3-6l1-7zM378 336l-6 0l-4 0l2-5l5-1zM363 339l7 4l2 7l-7 0l-6-2l3-4zM363 345l2-5l3-2l3 3l3 4l-7 0zM342 335l-5 4l-8 0l-1-5l5-7l4 5zM331 331l5 0l6 3l-6 3l-6-1zM385 334l-4-5l3-4l4 3l1 4zM380 328l9 2l4 4l-7 2l-6 1zM348 311l-4 3l-8 2l2-8l6-2zM341 316l5-6l5-4l2 7l-6 5zM391 334l3 7l-2 5l-7-5zM356 339l-4-2l-5-4l7-4l4-1zM393 300l4 5l5 7l-9 0l-8 1l3-7zM348 328l2 5l-1 5l-4-2l-4-3zM339 332l9 0l5 3l-8 4l-7 1zM396 328l-4 4l-6 3l-2-3l2-6l3 2zM403 330l7 3l3 6l-9-2zM413 336l-6 3l-5 2l0-6l0-6l9 4zM370 346l-9 2l-6-7l6-1l7-2zM363 346l-5 2l-8 0l3-6l2-5l5 5zM378 331l5 1l5 7l-8 1l-7 0zM365 371l-6 3l-9 3l2-7l5-5zM350 403l-1-8l7-3l0 7zM354 396l2-8l1-3l7 5l3 3l-5 2zM366 386l7-1l3 5l-6 1zM365 381l-6-4l-5-3l4-2l7-2zM344 387l6 4l5 6l-8 2l-7 1l3-7zM357 389l8-5l9 7l-7 2zM367 391l-4-3l-4-4l6-2l8 0l-2 6zM373 388l-4 4l-7 5l-2-7l0-6l4 2zM362 406l-8-5l-1-5l10-2l5 5zM364 368l2 2l0 5l-5 1l-5-3l3-3zM328 362l9-2l11 6l-8 4l-8 2zM335 365l6-3l7 0l-3 4l-3 5l-3-4zM380 342l1 8l-6 3l-3-6zM374 348l5-4l6 1l-3 5l-7 4zM378 359l-3-3l0-7l5-1l7 2l-3 5zM252 385l-1-6l-1-5l6 1l6 1l-4 5zM265 361l-1 7l-7 3l0-5l3-4zM307 375l2-9l4-6l7 7l2 2l-7 5z"/><path fill="#101d0a" d="M272 72l7 0l3 3l-7 1zM294 65l-2 3l-3 2l-2-4l1-3zM353 68l0 4l-1 3l-3-3l-2-1l3-2zM353 68l-1-3l0-2l3 0l2 3zM306 92l-6 1l-5 0l3-3l4-3zM314 88l1 4l-2 3l-2-5zM287 88l5 3l4 2l-6 3l-4-1l2-3zM319 103l1-2l6-5l0 7l-3 5zM320 95l-1 3l-3 3l-1-3l-3-4l3 0zM303 107l0 5l-3 2l-3-4l1-2zM259 131l4 2l2 3l-5 2l-5-1zM365 135l-3 4l-5-1l3-4zM337 142l-4-4l0-5l5 4zM316 139l1-2l5-1l-1 2l-3 4zM344 132l0-5l7-1l-3 5zM300 134l4-3l6 2l-3 3zM302 151l5 3l2 4l-3 2l-3 1l-2-5zM275 148l4-2l3 1l-3 3zM322 151l4-2l6 0l-4 4zM324 159l1-4l5-1l-2 4zM316 126l3-1l2 0l0 1l0 3l-3-1zM314 153l-3 2l-4 0l2-4l4-2l0 2zM322 164l-2-4l-1-3l5 0l5 4zM321 150l4 3l-1 5l-4-4zM310 142l-5 1l-4-1l3-5l4 1zM191 176l-6-2l-6-2l6-3l6-2zM204 165l-2-4l3-5l3 3l0 5zM206 191l3 2l3 0l-3 3l-3 1l-1-2zM237 196l-5-1l-2-4l3 1l5-1zM269 184l-2-3l0-5l3 0l5 1l-3 5zM237 196l1-4l3-1l2 2l0 4zM244 200l-1-3l-1-3l3 1l3 1l-1 2zM280 201l0-3l2-3l3 2l0 3zM271 202l5-1l2 2l-3 1l-4 1zM370 168l0 3l-1 2l-2-1l-2-4l3 0zM312 189l-4-4l4-3l3 5zM342 155l2 2l0 3l-3 0l-3-1l1-2zM360 176l-5 2l-4-5l5 0zM324 186l-4 0l-4-3l4-3l6 0l-1 3zM288 195l5 0l4 4l-5 1l-6-1zM296 143l3 3l2 4l-5 1l-4-3zM310 170l0-3l4-3l2 3l1 3zM309 156l3 1l1 1l-4 1l-2-1zM319 158l5 0l2 0l-1 4l-1 1l-4-2zM288 147l4 1l2 2l-3 1l-3 1l1-3zM284 153l-1 4l-5 3l-2-3l2-5zM326 163l4 1l4 0l-2 4l-4 2l-2-2zM338 165l6 0l7 2l-5 3l-5 0zM327 166l-4 3l-3 0l-1-4l3-2zM349 155l4-3l4 1l-3 2zM430 176l-3 4l-4 0l-2-4l3-4zM427 159l1 4l-1 2l-3-1l0-5zM431 166l-3-3l2-3l3 2zM449 189l-5-2l-5-3l4-2l4-3l2 6zM351 197l-2-2l-3-6l6 1l4 2zM311 190l2-2l6 2l-3 1l-4 2zM397 246l-5 3l-4 1l0-5l5-3zM379 190l3 1l4 2l-5 1l-1 0zM382 180l2 3l0 3l-3 0l-4-1l4-4zM383 182l3 1l2 3l-4 2l-2 0l-1-4zM333 251l0 3l-5 3l-3-4l3-5zM425 239l-4-3l-4-3l7-2l4 1zM264 207l7 0l4 1l-6 3l-8 0zM266 219l-7 2l-2-2l2-4l5-1zM412 254l3-3l1-1l2 2l0 2l-2 0zM306 197l0 2l0 4l-4-3l-1-2zM289 211l1 3l-1 2l-3-2l-1-3zM385 197l7 0l6 1l-3 3l-5 2zM321 203l-2 2l-4 2l0-3l3-3zM345 203l5-1l2 0l-2 4l-4-1zM323 252l-4-3l0-3l5 1l1 3zM319 212l2 3l0 4l-3-1l-3-3zM288 232l-3 0l-2-1l1-2l3-2zM355 201l4-1l4 0l-1 4l-3 2l-2-2zM366 187l1 4l-6 1l1-2zM391 192l-3 2l-4 0l1-3l3-2zM385 202l-2 5l-1 2l-2-3l-2-2l3-1zM361 213l-5 1l-3-1l2-4l6-1zM344 214l6-1l6 3l-5 2l-6 0zM427 250l-3-1l-4-1l3-2l3-1l0 3zM352 194l2-5l2-3l3 2l1 3l-4 3zM366 232l4-1l3 1l-1 2l-5 1zM368 234l-2 2l-3 1l-2-4l2-2l2 1zM274 219l1-3l3-1l1 1l2 2l-4 1zM263 210l3 0l6 3l-6 2l-7 0zM296 201l-2-3l-3-4l5-1l6 2l-2 3zM360 200l0-2l2-2l2 1l2 3l-3 1zM316 256l6 1l1 3l-2 1l-5 2l0-5zM356 207l-2 2l-3 2l-1-1l-2-3l4-1zM346 203l4 3l-2 2l-2 0l-3-3zM426 215l1 4l-4 3l0-5zM324 242l-6 0l-4-3l6-3l6 0zM302 234l-7 1l-1-5l6 2zM294 251l0-3l2-2l2 2l-2 4zM294 213l-4-1l-2-1l3-2l4 1zM274 232l4-3l4 2l-4 3zM462 241l-5 0l-6 0l2-4l5-4l2 4zM462 235l1-5l8 1l-5 5zM454 241l6-2l3 2l-1 3l-1 3l-4-3zM246 272l-4 0l-4-1l3-4l6 2zM218 281l-1-6l5-3l1 6zM221 291l1-4l6-3l1 5l-1 4zM218 246l4 2l3 2l-4 2l-5 2l1-3zM211 283l5 0l4 5l-5 0zM241 275l-3-1l-3-2l5-1l4 1zM205 274l-4-2l-1-4l5 3zM276 241l3 0l2 4l-4 0l-4-1zM312 272l5-2l4 3l-3 2l-5 1zM270 257l-2-3l-3-3l6-1l3 2l-1 2zM344 242l-6-2l0-3l5 2zM381 268l-2-5l1-7l6 4l1 3zM260 265l1 2l0 4l-4-3l-3-2l3-1zM264 267l-2 1l-4 0l1-3l3-1zM253 275l6 2l1 3l-4 1l-3-3zM374 311l2-5l3-2l2 5l-2 4zM365 310l2 3l-1 3l-3-2l-1-2zM370 302l4 5l0 3l-5 0l-4-2l3-3zM282 314l-1-1l-3-3l3 0l3-1l-1 2zM356 281l-4 3l-3 2l0-4l1-3zM301 293l3 2l1 4l-4-2l-3-3zM281 244l0 3l-4 3l-3-3l0-3zM278 255l-3-5l4-2l2 4zM315 260l-3 2l-5-1l3-2l3-2zM394 264l-4-4l3-5l3 4zM395 290l-5-2l1-3l3 2zM333 278l-1-5l0-2l5 1l1 5zM390 284l3-6l4-2l1 4l1 4zM335 297l0 3l-4 2l-1-2l0-2zM294 286l3 4l-3 6l-3-5zM315 277l-4 2l-1 1l-2-2l1-4l1 2zM405 291l1 2l-2 4l-2-4zM405 304l-4-3l-2-3l6 1l3 1zM356 305l1-3l4-4l2 5l1 3l-4-1zM363 293l-4 2l-6-2l4-3l5-1zM294 299l1 5l-2 3l-3-4zM307 290l2 0l2 4l-4 1l-3-2zM298 287l7 3l3 5l-6 0l-4-2zM287 283l4 1l3 3l-5 1zM398 280l3-3l1-3l3 1l4 4l-5 2zM391 281l2-3l4-1l-1 4l-4 3zM320 307l-1-3l1-3l4 1l1 4zM268 273l-2 2l-2 2l-3-2l-2-3l5 0zM361 237l2 7l-6 2l0-4zM377 256l-3 1l-7 1l1-5l3-4l4 3zM279 291l-5-1l-3-1l2-4l5-2zM292 310l1-2l4-3l1 3l1 3zM392 261l-3 3l-4 0l0-3l2-3zM273 286l5 2l1 5l-5 0l-4-2zM376 296l-1 3l-2 3l-6-2l-1-1l3-3zM400 253l2-2l5-1l-1 5l-3 3zM318 296l3 3l-2 3l-3-1l-4-5zM309 276l1 4l-5 2l-1-2l-3-4zM271 269l-2-4l4-4l3 4l0 3zM411 264l-2-4l-1-3l4 2l2 3zM352 253l-3 1l-4-1l2-4l2-1zM357 311l-5-3l-4-4l6-1l3 1zM379 289l-3 0l-5 0l2-4l4 0zM409 308l0-3l2-3l3 4l0 2zM389 303l0 3l0 4l-3-1l-2-1l1-3zM392 276l-3 3l-3 0l0-3l3-3zM399 262l-2 2l-3 3l-1-2l0-4zM194 322l5 2l2 1l-5 2l-3-2zM154 314l-2-3l0-3l3 1l2 4zM181 300l3 3l1 4l-5-1l-3-1zM183 338l6 0l1 4l-5-1zM185 323l-5-2l-4-2l6-3l4 2zM148 302l1-4l1-3l4 3l1 3zM149 356l-2 2l-3 1l0-3l1-2l3 1zM168 344l5-1l6 0l-2 2l-5 5zM196 331l4 0l4 2l-2 4l-5 0zM197 342l-2-2l0-4l4 1l3 1l-3 2zM166 321l-3 4l-6 2l1-7zM175 319l6-3l7 1l-7 5zM161 320l-4-4l1-4l4 1l3 4zM179 307l3 0l7 3l-5 2l-5 2zM173 312l-2 4l-6 1l3-5zM150 340l-5-1l-3 1l2-4l3-3l2 2zM134 323l-6 1l-3-3l7-1zM191 336l-4-1l-2-4l5 1zM144 318l1 3l-5 4l0-6zM152 318l-5 2l-3 2l1-5l1-3zM206 321l1-3l6 0l-3 3zM212 325l-5 1l-2-3l5 0zM228 307l-2 4l-3 2l-2-5l3-3zM197 327l-1 3l0 3l-5-1l-1-1l2-3zM282 348l-4-4l6-3l0 5zM257 338l3 4l-1 3l-5-2l-2-2zM294 334l5-1l4 2l-6 3zM281 335l-4 0l-3-2l4-3l6 0zM278 302l0-4l8-2l-4 7zM263 313l-2 2l-5 2l-2-4l1-5l4 2zM252 329l-4 0l-3-2l2-1l3-2zM341 308l4 2l1 3l-6-1l-3-2zM365 328l7 2l2 5l-7-3zM285 304l4-2l4 1l-3 3zM341 350l0-3l1-2l3 3l0 2zM329 334l-5 0l-5 1l3-7l8-1zM339 317l-4 1l-4 1l1-3l-1-3l4 1zM310 344l-3-2l-1-4l4 1zM310 310l-3-2l-1-4l4 0l4 3zM295 329l3-2l6 3l-6 2zM359 325l2-1l3 0l1 3l-1 2l-3-1zM373 345l-3-2l0-5l3 1zM365 356l-2-4l0-4l4 2l2 2zM369 317l-1 2l-4 2l-1-3l1-3zM350 314l-2-2l0-4l3 1l3 1l-1 2zM340 325l6-1l4 3l-3 3l-5 2l-1-5zM374 322l4-1l5 2l-4 3l-4 0zM386 333l5 2l2 2l-3 3l-3 1l-2-4zM362 392l3 1l2 4l-4 0l-3-1zM343 390l4 1l1 6l-7-3zM344 394l-3 2l-5 0l1-3l-1-3l4 1zM374 384l-2 4l-5 4l-2-6l1-4zM341 363l-4 3l-7-1l5-3zM341 366l2 4l0 2l-5-1l-1-4zM365 346l4 0l3 3l-3 1l-4 0zM251 382l-1-3l2-2l2 2zM262 360l3 0l1 1l-1 3l-4 1l0-2zM338 356l-4-1l-4 1l1-3l3-4l2 3zM312 369l-6-2l-3-2l4-3l4-3l1 4z"/><path fill="#7db254" d="M258 42l1 2l-1 3l-3-1l-1-3zM343 122l7 1l4 3l-6 3l-5-2zM239 172l1 5l-4 4l-2-6zM435 177l1 4l-1 2l-3-2l0-3zM319 213l-1 4l-2 3l-3-2l-2-5zM375 188l3 1l4 3l-6 1l-6-2zM291 225l5-4l6 3l-7 3zM394 202l4 1l3 2l-3 2l-3 1l-1-4zM397 230l-5-2l0-3l3 0l4 3zM409 194l0 2l-2 1l-2-2l0-2zM299 230l1-3l5-2l-2 5zM310 194l2 5l-5 5l-2-4l-1-7zM322 209l4-1l4-1l-1 3l-3 3zM212 277l6-1l3 2l-1 3l-6 2zM228 272l1 3l-3 7l-3-3l-2-4zM270 274l2 1l3 3l-4 0l-3-1zM280 264l0-3l3-3l2 2l2 3l-4 1zM394 285l2-4l3-4l3 4l2 2l-5 2zM256 286l3-4l7 0l-4 5zM304 312l3-4l6-1l-2 4l-4 4zM173 307l5 2l3 3l-6 1l-4 0zM120 304l5 0l5-1l-1 6l-3 2l-3-1zM222 316l2-1l3 2l0 1l-3 3l-1-2zM270 317l0-3l2-2l3 2l-1 2zM251 328l2-3l3-3l3 5l1 4l-4-2zM290 343l-2 3l-5 1l0-4l0-3zM340 321l-4 2l-7 1l0-4l4-3zM337 326l-3-2l-2-4l5-1l4-1l0 5zM348 330l6 0l4-1l-1 6l-3 2l-2-2zM394 339l2 1l3 3l-2 1l-5-1z"/><path fill="#6ba344" d="M260 86l4 1l1 1l-2 2l-3-1zM260 204l5 1l5 1l-6 3l-4-1zM404 208l-3 3l-5-2l5-2zM391 238l5 0l3 3l-4 1l-2 2l-2-3zM374 246l-4 1l-7-1l4-3l6-3zM311 197l-4-3l3-5l3 4zM429 204l0 5l-4 2l-2-1l-4-3l6-2zM369 219l-1 4l-5 2l1-5zM428 240l-3 1l-4-3l2-3l4-2l1 5zM292 216l-3-3l-1-4l5 1l3 5zM364 235l2-3l2-4l2 5l1 1l-5 2zM269 237l7 1l3 7l-8-2zM318 214l-4 2l-3-1l1-3l4-1zM230 269l5 1l4 4l-5 0l-5 1zM216 272l1 2l0 2l-3 0l-2-3zM266 280l-1-3l1-3l3 2l1 1zM309 293l3 1l3-1l-1 4l-4 2l-1-2zM318 315l-4-3l-1-2l4 0l3 3zM336 290l4 2l3 5l-6-1l-4-2zM402 268l3-1l3 1l-2 3l-4 0zM353 293l0 4l1 3l-5-1l-4-2zM406 323l2-3l3-4l3 4l-1 3zM155 304l4-3l4-1l-1 3l0 3l-4-2zM302 317l3-2l5 0l-1 3l-1 3l-2-1zM373 320l-2-4l-1-2l5 0l3 2zM323 337l4-1l3-1l0 4l0 2l-4-1zM286 350l1 3l-2 3l-2-3zM343 308l6-4l6 3l-6 3zM360 362l0-2l1-3l2 2l1 1z"/><path fill="#4d7c4e" d="M277 50l-4 3l-6-3l7-2zM396 134l-1 3l-3 2l-1-1l-1-4l2 0zM311 189l2-5l4-1l1 4l-3 4zM346 178l-5 6l-7 0l5-6zM299 157l3-1l9 0l-3 3l-3 5zM364 185l6 4l1 5l-7-1l-4-3zM364 250l-1-6l4-3l2 3zM309 196l-3 4l-4 2l0-5l0-2zM401 206l7-1l4 5l-5 2zM241 271l-2 4l-5 1l-1-4l4-3zM264 267l-2-6l6-1l-1 3zM253 273l-3 1l-5 1l1-3l1-2l4 1zM330 305l-5-2l-1-5l6 0l3 4zM401 280l3 3l-2 4l-2-4zM319 312l-4 1l-5-2l5-4zM329 266l-1 1l-3 3l-1-4l2-2zM390 254l4 2l1 1l-2 1l-3 1l0-2zM284 240l2 5l-4 5l-3-6zM310 311l0-4l8-1l-1 4l-5 5zM383 281l6 1l3 5l-6 0l-7-2zM193 340l-4 1l-3 1l0-4l3-2zM275 318l-7 1l-3-4l4-1zM347 316l-2-2l-3-4l4 0l3 0l0 3zM297 330l-3-5l1-4l4 4zM334 320l5 2l2 1l-2 4l-6 1l0-2z"/><path fill="#8fc062" d="M349 142l-4 2l-5 2l0-3l3-4zM297 134l3 1l2 2l-3 1l-4 0zM214 191l4 5l-2 5l-4-4zM281 216l-5 1l-2-3l2-1l5-1zM320 187l-5 1l-6-3l2-2l5-1zM297 206l-2 0l-3-3l2-1l4-1l0 4zM430 161l3-2l4-1l2 3l-1 5l-5-3zM356 206l-2-3l0-4l5 3l0 3zM364 185l5 2l1 4l-5-1l-3-3zM420 207l5 2l2 4l-6 0l-6-2zM302 195l7 3l2 2l-4 2l-4 2l-1-5zM435 248l3-3l4-3l2 5l2 4l-6-1zM232 263l-6 1l-2-2l3-3l4 0zM262 275l-5 0l-3-2l3-1l4 1zM349 235l3 4l1 4l-6-2l-4-2zM313 288l5 2l2 4l-5 1l-5-3zM349 275l-4-3l0-4l4 1l3 2zM359 264l1-3l4 0l-1 2zM409 251l1 4l-1 2l-3-1l-2-2l2-1zM379 264l-4 2l-5 3l0-4l1-4l2 0zM357 289l-4 0l-7-4l4-2l8 0zM313 285l3 0l4 1l-2 2l-3 2l-1-2zM307 289l3 1l2 2l-2 2l-5-1zM413 317l6 2l5 2l-6 3l-4-2zM391 303l-2 2l-4 1l0-3l3-3zM427 302l-3-2l-2-4l4-2l6 1l-1 3zM152 302l4 3l2 4l-5-1l-3-1l1-2zM210 350l-8-2l-2-4l4-1l5 2zM212 327l-4 2l-3 2l0-3l1-4l3 0zM328 341l1 3l-2 2l-2-1l-2-3l4-1zM309 304l-3 1l-5 1l1-3l1-2l2 1zM305 368l2 2l-1 4l-2-1l-2-3zM311 317l2-6l5-1l-2 5z"/><path fill="#5e953b" d="M296 110l5-3l4 3l-3 2zM290 96l-3 0l-4-1l3-3l3-1zM284 151l2-3l3-2l0 3l0 4zM367 131l5 0l3 1l-3 3l-4 1zM225 184l5 1l3 4l-4 1l-5-3zM335 177l-6-3l-1-5l6 0l5 2zM281 183l-2 3l-2 2l-3-4l-1-3l6 0zM340 210l-3 2l-1 2l-2-3l0-3l1 1zM423 243l0-2l-1-3l3 0l4 1l-2 2zM340 215l6 1l-1 6l-5-3zM292 224l0 3l-3 3l-4-4l1-4zM354 254l4 2l1 4l-3-1l-3 1l1-4zM319 197l-4-2l-1-5l6 0l3 2zM370 181l3 1l1 3l-4 0l-2-2zM356 209l-3 4l-4 1l0-3l2-4zM429 226l0-4l1-5l4 6l0 4zM282 237l-1-1l-2-3l5 0l2 1zM277 219l-3-1l-2-1l1-3l2-1l2 2zM309 238l2-2l2-3l3 3l0 4l-3-1zM272 229l2-3l3-1l0 5zM234 265l-4-1l-4-5l6 0l4 0zM301 257l-3 4l-6 1l0-4l4-5zM290 284l0 5l-4 2l-2-4l-2-4zM279 256l-5 1l-4-1l3-5l4-1zM283 304l-3 3l-4 1l3-5zM349 306l3-3l4-1l1 3l1 3l-4 0zM394 309l-1 3l-4 1l0-3l1-3zM398 305l3-1l6 1l-4 4l-7 1zM394 318l1 5l-5 5l-1-4l0-5zM383 310l-5-1l-5-1l3-4l5-3l0 4zM178 306l4 1l0 3l-3-1l-3-1zM174 304l4 4l-2 5l-3-3l-3-4zM258 315l-5-1l-2-4l5 1zM349 348l-6 2l-3-1l3-5l5 1zM305 345l-6-3l0-5l4 1l3 2zM304 315l2 3l-2 2l-2-1l-1-3zM340 369l4 2l4 3l-7 2l-4-1z"/><path fill="#1c3412" d="M267 39l1 7l-7 2l1-6zM277 51l4-4l5 0l-2 3l-4 2zM285 73l-4-1l-4-2l4-3l5-1zM312 57l-3 0l-6-1l2-2l1-3l3 2zM312 55l-6-1l-2-2l5-3l3 1zM341 73l0-4l3-3l2 5l-3 3zM346 58l4 1l4 4l-6 2l-5-1zM346 61l1 6l-2 5l-5-5l-2-4zM271 90l-4 1l-2-3l5 0zM314 80l7 1l2 5l-6-1zM313 102l2-2l6-1l-2 4l-3 2zM266 128l-7-2l-2-3l5-1zM257 124l5 1l5 2l-4 2l-2 3l-3-3zM287 130l-2-2l0-4l3 1l4 3zM349 134l1 3l-4 3l0-3zM339 120l-8 2l-3-7l6 0zM314 156l-5-1l-6-2l4-3l6-2zM328 145l-6-1l-2-5l3 0l5 0zM374 146l3 6l-3 4l-4-2l-3-4zM384 140l-1-4l4-2l1 3zM386 139l2-2l3-1l1 3l-3 3zM379 142l5 2l3 1l-3 3l-4-1zM199 157l2 4l1 4l-6-1l-4-3zM192 163l4 1l1 3l-3 1l-4-1zM213 184l-1-2l0-3l3 1l2 2zM214 177l1 5l1 2l-4-1l-2-2l1-2zM198 186l4 2l5 3l-5 2l-5-1zM216 199l-4-1l-3-2l4-3l4 1zM217 185l3 4l1 6l-6-2l-3-4zM272 187l-2-3l2-4l4 3zM243 194l3 3l1 4l-5-2zM262 194l-5 0l-4-3l5-2l4-1zM264 199l5 1l4 3l-4 1l-5 1zM346 163l3 2l0 4l-4-2zM273 191l-2-4l-1-5l5 1l3 1l-1 3zM287 188l-7 1l-6 0l3-5l6-3zM347 201l-3 2l-5 1l3-5l3-2zM347 173l4 2l3 3l-5 2l-4-3zM296 206l0-3l4-1l0 3zM316 187l0-6l5 0l1 3zM301 201l-3 3l-7 1l4-6l2-4zM303 177l-4 3l-2 0l2-3zM308 171l-6-1l-5-3l8-1zM361 176l5 4l0 4l-7-3zM340 150l-5 0l-4-1l2-4l7 0zM338 144l-2 2l-4-1l2-2l3-1zM321 138l4 0l3 2l-3 1l-4 1zM275 154l6-3l3 2l-3 2zM356 171l-4 5l-4-1l2-3zM341 165l0-3l4-3l1 3l-3 4zM353 170l4-1l3 0l0 3l0 3l-4 0zM296 153l4 1l2 2l-2 2l-3 1zM419 172l-7 2l-4-3l6-3zM415 151l-7-1l0-4l3 2zM423 179l-3-3l-1-3l4 0l5 0l-3 3zM420 174l-2-4l3-3l4 4zM426 155l-6 0l-4-3l5-3l4 1zM460 180l-1 4l-3 1l-2-2l0-3zM359 233l5-2l7 1l-4 5l-3 2zM396 252l2 2l2 4l-3 1l-3 0l0-3zM389 256l2-5l3-2l2 5l-4 3zM300 198l4-2l5 2l-3 3zM274 210l0 3l-3 3l-3-3l0-4zM360 201l0-3l2-2l3 2l1 3l-2 1zM370 223l-4-3l-1-6l4 1l7 3zM339 222l5-2l3 0l-1 3l-3 3zM286 208l-4 1l-3 3l-2-4l5-4zM284 207l-4-3l-1-7l5 3l4 1zM303 248l-5-3l3-4l3 3zM297 252l1-3l4-2l0 4zM335 217l-4 2l-6 2l0-5l2-5l3 2zM330 216l4 3l-2 5l-4-4zM330 243l5 2l3 2l-5 2l-4 2l2-5zM293 215l5-1l3 2l-2 3l-6 0zM296 215l-2-4l2-3l3 1l2 3zM298 221l-6 1l-4-1l1-3l1-3l6 2zM381 194l-6 0l-2-6l5 1zM370 226l6-3l6 3l-5 2zM342 197l5-5l6 1l-3 5zM282 229l-2-4l4-2l2 2zM402 197l3-3l6 3l-4 3zM368 259l5 3l2 4l-5 1l-5-2zM369 190l-5-3l2-5l5 3zM369 217l-3-3l1-6l5 5zM310 253l3 3l0 4l-5-2l-1-6zM310 251l-3 3l-3 0l1-4l3-2zM384 209l7 0l5 2l-5 2l-4 1zM436 219l6-1l6 4l-4 2l-6-1zM412 227l2-4l6-3l-1 7zM415 223l4 1l3 2l-1 1l-4 3l-2-4zM407 231l-3-3l-1-5l5 3l5 1zM431 221l-1 5l-6 0l2-5zM394 227l-1-3l1-4l3 3l2 3zM274 229l4 0l4 0l-1 2l-1 3l-3-2zM274 237l-4-2l-2-4l6 0l2 3zM303 237l-2 2l-3 3l-2-4l0-2l2 0zM290 248l2 2l-1 5l-5-2l-1-3zM314 248l4 1l3 2l-3 3l-4 2l0-4zM310 208l-2 2l-6 2l1-5l1-3l4 2zM290 217l3-4l2-2l4 2l0 3l-5 2zM461 242l-1 3l-2 3l-3-3l1-3zM435 249l-5-2l-5-2l6-3l2 0l3 2zM209 293l1-5l1-5l5 4l3 4l-6 0zM219 268l0 3l-3 1l-1-2l2-4zM213 269l3-3l1-3l2 4l-1 2zM278 279l-5-2l-3-1l5-2l5-1zM261 262l2 3l-1 2l-2 0l-3-1l1-2zM255 267l1 3l1 3l-4 0l-3-1l0-2zM245 268l5 0l3 0l-1 3l-5 3zM373 284l3-3l4-2l1 2l0 4zM340 240l-5 2l-3-4l5-2zM426 268l2 2l-1 4l-2 0l-3-3l1-2zM315 247l-5 0l-5 0l1-3l3-4l2 3zM345 286l3 2l1 3l-4 1l-3-1l0-4zM349 303l-6-3l2-5l3 3zM402 286l-4-1l-3-4l6 0l3 0zM408 283l3-5l4-2l0 6zM324 310l-3-2l-2-3l5 0l4 1zM424 274l-2 3l-2 2l-1-3l0-2l3 0zM351 297l5 0l2 3l-5 1zM292 301l-3-2l-3-4l6 0l3 3zM303 303l-3-2l-3-1l5-2l3 1zM407 290l4 0l4 0l-1 3l-5 2zM328 272l2-5l6-1l-1 4zM331 259l-5 0l-2-4l4 0zM295 294l0-5l2-5l4 3l2 4zM352 263l-1-1l0-4l3 2l2 1zM388 284l6-2l6 2l-8 4zM313 289l2-6l5 0l1 4l-2 2zM312 286l-5-3l1-4l6-1l5 3zM363 255l2 2l1 2l-5 1l-2-2l1-1zM367 244l3-5l3-1l3 4l-4 4zM299 248l-2 3l-6 5l0-4l1-5zM303 286l3 2l1 2l-2 0l-4 0l1-3zM377 253l1 4l-1 3l-2 0l-3-3l2-1zM271 291l3 2l1 3l-3-1l-3-2zM410 261l-6 1l-6-4l7-2zM381 284l-3-1l-2-3l4-1l3 2zM255 273l2-2l4-1l0 3l-1 2zM358 264l3 4l-1 3l-5 0l-3-2l3-2zM345 270l6 2l-1 5l-4-2zM302 286l5-1l4 2l-2 4l-5 2zM410 252l-4-1l-5-3l4-3l6 0zM271 248l3 1l4 3l-3 1l-5-1zM270 254l4 5l-2 5l-5-4zM405 258l1-3l0-3l4 3l2 1l-3 2zM383 314l-4-2l1-4l4 2zM409 285l-1 4l-2 2l-3-3l1-4zM381 307l4 4l-3 3l-3-4zM382 306l-3 5l-7-2l5-3zM394 290l-3 0l-5-3l3-2l5-1l1 2zM399 289l3-1l3 1l-1 2l-5 1zM376 295l-1-2l-1-3l3 0l3 1l-1 1zM369 290l-6 2l-4-2l4-3zM174 353l-1 4l-4 2l-1-3l-1-4zM128 315l-1-2l3-4l4 3l-1 4zM132 359l-4-2l0-6l4 1l6 5zM141 325l0-4l0-3l4 2l3 1l-4 2zM145 323l5-2l7 2l-3 4l-5 3zM150 322l1-4l7-2l-3 6zM187 359l-6 0l-3-4l7-1zM173 342l3-2l6-1l-2 5l-2 4zM169 345l-4 1l-3-3l6-1zM167 320l2-2l4-2l0 3l-1 4zM177 349l0-6l4-4l2 5l2 4zM152 305l2 2l0 5l-6-2l-2-4zM186 345l4 1l3 4l-3 0l-4 0l0-3zM157 301l-1-4l2-3l2 2l2 3zM149 314l8 1l3 1l-3 3l-5 1zM207 325l-2-4l2-4l3 3l5 2l-4 1zM222 326l3 3l2 3l-4 0l-4-2l2-2zM210 329l-6 1l-6-2l3-2l5-3zM191 328l-2-5l1-5l5 3l5 1l-4 3zM266 344l-2 3l-4 2l0-6l4-2zM302 329l0 5l-1 3l-4-4l1-4zM296 335l-1-4l3-4l2 3l3 4zM248 331l5-3l8 3l-4 3l-5 3zM273 331l1-5l5-3l0 6zM266 334l-3-3l-1-4l6 1l2 2zM263 315l-1-3l4-5l3 3l0 6zM271 285l-5-4l1-4l4 3zM291 338l1 3l3 2l-5 1l-5-1l1-2zM366 316l-4-3l-1-4l5-1l5 1l-3 3zM347 346l5 4l-1 5l-4-3l-2-3zM288 367l1-4l3-2l1 4l-2 3zM336 312l-2-4l2-4l4 3zM339 304l-7 0l-5 0l4-4l3-4l3 6zM337 310l1-5l4-2l0 4l-1 3zM314 341l2 3l3 5l-6-2l-4-5zM339 314l2 0l4-1l-1 3l0 3l-4-3zM298 346l-1-5l2-2l2 4zM281 317l-4 2l-6 0l3-3l5-1zM348 308l5-3l5-2l0 5l-4 6zM292 345l4 0l5 0l-3 3l-2 3l-4-3zM281 314l-4-1l-3-1l3-3l5-1l0 2zM310 321l3 1l1 4l-3 0l-4-3zM329 359l0 6l-2 4l-3-2l-4-2l3-3zM322 348l6 5l-2 4l-4-3zM340 322l1 2l3 3l-3 1l-3 1l0-4zM367 348l3 5l-3 5l-3-4zM373 345l-4 2l-3 4l-3-5l1-5zM378 342l1 5l-4 1l-2-4zM337 328l1 3l-1 4l-3-2l-4-3zM390 333l-4 4l-4-2l4-3zM387 324l6 3l2 4l-5 1l-6-2zM373 331l5 0l3 6l-5 0l-6-3zM336 396l2-4l2-3l3 2l4 4l-7 1zM353 358l4 2l4 2l-5 3l-4 1zM367 384l-1 4l-3 0l-1-3zM374 348l5 0l1 1l-1 2l-5 2l0-4zM255 377l2 1l1 2l-4 0l-2-2zM258 369l-1 7l-6 0l0-5zM340 371l3-1l4 1l-2 2l-3 2zM321 368l-3 1l-3-1l2-2l4-1z"/><path fill="#335a21" d="M314 74l-6-5l1-6l5 4zM319 94l4 4l-1 3l-4-1l-3-5zM332 110l-4 0l-3 0l2-4l6-1zM288 151l-6-1l-2-4l3 0l4 1zM335 152l-1-4l2-4l4 4l1 4zM316 137l-1 5l-2 3l-5-4l-1-3zM199 162l0 2l-1 3l-2-2l0-3zM260 190l0-4l1-3l2 2l2 2l-3 1zM376 177l-3-3l0-4l4 0l2 2zM354 203l-5-1l-3-4l7 1zM341 153l2 4l4 1l-4 2l-5 1l1-4zM351 181l-1-4l4-5l2 6zM357 181l2-4l4-1l0 5l-5 2zM348 183l3-3l4-1l-1 3l-2 3zM273 170l1 4l-2 4l-5-3l-1-3zM322 168l2 4l-5 2l-2-3zM422 163l3 3l1 4l-4-1l-4-1zM339 219l3-2l3-1l0 4l-4 2zM327 255l-3-5l2-6l4 5zM340 185l0-5l3-4l3 5l0 6zM423 238l2-3l2-1l2 3l0 3zM345 221l-2-2l-2-2l3-1l3 1l-1 1zM356 227l-3 2l-3 1l0-3l0-2l3 0zM290 227l-3-4l5-3l2 5zM291 199l2-6l7 1l-2 5zM316 196l-1-3l0-2l2-1l7 0l-4 3zM412 204l-5 6l-4 0l1-4l3-3zM291 225l-1 4l-3 2l1-4zM312 240l2-1l5 1l-2 3l1 3l-4-3zM301 241l4-1l5-1l-2 3l-2 2zM324 251l-4 6l-7-2l4-4zM469 239l-3 0l-3-4l4-1l2 0l1 3zM240 262l0 3l-1 4l-4-1l-3-3l4-2zM281 247l-3-2l-2-3l2-2l5-1l1 4zM337 277l-1 4l-3 1l-1-3l2-2zM275 254l-4-1l-1-3l4 1zM293 246l1 3l-1 3l-3-2l-2-2l4-2zM320 274l2 5l-4 3l-2-3zM392 286l4-1l3-2l2 5l-2 4l-3-2zM312 294l5-3l5 3l-6 1zM347 244l4-2l4-1l1 4l-1 3l-4-1zM292 252l-7-1l-3-2l6-3l5 0zM385 257l2 2l1 5l-4-2l-2-1zM401 282l1-4l4-1l-1 5zM404 251l-1 3l-2 4l-4-4l-1-3l3 0zM314 319l-2-5l5-4l1 6zM316 274l6 1l3 5l-5 0l-5-2zM320 306l2-2l4-2l1 4l-2 3zM331 270l-6-3l1-6l4 3zM425 265l-4-1l-4-3l5-2zM268 260l0-5l3-3l3 2l3 3l-5 1zM274 267l2-5l4 0l-2 5zM349 252l-3-5l2-3l2 2l4 4zM328 264l-8-1l-3-6l7 1zM389 313l-6 2l-3-4l5-1zM389 316l-7 0l-2-4l5-2l5 1zM190 301l-4 4l-6-2l4-3zM175 335l3 2l1 3l-2 1l-2-1l0-2zM163 298l6 0l3 2l-5 3l-5-1zM179 318l-4 4l-6-3l3-2zM137 315l3 3l-2 2l-2-2l-2-2zM198 318l-3 4l-6-1l4-3zM133 316l4 0l2-1l1 3l0 3l-4-2zM196 342l3-1l5 1l-2 2l-4 2zM236 309l-2-3l-1-2l5 0l3 2zM195 350l4 0l4 1l-3 3l-6 1zM289 330l-5 2l-5 1l0-4l5-3zM289 326l-4-1l-3 0l0-3l4-2l2 2zM304 289l1 5l0 3l-6-2l-2-2l3-2zM263 312l2 3l2 3l-5-1l-3-3zM294 318l4 3l-2 3l-3-3zM276 300l-4 5l-4-1l2-4zM305 330l-3-2l-4 0l5-3l2 0l0 3zM359 324l2 2l1 3l-5-1l-2-1zM347 308l2-4l8-1l-2 5zM343 310l-5 2l-2-3l3-1zM301 302l3 2l5 2l-3 3l-4 1l-2-3zM282 349l-4-4l-5-3l7-1l4 1zM362 319l4 3l-3 6l-4-2l0-5zM359 305l-3 3l-4 1l1-4l2-2zM347 329l6 4l-4 4l-3-2zM344 329l2 6l-2 3l-4-3l-2-4zM354 362l-2-3l3-4l2 5zM349 332l-1-6l5-2l1 2l2 5zM286 318l-4-1l-5-1l4-3l4 0zM287 326l5-5l6 1l-2 4l-2 4zM332 337l-4-3l-5-1l5-3l5-1l-1 2zM356 316l5-3l4 1l-1 3l-3 4zM329 301l2-3l2-1l1 2l1 2l-3 0zM359 314l-1 2l-4 4l-3-2l-2-5l5-1zM387 342l-2 3l-4 0l1-2l-1-3l4 1zM389 325l5 3l2 3l-5 0l-3-2zM352 328l-4 4l-3 1l-2-3l2-4l2 0zM390 335l-2 3l-4 1l-1-4l3-3zM328 388l-2-3l-3-4l3-1l6 0l-1 4zM343 404l2-3l4-1l0 3l2 1l-5 0zM344 376l1 6l-1 6l-6-6l-2-5z"/><path fill="#3a6131" d="M271 35l0 3l-2 4l-3-2l-2-2l4-1zM281 38l-4 4l-5-1l1-4l1-3l4 2zM300 96l7 0l3 6l-8 0zM326 95l4 5l0 3l-5-1l-3-6zM287 146l3 2l2 5l-5-1l-6-1zM393 132l-2-2l-3-2l4-1l3-1l-1 3zM391 136l0 5l-6 4l0-4l-1-6zM192 166l2-2l3-1l1 3l-4 3zM207 186l-6-2l-3-3l5-1l5 1zM271 193l1-2l3-1l1 2l-1 2zM248 188l-5 1l-5-3l7-2zM262 183l5-2l4 3l-5 2zM273 195l3-5l7-3l-1 5l-4 4zM351 174l-4 1l-3 1l-1-4l1-3l5 3zM320 167l-4-4l2-4l5 4zM369 183l0-2l-1-2l4 1l2 2zM310 164l-3-5l0-5l5 2l3 4zM286 166l-3-3l2-4l5 4zM294 165l2-3l4-2l0 4l-2 1zM315 171l-4-3l-2-4l7-1l3 1zM414 135l0 5l-5 4l-2-4l2-5zM433 193l-3-1l-2-1l2-1l3-1zM440 197l2-3l2-2l2 4l-1 4l-2-1zM395 210l4-2l6 1l-5 3zM319 243l2-2l5-1l0 4l-1 2zM311 246l5 2l0 6l-5-3l-3-2zM321 256l2-7l5 0l0 5zM316 206l-3 5l-4 1l-2-3l1-3l4 0zM427 251l-6-2l-1-3l5-2l5 1zM367 178l3-4l2-2l2 4l-2 5zM359 212l-6-3l-2-5l5 1l3 2zM351 246l6 0l2-1l0 4l-3 4l-3-4zM436 240l2 3l-2 2l-2-1l-4-1l3-2zM292 206l0 3l-2 2l-1-2l0-3zM398 222l3 2l3 3l-1 2l-4 2l-3-3zM390 191l3-3l4 1l-2 4zM414 223l-6 0l-5 0l2-5l2-4l3 3zM315 231l4-2l3 2l-3 3zM308 203l-4 2l-5 2l-1-5l5-5zM271 255l-4 2l-4-4l4-2l5 0zM265 276l-1-4l3-5l2 3l2 4zM262 277l4-1l3 2l-2 2l-4 1zM290 242l-3 3l-2 2l-2-2l-2-2l4-1zM271 247l1 3l0 3l-5 0l-1-4zM310 248l1 4l-2 2l-3-2l1-3zM302 250l-5-1l-2-2l3-2l2-1l2 3zM421 277l-3 2l-4 2l0-3l-2-4l6 1zM323 305l2 1l1 3l-3 0l-2 1l1-3zM369 249l-8-5l1-4l6 3zM296 309l-7 0l-3-1l3-3l4-2l0 4zM275 294l3-1l5-1l-2 4l-3 3zM327 300l-2 4l-1 4l-4-2l-2-4l2-1zM332 307l3 4l1 4l-4-1l-4-1zM352 312l1 5l-2 3l-3-2l-3-5zM391 306l2-3l4 0l-1 3l-2 3zM401 303l0 3l1 2l-5-1l-4-2l4-1zM376 308l-1 4l-3 3l-1-4zM369 282l1 1l3 2l-3 1l-3 0l1-2zM386 280l4 0l3 2l-2 1l-3 2l-1-3zM365 288l2 3l1 3l-4 0l-2-1l1-3zM163 310l-3-4l-1-4l4-1l5 1zM153 308l3-2l4-2l1 2l3 4l-6 0zM169 354l-4 3l-4 3l-1-5l2-3zM186 303l-2 1l-4 0l1-2l4-2zM178 352l-4 1l-6-1l1-4l5-1zM159 311l-1 2l-2 2l-1 0l-4-2l3-2zM184 344l-4-3l2-3l3 3zM165 304l-4-2l-3-2l5-1l4-1zM146 293l4-4l6 5l-5 1zM264 335l1-2l2-2l1 2l0 4l-2-2zM273 337l-3 5l-8-1l4-5zM296 302l2-3l2-2l3 2l2 5l-6 0zM276 314l2 3l1 2l-5-1l-1-3zM309 293l-7-2l-3-4l7 0zM265 316l5 1l2 7l-7-4zM262 334l5-3l2 3l-3 1zM328 325l0 4l-2 2l-3-3l-2-3zM325 317l3 4l-6 3l1-5zM347 358l6 0l1 2l-4 3l-5 0zM303 311l5 3l1 3l-5 1l-4-1zM332 336l4 2l2 7l-5-1l-6-4zM340 314l5-2l6 4l-8 1zM326 366l-5-5l-2-3l7 0l3 4z"/><path fill="#4f8033" d="M286 40l-1 4l-5 0l1-3zM291 188l4-1l2 1l-1 3l-3 0zM328 189l-2-2l-2-2l5-2l2 1l-1 4zM426 195l2-3l6 0l-1 3l-2 3zM308 205l1-2l5-4l1 4l-2 4zM352 210l5 4l-4 4l-1-3zM426 201l-4 2l-5-1l5-4zM367 241l5-1l5 3l-3 3l-6 2zM377 194l-6 1l-3-4l6-1zM315 247l3-1l4 1l-1 2l-4 1zM212 274l1-4l2-2l3 2l2 2l-4 1zM420 276l-3-2l3-3l2 2zM337 282l6-2l3 2l-1 2l-5 5l-1-3zM285 252l-2-3l-1-5l4 2l3 0zM264 278l2-2l4-1l-1 4l-2 1zM344 294l-4-4l-2-3l6 0l2 1zM174 312l2 0l3 0l-1 3l-2 2l-1-2zM137 310l2-3l3-2l2 3l-2 2zM257 316l1 3l1 5l-5-2l-3-3zM366 313l0 4l1 2l-5 0l-2 0l1-4zM343 315l0-2l2-2l1 4zM383 339l3-2l2 2l-2 1z"/><path fill="#2f542c" d="M285 55l-2 2l-1 2l-3-2l0-4l3 0zM355 65l-6-1l-3-4l3-2l6 1zM348 73l2-2l1-3l3 2l0 3zM317 87l-6 1l-5-2l6-3zM307 80l-2 3l-5 1l1-5zM320 108l-4-4l0-4l5-1l4 4zM318 104l2 3l-2 2l-2-1l-2-2zM317 89l0-3l5-2l0 4zM304 105l4-1l5 0l-3 5l-5 1l0-4zM253 118l4-3l6 2l-4 3zM357 146l-6-1l-4 0l4-3l5 1zM330 137l4 3l-4 5l-1-3zM267 151l3-2l5 1l-3 3l-3 1zM320 129l4 0l4 0l-3 3l-1 2l-2-3zM351 135l1 2l1 2l-4 0l-3 0l2-3zM323 146l-4-1l-4-3l4-2l4 1zM353 134l-5 2l-4-2l3-3zM346 160l3 3l0 4l-6-1l-2-3zM282 166l-1-5l0-4l5 3l4 5l-6 1zM314 189l4 3l2 3l-6 1l-4-2zM360 188l-1-1l-3-3l5-1l3 1l-1 2zM276 160l3-1l4 0l-1 3l-4 3zM316 202l3-5l5-1l0 4l-4 4zM419 169l-1 5l-3 2l-3-4l1-2zM425 147l1 4l-1 4l-5-1l-1-6zM421 184l4 0l3 6l-6 0l-2-1zM434 192l3-1l3 2l-1 2l-1 1l-4-2zM447 172l4 0l5 0l-3 3l-3 2l-2-3zM396 210l-1-3l3-2l1 2l0 4zM400 207l3 1l1 3l-4-1zM348 191l4 1l3 2l-3 2l-3 2l-1-4zM392 244l4 0l5 1l-2 3l-4 5l-2-3zM337 238l-4 3l-8 0l4-4l1-4l5 4zM369 237l1-4l4-1l-1 4zM413 238l1-5l2-2l3 4l0 5zM332 253l1-4l5-3l2 6l-4 5zM420 212l-2-2l-3-4l6 1l3 1l-1 1zM340 190l-1-3l3-3l2 2l-1 4zM439 237l-2 2l-5 1l1-3l1-4l4 2zM429 238l-2-2l-2-3l5 0l4 3zM337 203l1 4l1 3l-3-2l-4-1l2-1zM366 191l-3 0l-3 3l-1-4l0-3l3 0zM284 226l1-3l0-3l4 3l3 3l-5 1zM372 197l-5-2l0-5l5 2zM336 212l0-5l5-2l-1 6zM414 194l-4 0l-3-1l2-2l3-2l0 2zM405 215l3 1l3 4l-6 1l-3-1l0-2zM401 203l4-5l5 1l-5 4zM284 226l-8 0l-2-4l8 0zM297 196l4 0l4 1l-3 4l-5 0zM306 254l-4 1l-7 0l4-3l4-4zM313 240l-3-3l-1-3l6 2zM305 249l0-4l0-2l5 1l2 4zM316 231l1 7l-1 2l-6-2l1-6zM329 209l-4 2l-4-2l1-2l6-2zM461 245l3 3l0 5l-5 0l-6-4zM447 244l4 5l-6 4l0-5zM233 300l-4-1l-1-3l2-1l4 1zM215 261l2-4l3-3l1 5l-2 3zM262 269l-1 2l-6 1l1-2l-2-3l4 0zM277 270l-3 2l-4 0l2-3l2-2zM280 242l2 3l-3 5l-1-3zM296 242l2 4l-4 6l-3-4zM306 252l-1-4l1-3l4 3l1 2zM421 263l-5-2l-1-5l6 2zM306 246l2-3l5-1l0 2l-2 4zM288 252l-2 4l-4 1l-1-3l0-3l4 0zM377 245l0 5l-3 2l-2-2l1-4zM320 238l3 1l4 4l-3 1l-7 2l3-4zM327 270l5-1l4 3l-6 2l-4 1zM374 253l-4-1l-2-3l2 0l5 1zM290 311l-1-2l0-4l4 1l4 3zM409 248l3 3l1 5l-3-1l-5-3zM332 301l-3-2l-1-2l5 0l1 3zM367 262l1 1l0 4l-3-2l-2 0l2-3zM338 262l3 5l-4 3l-1-5zM415 275l5 2l-2 8l-5-4l-1-5zM374 293l0 3l-3 3l-2-5l0-3zM399 297l5-1l5-1l-1 4l-2 4l-5-3zM194 321l0 4l-3 3l-1-3l0-4zM160 302l-4 1l-2-2l3-3l3 2zM144 351l2 4l-2 4l-5-1l-4-4l5-1zM181 310l0 7l-3 2l-2-2l-1-4zM174 317l3 2l0 4l-4-1l-2-3zM167 304l-6 2l-3 0l3-5l5 0zM188 314l-1 2l-2 2l-3-2l0-3l3-1zM150 339l-1 3l-5 2l0-4l4-3zM173 341l3 4l3 3l-8 0l-3-2zM135 333l-1 2l-3 1l0-2l-1-3l4 1zM184 335l-2 2l-4 2l1-4l2-2zM147 311l1 4l-1 3l-3-3zM140 302l-5 1l-4-2l3-3l4 1zM286 326l8-1l5 4l-6 0zM265 318l3-5l3-3l2 6l-4 3zM263 330l-2 2l-5-2l1-1l3-2zM303 299l2 5l0 3l-4-3l-2-2zM268 324l-2 2l-2 2l-2-1l-1-3l2-1zM266 322l4-3l4 0l-2 4zM300 296l-5 0l-4-3l4-1l4 0zM284 336l4 1l0 5l-4 0l-5-2zM261 323l-3-1l-4-2l1-3l4-1l2 3zM344 350l3-2l5 0l-1 4l-5 1zM345 347l5-4l5 1l-3 5zM299 363l-1 2l-3 3l-1-3l-1-3zM320 348l4 2l1 5l-5-1zM306 348l3 1l3 2l-4 1l-4 0zM364 315l4 2l2 5l-5 0l-5-2zM323 363l4-1l5-3l0 6l-5 2zM332 352l-4 1l-6 0l3-2l1-5l3 3zM348 323l-4-2l-2-5l6 2zM380 349l3-3l5 0l-3 3l-3 3zM394 330l4 0l3 0l-3 3l-3-1zM384 335l4 0l4-1l-2 3l-1 3l-3-2zM372 332l2-3l4-1l-1 3zM390 326l4-1l6-1l-3 4l-2 3zM363 402l-2 1l-4-1l2-3l3-1zM248 384l-2-5l1-3l3 0l6 1l-5 4zM347 374l-4-1l-2-2l3-2l4 0zM322 369l-6-1l-2-3l2-1l7 1z"/><path fill="#152813" d="M278 37l-3-2l-1-3l3 0l5 2zM280 42l-2 0l-5 0l2-4l5-1zM270 78l2-2l1-3l3 1l1 3l-3 0zM282 74l1-4l1-2l3 2l2 2l-4 1zM306 68l-3-2l-3-2l3-2l5-2l1 5zM319 56l-1 7l-2 2l-4-3l1-5zM357 69l-2 0l-2-1l0-1l2-2l2 3zM307 101l-2 1l-3 2l-1-3l0-3l4 2zM322 78l2 3l0 2l-3 0l-4-1l3-1zM299 107l-4-3l1-4l4 1l2 4zM312 118l5 0l3 2l-4 1l-3 0zM328 93l0 6l-4 2l-1-5zM319 85l-5-3l0-5l7 3zM323 88l3-3l6-1l-2 3l-1 5zM302 112l-4-4l1-3l3 1l3 2zM299 106l5-1l4 0l-2 5l-4 4zM278 97l5-2l7 0l-5 6zM273 134l-3-2l-3-4l5-1l4 1zM265 124l6-2l5 3l-6 2zM351 137l-1 3l-2 2l-1-3l0-3zM348 137l3 0l3 4l-3 1l-5-1zM279 133l6-1l2 6l-5-2zM287 147l0-4l2-3l3 3l-1 4zM312 153l2-3l3-2l1 3l2 2l-4 0zM354 132l-3 0l-3-2l3-1l4-2l0 2zM369 159l1-4l0-2l3 3l1 2l-3 0zM378 150l-2 3l-6-1l5-2zM209 193l3 4l1 3l-6-1l-4-4zM232 165l3-1l5 2l-3 3l-4 1zM236 169l-1 4l-1 2l-2-3l2-2zM238 180l4 4l0 3l-5-2zM358 192l-2-3l1-3l3 0l2 5zM355 179l-2 4l-4 3l-3-3l4-5zM308 179l3-2l4-2l0 6l-5 2zM337 152l4 3l-1 7l-3-4zM342 158l-1 3l-3 1l-1-3l1-3zM323 179l-5 4l-4-3l4-2zM301 140l-3 2l-4 2l-1-3l2-5l4 2zM313 160l-5 2l-6-2l4-2l6-1zM347 173l4 2l-1 3l-4-1zM355 179l1 3l-1 2l-3-2l-2-1l2-1zM335 145l2 3l-4 6l-2-5zM346 160l-3 0l-3 0l1-3l4-2l0 3zM292 180l-3 1l-2 2l-2-3l0-4l5 2zM287 169l-1 3l-3 2l-2-1l-1-4l3 1zM350 162l-5-1l-5-2l4-3l5-2zM337 152l0 6l-5 1l1-4zM326 159l7-1l3 4l-6 1zM301 158l1-2l3-1l1 1l0 3l-4 0zM281 179l3-3l5 1l-3 2zM365 176l0 4l-3 2l-1-2l1-5zM412 155l1-2l2-2l1 2l1 3zM444 190l0-3l-1-3l3 1l3 2l-2 1zM421 160l-2 4l-5 3l0-5zM430 152l3-3l5-2l0 5l-2 2l-3-1zM435 192l4 2l1 5l-5 0zM461 179l0-3l3-2l2 1l1 2l-3 2zM447 182l1-3l1-2l3 1l1 3l-3 0zM366 239l-5 0l-4-4l5-2l4 0zM384 243l6-1l4 2l-2 4l-5 0zM373 249l-9 0l-2-3l7-2zM316 196l1-2l1-3l3 1l2 2l-3 2zM279 235l5-1l4 3l-4 1zM270 212l2 0l4 1l-3 2l-4 1zM396 216l4 3l0 5l-4-2l-5-2zM334 203l-2 4l-1 2l-4-4l1-3zM376 240l8 0l2 5l-8-1zM340 253l-4-4l3-5l3 3zM334 241l-3 6l-3 1l-2-5l2-4zM324 214l0 4l2 3l-6-1l-2-2l2-3zM349 219l-3 0l-1-1l2-3l3 0zM339 220l7 3l-3 5l-4-4zM365 199l7-1l4 2l-5 3l-4 0zM367 210l6 3l1 4l-7-2zM330 248l-1-6l3-4l3 5l0 5zM356 228l-6 1l-3-1l4-3l2-1zM316 208l4-3l5 1l-4 3zM301 247l-3-3l-3-3l4-1l5 3zM282 222l2-4l6 1l-3 3zM387 245l0 5l-5 1l0-3zM336 245l-3-1l-2-3l3-1l4 1zM345 221l-1 5l-5 0l-1-4l5-2zM301 225l-3-1l-4-3l3-1l2-2l2 4zM286 215l1 2l1 2l-4 1l-4-1l2-2zM294 227l-5 0l-1-3l2-1l4 0zM386 242l0 2l-4 1l-1-2l1-3zM368 244l-2 4l-4 1l0-4l2-2zM381 241l3 3l-1 3l-4 0l-4-2l3-2zM362 208l-1 4l-3 4l-1-4l-2-3zM419 218l2-5l8 1l-5 4zM360 191l3-2l4 1l-2 3zM366 243l5-2l5 2l-7 3zM292 213l1-3l3-2l2 4zM278 231l4-1l3 2l-4 2zM285 195l-2-3l3-4l3 4zM285 229l-2 5l-3 2l-2-3l0-3zM361 186l5 3l-1 5l-2-2l-3-2zM284 218l-6 1l-6-4l6-2l6 2zM275 215l-6-2l-1-3l3 0l4 0zM359 235l-2 0l-2-1l1-2l4-2l0 3zM340 214l2-3l4-2l0 2l0 5zM356 207l-3 4l-5 0l3-4zM397 188l2 2l2 5l-6 1l-3-5zM380 188l-4 3l-3-1l1-3l3-1zM407 220l-4 0l-3-1l1-3l3-2zM436 215l5 0l2 6l-5-1l-5-2zM419 200l-1 3l-5 3l0-3l-3-3l5-1zM424 204l-1-4l3-4l3 3l0 3zM406 200l3 2l3 2l-2 1l-3 0l0-1zM399 225l-5 0l-3-3l3-2l5 2zM292 230l-3 2l-5-1l2-2l4-2zM319 245l0-5l3-5l3 4l0 6zM294 242l-1 3l-2 3l-4-3l-2-3l7-1zM282 229l-5 0l-7 0l4-4l3-4l2 3zM302 234l-2-4l2-5l4 3l1 5zM299 245l-6 5l-4 0l0-4l4-4zM298 247l-3-3l0-3l4 1l2 3zM287 246l3-2l5-1l-2 4l-2 2zM286 238l-3 0l-1-2l1-2l4 1zM314 229l4 1l4 3l-4 0l-4 2zM317 240l-1 3l-4 3l-1-3l-1-4zM279 238l1-3l3-3l1 3l0 4zM269 245l1 4l-4 4l-2-3l-2-5zM247 267l-3-1l-5 0l3-3l2-2zM276 234l3-2l4-1l-1 4l-1 1zM272 250l-6-1l0-4l3 0zM352 243l5 1l2 4l-5 1l-3-1zM341 282l1 2l1 4l-2 0l-5-2l3-2zM329 249l-1-3l-2-3l5 1l3 2zM308 252l-1-4l4-4l1 3l1 5zM366 305l6 2l2 5l-7-1zM290 309l-2-5l3-3l2 2l4 2l-4 3zM291 253l-2 2l-5-1l1-2l4-2zM294 245l-3-1l-1-3l4 0zM346 305l-3-3l-2-1l4-2l4 3zM430 296l-2-1l0-5l4 3zM422 293l-4 2l-2-3l3-2zM324 256l6 2l2 3l-7-1l-3 0zM303 280l-2 2l-3 0l0-3l2-3zM341 287l-2-2l-3-1l4-2l2 0l1 2zM277 293l-3 2l-6 0l1-3l0-4l5 2zM301 315l4-2l4 2l-3 2l-3 0zM343 304l5 2l5 3l-7 2l-6-2zM273 253l5-2l4 2l-5 2zM370 254l-3 4l-7 1l1-5l3-4zM368 249l5-3l4 2l-3 3l-2 1zM360 242l-3-4l1-3l5 4l1 1zM412 274l3-3l4 1l-3 2zM420 263l4 1l3 1l-2 3l-4 2l-1-4zM309 260l4 0l2 2l-3 1zM305 256l0-2l3-3l2 2l0 2zM312 259l-4-1l2-5l2 2zM310 257l-5 5l-4 2l1-6l3-3zM381 295l-3 0l-4-1l3-3l4 0zM269 283l4-2l3 1l-2 4l-3 1zM321 303l4-4l6-3l0 5l-4 5zM351 292l4 1l2 3l-4 0l-2-1zM364 257l-2 4l-5 1l2-3l1-4zM328 266l3-1l4 1l-3 2l-2 2zM353 273l1 5l-3 5l-3-5zM427 260l-6-1l-2-5l7 1zM273 264l-3-3l-1-3l5 1l2 2zM413 255l1 4l-4 3l-2-3l0-4zM307 308l-2-4l0-3l5 0l2 3zM302 315l-3-2l0-3l2-1l3 1l0 3zM284 256l5 2l3 3l-4 0l-5-2zM314 292l-1 3l-5 3l-1-3l2-4zM304 298l3-1l3 1l-2 3l-3 1zM380 296l0 4l-1 4l-4-2l-4-4l5 0zM411 294l-4 4l-7-3l4-2zM368 299l0-3l2-3l1 2l1 3zM393 304l2-6l6 1l-3 3zM407 279l-2-5l4-2l1 5zM400 268l7-3l5 1l-3 5l-5 0zM433 292l-4-2l0-4l4 2zM184 303l4 0l4-1l-1 4l-1 4l-3-3zM178 302l-3-2l-1-5l6 1l2 2zM133 356l-2-2l-1-4l5 0l3 5zM162 323l-1-2l3-5l3 3l2 2zM151 318l3-3l3-2l0 3l-1 3l-2-1zM186 346l-4 2l-4-2l2-3zM182 313l-4 0l-4-4l6-1zM183 348l-2 5l2 3l-7-2l-2-3l3-3zM164 323l-4-3l-3-6l5 0l6 0l-2 4zM167 313l-4 1l-5-2l4-2l3-1zM134 302l-1 3l-1 2l-4-2l-3-3l4-1zM209 350l1 2l-3 4l-2-2l-1-5zM194 326l4-2l4-2l1 3l0 5l-4-3zM291 332l-3-4l0-6l6 3l4 4zM283 327l6-3l2-1l1 5l-1 3l-4-3zM290 310l3-2l3 0l-2 3l-1 1zM293 303l6 0l3 4l-6 0zM260 285l6 2l2 5l-5 0l-5-1zM262 291l2-5l3-1l0 5zM287 339l-3-4l3-3l2 0l4 1l-3 3zM360 317l-4-1l-4-5l4-1l7 2zM303 321l4 2l2 1l-2 2l-3 0l-1-1zM359 313l3 3l2 3l-4 2l-5 1l2-5zM302 302l-3-2l0-3l4 0l2 3zM334 324l0-3l4 0l0 2zM336 301l-4-1l-3-2l4-2l4 1zM372 347l-2-3l-2-6l4 1l6 1zM307 350l6-2l4 2l-5 3zM346 319l-2-6l7-2l0 5zM307 314l0-2l-1-3l4 1l2 2l-2 1zM312 304l2 2l0 3l-3 1l-4-3zM278 341l5-1l5 1l-3 5l-5 0zM375 331l-7-1l-1-5l5-1l3 2zM319 320l0 3l1 3l-4-2l-3-2zM283 316l-2-4l0-3l4 3zM310 365l0 4l-4 3l-3-4l1-4zM313 316l0 4l0 3l-4-2l-4-2l5-4zM311 311l-2 4l-4 2l-1-3l2-3zM314 332l4-1l5 2l-3 1l-4 1zM322 371l2 0l3-2l0 4l0 1l-3 0zM380 331l-1 4l-4 4l-3-4l1-5zM395 309l-4 2l-4 0l1-2l2-3l2 2zM353 332l-5 1l-4-1l3-3l5 0zM392 336l0-3l0-3l5 1l1 2zM401 333l0 3l-2 4l-3-2l-2-4zM403 336l1-4l1-3l3 3l-1 3zM416 328l-5 4l-5-3l4-2zM383 332l-3-1l-3-1l3-2l2-1l2 2zM366 332l3-3l6-1l-2 4l-2 3zM352 381l-3-3l0-5l5 2l3 4zM349 374l1-2l4-2l3 2l-1 5l-3 0zM355 372l4 2l-1 5l-4-4zM376 391l-4 1l-4-1l4-3l4-1zM351 394l-4 1l-5 0l2-3l4-1zM372 338l5 4l1 4l-4 0l-4-2z"/><path fill="#223d16" d="M285 68l-5 1l-5 0l1-2l2-6l4 4zM272 69l2-5l6-1l-1 3l-2 5zM270 95l-1 4l-4 1l-1-3l-1-2zM279 91l-7 2l-3-1l3-4zM272 93l-4 0l-2-2l1-1l4 0zM302 92l1-3l1-2l3 2l1 2l-2 1zM303 105l-7-2l-4-5l5 1l6 0zM319 94l3-4l7 0l-1 5l-6 3zM322 87l2-6l7-2l-2 5l-2 4zM309 77l2-5l5-1l-3 4zM287 102l1-2l2-2l2 2l1 4l-3 0zM262 117l-1-5l3-5l2 5zM335 133l2-1l4 0l-2 3l-3 1zM268 137l5-2l7 0l-3 5l-5 2zM314 138l2-2l4-1l0 3l-2 3zM353 141l-2 3l-6 2l0-4l3-4zM281 151l-4-1l-1-2l2-2l3 0l0 4zM352 146l-1 5l-5 2l1-5zM359 144l-3 1l-2 2l-1-4l2-2zM353 139l-6 1l-3 0l1-4l7-2zM368 154l-1-3l0-3l3 1l2 0l-2 3zM196 165l-6 2l-3-1l3-3l3-2zM204 185l5 4l-4 5l-4-5zM228 190l7 2l0 6l-6-4zM202 208l2-5l4-2l2 4l0 3l-3 0zM234 171l-4-4l-3-5l7 0l5 1zM232 196l4 3l4 2l-5 2l-4-2zM240 166l0 3l-3 5l-4-4l-1-5zM257 172l-2-2l-1-4l2-1l4 0l-2 4zM279 205l5 0l2 2l-1 2l-4 1l-1-3zM371 175l-6-3l1-5l5 3zM329 150l3 0l2 2l-3 2l-5-3zM315 180l3 3l2 4l-5-1l-3-3zM322 148l2-1l4 1l-2 2l-5 1zM291 198l2 2l2 3l-4 1l-4-1l2-3zM297 144l4-3l6 4l-8 2zM306 166l-4 1l-2-1l2-2l4-1zM282 180l-1-6l7-4l-1 6zM294 183l4-1l7 0l-4 3l1 4l-6-4zM286 173l3 3l1 3l-5-1l-3-2zM316 176l-1 2l-3 1l0-2l0-3l2 1zM377 182l-3 2l-2 1l-1-1l-1-2l4-1zM316 149l-3 3l-6 2l2-5zM285 187l1 3l2 2l-4 0l-4-3zM350 159l-4-2l-1-2l4-1l3 2zM337 172l-6 3l-3-2l2-4l5-1zM299 162l-2-3l1-3l4 1l1 4zM420 166l1-3l0-3l3 3l1 3zM414 148l2 2l0 3l-3-1l-4-2l3-1zM431 179l-4-2l-1-5l5 2zM417 140l2-3l3-1l3 4l-2 3l-3-1zM359 232l4-2l5-4l0 4l-1 5zM401 202l5 3l0 7l-6-3l-4-2zM317 188l0 4l0 4l-5-2l-1-3l3-1zM314 199l-4 0l-4 1l1-5l3-3l2 3zM276 245l-3-3l1-2l3 0l1 2zM269 235l4 3l0 5l-3 1l-6-1l3-4zM426 233l-4 0l-2-3l1-1l5 1zM327 205l1 3l1 2l-4 0l-3-2l3-2zM413 247l4-5l4 0l2 4l-4 3zM298 204l1-6l1-4l6 5l2 3zM423 239l-8-1l-1-6l5 1l6 2zM317 245l3 4l-4 3l-1-5zM286 224l-4 1l-2-2l3-3l4 1zM346 249l1-7l4-1l1 3l0 5zM397 214l4-4l7-1l-2 3l-4 5zM386 229l-3-2l2-3l3 2l0 3zM350 216l4 1l1 4l-4-1l-2-3zM287 219l4-2l5 1l-1 4l-4 2zM296 230l-5 1l-4-2l1-2l1-5l6 4zM354 211l1 4l2 3l-6-1l-3-3zM291 209l5-2l3 1l-1 3l-5 0zM365 240l-3-3l-2-5l6 0l6 5zM415 210l3 0l3 1l-2 2l-5 0zM370 194l-2-5l-2-3l6 2l4 2l-3 2zM372 195l-2 3l-3 3l-1-6l2-3zM354 201l-1-4l3-4l2 4zM419 207l-1-5l3-6l4 5l1 6zM408 197l-2 4l-3 1l-1-2l3-4zM294 190l-1-3l4-3l2 2l0 4zM296 189l-1 5l-4 0l1-3zM280 206l4 2l2 5l-6-1l-5-4zM342 197l-3 4l-4 0l2-3zM381 214l4 0l5 2l-3 3l-5 3l-1-5zM418 206l-2 3l-5 1l1-4l3-3zM410 206l-2-3l-1-2l5-1l6 2l-4 3zM428 220l2 4l-2 5l-5-2l-3-4zM304 228l2 4l-2 4l-3-3zM307 244l-4 2l-5-1l3-3zM315 241l2-5l7-1l-2 4zM312 244l0-8l6-1l-1 5zM308 255l-2 0l-5 0l2-4l3-1zM275 229l-2 3l0 1l-2 0l-2-2l2-1zM292 237l4 4l0 4l-7-3l-1-4zM298 246l-2-3l-2-3l6 1l3 1l-3 3zM456 248l1-5l5-3l0 4l-1 5zM219 259l7-3l7 0l-5 5zM228 257l-1 2l0 3l-4-3l1-4zM217 294l-2-4l3-4l3 5zM231 287l-2 2l-3 2l0-4l1-3zM246 266l-5 2l-3 0l0-4l4-2zM270 246l2 3l-3 2l-2-3zM261 247l5 4l3 5l-5 0l-6-1l2-3zM262 255l1-4l4-2l0 3l-2 3zM278 260l-5-1l-3-3l5-2zM273 260l8-3l4 5l-5 2zM287 255l-7 0l-3-4l5-2l3 1zM375 279l0 3l-1 3l-3-2l-2-2zM387 262l-4 0l-2-2l2-2l3 0l0 2zM259 273l-4-2l-4-2l5-2l5 0l0 3zM341 240l-4-2l0-5l4 1l4 3zM301 251l4-1l4 2l-3 2zM417 269l4-2l5 0l0 3l-5 3zM318 281l2 5l2 3l-6 1l-4-3zM325 294l2 2l1 4l-4-1l-1-3zM372 237l2 2l1 3l-4 0l-4-2zM389 252l2-3l3 1l0 3zM416 298l-4 1l-5-2l5-2zM330 246l-6-1l-4-3l6-3l3 0l2 3zM324 235l5 2l3 3l-2 2l-5 0l0-2zM282 286l6-2l7 4l-8 2zM416 296l-5 1l-4 1l0-4l2-4l4 2zM326 313l-3-2l-2-2l5 1zM312 300l4 1l6 4l-5 0l-5 2zM410 275l2-4l2-2l4 3l-1 4zM418 270l-3-3l-1-2l4-1l3 4zM415 290l-4-3l0-2l5 0l1 2zM330 260l3 1l2 1l-2 2l-5-1zM300 285l-3-1l-4 1l1-3l0-2l3 1zM260 296l5 3l1 3l-6 0zM323 316l-4 2l-2 3l-3-3l-1-4l5 0zM395 275l7 1l5 2l-5 3l-5 1zM275 254l3 0l2 1l-2 2l-2 2l-1-3zM368 240l-2 4l-5 1l0-6l5-2zM356 245l3-2l2 0l0 2l0 2l-2-1zM416 274l-4-2l-1-3l2-1l3 2zM332 291l-5 3l-5 1l-1-3l0-5l4 2zM295 316l-5-4l3-4l4 5zM344 292l1-5l4-2l1 4l-1 3zM350 291l-2 3l-2 2l-2-4l-1-1l4-1zM321 302l4 0l2 3l-3 1l-4 0zM383 269l3 3l2 2l-3 1l-4-1l1-1zM358 300l3-3l4 0l-1 4l-4 3zM265 289l4-3l5 1l-1 3l-4 2zM347 284l2-3l0-3l3 2l1 3l-3 1zM347 244l5-3l5 3l-6 1zM422 306l-2-3l3-2l1 3zM379 307l-2-5l0-3l6 2l2 3zM385 326l3 0l3 0l-1 2l-2 3l-1-3zM401 326l-3 1l-3 3l-2-3l-3-3l6-1zM376 310l2 4l0 5l-5 0l-3-4l3-2zM427 305l-4-2l-3-2l4-1l2-1l0 2zM399 289l-4-1l-2 0l1-3l4-1l2 3zM376 286l-1 2l-3 5l-4-4l2-6zM196 316l5 0l4 2l-3 2l-5 1l0-3zM168 354l-1 7l-6 1l0-6zM183 330l-4-1l-2 0l2-3l3-1l0 1zM175 321l5 1l6 4l-5 1l-7-1zM155 296l-4 4l-5 1l2-6l4-2zM129 306l1 4l0 3l-3-1l-3-3zM182 318l-2-1l-2-3l2 0l3-1l0 3zM156 322l-5-3l-2-2l2-2l6-1l-1 3zM138 338l-1-4l6-2l0 5zM133 334l5-3l3-1l-1 5l-5 2zM188 302l0 6l-7 3l0-5zM163 335l4 2l3 2l-4 1l-4 0l1-2zM178 330l-3-3l0-4l4 2l1 3zM184 349l1 3l-1 2l-3-1l0-3zM140 313l-3-4l1-6l4 3zM146 302l1-4l1-2l3 2l0 5zM132 327l1-2l4-1l0 2l-3 2zM188 330l3 1l4 1l-2 1l-1 4l-3-3zM194 331l-1-4l2-3l4 3l-2 4zM131 310l8 0l3 4l-7 0zM131 302l0-3l2-3l2 3l0 2zM127 305l5-1l3 1l-2 4l-3 1zM134 293l2 2l4 2l-4 1l-3 2l0-4zM129 291l-2-2l0-4l3 1l3 1l0 2zM136 317l0-3l1-2l2 1l3 1l-4 2zM236 346l-2 6l-1 1l-6-2l0-4l3-1zM220 301l1 1l0 3l-2 0l-3-2zM213 331l5 2l4 1l-4 3l-2 3l-1-4zM204 326l1-4l2-4l4 4l0 4zM192 325l-3 3l-3 2l-1-4l2-3l3 1zM266 337l3-1l4-1l-1 2l0 3l-4-2zM305 328l-1 4l-6 1l2-4zM272 314l4 4l2 3l-5 0l-4-2zM267 308l1 4l-1 3l-5-1l-1-4zM255 331l2 0l3-1l0 3l0 1l-3 0zM304 323l-2 4l-5 1l2-6zM285 313l0-4l4-2l0 3zM282 320l5-2l5 0l-2 4l-5 3zM290 315l-3 3l-2 4l-2-3l-1-5l4 0zM273 325l-6 1l-4-2l4-3l5 1zM291 327l-1-5l2-4l3 3l2 4zM273 293l-2 3l-2 2l-3-4l2-3zM279 307l-2-3l2-3l3 2l2 2zM263 317l-3 5l-4 3l-2-5l1-3zM362 324l-2 4l-1 1l-2-2l0-4l2 2zM342 309l5 2l5 0l-5 4l-6 1zM319 316l-2 5l-3 4l-4-6l4-3zM368 312l-1-2l-1-4l2 0l6-1l-1 4zM299 311l-4 2l-5 2l0-5l6-2zM333 331l-5-1l-2-4l4 0l4 3zM316 330l4 1l1 5l-5 0l-2-3zM364 319l-3 2l-2-1l0-4l5-1zM328 330l4 1l3 3l-3 2l-5-1zM365 323l6 0l3 2l-4 2zM294 340l4 0l2 2l-4 1zM383 348l-3-2l-5-2l3-2l3-3l4 6zM374 349l-6 1l-6-3l6-4l7 2zM369 335l3 1l1 5l-3-2l-4-1zM288 357l-2 4l-4 2l-3-3l0-2l4-1zM292 351l1 5l0 4l-5-1l-2-2l1-2zM366 335l-5 0l-3-4l6 1zM318 352l3 4l-2 3l-4-2l0-3zM340 327l0-2l4-2l1 1l-2 4zM298 321l2 2l-1 4l-2-2l-2-3zM288 367l1-5l2-3l3 4l1 2zM303 362l-4 2l-5-1l4-3zM328 306l0 7l-3 3l-3-3l0-5zM320 371l0-5l4-1l1 2l-1 4zM361 337l-6 0l-1-2l4-1zM343 332l-2 2l-3 2l-2-3l1-4l4 1zM389 333l4-2l5 1l-3 4l-4 1zM343 309l-3 2l-4-2l4-2zM339 329l3-3l3-1l-1 4l-1 2zM356 326l-2-2l-1-4l3 2l3 0zM382 332l-2-3l-3-3l3-1l4-1l0 4zM371 343l-6-1l-3-5l7 2zM337 397l-2 4l-5 1l1-4l3-3zM339 408l3-3l5 2l-4 2zM366 393l-4 4l-4 0l2-4l2-2zM363 387l6 1l2 3l-3 2l-5-1zM354 375l-1-4l4-3l3 3l0 4l-3 0zM364 368l2 2l2 2l-6 1l-2-4zM353 395l2-3l4-4l2 3l2 4l-5 1zM361 391l3-5l4 0l-1 4zM342 370l2-2l6-2l-2 5zM344 365l-5 5l-4 0l1-5l3-4zM381 347l0 2l-3 2l-2-2l-1-2zM319 373l-2 3l-5 1l0-4l1-3z"/><path fill="#2a4c1b" d="M358 63l3 6l-5 4l-2-5zM349 67l3 2l1 4l-2 0l-6-2zM275 89l-2 3l-4 2l-3-2l0-4l5-1zM284 99l1-5l6-4l-1 7zM316 103l3 3l1 3l-4 0l-4-3zM316 111l-1 4l-7 3l2-6zM304 84l-1-3l0-3l4 1l3 0l-3 4zM300 99l6 5l-2 5l-5-5zM332 100l6 1l0 5l-5-2zM311 130l1 1l1 2l-4 1l-2-1l1-2zM282 127l3 3l0 3l-6-2zM269 145l4-1l3 1l-2 2l-4 2l0-2zM307 148l6-2l3 5l-5 0zM339 158l-8-4l2-7l5 6zM316 154l-4-3l0-2l4 0l4 3zM285 201l-1 4l-2 2l-3-2l-2-2l4-2zM317 182l-6 0l-3-3l6-2l3 2zM306 152l-2 2l-6 1l2-4l3-3zM302 163l-4 3l-6 0l2-4zM315 163l-6 3l-6-1l3-5l7-1zM289 197l-2-2l-2-3l3-1l4 0l-1 3zM313 181l-5 1l-5-3l3-2zM338 160l3 2l3 5l-6 0l-3 1l1-5zM262 172l3 1l2 2l-3 1l-2-1zM437 164l-4-1l-3-4l4-1l5 2zM431 193l-3-3l2-4l3 3zM310 195l-3-2l-2-2l2-2l5-1l-1 4zM368 247l1 3l-2 3l-1-4zM399 226l-3 0l-5 0l2-3l2-3l3 3zM326 207l7-2l3 2l-2 5l-4 1zM296 231l-2-5l4-3l1 4zM283 252l4-3l5-2l1 5l-3 4zM316 213l-2-4l0-2l3 1l2 3zM351 223l1-3l3-1l2 3l-2 2zM286 223l-1 6l-6-1l2-3zM399 212l0-3l1-3l4 2l1 2zM391 236l-6 3l-5-1l3-3l3-3zM364 193l3 4l3 3l-7 1l-3-2l2-3zM346 207l-8 3l-5-6l9 0zM373 194l-6 0l-1-5l4 0zM348 192l2-2l4-1l-2 4zM309 188l-4 2l-3-1l1-2l3-2zM363 234l3-4l4-4l1 5l1 5l-4-1zM447 209l3 2l4 3l-4 2l-6-2zM414 212l6 1l4 2l-3 3l-5 2zM315 234l4-3l4-1l0 4l-1 4l-5-2zM308 203l-1-3l2-2l3 3zM308 234l4 6l1 4l-7-2l-3-4zM291 220l-4 2l-8 2l4-4l1-5zM291 252l-5 1l-5-1l2-3l6 0zM287 255l-6-4l1-5l6 3zM206 266l4-1l4-1l2 3l-1 3l-5 0zM209 258l-1-2l-1-3l3 0l4 0l-2 3zM277 275l-4-1l2-3l2 2zM281 276l-4 4l-3 1l-1-4l2-3zM262 286l-3 2l-3 3l0-5l1-3zM302 273l4-4l7-1l-2 4l-3 3zM283 320l2-5l3-2l0 6zM294 305l-3 2l-3 1l-2-4l2-3l4 1zM367 262l4 2l2 2l-5 2l-3-2zM405 296l3-3l6 0l-4 4zM305 293l2-3l2-3l3 2l1 4l-2 0zM300 277l-3 4l0 3l-4-2l-4-3l4-1zM398 288l3-3l5 2l-2 3l-3 1zM316 278l3-1l3 1l-1 3l-2 1zM351 307l5-1l3 4l-5 0zM343 296l-2 7l-3 1l0-6zM382 265l7-1l3 2l-3 4l-5-1zM335 266l2 1l6 3l-7 2l-4 1zM274 286l2 1l2 3l-5 1l-3 0l1-3zM414 252l3-2l3 2l0 2l-3 2zM329 268l3 0l1 4l-4 0l-3-2zM331 265l2 2l1 4l-4-1l-3-2zM403 327l-5 0l-3-1l2-2l3-1zM370 314l3-3l5-1l-2 5zM394 292l0 2l-3 3l-2-1l-2-3l2-1zM397 270l0-4l3-2l2 3l2 4l-3 0zM393 285l5-2l3-1l1 4l-5 2zM380 308l1 3l-2 2l-3-1l0-3zM425 292l0 6l-4 2l-3-2l-1-5zM190 341l3 2l2 2l-3 1l-3 0l0-2zM180 335l0 4l-1 5l-4-2l-4-6zM146 297l2 1l2 2l-3 1l-4 0l1-2zM199 333l-4-1l-3-3l2-1l5-2l0 3zM166 322l5-1l4 1l-1 3l-3 3l-3-3zM186 339l1-3l2-1l1 1l0 3zM145 309l-4 3l-4 0l4-4zM191 351l0-2l4-3l0 3l2 3zM228 325l-2 4l-6 3l1-5l1-4zM181 322l3-1l3-1l-1 4l-1 2zM180 335l-3-3l-3-4l5 0l4 2zM269 341l-2 3l-4 0l2-4zM296 335l0-5l2-3l5 3l0 3l-3 1zM273 341l-3-1l-2-2l3-2l3 2zM293 325l2-4l5 0l0 3l-1 2zM293 306l-5 0l-3-4l6-1zM275 343l3-3l3-1l1 3l0 3l-5-1zM273 281l5 5l-2 4l-5-2l-2-5zM243 304l4 5l-2 5l-3-3l-3-3zM265 302l-3-2l-3-2l5 0l3 2zM243 324l-1-3l2-4l1 4zM371 321l-2 0l-6 1l1-3l2-3l2 1zM367 321l0 3l-3 3l-1-3l2-4zM344 311l1 2l-1 4l-2-1l-4-3zM361 313l4 3l2 4l-6 0l-3-4zM335 303l-6-5l3-5l4 3zM330 299l1-4l1-3l3 4l0 4zM313 346l-3 2l-5 0l2-3l0-2l5 1zM313 332l3 3l-1 2l-3-3zM360 328l-3-4l-1-3l4 0l4 1l-2 3zM337 366l4-2l5 2l-3 3l-2 1zM284 343l5 4l0 3l-5 0l-4-2zM380 328l0 3l0 5l-5-4l-2-4zM377 329l5 0l4 3l-4 2l-3 1l-1-3zM369 338l-1 4l0 3l-5-3l-3-3l5-1zM342 395l1 2l-3 4l-2-2zM352 397l4-2l5 3l-4 2zM359 371l5-3l7 2l-2 3l-5 2zM321 377l-3 0l-3-2l3-1l4 1z"/><path fill="#3b6626" d="M314 102l-5 1l-7-2l5-4l7-2zM336 101l-3-1l-3-1l1-2l1-2l3 2zM319 99l4 2l3 3l-4 1l-2 1l-2-3zM270 131l-1 2l-2 3l-2-2l0-4zM304 158l-3 3l-4 2l0-5l1-5zM324 155l-1-4l3-2l1 2l0 3zM309 149l3-5l7 1l-4 6zM338 144l1 3l2 4l-3-1l-6 0l3-3zM364 141l6 1l5 4l-6 1l-6-2zM203 207l-4-3l-3-4l4-1l4 1l0 3zM371 171l5-3l4-1l0 4l-6 3zM312 143l6 1l2 3l-4 0l-3 1zM354 181l1-5l7 0l-2 5zM354 145l1 2l0 4l-3-2l-3-1l2-1zM337 168l-5 2l-3-1l2-2l4-2zM369 181l-5 2l-4 0l3-4l4 0zM288 159l1-4l5 0l0 3zM428 175l-9 0l0-7l6 3zM421 148l-1 3l-4 2l-1-5zM425 191l2-3l2-1l2 1l1 5l-3-2zM421 146l1-3l1-4l3 3l-1 4zM337 225l-5 2l-4-2l0-3l2-4l5 3zM309 180l3 0l1 4l-3 0zM321 245l-6-1l-1-5l4 1zM420 247l1-3l-2-3l4 1l3 1l-1 2zM392 184l-1 6l-5 5l-1-5l0-5zM333 253l-4-2l-1-5l5 1l5 2zM356 246l0 4l-5 2l-1-6zM381 224l6 3l2 2l-6 2l-3-3zM365 224l-5 3l-4-3l6-3zM363 235l-1-4l2-4l4 2l2 2l-4 2zM341 244l-2-5l2-3l3 3l1 4zM280 206l1 5l-1 4l-5-2l-3-5zM276 211l1-2l5-2l1 2l1 2l-4 1zM290 195l2-4l3-3l3 3l1 4l-5 0zM319 190l-4 2l-3-2l5-2zM386 223l-2 4l-4 2l-1-6l4-4zM374 189l3 0l4 1l-2 2l-4 2zM418 206l5 1l1 6l-4-2zM403 221l-3 5l-7 1l3-6zM310 239l-3 2l-2 1l-1-3l2-4l1 2zM293 255l-3-3l1-4l3 2zM300 247l-3 4l-2 2l-3-4l2-5zM434 251l-1-5l5 0l0 3zM220 251l1 5l-6 4l-1-3l-1-5zM272 269l-3-1l-3 0l2-3l3-3l2 3zM273 244l-3-3l-2-2l6 0l4-1l-3 5zM323 292l-6 2l-5-1l4-4l5 0zM301 260l-2 2l-2 4l-2-4l-2-1l3-2zM398 297l0-3l2-3l2 2l1 3l-3 0zM384 290l3-3l6 0l-3 3l-2 3zM336 274l3 2l0 3l-3 0l-3-1zM408 276l-4-2l-1-2l4-2l2 1zM387 260l-4 3l-4-3l5-1zM406 282l-4-3l-1-5l6 0l3 4zM334 313l-5 0l-6-3l5-2l5 0zM277 293l-1-4l2-2l3 2zM377 263l5 2l4 3l-7 2l-2-1zM292 262l-2-1l-1-3l4 1zM346 242l2 4l-5 2l-1-4zM372 290l5-3l4 0l-1 3l-4 3zM418 261l1 4l-2 5l-5-3l-1-5zM374 296l-4-1l-2-4l4 2zM411 311l3 3l3 6l-4 0l-7-5zM383 309l0 3l-1 5l-4-3l-1-6zM153 361l-1-3l1-6l4 3l5 4zM150 308l-2-1l-4-3l3-1l4 0zM172 305l0 3l-2 1l-2-2l0-3l3 0zM159 342l4-4l5-2l1 6l-3 4zM174 310l2-3l7 0l-1 3l-5 5zM144 322l-2-4l5-2l1 4zM150 310l0 4l-1 3l-5-3l-3-2l5-2zM223 317l1 5l-3 3l-3-3l1-5zM213 316l-1 5l-2 4l-4-4l0-5zM224 312l6-1l3 3l-5 2zM204 338l3-2l3-2l0 4l-1 3zM200 321l-7 1l-4-3l5-2zM268 320l3-5l6-3l-2 7zM283 305l3 1l2 4l-3-1l-4 0zM284 325l-5 1l-4-1l3-3l5-2l0 3zM257 320l3-1l5 1l-3 4l-4 2zM340 317l4 0l3 2l-4 3l-3 2l-1-4zM288 359l6-2l4 2l-3 3l-5 2zM332 307l-6-2l1-5l4 3zM310 357l-4-3l2-4l3 2l1 2zM333 317l-1 4l-3 2l-1-2l-1-3l2 0zM364 316l-6-2l-3-3l6-1l5 2zM306 368l-3-1l-2-1l3-2l4 2zM356 324l4 0l5 0l-3 3l-6-1zM361 375l-1-5l2-3l3 3l2 4l-2-1zM352 390l0 3l0 3l-5 0l-5-3l4-1zM335 378l2 1l3 5l-5-1l-2 0l-1-3zM381 342l5 0l4 1l-3 4l-4 4l-2-5z"/><path fill="#16280e" d="M275 71l-3-2l-2-3l3-1l4 0l-1 3zM280 73l-6-1l-1-6l5 2zM310 69l-1-3l1-4l3 1l4 2l-3 1zM306 52l2 5l-4 4l-4-5zM344 63l3-2l2-1l1 4l-3 2zM272 88l5 0l1 5l-5-1zM316 92l0-3l0-4l4 2l4 2l-5 2zM283 111l4-2l4 1l-2 3l-4 0zM347 139l0-4l5-3l3 4l-3 6zM307 133l7 2l2 3l-7 2l-4-3zM276 160l0-5l6-1l1 3l-3 5zM276 152l-3-3l-2-1l3-1l3-1l-1 2zM292 158l6-1l6 3l-4 3l-5 0zM351 144l-2-5l7-3l-1 5zM351 149l-5 3l-4-1l4-5zM324 139l-4 1l-2 0l-1-3l2-3l4 2zM394 134l0 6l-3 2l-3-4l2-4zM204 198l-5-2l-2-5l6 0l4 3zM214 197l2-2l4-1l-1 3l-2 3zM204 203l4 0l4 3l-4 2l-4 0zM209 209l-3-1l-2-1l1-2l3-2l1 3zM244 194l-3 3l-5 1l2-5l4-2zM259 183l3 3l1 4l-3 0l-5 0l2-4zM239 180l0 4l-3 1l-1-3l0-3zM275 192l4 3l1 2l-4 0zM271 196l3 4l-1 4l-4-3l-1-3zM273 216l2-3l1-3l3 2l0 3l-4 1zM255 208l3-2l4-1l-1 3l-3 3zM341 201l-2-2l0-2l2 0l2 0l-1 2zM330 143l3 2l0 4l-2 0l-4-1zM341 157l-4 0l-1-7l5 3zM345 175l5-2l5 2l-5 2zM324 186l5 3l-3 6l-3-4zM279 175l-3 6l-7 2l2-7zM300 160l-1-2l4-4l1 3l-1 3zM344 159l-2-3l1-4l3 4zM331 172l2-4l6 1l-4 4zM278 173l3-2l4 0l-1 3l-1 3zM273 156l8 0l0 4l-4 0zM264 166l1-3l4 0l0 2zM315 184l0-4l4-2l1 4l-2 3zM353 183l1-2l2-5l2 3l2 2l-2 2zM398 159l2-3l4-3l0 4l-1 4zM427 178l-10 2l-1-6l7 1zM430 155l4 6l-4 4l-4-5zM332 228l2-1l6-3l0 5l0 3l-5 0zM398 243l1 4l-5 4l-2-4l-1-4zM364 242l4-3l5 4l-5 2zM371 235l-3 3l-4 2l0-4l4-3zM274 236l-3 1l-4-1l2-3l5 0zM423 213l-1 3l-3 1l0-3zM362 222l1-3l3-1l0 2l-2 3zM375 187l2 2l2 2l-3 1l-4-1l1-3zM365 253l-3-1l-3-1l1-4l2-2l3 4zM431 236l-2 0l-4-4l4-1l2 0l1 2zM321 224l0 4l-3 3l-1-4zM342 222l7-1l3 5l-3 1l-6 1zM351 229l3 0l2 3l-4 0zM366 200l-4-3l-2-2l4-3l3 1l1 4zM365 247l4 2l1 3l-3 0l-6-2zM359 219l-3 2l-2 1l-1-4l2-1zM295 215l3 3l0 4l-3 0l-4-4zM282 219l0-3l0-3l3 2l1 3zM353 229l4-3l5 1l-1 3l-3 2zM364 192l1-4l2-5l4 4l0 3zM370 242l-4 3l-2 1l-3-4l1-4l4 2zM366 240l-2-1l-3-3l3 0l4-1l-1 2zM359 235l6 0l4 3l-3 3l-7 1zM284 225l-1 4l-5 0l-1-3l3-3zM422 211l-6-2l3-8l4 5zM428 205l-4 0l-3-1l2-3l4-2zM286 219l-3 3l-3 1l1-4l1-3zM368 210l-2 1l-3 2l0-3l0-3l2 1zM364 256l0 6l-5 2l0-4zM385 229l0-2l1-3l2 0l3 3l-2 1zM394 225l2 4l-2 3l-3-2l-2-5zM348 199l-3 2l-4 0l0-2l2-4zM362 187l7-2l4 3l-6 3zM315 260l3-1l4 0l-2 4l-3 2zM394 222l1 4l-1 4l-4-3l-2-3zM404 216l2 2l-1 3l-3-3zM409 204l1 2l1 3l-5-1l-2-3zM446 215l-4 3l-6-1l3-3zM419 213l4 3l2 3l-5-1l-2-2zM398 220l-3 2l-2 2l-2-3l-1-3l4-1zM398 229l-5-2l-3-1l3-3l4-1l1 2zM278 224l1 5l-3 4l-5-6l4-3zM308 243l-5 4l-4-2l6-3zM276 237l5-4l5 0l-2 5l-2 2zM318 253l-3-5l1-3l4 3l2 3zM276 216l-1-5l5-4l0 5zM281 219l0 4l-5 2l0-5zM290 241l-3 2l-2 0l0-3l3-1zM269 240l4-3l3-1l1 5l-2 3l-2-2zM308 238l-3 4l-3 1l-2-5l4-3zM329 246l-4 1l-4 0l0-4l4-3l1 3zM303 247l-5-3l-4-2l5-2l5 1zM320 212l1-2l1-2l2 1l2 4l-4-1zM316 213l-2-3l2-3l4 3l0 3zM461 233l3-4l7-1l-4 5zM455 232l1 3l-2 3l-3-2l0-3zM462 230l-1 3l-4 1l0-3zM219 249l-7 3l-2-4l5-2zM234 265l6 1l0 5l-4-2zM278 266l-2 5l-3 2l-1-4l3-4zM271 275l-2 2l-5 0l1-3l4-2zM273 257l0-4l3-3l3 3l-1 5zM350 245l2 4l-2 3l-3-2l-2-2l3-2zM377 261l3-1l4 1l-3 2zM307 242l-4-1l-3-3l3-2l4 3zM303 245l5-1l2 6l-6-1zM383 311l0 2l-3 5l-3-3l-3-2l5-2zM295 305l-5 2l-5-3l7-2zM306 299l0-3l2-2l2 1l2 2l-3 1zM287 238l2 4l-2 5l-5-4zM411 300l-2 3l-5 1l2-4zM412 298l2 2l1 5l-6 0l-3-3zM339 265l5-1l4-1l1 6l-3 3l-2-2zM287 295l-3-5l1-4l6 2l2 3zM361 295l4 1l4 1l-5 3l-3 1zM321 279l-3-1l-1-3l3 0l4 1zM327 278l-5-4l0-4l6 1l5 5zM367 242l1 5l-4 0l0-2zM366 248l-7 2l-3-2l6-3zM277 250l4-2l3-2l0 5l-2 3zM313 290l-1-5l7-4l1 5zM354 313l5 1l3 3l-3 1l-4 0zM294 266l-2-6l4-2l1 6zM366 243l3 3l2 3l-7 0l-3-2zM307 279l-3 4l-3 2l-1-4zM372 258l-3-1l-4-4l4-1l3-2l1 4zM324 286l2 6l-4 3l-2-5zM290 301l2 5l3 2l-4 1l-6 2l1-5zM298 257l-5-4l1-5l4 3zM340 302l-4 1l-6-2l4-3l4-3l1 4zM302 253l5 1l4 1l-3 4l-4 2l-2-5zM259 280l4 4l3 2l-5 3l-7-3zM353 283l-2-4l2-5l3 1l4 3zM404 265l-1-2l0-2l3-1l3 2l-2 2zM407 262l-3 1l-2 1l0-4l2-3l1 2zM336 270l3-3l4 0l-2 3zM362 297l-4 2l-7-1l5-4zM322 274l-1 3l1 2l-5 0l-2-1l3-3zM320 278l-1 2l-2 3l-2-1l-2-2l2-1zM269 256l5-1l4 3l-5 1zM328 263l2-1l4 1l-3 2l-3 1zM416 260l4 2l-1 6l-4-3zM306 298l0 1l-4 4l-2-2l-1-3l3-2zM411 293l-6-4l2-4l5 3zM404 286l2 4l-1 3l-3-3zM400 283l3 0l2 4l-4-1zM388 268l3-2l2 1l0 2l-1 2l-2-1zM385 289l1 4l-4 3l0-3l-2-5zM366 285l4-3l7 3l-5 3zM185 311l-5-1l-4-1l4-4l5-1zM194 321l-5-1l-1-3l5 0zM193 342l-2-2l-3-2l3-1l4-1l1 3zM158 307l4-3l5 3l-4 2zM159 305l1 3l-2 2l-2-2l-2-2l2-1zM142 347l-3 0l-3-2l1-2l2-1l3 2zM162 313l-5 1l-4-1l2-3l1-2l3 2zM169 350l0 6l-6 2l0-5zM174 343l1 0l5 0l-3 3l-3 1zM175 346l-5-2l6-4l1 4zM139 311l-1-3l1-2l3 2l0 2zM138 313l3-3l3 1l-1 3zM150 298l3-2l4-1l0 2l-1 3zM132 297l4 2l2 2l-2 2l-3 2l-2-4zM151 309l-2-3l-3-3l5-2l3 1l-1 2zM140 315l3-4l5-1l-3 5zM266 339l6 0l4 4l-6 1l-5 0zM264 338l2-3l4-2l1 3l-2 3zM258 330l1-3l3-1l1 3l-2 2zM278 338l3-4l5 1l-3 3zM276 330l-4 1l-4 0l1-3l4-2zM285 328l-3 2l-4 4l-1-6l3-3zM279 323l4-2l4-2l1 2l1 5l-5-2zM288 328l-3-4l5-3l1 4zM257 336l-4 0l0-5l5 2zM260 332l2 2l3 3l-6 0l-4-1zM268 336l7 1l0 4l-3-1zM288 332l4 2l4 3l-3 2l-6 2l1-4zM352 305l-6 2l-3-1l1-4l5 0zM359 325l3-4l7 3l-5 2zM295 308l-3-4l0-5l5 1l4 4zM288 368l1-5l3-4l3 5l-1 3zM309 359l0-4l1-3l5 3l0 3zM318 330l-6 1l-2-1l0-3l1-4l5 4zM278 355l4-3l7-1l-2 4l-6 4zM368 318l-2 4l-2 2l-3-3l-2-1l3-3zM351 353l5 0l4 3l-3 1l-6 2l0-3zM353 326l0 2l-1 3l-4 0l-4-3l6-2zM289 353l-2-1l-5 1l2-3l0-2l4 1zM329 290l4 1l3 2l-3 3l-5 1l2-4zM288 308l-2 2l-3 1l-1-3l2-4zM284 304l6-1l5 4l-7 1zM298 317l-6 2l-5 2l3-7l3-1zM359 322l-1-4l2-3l2 3l1 4zM325 354l2-5l7 1l-3 5zM363 328l-3 0l-5-2l4-1l3-2l1 3zM369 354l-2-2l-1-4l4 1l4 1zM356 338l7 1l3 3l-5 0zM376 328l1 3l-4 4l-2-4l1-3zM350 407l2-3l6-2l0 3l-1 5l-3-2zM358 390l-4 1l-4-2l2-2l3-2zM364 372l5-1l3 5l-5 0zM362 406l-3 2l-5-2l2-2l4-2zM376 349l-4 4l-5 2l0-4l0-4l5 2zM365 347l3-1l5 2l-4 2zM327 373l-2 0l-3-3l3-1l3-1l1 2zM324 365l0-5l3-2l2 4l-1 3zM312 381l-6-1l-2-5l7 2z"/><path fill="#6ba344" d="M315 99l2 0l3 2l-2 2l-3 2l-1-3zM362 142l1 5l-2 3l-3-4l-2-3zM303 199l3-3l6-1l-3 5zM349 152l-5 2l-3-4l4-1zM297 202l-1-3l-2-3l5 0l4 2l-2 2zM278 153l3 3l2 4l-6-1l-2-2zM419 170l2-5l5-1l-1 4zM422 182l2-4l7-1l-1 4l-4 3zM349 255l-1-6l3-2l4 3l0 2zM365 229l-6 0l-3-4l4-2l4 1zM353 215l-3-2l-2-3l5-1l5 2zM271 263l0 3l-1 3l-3-3l-1-5zM360 246l5 3l1 4l-6 0l-5-2zM366 265l4 0l2 1l-2 3l-3-1zM266 274l0-2l2-3l2 3l1 3l-3-1zM397 266l0 4l0 2l-4-1l-1-2l3-2zM380 277l4-2l5 3l-5 2l-3 0zM274 299l3 2l-1 4l-3-3zM182 309l2-3l4-2l1 3l-3 4zM149 309l-3 1l-4 1l0-3l1-3l3 1zM152 322l-4-2l-3-2l5-1l5 0l-1 3zM229 312l-4 1l-4-1l3-2zM182 321l2-2l4-1l0 3l-2 3zM292 336l-5 0l-3-4l5-1l4 0zM342 310l2 3l1 3l-3 0l-5-1zM323 328l-5-1l1-3l2 1zM283 316l-4 1l-3 3l-1-4l1-3l3 0zM368 309l2-2l4 1l-3 3l-3 1zM331 336l-1-3l-2-3l4 1l3 2zM357 333l4 1l1 2l-4 1l-3-2zM352 351l-2-4l4-3l1 3z"/><path fill="#335a21" d="M310 52l-5 0l-2-5l5 0zM358 62l1 4l-6 4l0-5l1-4zM318 86l1 2l-4 3l0-2l-1-3zM321 107l-2 4l-3 2l-1-4l3-3zM343 100l-3 1l-4-1l1-3l4-2l1 3zM359 135l0 4l-1 5l-5-2l-2-6zM289 130l-1 2l-2 3l-2-3l-1-2l3-1zM337 139l3-3l4-4l3 6l-2 5zM271 142l-5 0l-1-3l3 0zM318 137l6-2l5 2l-6 3zM296 137l2-4l5-2l-1 6l-2 1zM276 152l4 2l0 3l-5 0zM402 134l-3 3l-4 0l0-4l4-2zM191 164l-3 2l-5 2l0-4l3-4zM203 202l3 0l4 2l-4 2l-4-2zM213 203l-3-3l-1-3l3 0l3 3zM239 196l3-1l6 1l-4 4l-3 3zM272 204l3-2l6-1l-2 4l-3 3zM346 198l-4-3l0-3l4 0l4 3zM341 197l4 3l-3 5l-2-4zM289 170l7-3l2 0l2 3l-3 5l-4-2zM284 192l5-3l5-2l-1 6l-3 3zM275 169l-3-4l1-4l4 2l2 3zM282 175l0 3l-3 3l-2-3zM364 179l-3 0l-4-3l4 0l3 1zM428 158l1-4l-1-4l4 1l6 3l-4 2zM421 169l3-2l2-1l0 2l0 2l-3 0zM328 216l1 3l-3 2l-1-3zM312 248l3-2l2-2l2 3l2 2l-5 0zM326 254l-5-2l-2-4l5 0l4 1zM265 216l4 1l2 2l-3 3l-4-2zM414 234l3-5l5-2l0 3l-1 4zM372 227l3 1l4 1l-2 1l-3 3l-1-2zM415 234l1 5l0 4l-4-3l-2-4zM371 218l-1 4l-2 5l-5-5l-1-3zM293 242l5-2l5 2l-4 3l-4 2zM284 220l0 4l-2 2l-2-3l1-3zM406 198l0 4l0 3l-6-1l-3-3l4-3zM348 251l-4-1l-2-4l5 1zM383 198l3-2l4-1l0 1l0 3l-4 0zM371 252l-3 3l-4 2l-2-4l4-4zM370 191l-1 4l-5 4l-2-4l-1-4zM289 231l-4-3l-1-4l5 2zM282 215l-3 0l-3-3l3 0l5 1zM298 193l-3 2l-3-1l2-3l3 0zM362 195l0-4l5-2l0 4zM308 252l-1-5l1-4l4 4zM293 235l5 2l0 4l-4 0zM282 238l-4 2l-2 1l-1-3l0-3l4 1zM283 208l1-5l3-3l2 4l0 5zM288 213l-1 3l-5 0l3-3zM251 272l1-5l4-2l1 3l0 4zM258 249l4 0l0 5l-4-2zM261 259l-1-5l4-5l1 5zM243 261l5-2l5-1l0 4l-3 3l-4-3zM279 245l0 3l-7 3l2-7zM343 248l1-5l2-2l3 2l-1 5zM337 225l2 6l-5 3l-1-6zM374 238l-2 6l-6 0l1-3l4-4zM395 282l0 5l-7 2l2-5zM315 268l-3 3l-3 2l-1-3l3-4zM418 265l3 2l2 2l-2 1l-3 0l0-3zM409 292l-1-3l-3-4l6 1l3 1zM319 309l5 1l-1 6l-5-4zM398 276l4-2l5-1l0 2l2 4l-5-1zM363 322l-5 0l-5-4l6 0zM350 315l4-1l5 0l-5 4zM334 309l-1-3l1-2l3 1l2 2zM423 269l2 3l2 3l-7 0l-4-1zM295 306l4-1l3 3l-4 0zM404 259l-4 1l-4 0l-1-3l-1-3l7 1zM277 282l3 4l-3 4l-4 0l-1-5zM386 286l3 2l1 2l-2 0l-5-1zM392 329l2-2l3-1l0 2l1 1l-3 1zM394 292l5 3l-1 5l-3-4zM394 263l-1 3l-1 3l-4-3l0-2zM409 290l2 4l-3 4l-3-2l-3-5zM159 361l0-3l1-4l4 2l0 6zM186 301l2 3l-2 5l-4-3l-2-3zM171 293l0 4l-1 4l-5-2l-1-4zM175 332l2 3l0 3l-3-1l-4 0l2-3zM150 315l-5-4l-2-4l8 2l3 3zM189 332l3 2l0 2l-3-1l-3-3zM125 293l4-1l5 1l-3 3l-2 4l-4-4zM186 329l-1 3l-5 2l0-2l-2-4l4 0zM253 327l2 4l-2 3l-3-3l-2-2zM263 330l6 1l3 3l-4 2l-4-2zM296 323l-2 2l-2 1l-1-3l1-3l3 1zM270 332l1 2l1 3l-3 0l-5-2zM297 336l3-4l5 2l-4 3zM302 359l-2 5l-1 4l-4-3l-1-5l4 0zM304 320l1-2l4-3l0 4l0 3zM369 321l-8-2l-4-4l8 0zM354 343l-2 2l-4 0l1-2l0-4l4 3zM293 342l1-3l1-4l5 2l-1 5zM302 329l2 3l-2 6l-3-3l-3-3zM379 345l2 5l-1 4l-3-3l-3-4zM370 338l-6-3l-1-6l6 2zM379 334l-2-6l3-4l3 4zM370 369l-1 3l-1 4l-3-2l-2-2l2-1zM363 390l4 0l2 4l-4 0z"/><path fill="#1c3412" d="M276 51l7-1l2 4l-5 0zM267 50l3-3l5 0l-2 3l-2 3zM356 61l-1 2l-2 3l-3-2l0-4zM341 75l-1-2l-1-3l3 1l2 0l-1 2zM306 89l-1-3l0-3l6 1l2 3l-3 2zM286 92l-5-2l-3-3l5 0l3 1zM325 99l1 4l0 3l-3 0l-4-3zM321 102l0-3l1-3l3 2l2 1l-4 2zM313 121l-4 2l-1 3l-3-3l-1-4l5 0zM307 87l2 2l-1 3l-3-1l-1-2zM290 97l-1 5l-5 1l-1-4l1-3zM295 98l-4 2l-5-1l3-3zM254 124l0 6l-3 4l-3-4l2-5zM337 132l3 4l0 4l-5-1l-3-2l2-2zM332 134l5-1l5 4l-5 2l-4 0zM356 134l4-2l4 3l-1 1l-4 3l-2-3zM292 155l4-3l5 0l-2 4l-4 4zM273 125l3 1l2 0l-1 2l-2 2l-2-2zM328 155l-1-3l3-4l2 3l1 4zM186 157l5 1l1 5l-4-1l-3-1zM197 189l-3-2l-3-3l5-1l2 1zM195 176l2 2l2 2l-4 1l-2 0l0-2zM216 189l4-1l6 1l-2 3l-4 2l-3-3zM231 190l6-1l3 2l-3 2l-4 1zM232 179l0-3l0-3l4 1l3 1l-3 2zM255 168l-4-1l-3-2l4-3l5 1zM350 198l-3 4l-4-2l3-2zM303 202l-2 3l-4 2l0-4l1-3zM312 165l-1 5l-6 3l1-7zM274 174l1 4l-4 4l-1-6zM368 181l-5-4l1-4l3 0l5 1l-2 4zM364 188l-3-3l-3-4l7-1l3 4zM295 198l0 4l-3 3l-3-1l-3-3l5-3zM314 208l-6 1l-4-1l1-3l0-3l5 2zM300 180l3-4l5 0l-2 4zM340 169l-5 2l-6-2l4-2l8-1zM341 154l-3 2l-5 1l3-4zM337 145l1 7l-3 2l-3-3l-1-5zM328 150l4-2l6 2l-5 3l-3 2zM326 169l3-2l4 0l-2 3zM332 157l3 3l1 3l-4 0l-3-4zM287 148l3 3l-2 2l-3-2zM359 177l-2-1l-2-1l2-2l4 0l-1 2zM362 183l5-1l3 0l-3 3l-3 0zM424 151l-4 2l-3 0l1-4l3-1zM425 187l3-1l4-1l-2 3l-2 3zM422 189l1-6l3-1l1 3l0 5zM471 178l-5-4l2-6l4 4zM455 179l1-3l7-4l0 4l-2 6zM375 233l-1 4l-7 1l2-4zM320 249l2 2l1 3l-4 0l-2-1l2-3zM381 180l3 3l3 2l-5 1l-4-1l1-2zM378 178l-4 0l-3-3l5 0zM330 240l-2 0l-5 1l1-3l0-2l4 0zM418 231l0-2l3-3l1 2l1 4zM426 204l4 1l3 3l-4 2l-4-2zM345 234l3 2l3 2l-4 2l-4 0l1-3zM282 219l0-5l3-3l2 2l3 2l-5 4zM404 199l-2 5l-6 1l1-5zM422 239l-3-3l1-5l6 2l3 1l-4 4zM317 209l4 2l1 3l-4 1l-4 0l1-4zM315 205l1 2l1 3l-4-1l0-3zM342 186l5 1l2 4l-5-1zM431 235l3 2l4 3l-3 2l-6-1zM386 231l-3-2l1-4l4 1l1 3zM318 230l-2-3l2-3l2 3zM355 209l5 2l2 5l-4-1l-6-1zM365 236l-3 1l-5 1l2-6l4 0zM359 233l-2-5l5-4l1 6zM365 184l-2 3l-6 0l0-2l5-5zM365 241l-1-3l-2-1l4-2l2-1l0 3zM298 214l-3-5l-3-4l6-1l5-1l-2 6zM372 232l-3 2l-5 1l2-5l5-2zM355 195l0-2l4-5l4 3l0 5zM430 203l-3 4l-4 4l-3-5l0-4l4 0zM306 186l-3 2l-3 1l-1-3l1-3l4 2zM363 212l1-4l1-3l2 4l0 3zM400 205l0-4l6-2l0 5zM297 186l4 2l2 5l-6 0l-1-1zM370 185l4-1l2 1l0 2l-3 2l-1-2zM303 197l-1-3l1-5l4 3l2 4zM372 193l-4-5l-3-3l9-1l3 3zM331 211l5-4l3 0l0 4l-5 3zM352 206l-7 1l-6 1l2-4l5-5l2 4zM409 224l-1-3l2-2l2 1l1 3zM405 201l-3-5l3-7l4 5l2 3zM407 195l5 1l0 5l-4-1zM420 221l-1 3l-6 2l-1-4l-1-4zM402 227l1-3l2-2l2 3l0 3zM394 221l3-3l6-1l1 3l-6 4zM296 246l3 1l4 1l-3 2l-3 1l0-2zM310 213l0-4l1-3l5 1l1 5zM303 249l-3 0l-3-2l2-1l4-1zM315 243l4 3l1 3l-6 1l-5-3zM301 207l-1-4l-1-4l5 1l3 1l-3 4zM276 210l3-3l4-2l1 5l0 4zM283 209l-1-2l0-2l2 0l3 0l-1 3zM282 213l4-2l5 0l0 5l-6 1zM269 233l2-3l6 0l-3 3zM424 248l5-1l3 1l-2 5l-7 1zM215 298l-1-3l0-4l3 1l2 4zM230 283l-4 2l-4 0l2-4l2-1zM220 273l-4 3l-4 3l-1-2l-2-5l4-1zM230 267l-2 4l-6 1l2-6zM211 244l-1 3l-2 3l-2-3l-1-3l3 0zM265 238l2 2l1 2l-3 2l-4-4zM275 233l4 0l4 2l-5 2zM310 288l1 4l-5 3l-1-4zM276 252l-3-3l-1-4l6 0l2 4zM245 274l0-5l4-3l1 6zM352 241l-6-2l-1-6l7 3zM327 246l1-4l3-1l1 1l-2 4zM424 268l-4 3l-3 0l2-5zM303 261l2 4l-3 5l-3-6zM313 303l6-1l5-1l-2 4l0 3l-6-1zM427 291l-4 2l-4 1l2-3l2-2zM419 289l6-3l5 4l-6 1zM408 281l3 2l1 7l-5-3l-5-3zM405 283l-4 5l-6 1l0-5l3-3zM367 300l-2-3l-1-4l4 0l3 0l-1 3zM290 301l-3 3l-3 3l0-4l-1-4l3 1zM299 301l-2 3l-2 4l-3-3l1-5zM323 300l-4-2l1-4l4 2zM329 295l7-3l5 2l-3 3l-6 3zM365 257l-1-4l0-3l3 2l2 1l-1 2zM368 249l-3-2l-2-3l4-1l3 2zM284 247l3 3l2 3l-2 2l-5 0l0-4zM308 293l3-6l5 0l-3 5zM300 259l1-3l3-2l1 2l-1 3zM294 253l4 0l5 1l-2 4l-3 1l-4-3zM297 254l-5 2l-3-2l3-2l4-1zM248 280l4-4l6 2l-4 4zM364 250l1-4l2-5l2 3l2 6zM301 286l-5 0l-3-1l3-2l4-2zM319 295l5 2l1 5l-5-1zM297 302l1 6l-7 3l1-4zM273 285l0 2l-2 4l-2-1l-3-2l3-1zM339 276l6-2l5 0l-3 5l-5 1zM295 252l5-2l4 2l-2 3l-6 0zM395 268l-1-3l1-2l2 1l2 2l-2 2zM400 256l4 0l2 2l-2 1l-3 1l-1-3zM397 252l4 4l5 3l-6 2l-6-1zM318 303l2 3l-2 4l-4-3l-1-3zM318 274l0 3l-4 2l0-2l1-3zM260 264l-2 1l-3-1l1-3l4-2l0 3zM346 296l7 4l0 6l-5-2zM329 297l-2 4l-4 5l-1-5l-1-5zM331 271l-4 3l-9-1l7-3zM277 289l-5 3l-5-3l3-1l5 0zM406 258l-4-4l2-4l5 3l1 4zM292 265l0-4l1-2l2 1l0 4zM349 308l3-4l5-1l0 3l-2 3zM305 256l2-3l6 0l-1 3l-1 4l-4-2zM396 305l-5 2l-6-3l8-2zM387 331l5-4l4-2l-1 6l-4 3zM376 313l4-4l5 2l-3 3zM411 292l0-4l1-2l4 2l0 1zM411 292l-3-4l2-5l5 4l-1 3zM410 296l-3 1l-6 2l1-4l1-2l4-1zM206 318l-6-1l0-4l4 1zM198 318l-1-4l3-2l1 3zM153 360l0-3l3-5l1 4l0 4zM189 315l3-1l3-2l1 3l-1 3l-3-1zM152 304l3 3l-2 4l-4-2l-2-3zM173 309l-1 3l-5 4l-2-5l2-6zM184 332l-5 4l-6-1l2-4l4-3zM173 325l0-5l4 0l0 3zM181 309l-3 2l-3 2l0-2l-1-4l2 0zM148 303l5-4l6 0l-1 4l-2 3zM191 341l-2 3l-5 3l-1-4l2-4zM131 317l0-6l7-3l0 6zM140 312l-1 3l-2 5l-2-5l-1-3zM142 346l0 4l-2 3l-4-2l-2-1l2-3zM196 339l0-4l2-6l5 5l-2 6zM172 335l-1 2l-3 3l-1 0l-3-4l3-1zM167 340l5 0l4 2l-4 2l-6 1zM189 303l-2 4l-6 0l0-2l1-4zM171 322l0 4l-3 3l-2-4l1-3zM142 306l0 2l1 3l-5-1l-4-2l4-3zM193 330l-2 3l-1 2l-4-1l-2-4l3 0zM194 333l5-2l4 0l-2 4l-2 2l-4-3zM152 320l-2-3l0-4l3 1l4 2zM159 320l2 0l4-1l0 1l0 4l-3-2zM226 347l-1 3l-1 3l-3-3l-3-3zM214 360l-2-4l0-3l5 0l3 2l-2 2zM230 309l5 4l1 3l-6 1l-5-4zM219 323l-4 0l-3 0l2-4l3-2zM191 325l-3 4l-6 0l3-4zM279 339l-3 1l-1 2l-2-4l1-3l2 1zM264 316l5 1l2 4l-5-1zM289 320l6 0l4 1l-4 5l-4-2zM277 316l-3-2l1-3l3 2zM304 308l-5 3l-3 1l0-3l1-6l5 4zM272 330l0 4l-2 3l-1-2l-2-2l2-1zM291 299l4 1l5 3l-5 2l-6 0zM280 335l6 0l3 2l-3 3l-5 0zM279 330l-4-3l-1-5l5 3zM284 322l-1 3l-3 2l0-3l0-3l2 1zM280 334l-1-5l2-2l2 1l-1 4zM266 314l5 0l2 2l-2 2l-3 2l-2-3zM289 328l-2-3l-4-2l3-3l5-1l1 4zM309 341l-3-2l0-5l3-1l7 3zM313 312l6 2l-4 7l-4-5zM293 348l-2 5l1 5l-6-4l-2-5zM351 300l-3 3l-1 1l-2-3l2-3l2 1zM368 322l2 3l-4 3l0-3zM288 309l2-2l3-3l1 3l0 3zM362 343l-3 3l-6 1l3-6zM334 341l-1 2l-4 2l-1-2l-1-5l4 2zM322 347l-1-2l-1-2l4-1l2 3l-2 1zM331 346l-2 1l-4 0l3-3zM290 345l-6 4l-4-1l1-4l4-2zM297 347l-3 3l-4-2l4-2zM306 345l-6 0l0-5l4 0zM315 301l0-3l5-1l-1 2l0 3zM348 296l4 0l2 4l-5 0zM283 344l3-1l5 1l-4 4l-3 0zM295 341l-3 2l-5-1l1-1l2-3l3 1zM302 355l5 1l5 0l-4 4l-1 2l-3-3zM298 374l0-3l-1-4l6 2l2 2l-3 2zM361 312l4 2l0 5l-5-4zM361 314l3 3l2 3l-3 0l-5 1l0-3zM376 338l3-3l2-3l2 5l-1 4l-3-2zM382 353l-3 0l-4-2l4-2l3-1l-1 2zM324 336l2-3l4 0l0 4l-3 1zM373 338l3-2l3 3l-3 1zM344 330l-6 1l-3-1l3-3l3-2zM344 387l2-3l4 0l0 3l-3 2zM378 382l-4 0l-2-3l3 0l4-1zM339 408l3-2l5-2l1 4l-2 4l-4-1zM353 400l-3-2l4-5l2 2zM351 381l-4-3l-3-2l5-3l5 0l-2 3zM375 346l7-1l4 3l-6 3zM385 354l-5 1l-2-2l4-3l3 1zM318 370l-1 3l-1 4l-3-3l0-2l2-1z"/><path fill="#3a6131" d="M308 52l4 1l2 3l-2 1l-6-1zM355 61l3 0l4 1l-3 2l-4 2l0-3zM314 108l4 2l2 2l-4 1zM325 94l2-1l3-2l0 2l1 3l-3 0zM321 95l2-3l7-1l-1 3l-3 5zM300 86l-2-3l5-5l2 4l2 4zM344 137l1-2l4-3l2 4l-4 3zM281 129l1 3l1 2l-4 1l-3 0l3-4zM284 145l2 5l-2 5l-5-4l-1-3zM347 135l1-4l2-3l3 4l-2 3zM245 196l-2-4l0-3l5 1l2 4zM312 184l-5 1l-4 0l3-4l3-2zM300 177l-2-4l3-3l2 3zM318 162l-1-5l5-3l1 4l-1 3zM334 151l0 3l-1 3l-3-3l0-3zM264 169l3 2l1 1l-3 2l-2 0l0-3zM440 184l3-2l3 0l1 3l-5 3zM424 236l1-3l1-3l3 3l1 2zM261 215l6-1l4 2l-6 3zM376 198l-3-2l2-4l3 1l1 4zM301 194l4-4l7 1l-3 5l-5 3zM281 214l3-2l4 1l-1 3l-5 1zM420 243l1-6l5-3l1 5l3 4l-7-1zM360 225l-5 2l-5-3l6-3l3 0zM354 183l-3 4l-7 0l3-5zM379 187l-1 6l-6 2l1-6zM373 240l-5-3l-5-3l6-2l5 1zM430 244l-5-2l0-4l4 2zM370 253l4 2l1 3l-4 0l-2-3zM356 208l4 2l2 3l-6 0zM434 208l5 0l4 3l-7 2l-5-1zM410 187l-1 4l-3 4l-3-2l-1-5zM413 236l0-3l2-2l3 2l-2 3zM269 240l5 2l3 3l-5 1l-4 0zM284 226l3 2l0 4l-3-3l-3-2zM297 207l-5-2l-3-2l3-2l7 1zM263 219l3-3l5 0l-1 4l-5 2zM283 238l-4 5l-5 2l2-6zM326 253l0 4l-6 1l2-5zM428 242l1 4l-3 3l-2-2l0-5zM447 249l-4 1l-4-2l4-1l2 0zM268 263l-1-6l3-3l4 4zM265 243l3-2l3 0l1 1l-1 4l-3-2zM342 227l3 4l-3 3l-2-4zM314 292l0-5l5-2l0 6zM310 264l4 1l6 3l-5 2l-3 0zM322 307l-3 2l-3-1l2-3l2 0zM319 309l1 4l1 4l-6-1l-2-4zM370 254l5 0l2 3l-3 1l-3-1zM374 255l-5 2l-3 1l1-5l3-1zM307 303l3-3l4-2l0 5l-3 3zM293 298l6-2l6 4l-6 1zM334 298l0-3l2-4l2 2l1 3zM345 287l5 0l4 1l-2 3l-5 1zM257 258l4 3l-2 4l-3-2l-4-2zM361 296l-4 1l-5-2l5-2zM312 282l3-5l5 0l-2 5zM328 267l3 3l-1 3l-2-1l-3-2zM272 267l-4-5l2-5l3 2l3 7zM414 264l-6-2l-2-3l4-2l6 0l-2 4zM376 304l-2-4l3-2l1 3zM376 306l1 2l-1 4l-3-2l-1-2zM413 333l-2-2l0-4l3 2l4 1zM385 303l-6 0l-3-3l5-2zM403 288l3 3l-2 4l-3-3l-1-4zM151 299l5 0l3 3l-3 2l-4-1zM139 317l3 2l2 2l-2 0l-5 1l1-2zM138 314l2-1l2-1l1 3l0 2l-4-1zM207 351l-3-1l-3-3l5-1l4 0l-2 4zM208 329l-4-1l1-6l4 3zM209 318l2 4l-6 4l-2-5l1-5zM207 366l-4-2l0-3l2 0l3 1zM237 310l-1 3l-1 6l-3-3l-3-4l2 0zM302 325l2 2l1 4l-5-1l-2-5zM290 327l-1 4l-5 3l-3-3l-3-3l5 0zM285 324l-3 3l-8-3l7-4zM279 315l2 4l-1 3l-5-2l-1-4zM304 295l3-1l3-2l1 3l-1 3l-3-1zM241 326l3 1l3 2l-2 2l-5-1zM275 289l-2-3l0-4l4 1l3 0l-2 3zM263 286l3 4l0 3l-4 0l-3-2l1-2zM264 300l-4-4l0-3l6 0l2 4zM258 316l-3-2l-2-3l4 1zM360 306l0 3l-2 3l-4-3l1-3zM328 316l0 4l-1 1l-3-1l-2-3zM373 346l0 4l-3 4l-3-4l-1-4zM349 318l-1-5l-1-5l5 1l6 2l-3 3zM288 349l-4-2l-1-3l2-2l6 2zM338 309l-2 3l-6-2l3-2zM360 305l-1 3l1 1l-4 0l-2-2l2-2zM338 326l2-1l4 0l-1 3l-1 2l-4-1zM317 363l3 0l3 2l-5 1l-2 1zM337 303l-4-2l-1-4l5 0l3 2zM332 402l3-3l3-2l2 2l0 4l-3-1zM358 407l-4-3l-1-5l4 0l4 3zM348 368l-2 4l-2 3l-1-4l1-4zM367 374l3-2l6-3l2 4l-5 5zM329 367l-3 0l-3 0l1-2l0-3l3 2z"/><path fill="#2a4c1b" d="M267 43l0-5l5 0l-1 2zM282 56l-2-3l-1-4l6 1l4 3zM278 81l-5 2l-4 1l1-5l4-3zM289 111l6 0l2 4l-5 1l-3-1zM314 104l2-3l4-2l0 5zM285 110l4 0l3 0l-2 3l-2 1zM282 98l5-2l6 2l-7 4zM288 96l0-3l3-3l1 3zM238 172l-5-1l-3-6l7 1zM249 172l-1 5l-3 3l-2-5l0-3zM347 173l-5-3l0-4l6 1l3 1zM332 204l2-5l7 0l-2 6zM310 153l1-4l2-3l4 2l1 3l-3 1zM341 153l1 4l-5 3l-1-3zM322 172l-4 4l-3 2l-1-5l0-3l3 1zM271 172l-5 1l-5-4l5-2l6-1zM321 180l-3 0l-5-2l3-2l5 0zM291 178l-3 3l-2 3l-2-4l3-4zM350 157l7 3l2 3l-6-1zM428 167l-1 4l-1 3l-3-2l-3-1l5-3zM421 164l2-2l5 0l-1 2l-2 4l-2-2zM446 174l3-2l4 0l1 3l-3 4zM395 246l-5-1l-6 1l4-6l4-1l2 3zM411 229l-3 3l-4 1l2-5zM415 227l-2-3l-1-1l4 0l4 1l-2 2zM353 223l-2 2l-4-1l4-3zM335 210l-5 0l-4-1l3-3l2-2l3 2zM287 212l-4-2l-3-4l6-1l3 3zM275 219l-2 1l-7-1l4-5l5-2zM429 201l-4 2l-3 2l-1-2l-3-4l5 0zM278 223l3 3l1 4l-5-1l-3-5zM289 187l3 3l-4 2l0-3zM359 245l2 2l0 4l-3-3zM381 216l-5 2l-4-2l2-3l3-1zM421 203l6 1l1 5l-4 0zM415 200l5 2l-1 3l-4-2zM394 219l1-4l0-3l4 0l4 1l-4 4zM298 244l0-4l1-4l4 1l4 4zM269 227l3-1l3 2l-1 1l-3 3zM289 236l-2 3l-3 1l0-2l-1-3l3 1zM458 231l5 1l1 5l-5-2zM233 263l7-4l7 2l-7 4zM271 251l-1-5l0-5l6 3l1 6zM270 250l4-6l4 2l-2 3zM373 283l2-2l4-1l-1 3l1 4l-4-1zM413 273l3-2l2-3l2 5l1 4l-4-1zM318 235l1 5l-4 5l-3-5l1-4zM322 238l1 3l-3 3l-2-2l-1-4zM300 259l-6 1l-5-1l3-3l7-2zM390 296l0 3l-1 3l-3-3l-1 0l2-2zM385 300l-1-5l3-4l5 4l-2 6zM326 246l-5-1l-3-7l9 3zM425 286l3-1l3 4l-3 0l-3 0zM324 283l-4 1l-3-1l2-2l3-1zM322 304l1 4l-2 1l-2-3zM420 269l4-3l7 1l-5 3zM289 293l0 3l-5 2l1-3l-1-4zM322 309l-4-1l-3-2l2-1l5 0zM268 300l3 1l-2 5l-1-2zM276 299l-1 5l-3 2l-2-3l0-3zM341 268l-4-2l0-7l5 2zM342 308l4 2l2 4l-6-1zM412 283l-3 3l-6-2l4-3l3-1zM404 269l-5 0l-3-1l4-3l4 0zM323 284l-1-5l3-2l1 3zM341 260l-6-1l-4-3l5-3l4 1zM379 312l-4-6l5-4l2 5zM410 322l-3-3l2-4l3 1l3 6zM415 284l2 0l4 3l-2 1l-2 2l-3-3zM404 301l0-4l4 0l0 4zM150 324l-4 3l-7-1l3-5l5 0zM151 319l0-4l2-4l5 5l-1 4zM151 312l0 3l-2 1l-2-3l-1-2l4 0zM111 303l5 0l5 0l-1 4l-1 4l-5-3zM145 319l2 1l2 3l-2 0l-3 0zM228 330l0-2l0-2l4 1l0 3zM270 317l6-3l6 4l-8 2zM271 325l7 1l1 5l-6-2zM291 335l-3 3l-5 1l2-4l3-4zM244 327l-1-2l2-3l2 3zM269 321l4-1l4-1l-1 4l-3 1zM249 305l-7-1l-4-2l5-2l3-1zM327 324l1-4l2-2l2 1l2 3l-4 1zM287 363l-2-1l-2-2l2-2l4 0zM303 312l-2-5l6-1l0 5zM378 327l2 4l-2 3l-2-2l-2-3zM285 356l3-2l2 2l-3 1zM357 335l1 5l-2 3l-4-3l-1-4zM366 353l-2-5l4-6l1 6zM394 337l-3 1l-4-1l3-2l3-1zM342 316l-5-1l-1-6l7 3zM374 340l-3-1l-2-2l2-2l4 0zM352 406l-5-3l-1-3l6 0l3 4zM367 392l-3-3l-3-6l6 1l5 1l-3 4zM375 393l-2 2l-5 2l0-3l1-5zM353 376l5 2l-2 5l-4-2zM338 382l5 1l2 3l-5 0zM339 401l1-2l6-2l-2 4l-1 2zM259 375l1 7l-3 3l-4-3l1-6z"/><path fill="#16280e" d="M264 36l8 3l-3 5l-4-3zM267 42l5-4l6 2l-6 5zM269 51l-4-2l-1-5l6 2zM269 41l4 0l6 2l-6 3zM280 67l3 0l6-2l-2 4l-4 4zM272 76l1-4l3-3l2 4l-1 4zM270 71l0-3l4-1l0 2l0 3zM306 125l-1-1l-2-2l2-1l2-1l0 3zM314 111l5-2l3 2l-2 1l-2 4zM332 83l-3 0l-5-5l4-1l3-2l2 3zM286 99l-3-1l-1-2l3-1l1 0l0 3zM321 110l-3-3l-1-6l5 2l4-1l-1 5zM323 105l-3-5l4-4l2 6zM283 100l2 3l1 2l-4 0l-3 0l1-3zM263 129l-2 3l-6 4l0-5l1-4zM262 126l-7-1l-1-3l4 0zM286 129l2 4l-4 5l-1-4zM277 131l-1 5l-7-1l5-5zM295 139l-2-2l-1-4l5 1l2 3zM271 149l6-1l4 3l-7 3zM303 148l0 4l-2 3l-3-3l1-3zM282 134l-5 0l-3-1l2-3l5 0zM281 141l3 3l-1 3l-2-1l-3-2zM339 142l3-4l3-1l2 2l0 3zM361 152l4 2l0 4l-4-1l-3-2zM369 151l-4-4l0-1l3 0l3 2zM391 140l-3-3l-1-2l4 0l3 0l-1 2zM187 168l-1-2l2-5l4 4l0 4zM206 184l-1-4l-2-3l6 0l3 4zM198 202l2-4l3-2l3 4l-1 5l-3-1zM251 185l4-4l3-1l2 4l-4 6zM243 200l5-3l4 2l-3 3l-3 2zM245 175l5-1l4 2l-5 3zM274 205l5-1l4 6l-7-2zM265 204l4-1l2 3l-5 0zM309 190l4-2l6-1l-2 5l-7 3zM338 150l3 1l2 6l-5-3zM334 157l-1 3l-3 2l-2-3l2-4zM305 167l1 4l-1 2l-3-1l-2-3zM307 166l-5 0l-3 1l0-4l2-2l4 1zM322 150l-4-1l-3-2l5-1zM292 154l5-3l5 3l-3 3zM307 143l-2 2l-5 1l0-5l4-2zM301 205l0 4l-6 4l0-5l-1-5zM302 184l-2 3l-2 3l-3-3l-2-1l5-2zM344 182l-4 0l-3-2l4-2l3 0zM348 180l-5-2l-3-1l3-4l2-2l2 5zM353 169l-4 1l-4-1l2-4l3 0zM287 182l-3-4l4-4l1 4zM338 159l4-5l8 1l-5 4zM330 162l2 3l-2 3l-4-2l-2-3zM320 181l1 4l-4 2l-2-3l1-4zM300 169l-2-6l5-4l2 4l1 5zM345 153l-3-1l-3-4l6-1l5 1zM428 156l2 5l-4 4l-1-4zM423 164l-4-1l-4-2l3-3l6-2zM438 188l-5 2l-5-5l4 0zM457 167l3 3l1 4l-5 0l-4-2l3-2zM447 172l7 1l4 3l-8 2zM452 180l-1 3l-5 2l-1-4l2-4zM327 226l6-2l3 2l-4 2l-3 2zM400 210l-1-5l2-3l4 2l3 2l-6 2zM316 191l-6 1l-4-2l3-3l4 0zM314 237l3 0l2 3l-3-1zM321 252l2-2l2-3l2 3l2 3l-4 0zM316 198l-5 3l-5-2l4-3zM276 245l3-3l5 0l-3 4zM267 224l-2-4l2-4l4 2l0 6zM270 229l1 3l0 2l-4-2l0-3zM372 241l1-3l0-4l3 2l3 2l-2 2zM345 264l-4-4l1-3l3 3zM331 232l3-1l3 0l0 3l-2 1zM322 211l0 2l-2 3l-3 0l-3-5l5-1zM299 218l-3 1l-3-1l1-3l4-3zM419 253l4-4l4 1l-3 3zM359 204l-1-3l2-6l5 5l0 5zM354 228l-5 3l-6-1l4-3l2-2zM425 231l1 4l0 3l-4-1l-3-2l3-2zM350 248l5-1l4 2l-2 2l-5 3zM432 233l-2 2l-6 0l1-3l4-3zM354 217l5-1l4 0l-2 3l-1 3l-4-2zM336 243l-1-4l4-4l1 5zM370 194l-1 2l-1 2l-2-1l-2-3l3 0zM269 215l4 4l-3 4l-2-3zM406 197l-5-2l-2-5l5 0l6 4zM278 208l-4-2l0-2l4 1zM377 260l-4 2l-4-1l1-3l4-2l1 1zM398 221l3 3l1 3l-4 0l-3-2zM389 220l2 3l1 4l-5-2l-2-1zM359 242l3 0l3 2l-2 2l-4 0zM269 208l3 2l-1 4l-6 0l-3-3l3-2zM369 237l3-1l3 2l-3 2l-2 1zM399 207l-4 3l-4-2l2-3zM409 226l3-4l3-1l1 5l-3 3zM404 224l-1-5l1-4l6 5l-1 4zM404 210l2-3l5-2l-1 4l-2 2zM434 206l4 0l4 0l-1 5l-2 2l-3-3zM383 216l6 0l2 6l-6-2zM262 229l1-3l3-4l3 4l1 6l-3-2zM283 245l0-3l3-3l1 2l0 3zM278 231l3 2l1 3l-4 1l-3-2zM284 240l-3-2l-4-2l3-2l5 0l0 3zM308 230l5 2l-2 4l-3-3zM293 239l-3 0l-4 0l2-3l6-2zM278 207l5-2l4 1l-3 5l-5 0zM461 237l4-1l4 4l-6-1zM435 245l2-2l3-1l2 2l0 2l-4 1zM418 243l6 0l3 2l-3 3l-5 0zM221 284l-2 4l-5 1l3-5zM241 261l-4 1l-3-1l2-2l4-1zM248 273l-1 4l-2 3l-4-3l1-5zM279 250l0 3l0 5l-6-2l-3-4l4 0zM286 241l-5-1l-1-4l3-1l5 1l-1 2zM275 234l4 1l1 5l-5 0l-4-4zM270 245l1-5l8-2l-3 7zM304 299l4 1l3 1l-2 2l-2 2l-2-2zM277 257l-3 0l-7-1l3-3l4-2l1 2zM360 289l-5 1l-4-1l1-2l0-2l4 0zM276 254l-6 1l-5-4l5-3zM283 248l-5 3l-3-1l2-5l4-1zM387 289l5-2l5 3l-5 2l-3 2zM418 303l-6 0l-4-3l6-2zM383 283l1-3l3-3l3 3l0 2zM332 244l0 3l1 5l-6-1l-3-2l3-3zM402 282l5 0l6 4l-5 3l-4 1zM351 244l-3 1l-4-2l3-3l3 0zM356 251l-4-1l-2-2l4 0zM306 262l3 4l-3 4l-3-1l-3-7zM324 258l4-1l4 1l-4 4l-3 3l-1-3zM402 271l0-6l2-4l4 2l4 4l-5 1zM286 261l-3-3l-1-3l4 1l2 3zM353 313l2-3l4-3l1 3l-1 5zM369 250l-2-3l0-3l1 0l4 2l-2 2zM298 245l1 5l-2 3l-3-2l-2-2l2-2zM272 260l-1 5l-7 1l5-5zM305 313l-5 3l-5-3l5-2zM290 308l0-3l2-3l3 3l-1 2zM300 259l-4 1l-4-1l3-2l4-1zM301 251l0 4l-2 2l-3-2l1-2zM350 271l1-4l3-1l0 3zM368 264l-5-2l-3-2l5-1zM411 286l-5-2l-5-1l4-2l2-4l4 4zM305 254l3 0l3 3l-4 0l-3 1zM297 255l2-7l5-2l2 6l-3 3zM400 266l1 3l-4 4l-2-4l0-3zM384 272l-5-2l-2-3l3-1l4-1l2 4zM315 306l5 4l-2 5l-5-5zM345 276l-3-2l-3-3l5-2l4 3zM420 258l2 3l-1 3l-3-3zM316 321l-5-1l-5-3l5-2l4-2l0 4zM323 269l6 4l-4 5l-4-5zM273 312l3-6l4-2l1 6zM379 287l-3 1l-5 0l3-5l5 0zM352 311l-1-2l-1-5l4 2l3 1zM302 298l4-4l5 1l-2 3zM380 309l-3-4l1-3l4 1l2 3zM414 304l5 4l-3 4l-5-5zM396 302l3-1l5-1l-1 4l-3 2zM412 296l-5 0l-3-6l6 1zM382 307l3 4l0 4l-7-2l-2-4zM396 266l3 5l0 2l-4-2l-2-3zM387 306l0 3l-3 2l-2-3l2-3zM399 272l-1 7l-7 1l2-5zM418 290l4-1l2-2l1 3l1 3l-4-1zM413 287l3 2l4 3l-5 1l-5 0zM368 287l0 3l-4 2l-1-4zM188 321l5 0l3 1l-3 2l-3 1zM195 322l-5 2l-5 0l2-5l5 0zM174 332l3-3l5-1l-2 4l-3 3zM172 320l-2-2l-1-3l3 0l3 3zM197 333l4 1l2 4l-3 0l-5-2zM159 327l-2-5l3-4l3 4zM191 341l-3 5l-6 1l0-6zM151 331l3 6l-5 4l-2-4zM143 333l-4-1l-4-3l4-1l4 0zM156 305l-2-2l1-3l3 2zM153 312l5 0l7 1l-3 4l-6 3zM146 320l-3-4l4-3l1 3zM210 348l1-4l5-4l1 6l-3 5zM217 320l-4-1l1-4l3 1zM221 325l6 1l0 6l-4-3zM193 327l-7 0l-4-3l6-2l6 1zM264 348l-3-2l1-4l4 2l2 1zM253 334l-1-3l3-3l2 2l1 4zM280 313l-3 2l-3 1l1-4l1-2l2 2zM252 325l4-2l3 4l-4 0zM305 302l-4 0l-2-2l3-1l3-2zM298 305l2 0l3 3l-3 1l-3 0zM271 336l1-3l6 2l-4 3zM315 309l-5 0l-5-2l5-3l5-1zM266 324l3-1l4 1l-1 3l-3 3l-2-2zM271 321l4 4l0 4l-5-1l-4-3zM302 296l-3 3l-3 1l-2-5l3-4l2 2zM253 314l3-4l2-3l4 4l-2 5zM276 339l-3 4l-1 2l-2-2l-3-3l5-1zM253 340l-3-6l4-4l3 3l1 4zM289 333l-3 1l-4-1l2-2l3-2zM283 309l-2 0l-3-3l3 0l3-1zM247 324l1-3l2-4l3 2l0 4l-3 0zM352 348l-3 0l-3-4l4 0zM341 349l4 0l4 0l-2 4l-4 2l-1-3zM370 312l2 4l-3 4l-3-4l-1-4zM360 298l-4 4l-4-2l4-4zM370 321l1 4l-3 4l-4-3l-3-3l4-1zM327 339l4 4l0 5l-4 0l-5-5zM314 351l4 0l3 0l-2 2l-3 2zM367 341l4-3l3 0l-2 4l-4 1zM318 334l-2-3l-1-2l3 0l3 1l-2 2zM317 350l0-5l-1-3l6 1l2 5zM344 318l-6 0l-2-2l3-2l5 1zM291 342l2 2l3 4l-4 0l-4-3zM285 336l0 4l-3 2l0-4zM315 299l-2 5l-7-1l4-4zM295 330l4 0l6 3l-5 2l-5-1zM292 362l-3-4l5-2l0 3zM370 350l-6 1l-4-3l4-3l6 0zM314 365l-5 2l-3-4l4-1zM321 359l-6 3l-5 3l1-6l2-4zM331 302l0-6l2-3l4 5l-2 4zM293 322l2 2l1 4l-6-1l0-4zM301 321l-5 4l-4-1l2-4l3-2zM294 364l3-3l4-1l-1 5l-1 3zM328 360l4 2l1 5l-5-2l-5-2zM358 319l-2 3l-8 1l2-4l4-3zM354 327l-4-1l-5-1l4-4l4 2zM376 347l5 0l2 4l-5 0l-4-1zM389 349l-4 0l-5-1l5-5l4 0zM356 334l1 3l-1 4l-2 0l-6-3l4-1zM342 326l4 5l-1 4l-4-1l-4-3zM373 334l2-2l0-3l2 3l2 2l-3 0zM358 378l-3 1l-3-3l3-1l4 1zM358 374l-3 1l-3-1l1-2l3-1zM345 371l4 0l6 4l-5 2l-6 0zM346 374l-1-3l0-2l4 2l0 3zM364 391l5 1l1 4l-4-1zM337 374l5 2l3 4l-7 0l-3 0zM383 346l-4-3l0-2l3-1l5 1zM253 393l-5-2l1-5l6 1l1 5zM260 369l0 2l1 3l-3 0l-4-2l2 0zM335 370l5-2l4-1l0 5l-3 2z"/><path fill="#152813" d="M274 70l2-2l3-3l0 3l3 2l-4 0zM310 51l3 0l3 3l-2 1l-3 1l-1-1zM370 61l-5 1l-4-3l3-2zM263 79l2 2l-1 5l-6-2l-3-3zM312 85l-4-2l-3-3l5-2l4 3zM314 96l4 2l2 4l-4 1l-4 0zM314 76l0 2l-1 3l-5-3l2-3zM325 105l0-5l-1-2l6 1l1 3l-2 1zM298 93l-5 5l-7-2l7-3zM254 124l-2-5l0-3l6 1l3 2l-3 3zM305 129l4-5l7 2l-6 4zM338 130l4 3l0 3l-2 0l-4-3zM319 137l-5 0l-3-4l6-1zM317 154l4 3l0 4l-4-1l-2-4zM354 137l-3 1l-4 0l3-3l3-1zM238 196l5-3l4 1l-2 4l-4 1zM278 199l5 0l4 4l-6 3l-5 1l0-5zM264 202l3-3l6 1l-4 4zM357 157l-2-2l-1-5l6 1l4 5zM340 167l-5-3l0-3l5 1zM348 186l3-1l2 1l-1 2l-4 2l-1-2zM345 200l-3 2l-2 1l-2-3l2-2zM306 144l-5 3l-7-2l9-3zM358 179l2-1l3-4l3 5l0 4l-5-2zM305 156l3 0l3 0l-1 2l-1 3l-3-3zM352 155l3 0l3 3l-4 2l-3-1zM274 160l6-3l5 1l-2 4l-6 1zM289 156l-2-2l-2-6l7 3l3 4zM282 152l-1 3l-2 5l-4-5l1-6zM261 176l-3-5l3-3l2 2l3 2zM300 150l4-1l4 1l-3 3l-3 1zM408 157l-1-3l0-3l4 2l2 4zM441 193l-4 4l-5 0l0-3l2-4zM435 188l-2 2l-3 1l1-4zM424 195l1-2l4 0l-1 3zM334 228l-4-1l-4-2l5-3l5 0zM358 240l5-4l5-1l1 5l-1 4zM310 183l-4 2l-4 2l-2-4l3-3zM397 236l-5 3l-5 0l0-4l5-3zM389 192l5 1l0 4l-3 0zM379 187l2-3l1-3l2 4l-1 3zM262 209l4-1l5 3l-4 3l-5-1zM419 240l-5 1l-2-1l2-3l5 0zM405 220l3 2l0 4l-3 0l-6 0l3-5zM404 224l-1-2l0-2l4 1l0 2zM359 198l2 3l-1 3l-3-1l0-3zM296 213l1-4l3-3l3 3l1 3zM366 223l0-3l2-3l4 2l1 3l-4 1zM380 188l-1-2l1-4l4 2l0 3zM395 207l-1-1l-2-2l2-2l4 0l-1 2zM338 210l-3-1l0-3l3 0l3 2zM394 209l6-3l3-2l1 5l-2 5l-3-4zM334 254l0-4l-1-5l4 2l4 1l-3 3zM291 220l-7-2l-2-3l5-2l5 2zM363 205l-5-4l2-5l4 3zM336 212l-2-4l4-3l1 4zM336 204l2 2l3 2l-3 2l-4 1l0-4zM353 227l2 2l0 4l-3-1l-2-4zM373 195l2 4l-2 4l-3-2l-2-4zM364 237l1-1l5 0l-1 3l-3 3zM363 192l3-1l4-1l1 4l-1 5l-5-3zM343 204l5-4l6 3l-5 3zM281 228l3 6l-2 3l-3-2l-3-4zM392 206l2-6l6 2l-2 4zM407 195l-2 1l-4 1l0-3l3-2zM410 196l-4 1l-3-4l4-2l4 0zM291 199l0-4l3-4l2 3l3 3zM376 247l2-3l4-1l-1 3l-1 3zM399 220l4 1l3 1l-3 2l-3 2l-1-4zM345 238l7-1l3 4l-6 1zM341 197l4-3l5 1l-3 4zM358 247l-2-5l5-3l2 4zM381 199l5 1l4 3l-6 1l-4-2zM418 218l-7 3l-4-4l7-2zM404 208l4 4l-1 4l-5-4zM428 222l0-5l2-3l4 3l0 5zM392 219l0 1l2 2l-2 2l-4-1l1-3zM293 229l-5 6l-6 0l4-5zM267 229l2 4l-2 3l-2-5zM299 247l-3 3l-6 1l2-4l1-3l4 1zM299 241l5-3l3 4l-5 2zM297 209l3-4l3-2l3 5l1 2l-4 2zM300 249l-1-2l2-5l3 2l1 5zM317 244l0 4l-4 4l-3-3l-1-4l4-1zM283 240l4 1l2 3l-2 0l-4 1l0-2zM284 228l-3 3l-5 1l0-4l5-4zM315 215l3 3l3 4l-6 1l-5-3zM447 242l-4 2l-6 1l3-6zM222 279l-4 2l-3 1l-2-3l1-4l4 2zM218 274l-2 3l-2 0l-1-3l1-2zM228 270l-5-5l3-5l5 3zM234 269l-2-2l-1-3l3-1l4 0l-1 3zM225 282l-7-1l-4-1l4-4l7 1zM249 279l-4 1l-4-4l5 0zM216 249l2 4l1 3l-5 0l-2-2zM251 266l3 1l1 4l-4 0l-3-2zM242 275l4-2l5 0l-2 4l-4 1zM276 235l-5 0l0-7l4 4zM344 250l2-4l1-3l4 4l3 4l-6 1zM384 266l4 1l3 3l-3 1l-5 0zM418 273l-4-2l-3-5l4 1l5 3zM293 307l-1 4l-1 3l-4-2l-1-3l4-1zM302 260l1 2l1 5l-3 0l-6-1l2-3zM362 246l0 2l2 3l-5 0l-2-2l2-2zM314 282l3 0l4 3l-4 1l-2 1l-1-3zM347 243l7-2l5 2l-3 1l-3 4l-1-2zM315 285l-1-5l-1-4l4 0l5 0l-2 5zM315 261l-3 5l-3 4l-3-6l3-5zM343 261l5 3l1 5l-8-1l-1-4zM345 310l4-1l4-2l0 6l-3 3zM362 246l-3-1l-3-2l4-2l3 2zM358 318l-5-3l0-7l6 5zM318 312l-2 0l-3-1l1-1l2-2l1 2zM336 273l2-4l5-1l0 4l-4 3zM330 295l-2 5l-4 2l-1-2l2-6zM355 277l-1-5l0-3l4 2l3 3zM354 266l-2-4l6-3l-1 5zM277 285l7 3l-1 4l-5-2zM268 297l1-3l6 0l-4 3zM320 305l-1 4l-2 2l-2-4l1-2zM385 293l-1-3l2-4l3 4l0 4zM339 273l-2-3l-6-1l4-3l4-3l1 4zM318 280l4-6l6 2l-4 4zM261 272l5 2l2 6l-6-2zM334 266l2-4l7 0l-2 4zM290 243l1 5l-3 5l-3-6zM265 262l-3-1l-3-3l3-2l5 2zM285 260l0-2l5-2l-1 4zM346 243l2 5l-1 2l-4 0l-3-5zM320 264l4 1l4 3l-2 1l-3 2l-3-3zM374 311l-1-1l-2-3l4-1l5 0l-2 2zM418 297l3 3l1 2l-4 0l-3-3zM404 264l-1-4l4-4l4 3l1 5zM160 307l-4 0l-4-1l2-3l2-2l2 3zM149 305l4-1l3 2l-4 2zM133 319l-3-2l2-3l3 1zM138 309l-5 1l-4-3l6 0zM174 340l0-5l3-2l1 1l0 5zM188 333l0 4l-7 1l2-3zM179 341l4-2l3-2l0 3l-1 4l-2-1zM193 338l1-3l4-2l0 4l-2 3zM135 301l-6 5l-7-3l4-3l7-2zM199 338l5 0l2 4l-4-1zM212 324l1 4l-2 4l-4-3l0-3zM188 344l1-2l2-3l2 3l3 2l-4 0zM190 339l4 4l0 4l-4 1l-4-4zM192 318l-5 1l-6 2l3-4l1-5l4 2zM198 324l-5-2l2-6l5 5zM274 336l5 0l4 3l-7 1zM264 342l2-2l4-2l0 3l-1 3zM296 296l1 3l-2 3l-4-3l-1-4zM297 320l3-1l3 0l-1 3l-4 1zM286 329l-1-6l7-3l1 4l-1 3zM282 333l-4-4l0-4l5 1l3 6zM246 313l0-5l1-4l2 2l6 3l-4 2zM292 325l-3 2l-5 1l1-5l5-2zM258 293l3 0l3 3l-2 1l-3 1l0-2zM247 320l0-4l2-3l2 3l0 4zM268 340l-5 1l-4 3l0-4l-1-4l6 1zM299 343l-4-4l2-3l3 3zM284 299l6-2l5 2l-4 4l-5 0zM365 334l1-4l3-5l3 3l1 4zM283 353l4-2l3 2l-3 1zM362 320l6-4l4 3l-4 2zM359 325l-4-3l0-5l4 0l6 4zM368 313l-2 3l-3 1l1-3zM342 302l-5-1l-1-3l2-2l4-1l-1 4zM317 341l5 4l1 5l-7-2l-2-2zM352 338l1 5l-3 4l-3-3l-2-3zM319 344l-3 1l-4 2l0-5l0-3l7 1zM369 330l-3-2l-2-1l4-2l4 0l-2 2zM344 344l-5 0l-3-2l5-1zM293 342l0-3l4-3l1 5zM294 344l3 3l-1 5l-4-3l-2-2zM370 333l-3 1l-2-4l3 0zM385 334l-1-3l1-3l3 2l1 2zM329 285l2 4l2 5l-4-1l-4 0l1-3zM312 326l3-3l3-2l0 5l-1 2zM336 341l-4 2l-3-1l0-2l4-1zM319 368l-4 2l-4 4l-3-4l-2-4l7-1zM333 349l-2 2l-6 1l4-4zM337 356l-4-3l0-4l5 1l3 6zM332 285l1 5l-6 1l1-4zM364 324l4 1l3 2l-4 2l-3 1zM352 331l4 2l4 3l-4 2l-5 0zM396 327l1-5l3-4l4 4l3 3l-6 1zM363 343l-4 0l-2 0l0-3l3-1zM368 337l-4-4l1-4l3 1l3 3zM357 375l4-1l5 1l-3 2l-6 2zM331 391l4 3l2 2l-2 2l-4 0l-1-3zM348 393l5-3l4 0l-1 3l-2 3l-3-2zM352 401l-4-6l6-3l2 3zM323 391l4-2l6 2l-4 3l-4 2zM355 403l5-3l5 0l-3 5l-4 2zM346 371l-3 1l-4-1l2-4l4-4l1 4zM248 386l-1-4l-1-6l5 2l5 0l-3 3zM261 394l0-4l2-3l3 3l3 2l-5 1zM258 364l2-3l5-2l0 5l-1 4zM254 370l4 0l3-1l-2 3l-4 1zM339 376l8-3l6 2l-7 3zM335 375l-2-4l1-3l4 2l4 2l-4 2zM316 368l-3-5l2-6l5 6zM313 362l-1 6l-3 2l-3-5z"/><path fill="#5e953b" d="M325 129l-2 4l-4 1l-1-4l3-5zM318 150l1-2l0-2l2 0l4 3l-4 1zM199 167l-2 2l-3 3l-2-3l1-4zM422 183l0-5l0-5l8 3l2 4zM318 212l-1 6l-4 3l-4-4l1-4zM299 223l7 2l-1 5l-4-1zM347 228l1-4l4-5l3 3l0 5zM327 192l-5 3l-6-4l5-1zM274 226l-4 1l-6-2l2-3l2-2l4 3zM276 243l-1 3l-1 2l-4-3l0-3zM216 264l6-3l3 1l-4 4zM221 254l4-1l4 3l-2 1l-5 1zM268 258l-1-4l4-2l1 3l0 4zM338 283l-4 0l-3 2l0-4l2-4l1 2zM319 315l0-3l2-3l4 2l1 5zM386 299l1 4l-2 2l-3-2l0-3zM177 332l5-2l5 0l0 4l-4 2zM176 314l-2 1l-3 2l1-3l0-3zM175 340l5 5l-4 3l-2-2zM308 352l-1-4l-1-4l4 1l6 5zM324 333l-4-1l-2-4l5-1l3 2zM360 380l-3 1l-4-2l3-2z"/><path fill="#3b6626" d="M266 38l0-5l2-2l2 2l-1 4zM280 100l4 3l5 3l-6 1l-3 1l-1-4zM310 109l-3-1l-3-2l5-2l2 1l0 3zM326 101l2-1l5 0l-1 2l-4 2zM289 132l-3 0l-3-2l1-2l2-1l2 2zM355 146l-3-3l-1-4l3 0l2 0l-1 4zM283 148l-1 5l-4 2l0-4zM324 157l4 1l5 2l-4 2l-4 1l0-2zM294 164l-5-4l3-5l3 1l3 4zM335 154l-2-2l-1-1l2-2l3 0l1 2zM375 135l1 3l1 2l-3 1l-2-2l1-2zM382 154l-5-3l-3-2l6-1l3 2zM377 148l-3-1l-5-4l7 0l6 1zM281 199l2 4l-3 3l-1-3zM246 196l6-1l2 0l0 4l-1 4l-5-3zM299 169l-1 1l-4 1l-1-2l0-4l5 1zM310 204l-3-3l-1-2l4 0l4 0l-2 3zM357 187l0-5l7-2l0 5zM311 151l-2-4l-1-4l6 2l1 3zM326 161l4-1l4-1l0 6l-2 3l-4-3zM328 155l1 3l-2 3l-3-2l-1-3zM341 154l-1 3l-5 1l0-2l3-5zM284 179l5-3l3-2l0 5l-3 2zM343 169l1-3l2-3l3 4l-2 4zM300 162l-5-5l2-4l3 1l2 3zM418 151l-3-2l-2-1l3-2l4 1zM438 151l-3 1l-4-1l2-2l3-1zM436 170l-7 0l-2-3l2-2l6-1zM455 180l-4-3l-1-3l3 0l3 0l-1 4zM391 256l2-5l4-1l0 4l-2 3zM380 204l-4-5l1-3l4 1l3 3l-1 1zM311 195l0 3l0 5l-5-5l0-3zM322 246l8 0l4-1l-2 6l-4 3l-3-4zM262 208l5-1l7 0l-2 4l-3 4l-4-4zM424 236l5-1l3 1l-2 2l-3 3l-1-3zM407 219l-5 4l-5-1l5-4zM278 216l-1 4l-4 0l2-4zM424 242l-4-1l-1-2l3-1l3 2zM365 207l0-5l3-3l3 3l-1 5zM329 200l6 1l4 2l-4 3l-7 0zM390 216l4 1l4 3l-3 1l-2 3l-2-4zM321 229l0 4l-3 2l-1-4zM334 243l-3 2l-5-1l2-3l6-2zM289 206l6-2l4 2l-5 5l-5-3zM370 238l-3 0l-3-2l3-2l5 0zM367 187l0-5l2-2l4 3zM281 208l-4 0l-2-4l3 0l4 1zM445 219l5 0l3 0l-3 4l-3 2zM407 204l-4 0l-4-3l4-2l5 0zM426 220l0-4l3-2l2 3l-2 5zM292 232l-7 1l-3-2l3-4l7-1zM311 237l4-2l7-1l-3 5l-7 2zM280 228l2 5l-3 3l-3-3l-1-6zM285 232l4 3l1 7l-5-2l-5-2zM301 258l-3-2l-3-4l5 0l4 0l0 2zM300 245l4 1l1 4l-3 0l-4-3zM216 280l6-1l7 3l-6 3l-7 0zM227 280l-2 2l-4 1l1-3l2-2zM202 256l6 2l-1 5l-3-1zM373 281l-5 1l-4-1l4-4l5 1zM338 273l3 2l-1 4l-3-2l-1-2zM315 308l-3 2l-3-3l3-1zM329 285l-3-3l2-4l3 2l1 4zM389 280l5-2l2-1l-1 5l-2 1zM341 311l4 1l2 2l-2 1l-3 0zM412 259l-2 2l-4 1l1-4l2-2l1 2zM389 271l-5 1l-6-2l4-2l6-1zM372 314l-4-1l-4-3l5-1l4 1zM314 302l5 3l0 4l-4 0l-3-1l1-3zM386 272l-3 3l-4 0l1-4zM273 257l4 4l0 3l-4-1l-5-1zM316 295l6 2l-2 4l-3-1zM391 312l-3 2l-2 0l-1-3l1-2l3 1zM393 283l2-1l5 2l-3 2l-3 1zM429 310l-4-6l-1-4l7 2l2 5zM409 295l5-3l5 2l-5 3zM160 356l2 2l0 2l-4 0l-3-1zM153 303l5 2l1 3l-5 0zM196 341l-4 1l-3-1l2-2l5-1zM183 349l-8-2l-3-4l7-1zM191 329l3 1l2 1l-3 2l-1 1l-2-2zM180 329l6 2l1 4l-6-2zM159 299l-2-3l0-5l4 2l3 3zM211 352l-3 0l-3 0l1-4l2-2l3 2zM201 355l-4-2l1-5l4 1l3 4zM217 314l4-4l4 0l-1 3l-1 4zM205 329l4-1l6-1l-3 7l-4 3l-2-3zM223 338l1-3l4-3l1 3l0 3zM294 323l4 2l3 5l-2 1l-6 1l0-6zM267 329l2 4l-4 3l-1-3zM303 297l3 5l-2 5l-5-4l-3-3zM283 288l-5-1l-2-4l5 1l3 0zM337 310l2 2l0 3l-2 0l-4-1l1-1zM339 320l-3-6l2-6l6 6zM309 318l-2 5l-3 2l-2-4l1-3zM366 319l5-3l4-2l-1 6l-2 4l-2-3zM347 303l-1-3l0-3l4 0l1 3zM288 356l4 1l3 3l-3 1l-4 2l-1-4zM330 343l-2 3l-1 1l-2-3l0-2l3 0zM378 343l-2 3l-4 2l0-5l2-2zM363 342l-4-1l-2-4l6 1zM348 332l1 3l1 5l-7-1l-3-6zM351 409l-6-3l0-4l6 0l2 4zM349 370l5-1l4 2l-2 1l-4 1zM351 400l5-1l3 4l-4 1zM354 381l7 0l3 3l-2 2l-3 2l-4-4zM335 363l6 1l1 3l-4 1l-3-1zM252 385l-5-1l0-7l5 3zM265 365l0 2l-2 2l-2-1l-2-3z"/><path fill="#7db254" d="M205 186l-4 0l-6 0l4-5l3-1zM305 194l3 0l5 3l-3 2l-5 1zM348 182l2-2l1-2l3 1l1 1l-3 2zM304 148l5 0l2 1l-3 3l-3 0zM296 199l4 0l2 2l-3 2l-3 0zM293 178l3 1l3 1l-4 4l-3 1l0-4zM306 202l3-1l4 0l0 3l-2 3l-2-2zM346 263l-4-1l-3-2l2-2l6 0zM291 217l5 2l1 6l-6-2zM322 209l6 4l3 3l-7 0l-6-3zM366 235l-2-5l7-3l0 7zM342 202l-1-3l2-4l3 4l3 2l-5 1zM402 223l-2 2l-3 1l1-4zM441 217l-2 2l-3 4l-2-3l0-4zM283 242l-5 1l-5-3l4-2l4-1zM211 282l1-4l0-3l4 2l2 1l-3 3zM269 275l-3-1l-4-3l4-2l2 0l2 2zM259 279l5 0l3 2l-1 3l-5 1l-1-2zM320 306l0-5l3-3l2 4l1 4zM408 265l3 3l-1 3l-2-1l-2-3zM334 293l3-3l3-1l2 3l-2 4zM278 310l-5-4l-2-3l5 0l6 2l-3 2zM374 283l3 3l-1 6l-3-3l-7-2l5-2zM422 303l-4 2l-2 1l0-4l-1-2l5 2zM140 326l0-3l0-3l4 1l2 2zM216 358l5 1l1 2l-4 0zM299 332l3-2l6 1l-3 4l-4 2zM365 355l-2-6l5-4l2 5zM307 335l0-4l1-4l5 4l0 1zM348 331l4 0l4 2l-3 4l-5-1zM283 315l0-2l0-2l4 0l2 1l-1 2zM315 315l6 1l2 2l-5 3l-5-2zM380 392l-2 2l-4 1l1-3zM352 373l1 5l-5 3l-1-4l1-4z"/><path fill="#101d0a" d="M277 47l4 2l-1 4l-4-2zM265 34l-1-3l1-5l3 5zM283 59l-2 3l-2 2l-3-3l-1-3l6 1zM276 64l5 0l6 0l-1 4l-4 3l-2-3zM301 61l-4-2l-2-2l4-2l4 1zM364 67l-3 2l-2 2l-1-4l3-3zM355 65l1 2l1 4l-5-1l-2-1l3-4zM274 84l-1 3l-5 1l0-4l3-2zM268 95l-4-1l-5-2l3-3l4-2zM268 93l1-4l4-3l1 4l0 4zM303 86l0 3l-4 3l-2-2l1-4zM302 96l-4-3l-2-4l4-1l7 3zM317 93l5-3l6 1l-3 4zM318 82l-2 5l-6 2l3-7zM311 83l3 3l0 5l-5-1l-4-4zM284 92l3 0l3 0l-2 2l-3 2zM312 119l-3-1l-2-5l4 0l3 2zM325 99l3-2l2 0l0 3l-4 2zM291 114l-4-4l2-5l3 3zM280 109l3 0l3 1l-2 1l-2 1zM313 108l-4 1l-4 3l-1-5l2-5l4 2zM266 136l1 3l0 4l-6-4l-1-3zM260 120l2 4l2 2l-5 0l-6-2zM326 139l3 1l1 3l-2 1l-3-2l0-1zM326 139l3 2l2 2l-3 2l-4-1zM309 144l-3-4l1-2l2 0l4 3zM304 157l-4-1l-3-1l3-3l5 0zM316 146l4-3l3-1l2 4l-1 5zM318 149l2-2l2-3l1 3l2 2l-3 0zM344 144l2-3l2-2l3 2l-2 4zM302 156l0 5l-3 2l-4-1l0-6zM333 135l-6-1l-1-3l5 0zM321 158l-7-2l1-6l6 4zM376 146l3 2l-1 3l-4-1zM202 172l-5-2l2-5l4 1zM192 165l1 2l-2 3l-2-3zM219 195l4-3l3 0l-1 4l-3 2zM242 195l-3-6l2-3l4 3l2 4zM234 198l-2-3l1-6l5 2l2 3zM237 186l2-4l4-1l1 3l0 3l-4-1zM232 177l4 1l4 2l-4 3l-5-1zM276 208l3-3l4 0l-2 3zM276 213l-8 1l-3-2l3-3l7-2zM282 225l7-4l6 1l-4 5zM269 220l4-3l6-2l-2 5l-2 4zM373 171l-3 2l-4 1l2-4l2-1zM359 187l-5 2l-4-2l4-3zM287 188l-6-1l-2-5l5 0l3 2zM332 154l-3-5l6-2l1 4zM338 155l-2-2l3-3l2 2zM344 157l1 3l2 4l-6-1l-2-2zM284 169l-2-6l4-3l2 5zM291 208l-2 0l-5-1l3-1l4-3l1 3zM360 173l2 1l6 1l-5 3l-3 2l-1-4zM316 147l-6-2l-1-3l3-1l8 2zM309 150l1-5l7-2l0 5zM324 161l4 3l-4 4l-1-3zM288 157l-3-2l-1-4l5 2zM291 173l-2 2l-4 2l-1-4l1-3zM330 168l1-6l5-3l-1 7zM340 164l-3-2l-1-4l4 2l2 2zM309 190l2 2l1 2l-4 0l-2-3zM317 203l-2-5l1-3l5 2l0 3zM281 186l-2-4l0-3l5-1l2 5zM357 179l-4 6l-6 0l5-6zM419 174l-1 3l-4 3l-1-3l4-4zM419 174l5 0l1 3l-4 1zM421 167l2-2l2-2l3 2l1 4l-4-1zM423 154l2-3l4-2l1 4l-3 4zM430 188l3 1l1 3l-3 0zM450 171l4-4l6-2l-1 4l-4 6zM456 186l-2-2l-1-4l4 1l4 1zM333 232l-4-4l0-2l6 0l2 2zM358 193l-3 5l-5 0l1-4l2-4zM394 241l-4 2l-3 0l-1-2l2-4l3 3zM279 237l0 3l-4 1l1-3zM270 217l-4-3l1-3l2 1l3 3zM324 203l3 4l-4 3l-1-4zM372 243l0-4l4-4l2 4l-1 3zM312 212l3-1l4-1l0 5l-2 1l-3-1zM423 239l-5 2l-4-4l5-1zM300 218l-4 5l-6-3l4-2zM292 241l3 1l2 4l-5 1l-6-4zM299 197l-1-2l-1-3l4 0l3 1l-3 3zM308 198l-4 2l-3-1l3-2l4-2zM421 230l-1-4l1-4l5 1l1 5zM340 182l3 5l-4 4l-2-4l-1-3zM342 180l2 3l-3 3l-2-4zM358 246l-2 2l-5 2l0-4l1-2zM439 241l-5-1l-3-5l7 0l4 2zM402 220l-5 4l-4 3l-1-5l2-3zM348 228l-5-1l-4-1l2-2l6-2zM347 218l3 4l-1 2l-3-1l-3-1zM293 220l5-2l4 1l-2 3l-4 1zM361 193l-1 5l-6 2l1-6zM375 200l2-5l4 1l-2 3zM423 243l1-4l5-2l-2 4zM372 236l3 4l-3 2l-3-1l-2-1l3-3zM420 214l-3-2l0-6l5 1l5 1l-5 4zM281 191l5-1l6-1l0 2l-1 5l-4-1zM374 211l-4 0l-4 2l2-4l1-5l3 3zM370 251l-1 4l-2 3l-3-3l0-6zM296 194l1-3l5-2l-1 4zM379 248l-1-5l3-3l2 4zM355 238l0-4l2-2l2 2l0 5zM273 203l4 3l0 4l-6-1l-3-2zM347 204l-3-3l-1-5l4 1l3 2zM379 190l-5 3l-4-2l5-2zM382 194l-3 1l-3-3l3-1zM348 212l5-2l6-2l0 5l-8 5zM398 219l4-1l3 1l-2 2l-3 1zM414 205l6 4l2 5l-7-2zM299 231l-2 5l-6-2l3-3zM306 252l0-5l5-3l1 3zM270 236l-2-3l1-4l4 1l5 3zM266 222l3-2l5 2l-2 2l-5 1zM301 238l-4 2l-6 1l1-5l1-2l5 1zM296 254l-1-4l4-1l-1 2zM299 248l1 4l-3 2l-1-3zM278 225l-3 3l-6 2l2-5l2-2zM305 229l2 5l-5 4l-2-4l0-4zM304 253l-4-2l3-5l2 3zM455 252l-3 0l-5-1l4-4l5 0zM240 283l-3-4l0-4l3 1l5 3l-3 2zM220 284l-6 4l-4-1l3-4l2-2zM210 281l2-2l7 1l-3 4l-4 2zM243 282l-2-5l-1-3l5 0l4 4zM207 257l-3 0l-4-3l5-2l4 1zM272 258l-3-3l3-4l2 4l1 4zM246 271l3-2l5-1l1 5l-5 2zM277 241l-3 1l-5-1l4-3zM264 285l1-4l2-2l2 2l1 5zM304 290l4 1l6 4l-8 2l-3-1zM312 267l3 0l2 2l-2 1l-2 3l-1-3zM346 245l-5 0l-4-1l3-6l3-3l2 4zM395 265l-3 2l-6 1l2-6l4-1zM348 280l-4 2l-5 3l1-4l3-4zM316 293l-4 0l-4-2l4-2l4 0zM291 243l0 3l-2 2l-1-2l-1-3zM343 303l3-4l4 0l-1 5l-2 3zM411 297l-2-1l-4-3l4-2l4 2zM361 271l-3-3l-2-4l7 1l3 5zM366 256l4-2l5 3l-4 2zM317 244l-3-1l0-4l4 1l0 3zM318 303l2 2l0 3l-3 0l-2-1l1-2zM327 311l-2-3l1-3l5 2zM348 242l2 1l2 2l-5 1l-2-1zM296 288l1-2l2-2l2 2l-1 3zM348 263l-6-1l-1-4l5 1zM349 262l-2 6l-5 0l2-4zM319 309l-1 2l0 3l-3-1l-2-2l3-1zM337 291l2 5l-1 6l-5-3l-2-4zM321 306l-2-1l-2-4l3 0l3 1zM276 277l-5-2l2-4l4 2zM294 273l8 1l3 4l-7 0zM424 267l-3-2l0-4l6 0l2 3zM296 306l3 3l2 5l-8-2l-2-4zM271 284l0-4l3-2l2 3l0 2zM268 294l-2 1l-4-1l2-3l3-1zM336 301l2-5l7 0l-3 6zM395 275l-8-2l-2-4l4-2l7 4zM345 301l-1-5l4-5l2 7zM388 265l-3-2l2-7l4 4zM319 285l-2 0l-4 0l2-2l1-2l3 2zM264 267l-1 3l-3 1l1-3zM367 295l-6 4l-3-1l0-5l7-3zM331 310l-1 3l-4 3l-1-3l0-4l2 1zM320 274l-2 5l-5 2l0-3l-2-3l5-1zM317 277l2 3l-2 3l-3-2l-3-2zM378 285l2-5l4-2l2 3l-3 4zM279 252l-3 0l-2-3l3-1l4 1zM307 290l-2-1l-2-3l2 0l4 0zM396 257l1-3l-1-3l5 1l2 3l-4 2zM307 319l1-2l0-3l3 2l3 1l-3 2zM274 297l-3 3l-3-1l2-2zM297 261l-5 1l-1-3l3 0zM404 257l1-3l2-4l4 4l2 1l-3 2zM325 263l5-3l6 0l-3 4l-3 3zM405 305l4 4l0 2l-4 2l-5-2l3-2zM415 297l2 6l-4 3l-2-4zM400 312l-4-4l-1-3l6 2l3 1zM423 307l2-4l5-2l1 2l-1 4zM412 266l2 3l0 3l-4 0l-2-1l3-3zM377 311l3-3l6 0l-4 5zM405 296l-2-3l2-3l3 3zM415 288l5-1l3 5l-4 0zM360 287l-2-4l-1-3l3 1l2 2zM179 330l1 4l-2 3l-3 0l-3-4l4-2zM154 309l-3 1l-5-1l3-4l3-1zM192 327l4 4l3 5l-8-1l-2-1zM187 310l-3 6l-7 0l2-5zM186 313l4 1l5 2l-2 1l-4 3l-2-2zM163 300l0 3l-2 3l-2-3l-1-3l2 0zM170 326l1-3l5-1l-2 5zM171 312l3 4l-6 4l-1-6zM162 335l0 3l-4 1l-1-3zM138 314l0 3l-3 3l-3-3l0-4zM145 314l-5 0l-5-4l6-2l7 2zM160 298l-4-4l0-5l4 1l6 4zM153 302l-3-3l-1-2l3 0l4 2l-2 2zM160 318l-3 2l-6 1l2-4zM143 309l3 3l1 5l-4-2l-4-3zM141 318l-2 1l-2 2l-1-4l-2-3l5 2zM142 304l0-3l3-1l1 3zM127 307l-3 4l-3 2l-2-5l5-2zM224 349l-5 1l-4-1l3-3l5-1zM221 349l4 4l1 4l-6-3zM214 330l-6 1l-4-5l7-1zM222 317l-2 3l-3 1l0-4l1-3zM216 357l4-1l5 0l-1 5l-5 1l-2-2zM225 300l4-1l3 0l-2 3l-2 2zM276 340l0-3l1-3l4 2l0 3zM304 335l-3-2l-2-2l4-1l4 1zM298 298l3 2l4 3l-4 1l-6 0zM291 327l4-1l4 2l-3 2l-5 0zM292 307l-4-2l-2-3l6 0l3 3zM303 303l3-2l5 2l-4 3l-2 1zM297 301l4 0l2 1l-3 2l-3 1l1-2zM248 320l-1-4l0-3l3 2l2 4zM252 312l1 3l0 3l-4-2l-1-2zM257 312l2 1l2 3l-2 1l-6 1l2-3zM343 315l1-4l2-4l3 4l-1 4zM342 318l-4 0l-3-1l3-2l6 0zM309 319l-3 5l-3 1l-1-3l2-3zM277 349l4 0l3 1l-2 4l-6 1zM367 314l-3-1l-2-3l3 0l3 2zM293 314l-2-6l7-4l0 7zM298 299l1 4l-1 5l-5-3l-3-2l4-2zM359 350l-5-3l-1-5l5 2l4 3zM308 305l-1 2l-2 4l-3-1l-2-3l3-2zM301 307l-5-2l-2-4l5 0l5 2zM300 357l-4 3l-7 0l3-5zM283 358l1-5l5-4l1 2l-2 6zM321 316l3 0l2-1l0 2l0 3l-3-1zM371 350l-3-4l1-5l3 2l2 5zM372 357l-3-2l-3 0l2-3l4-1l0 2zM335 304l3 1l3 3l-4 1l-1 2l-2-4zM350 310l-4 1l-2 1l-1-3l-1-3l5 1zM284 342l1 2l-2 3l-2-2l-1-2zM345 318l-6-1l-1-6l6 2zM273 318l3 0l4 0l-3 3l-2 2l-3-3zM354 306l-3-2l0-3l2 0l3-1l0 3zM370 342l6 2l-1 7l-4-3l-4-3zM288 359l-5 1l-4-2l4-3l7 1zM341 301l-7-1l-4-5l5-1l7-1l-2 3zM333 284l4 1l3 4l-5 0l-6 0zM333 293l1 4l-2 2l-2-1l-3-2l2-2zM299 323l6 1l2 3l-5 1zM299 366l-4-4l1-5l4 5zM362 313l3 4l-6 3l1-4zM358 317l3 0l2 4l-3 0zM320 351l-6 1l-5-2l3-3l3-3l3 4zM356 330l-2 1l-4 0l2-2l2-3zM352 333l3-3l5-2l1 5l-6 5zM362 339l-3 3l-6-1l3-2l2-3zM386 329l2 2l0 3l-3 0l-3-1l2-2zM389 329l5 2l3 0l-3 4l-3 2l-2-4zM327 394l5-2l4-3l1 5l0 5l-6-3zM338 393l0 5l-2 2l-5-4l-1-5zM326 386l2 4l-1 4l-3-1l-4-3l4-2zM365 388l1-2l3-3l2 3l0 4zM368 386l6-3l4 4l-6 1zM336 403l5 1l4 3l-6 2l-4 0zM344 383l4-2l6 3l-5 2zM339 363l5 3l1 3l-4 0l-4 1l0-4zM258 378l-5 0l-4-2l5-4l5 2z"/><path fill="#223d16" d="M281 35l-3 4l-6-2l2-4zM305 46l-4-2l-4-2l5-3l5 3zM366 67l2-3l4-1l0 3l-1 3zM257 80l1 1l2 3l-2 1l-2 1l-1-4zM273 95l-2-2l-2-4l7 1l3 4zM299 104l-1 3l-3 5l-2-5l-4-2l6-2zM306 97l4 1l1 3l-3 0l-3 1zM312 111l-1-4l3-5l2 5zM319 102l-5-3l-1-5l5 1l5 3zM334 101l-3 4l-7 0l2-4l3-4zM282 113l6-2l3 2l-3 3zM330 103l1 2l2 3l-3 1l-4-1l2-1zM266 128l-1 3l-4 3l-1-2l-1-2l4-2zM261 132l-5 0l-3-1l4-3l4 1zM329 144l-2 0l-3 0l2-3l2-1zM359 141l-5 4l-7-1l4-4zM291 159l-1-3l2-3l2 3l1 3zM331 153l-3 2l-4 0l1-3l2-3zM318 134l-1 5l-2 2l-2-4l1-4zM318 140l4 2l2 3l-4 1l-4-1zM378 145l-3 3l-4 1l0-3l2-2zM383 142l2-4l6-2l1 4l-6 5zM369 153l-6 3l-6-3l6-2zM388 165l-4 0l-3-5l6-1zM378 168l0-3l0-3l4 3l2 2zM202 158l2 3l0 5l-5-2l-3-4zM185 161l3-2l5 1l-3 4zM205 179l3-5l4 0l0 4l-2 3zM233 194l3 1l1 3l-4 0l-2-2zM241 197l2-1l3-1l0 3l-1 3l-2-2zM275 183l-3 4l-2 4l-3-7l2-4zM270 187l-3 0l-5 0l3-5l5 0zM260 169l-4-2l-3-3l4-2l6 2zM263 169l1-3l4 0l1 3l-3 2zM264 201l1-2l2-2l2 1l1 2l-3 1zM252 205l6-4l6-1l-3 6l-4 1zM369 177l5-3l6 0l-4 5l-2 2zM345 192l3-3l8 0l-2 5l-6 3zM348 184l-4 1l-5 0l2-4l2-3l4 4zM347 180l3 2l0 6l-6-3zM334 202l7 0l3-1l-2 4l-4 4l-2-3zM337 150l4 0l3 3l-2 1l-2 2l-2-3zM286 169l-3-4l0-4l4 1l4 3zM360 172l2 2l-1 4l-3-1l-2-2zM256 175l4 0l4 0l-1 4l-6 3l0-4zM291 170l0-3l-1-3l4 2l4 1l-4 2zM315 176l-1-1l0-2l3-1l2 1l-1 2zM362 190l-2-4l-2-4l5-1l4 1l-1 3zM353 188l-2-2l-1-3l4 0l3 4zM294 192l-4 2l-4-1l3-3l4-1zM334 180l-2-3l1-3l3 2l1 2zM337 168l2 2l3 1l-1 3l-5 2l-1-4zM344 159l-4 1l-4-2l5-2zM325 165l2-3l2-2l1 3l1 2l-3 0zM314 168l-3-2l3-3l2 2zM299 200l2-3l3-2l1 3l-2 3zM331 172l2 1l2 2l-2 1l-4-1zM316 182l1-4l0-2l4 1l3 3l-2 2zM360 166l0 5l-4 3l-4-5l4-5zM349 162l4 1l4 4l-4 1l-5 1zM421 152l-5 4l-5-2l4-4zM436 193l3-5l5 0l-3 5zM441 157l1 2l-1 4l-3-3l-2-2zM449 172l3 3l2 6l-6-1l-6-4zM398 206l-3-1l-4 0l2-2l3-2l1 2zM354 191l1 5l-2 3l-4-3l0-4zM387 240l5 0l6 2l-5 2l-5 3l0-3zM395 245l6 0l6 1l-4 3l-5 2l-1-3zM400 250l3 1l3 3l-4 1l-3-1zM391 254l4-1l4 1l-3 3l-5 1zM376 192l4-4l5-1l1 6l-6 4zM263 205l0 5l-4 4l-2-4l0-5zM329 266l4-4l4 2l-3 2zM344 266l-5-3l-4 0l4-4l4-2l0 4zM340 243l-2-1l-2-1l2-3l2 0l1 2zM290 231l-4-4l3-4l3 3zM426 202l-2 4l-3 2l-1-4l1-3zM300 213l-3-4l3-4l4 3l3 5zM300 209l3 4l-1 5l-4 0l-4-4l2-2zM351 236l-1-3l3-4l0 4zM413 222l3 4l-1 6l-5-4zM351 227l-4-2l-2-2l5-1l4 1zM339 211l2-5l6 0l-2 4zM349 202l5 1l1 3l-2 1l-6 1l3-3zM330 213l-1-7l1-3l5 2l-1 6zM396 219l2-4l1-3l3 2l3 3l-5 1zM386 234l-1-4l4-1l-1 3zM313 226l8-1l3 0l-2 5l-6 2zM292 230l-1-3l3-5l2 4l2 1zM348 221l3-5l1-2l3 4l0 5l-3-2zM372 186l1 2l2 4l-4 0l-3-1l1-3zM356 199l0-5l2-3l4 3l2 2l-5 2zM374 192l4-1l3 4l-5 0zM396 227l-4 2l-3 0l2-3zM383 211l0-5l7-1l-3 5zM413 223l-5 2l-3-4l6-1zM439 213l6 1l1 3l-5-1zM399 192l5-1l6 1l-5 5l-5 1zM399 212l6-2l3 7l-6-2zM274 216l-4 4l-6-2l2-4l2-2zM289 236l0 2l3 4l-6 0l-3 1l2-5zM272 229l2-2l2-1l0 3l0 3zM285 239l-3-2l-1-3l5 1zM293 244l-3 2l-2 1l0-4l3-1zM301 247l4 2l2 3l-6 1l-3-3zM279 222l-6 3l-5-7l7 1zM325 212l-2 4l-5 4l-1-5l0-2zM325 206l2 5l-1 4l-4-3l-1-3zM463 253l-4 0l-2-3l5 0zM457 235l3 0l4 2l-4 2l-3 1zM429 249l-2-5l1-3l5 4l1 2zM427 259l1-4l1-2l3 1l2 3l-4 1zM243 270l-3 1l-4 1l1-3l1-3l3 2zM224 251l4 2l-2 4l-3-4zM220 283l1-4l7-2l-1 5zM258 265l1-2l4-3l2 4l-3 4zM256 269l1 1l3 1l0 2l-4 2l-1-3zM271 250l1 5l-1 1l-3-1l-3-3l4-1zM268 267l5-2l5 1l-4 4zM273 261l-4 1l-3-2l2-1l4-2zM256 241l6 5l-2 6l-4-4zM282 267l4 2l2 5l-5 0l-4-4zM370 316l2-4l2-2l2 3l1 4l-3-1zM288 239l3-3l3-3l1 4l0 5l-4-2zM378 246l-4 3l-4 3l-1-4l2-3zM279 279l3-2l3 0l1 4l-1 3l-3-3zM330 279l-3-1l-4-2l3-2l5 0zM310 273l-2-5l1-4l5 4zM325 305l-3 1l-8 1l3-5l0-4l7 3zM325 303l-1 3l-5 1l3-4zM335 283l0 3l-4 3l-1-4zM421 268l-2 5l-7 4l0-4l1-6zM413 271l-4 4l-1 2l-3-2l-2-3l6-2zM399 266l3 4l-6 3l0-5zM333 289l5 0l3 4l-4 1zM339 286l2 3l0 3l-3 0l-4 1l2-4zM310 291l2-3l4-3l1 5l-3 3zM259 290l0-3l4-4l0 6zM357 241l4 4l-1 3l-5-2l-2-2zM367 243l-3-3l-1-2l4-1l2 2zM421 279l-3-4l0-4l4 3l4 2zM327 293l6 2l-1 6l-5-5zM407 263l4-6l7-2l-1 6l-1 4zM372 273l0-2l1-3l2 3l0 2zM301 256l6 3l-3 6l-5-4zM361 273l-4 4l-4-2l2-3l3-2zM305 256l-3-3l2-3l1 3zM370 300l-4 2l-4-2l3-3l2-1zM255 287l5-2l2 4l-3 1zM325 307l0 2l-3 3l-2-2l0-3zM396 255l3-1l1-2l2 3l0 4l-3-1zM394 255l2 4l1 3l-4 0l-4-3zM358 268l-5-2l-1-4l3 1l3 1zM265 292l4-5l5 2l-3 3zM382 274l4 2l-1 3l-3 0l-2-3zM396 278l-3 2l-2-1l-1-2l0-3l4 3zM345 260l1 3l0 3l-4 0l-2-3l1-1zM316 287l-4 3l-4-3l5-2zM398 257l-2-2l-3-3l5 0l3 2zM304 312l0 3l0 2l-2-1l-3-2l2-1zM425 308l-4 3l-6 0l2-3l4-3zM399 310l-4-1l-3-3l5-1zM417 286l-1 5l-3 3l-2-4l0-5zM407 297l-3-1l-3-3l2-1l4-2l1 3zM376 298l-4 2l-4-1l3-4l4-1zM373 313l-3-3l-1-4l5 0l3 2zM396 303l1-4l4-3l2 6l-2 3zM376 307l4-2l5 1l-2 2l-5 3zM402 282l4-1l3 2l-2 2l-2 2zM400 270l-1 3l-4 2l0-3l0-4l3 2zM388 289l-6-4l1-4l6 3zM379 297l-1-2l2-2l1 1l3 0l-3 3zM416 298l-5-6l3-3l3 2zM153 354l2-4l6-3l2 3l-1 5zM186 306l0 4l-2 1l-2-3l0-2zM163 302l-2 2l-3 3l-2-6l-3-4l7 1zM153 325l-5-4l1-5l5 4zM149 327l5 1l0 5l-3-1l-3-2zM160 305l-1 5l-6 2l2-5zM179 312l8-3l3 4l-6 2zM154 338l2-1l1-2l3 2l0 3l-2 0zM146 315l0-4l2-2l2 2l-2 3zM199 339l-1-3l0-2l4 1l2 2l-3 1zM157 297l2 1l2 5l-6 0l-3-3zM152 314l6 0l3 4l-1 2l-6 2l0-4zM158 322l-1-3l0-2l2 0l4 2l-3 1zM122 296l5-2l3 1l-3 3l-2 1zM142 301l-3 2l-5 0l4-3zM124 308l3 1l3 2l-4 1l-4-2zM305 329l-4-4l1-3l5 1zM269 339l-4 2l-3 1l-1-3l0-2l4 1zM261 337l4 1l3 2l-5 3l-3 2l-1-4zM270 314l-1-4l1-5l5 2l2 4zM305 304l-4-7l4-2l2 4zM285 334l2 3l0 3l-3-1l-2-4zM269 329l-3-5l2-5l6 3l0 5zM253 299l4 2l1 3l-5-1zM285 320l4 2l2 3l-3 1l-3 1l-1-3zM277 295l1 4l-1 3l-4-3l0-3zM257 298l5-2l3 3l-2 2zM263 332l3 5l-1 3l-5-2l0-3zM295 328l4 2l1 2l-4 1zM301 336l-5 3l-5-4l5-1zM370 331l-3 0l-2-3l3-1l4 2zM294 303l-4 2l-4 1l0-4l4-3zM301 299l1 2l-1 2l-3 1l-3-3l3-2zM320 318l4 3l0 5l-5-2l-3-3zM317 328l1 4l-2 3l-2-4zM327 325l-5-2l-3-3l4-2l4 2zM329 297l5-2l6 3l-5 3l-4 0zM370 354l4-5l3 0l0 3l-1 3zM305 351l5 0l3 5l-5 0l-5-1zM357 308l0 5l-4 2l-2-3l0-3zM317 328l3 0l2 1l-2 2l-3 1l0-2zM324 349l1 2l1 3l-3-1l-3-3zM301 350l-3 0l-3 0l1-2l2-2l2 3zM361 327l-1-4l4-5l2 4l3 4l-5 0zM326 316l5 1l4 3l-6 2l-6-1zM352 341l-2-4l2-3l3 0l3 4zM342 327l5 2l0 5l-5-2zM343 319l-1 3l-3 4l-3-2l-4-4l5 0zM334 320l-3 2l-2 1l-2-3l0-3l3 0zM357 332l2-2l4-1l1 3l0 5l-3-2zM340 335l5-4l3 0l0 4l-3 4zM390 338l6-1l5 2l-5 3zM364 344l-4-2l-1-5l4 0l4 3zM387 320l3 2l3 5l-8 0l-4-1zM391 324l5 1l1 4l-5-1zM337 321l3 4l-1 3l-4-2zM395 337l3-2l2-2l2 3l1 3l-5-1zM384 336l5 1l2 2l-3 1l-2 1l-1-3zM349 367l6 2l1 3l-5 1l-3 0zM361 406l-5 3l-5 3l0-6l4-4zM379 376l0 5l-3 2l-2-4l0-3zM355 375l4-3l5 2l-4 3zM363 405l2 1l3 1l-2 3l-1 1l-2-2zM346 369l0 4l-5 4l-1-4l-1-5zM371 393l-5-3l-1-5l7 1l2 3zM346 403l0-5l5 0l-1 4zM353 398l-4 2l-7-1l8-6zM333 385l-1-4l2-4l3 3l4 3z"/><path fill="#2f542c" d="M366 65l-5 2l-8-1l4-4l4-3zM260 76l5 5l3 5l-6-1l-4-2zM264 101l-4-3l-1-6l5 3zM293 104l4-2l5 3l-4 1zM316 74l6 2l4 2l-7 3l-3-1zM310 131l-2 3l-6 0l2-4zM377 133l3-1l3 0l0 3l-3 3l-1-2zM192 169l-2 2l-3 2l0-4l0-2zM254 170l3 1l3 4l-4 1l-4-2zM268 201l2-3l5-1l-2 4l-2 2zM262 203l-6-2l-2-5l6 1l3 2zM269 186l2-5l6-2l-1 7zM296 208l-5-2l-3-4l5 0l4 0l0 4zM332 142l-2 2l-4 2l0-3l0-4l3 2zM308 170l0 1l-4 4l-3-3l-3-5l4 0zM362 180l-3 4l-5 0l0-3l2-4zM406 156l1-5l5-4l1 6l-1 5zM456 177l-3 0l-3-1l2-3l5 0l-1 3zM352 192l-2 1l-4 0l1-3l5-1zM312 191l-3 0l-1-4l4 1zM260 213l0-3l4-3l1 4l0 3zM345 233l-1 4l-4 2l0-4zM348 191l1-3l1-2l2 1l3 3l-5 1zM332 220l2-3l3-3l1 3l3 3l-6 1zM356 252l-4-3l2-5l4 2l3 6zM400 212l5 2l2 2l-6 1l-3-1zM347 219l7 1l0 3l-7-1zM292 214l2 3l-1 5l-4-2l-5-2zM329 203l6 1l3 5l-5 0zM369 232l0 6l-5 2l0-6zM369 215l-3-2l2-4l3 2l1 4zM383 229l4 1l5 2l-4 2l-5 0zM413 228l3-2l4-1l-1 4zM423 209l-6-2l-2-3l6-3l5 1l-2 4zM408 212l-2-3l-2-3l4 1l2 1zM387 224l4-3l4 0l0 2l-2 5l-3-2zM318 245l1 6l-5 2l1-4zM276 239l4 0l4 4l-3 0l-5 0zM296 235l-2 0l-5-1l2-3l4 0zM283 201l3-2l6 1l-3 5l0 4l-5-5zM279 258l6 3l0 5l-6-3zM430 268l-2-4l0-3l3 0l4 1l-3 3zM219 298l-2-3l1-4l3 2l1 3zM228 287l1 5l-1 3l-4-2l-3-2l3-2zM269 244l4 0l3 1l-2 2l-3 2zM274 252l-2 3l0 3l-3-3l-2-2l3-3zM284 307l2 3l-3 3l-2-2l-2-3zM286 249l0-3l0-2l3-1l4 4l-3 0zM296 282l5 3l0 4l-5-1zM327 312l2 0l4 0l0 1l-2 4l-2-3zM268 294l0 5l-4 3l-1-5l0-3zM339 258l4-6l8 2l-6 4zM383 275l5-3l3-1l1 4l-2 4l-2-2zM309 280l4 2l-1 4l-3-3zM296 298l1 4l0 2l-3 0l-5 1l3-4zM373 302l-5 2l-6-3l5-3l5 0zM384 304l-3 2l-3 1l-2-2l0-5l5 2zM348 276l2-3l4 1l-2 2zM343 286l0-4l3-1l2 1l-1 4zM386 291l1-3l2-2l0 3l-1 2zM373 307l5-1l3 1l-4 4l-4-1zM403 303l-5-3l3-6l4 4zM408 274l1 4l-1 2l-4-1l0-3zM161 362l-2-5l5-1l0 4zM146 320l1-1l2-2l2 4l-3 2zM230 315l-5-4l-1-4l6 2zM226 311l2-1l6-1l0 4l-2 5l-4-3zM223 339l2-4l4 0l-3 4zM270 340l5 1l4 4l-5 0l-4 0zM277 336l6 0l4 3l-5 2l-4 1zM303 300l-3 5l-1 4l-6-6l-1-2l6 0zM280 322l-1 3l-2 3l-3-2l-1-3zM247 323l-3-1l-2 0l3-3l3 1zM271 295l2-2l5-3l2 4l2 3l-5 2zM261 337l4-3l5 1l-3 3l-2 3zM299 309l-1-3l1-3l4 3l0 3zM350 308l-6 1l-4-2l3-3l4-2zM385 337l0 4l-5 1l1-4zM327 331l4 2l2 3l-4 1l-3-3zM344 360l1-3l0-3l3 1l2 3l-2 2zM337 324l-2-4l1-6l6 2l4 5zM275 321l-1-2l3-5l3 2l2 2zM293 339l-1-2l1-4l3 1l3 2l-3 2zM301 339l0-1l-1-3l5 1l2 3l-3 1zM369 349l-2-4l0-2l5 1l0 3zM345 316l5 2l2 4l-6-1zM319 295l2 2l3 2l-3 2l-5 2l1-5zM317 320l-3-2l-1-2l1-1l3 0l0 1zM327 360l-1 2l-6 2l1-4l3-3zM328 350l-4 1l-2-1l2-3l3-1l0 2zM342 338l4-3l2 1l-1 2l-3 1zM355 339l-6-1l-3-2l7-1zM384 345l-5-3l2-4l4 4zM368 402l-2 2l-5 3l-1-2l-1-6l4 2zM260 383l1-5l6-2l-1 7zM315 376l-2-2l-1-4l3 0l5 1l0 2z"/><path fill="#8fc062" d="M318 102l-1-5l2-5l4 5l-2 5zM296 96l8 0l3 5l-5 1zM276 136l5-1l4 0l0 3l-2 5l-2-2zM243 159l-1 5l-5 0l1-3zM277 191l2 6l-2 3l-5-4l-2-3zM261 199l6-1l4 3l-7 2zM319 177l-4 4l-5-1l5-5zM341 185l3-3l2-2l2 4l-2 3zM309 148l2-5l7 3l-4 2zM292 154l-3 2l-3 1l1-4l3-2zM297 224l-4 3l-5-1l1-4l6-3zM270 216l3 0l2 1l-3 2l-2-1zM356 241l-1-2l-1-3l5 1l2 1l-2 3zM289 245l7 0l1 6l-6-2zM231 283l5 2l1 6l-7-3zM424 268l3-1l4 3l-6 2zM327 276l2 3l-1 3l-2-1l-3-2zM152 317l-3-2l-5-3l6-1l5 1zM152 308l-4-1l-1-5l4 1zM309 304l-6-1l-1-5l5 0l5 3zM350 325l3-4l5 3l-4 2zM367 316l3-2l4-2l2 4l-1 3l-3 0zM338 337l-2-2l-1-5l4 2l3 3zM339 341l0 3l-5 3l-1-2l0-5z"/><path fill="#4d7c4e" d="M338 65l1 3l0 2l-3-1l-2-4zM302 94l3 1l3 5l-4 1l-4-1zM288 133l-2-4l-3-3l6 1l3 1l-1 3zM277 144l0-4l4-2l1 3l-3 4zM392 142l-4 2l-5-3l4-3zM296 187l3 3l-1 3l-3-3zM300 158l2-2l2-1l1 3l0 2l-2-1zM375 214l-1 4l-2 3l-3-2l-2-3zM296 233l1-3l2-4l5 3l3 3l-6 2zM286 248l-1-3l0-3l3 1l3 2l-2 2zM291 256l-2 2l-4 1l0-4l4-2zM281 239l-2-2l-1-4l6 0l3 3zM333 242l-2-1l-3-3l5 0l2 1zM287 310l-2-6l4-4l2 4l-1 4zM353 296l0 2l-3 3l-1-2l-1-3zM358 257l-1-4l-1-3l4 0l4 0l-1 4zM414 256l-2 3l-5 2l0-4l4-3zM393 277l2-3l5 0l-3 4zM398 319l-5-1l-4 2l1-6l4-2l1 2zM177 316l2 3l0 4l-4-2l-2-2zM252 339l6 0l3 4l-4 2l-4-1zM271 345l4-3l4-1l1 3l-3 5z"/><path fill="#4f8033" d="M273 44l7 0l2 4l-5 0zM319 92l5 1l3 1l-1 3l-4 2l-1-2zM235 176l3-3l4-2l-1 6l-1 2zM280 193l-1 5l-4 3l-2-4l-1-4zM278 203l2 1l4 1l-3 3l-2 1l-1-2zM316 175l-2-2l-3-2l4-1l4 0zM427 238l3 3l-1 3l-3-2l0-3zM332 227l-3 1l-4 2l0-4l1-2l3 1zM411 195l6 3l3 4l-7 2l-3-2zM373 258l-3-2l1-5l3 2zM381 267l3 4l1 6l-6-2l-5-3zM396 259l5-1l2 2l-3 2zM264 271l1 4l-2 4l-4-5l1-3zM269 292l0-6l2-6l5 7zM356 268l-3 3l-2 2l-2-4l-1-2l5 0zM390 315l6 1l5-1l-4 6l-5 1zM280 338l-4-2l-4-5l5 0l6 0zM276 287l0 4l-2 3l-4-3l-1-5zM275 287l-2 1l-4-1l3-2zM280 344l-2 4l-8 1l3-4zM285 352l-2-1l-1-3l3 0l4 2zM307 344l-5 4l-4-1l3-4l2-2zM343 319l3 2l1 5l-4 0l-5-3zM394 310l-3 2l-4-2l1-2zM391 312l3-2l4-1l-1 3l-1 2l-3 0zM383 322l3-2l2 0l-1 3l-2 2zM377 342l-1 3l-3 1l0-3z"/><path fill="#101d0a" d="M274 35l-7 1l-2-4l4-2l5 1zM263 36l4 3l-1 5l-4-3zM268 68l5-4l3-1l1 5l-2 4l-2-3zM266 88l3-1l4 2l-4 1l-3 1zM321 108l3-4l4-2l2 3l3 3l-5 0zM324 97l-1-4l2-3l2 3l-1 3zM293 87l5 1l0 5l-3-1zM301 105l4 3l2 4l-7 0l-3-3zM262 119l-7-1l-2-3l3-1l4-2l0 2zM352 131l1 3l-1 6l-3-3l-2-4zM311 129l-4-1l-3 1l1-3l3-2l1 1zM338 137l-2 1l-7-2l3-2l6-3zM317 132l2 1l3 4l-4 0l-3-1zM275 137l1-2l1-4l4 2l2 3l-3 1zM286 151l-1-5l2-1l1 4zM347 139l2 3l-1 3l-3-1l-3-2l3-2zM327 132l-3-3l-1-5l5 0l3 1l-1 5zM370 143l3 2l1 4l-2 0l-5-4zM187 167l2-2l4 0l-1 2l-2 4zM221 189l-3 5l-6 0l0-2l5-4zM271 207l0 3l0 4l-3-1l-5-2l3-3zM353 179l0 3l1 3l-4-1l-3-4zM337 142l2 2l2 3l-4 1l-4 0l2-3zM340 151l4 2l4 3l-4 3l-8-1zM284 170l0-4l5-1l-1 3zM301 211l-6 0l0-5l5 1zM332 158l-3-1l0-5l4 3l4 2zM296 155l1-6l2-5l4 4l0 5zM292 207l-3-3l-2-2l3-1l3 1l0 2zM363 174l-6 1l-7-2l5-2l5-2zM370 191l-2-4l2-3l2 5zM345 182l3-3l4 1l-2 2zM319 149l-5 5l-4 1l0-6l5-3zM291 202l4-3l4-1l0 5l-3 2zM334 155l4 0l5-1l-2 4l-5 2zM322 153l0 3l-3 3l-2-4l3-3zM330 158l2-2l3 0l1 3l-4 2zM314 187l-1 5l-3 4l-3-4l1-5zM273 163l-2 3l-2 4l-2-3l-3-2l3-3zM368 181l-3-4l-2-4l7 0l3 2l-2 2zM360 161l-5-1l-2-4l4 0l5 0zM415 173l-2-5l4-3l2 2l1 6zM404 144l6 1l2 5l-7-1zM432 192l1 1l1 2l-1 1l-4 1l0-3zM463 180l-4 2l-7-4l4-2l6-1zM394 241l5-2l3 4l-5 0zM292 219l4 3l2 2l-4 2l-5-3zM288 235l4 4l2 2l-3 1l-5 0l1-3zM346 233l-4 1l-2-3l4-1zM282 224l4-1l6 1l-6 4zM288 214l3 3l-2 3l-2-3zM301 254l-2-4l0-4l3 1l6 2l-5 3zM278 229l1-3l1-2l2 1l2 4l-3 0zM396 212l-3-1l1-4l2 2zM368 233l-4 2l-6-3l7-1zM287 221l-3 0l-3-1l0-1l4-3l1 2zM281 217l1-1l3-3l1 3l1 3l-3-1zM371 196l-4-2l-1-4l5 1zM371 190l5 4l-4 4l-3-5zM285 213l3-2l4-1l-1 3l-1 2zM346 207l-3 4l-4 2l-1-3l-1-2l3-1zM349 221l4 0l5 2l-4 4l-2 0zM367 231l3 2l-1 5l-3-2l-3-3zM334 248l2-3l3-1l0 3l-1 4zM284 224l5-1l3 2l-2 3l-5 3l-1-4zM291 193l4-3l5 0l0 3l-5 4zM360 192l-1 2l-4 5l-2-3l-3-4l5-1zM354 202l-4-2l-3-5l7 0l4 3zM359 205l-2-3l0-4l4 1l3 0l-1 3zM402 226l-3 3l-3 1l-2-3l1-6l3 2zM378 255l-2-5l3-4l3 4l3 4zM352 204l-1-7l1-2l3 2l4 4zM311 266l1 3l-2 4l-2-2l-3-3zM318 261l-6 2l-3-3l5-1zM356 223l-3-5l-1-3l4 0l3 0l0 5zM397 210l-6-2l-1-4l6 1zM418 200l-4-2l-1-3l4 0l3 1zM412 224l4-1l6 1l-2 3l-2 5l-4-4zM435 221l-2-1l-1-5l4 1l3 1zM427 223l-5-3l0-6l5 3zM432 219l4 1l2 4l-4 0zM438 206l2 4l-3 3l-1-2l-3-2zM432 224l-4 0l0-5l5 2zM292 231l-1-2l0-4l2 1l2 0l0 3zM297 239l1 4l-4 4l-1-6zM297 206l-3 0l-6-2l4-4l6-1zM270 228l-1 3l-4 4l-2-4l2-4zM300 258l-1-1l-3-2l2-1l3-1l0 2zM280 243l1-3l0-4l6 2l1 5l-2 1zM280 208l3-5l6-2l-1 6l-3 4zM283 197l4 2l4 2l-5 2l-5-3zM268 219l5 2l2 3l-4 0l-4-2zM459 237l5 2l2 3l-5 1l-2-2zM432 242l1 5l-3 4l-3-2l-4-5zM429 254l1-4l3-2l1 3l-1 3zM443 249l-1-3l-2-4l6 1l1 3zM412 254l5-1l4 2l-4 3l-5 0zM223 276l1 4l-4 3l0-4zM222 270l-2 2l-5-1l3-2zM213 269l4 1l0 4l-4-2zM217 269l-1 1l-6 0l2-2l4-3zM229 258l-3 4l-3 3l-3-3l0-6zM218 245l0 5l-1 2l-3-2l-1-6zM217 277l-3 3l-2 3l-3-3l-3-2l5-3zM238 261l-1 2l-2 5l-3-3l-4-2l5-2zM278 268l1 1l2 4l-5 0l-5 0l2-3zM258 255l3-4l6-1l-2 4zM277 238l-4-3l-1-4l6 2zM280 242l-2 4l-6 1l2-3zM354 246l1 2l0 5l-3-2l-3-3zM289 302l0-2l1-3l3 1l1 1l-1 3zM339 271l-1-5l2-4l3 2l2 4zM423 287l-1-3l0-2l4 0l3 1l-2 3zM406 288l-4-1l-2-1l3-2l4 0l-1 2zM407 296l-4 2l-5-2l3-3l4-2zM295 300l-3 0l-4-1l0-1l2-3l2 1zM290 287l5 2l0 5l-4-3zM279 301l-3 0l-5 2l1-4l1-4l5 3zM263 293l1-2l5 0l0 3l-3 3zM351 262l-3 2l-2 2l-4-3l0-3l5 0zM314 320l-4-1l0-6l4 2zM268 260l6-2l4 2l-4 3zM409 270l4 1l3 3l-6 2l-4-2zM409 269l-1-7l3-4l5 5zM340 262l3 1l1 3l-3-1zM383 273l-2 2l-5 0l0-2l0-4l4 1zM361 263l-2 5l-8-1l6-4zM411 275l5-1l4 4l-5 0l-4 1zM399 284l-3-6l6-5l3 5zM287 286l-4-2l-2-5l5 0l3 3zM309 299l3 1l1 3l-2 0l-4 1l1-3zM383 277l4 0l1 5l-3 0zM393 262l-3-3l-2-2l4-3l5 2l-2 2zM388 257l7-2l4 0l-3 5l-4 1zM381 278l2-2l2-2l2 2l1 3l-4 0zM274 312l-2-6l1-4l4 2l4 1l-3 5zM267 259l4 0l4 1l-2 3l0 1l-4-3zM410 328l-5 3l-6-1l5-5zM375 282l-3-3l0-4l5 1l1 4zM410 273l-5-3l-1-3l4-2l4-1l-1 6zM404 264l1 5l-5 3l0-3zM378 311l-2-2l2-3l1 3zM387 292l-4-1l0-6l4 3l3 3zM413 294l6-2l3 1l-1 5l-4 1zM152 306l-1-2l1-3l3 1l2 3zM147 300l5 3l-2 7l-3-5zM165 307l4 2l2 1l-2 2l-3 2l-1-3zM192 336l5-4l4 4l-4 2zM171 326l-3 0l-3 1l0-3l2-3l2 3zM153 305l-5-3l0-4l3 2l5 2zM137 344l1-2l3-3l2 3l1 2zM137 339l5-1l4-1l-3 6l-5 0zM168 346l3 1l2 2l-2 1l-2 2l-1-3zM154 314l-3 0l-5-1l4-3l5-1zM152 309l2 3l2 1l-5 3l-5-1l2-3zM138 302l0 3l-1 2l-3-2l0-3zM127 308l5 4l-1 4l-6-2l-1-4zM213 345l-4 4l-5 0l4-5zM217 363l-4-2l-2-3l5-2l5 2zM189 341l5 3l0 5l-6-3zM200 326l5-1l3 2l-4 1l-3 0zM270 331l5 3l0 4l-4 0l-4-5zM290 322l5-1l3 4l-5 0zM297 299l7-3l4 7l-7 0zM303 290l5 1l2 1l-3 2l-4 0zM266 330l-3-2l-1-3l5 1l2 1zM259 312l2 3l-3 3l-3-3zM242 318l5-1l5 4l-4 2l-5-1zM354 300l0 5l-1 4l-5-4l1-4zM302 360l5 0l3 5l-7-1zM302 366l-3 0l-3-3l5-1zM293 315l4-5l6 1l-3 6zM329 329l1 3l-3 3l-2-3l0-2zM315 350l6-1l4 1l-4 5l-5 1zM345 306l-4 1l-5-2l5-3zM337 308l-6-3l-2-2l3-3l4-1l1 5zM344 306l0 3l-3 2l-2-3l2-4zM322 327l4-1l4 2l-4 3l-3 1l-1-3zM361 349l4 0l4 2l-3 4l-3 1l-3-4zM330 353l-4-3l-1-3l5 1zM308 309l0-3l1-2l4 1l0 5zM360 325l7-2l5 0l-3 5l-4 3zM342 310l0-4l3-2l2 2l0 4zM317 294l-8 2l-4-3l6-3zM303 333l-4 1l-3 0l2-3l4-1zM305 344l-4-1l-2-2l1-1l5-1l-1 3zM371 320l5 0l2 2l-5 2l-3-1zM356 353l2 3l1 4l-4 0l-3-2zM296 348l3-3l6 2l-4 3zM348 331l1 2l-2 3l-2-2l-2-2zM341 321l5 5l1 3l-7-1l-3-3zM371 333l-3-5l-1-1l4-1l5 1l-2 4zM333 319l7 1l1 4l-4-1zM334 338l-6-1l-4-3l8-2zM315 313l5 0l4 3l-4 2l-5 0zM331 370l0 3l-4 2l-1-3l2-2zM346 319l4 3l-3 5l-3-4zM328 309l-5-3l1-7l6 5zM360 325l-4-4l0-3l5 2zM380 342l-1 2l-4 1l1-4zM348 335l-6-1l0-7l4 3zM388 327l3 1l4 1l-1 2l-1 1l-3-2zM385 327l5 0l1 3l-5-1zM342 324l0 4l-4 2l-1-3zM400 334l-5-3l1-4l6 4zM383 330l3-2l5 1l-3 2zM363 341l5 3l1 4l-3 1l-6-5zM388 330l0 4l-1 3l-6-4l0-4zM336 392l2 3l0 2l-3-1l-3-2zM334 393l-1 2l-2 2l-1-2l-1-4zM372 377l-5-1l-3-3l1-1l5-2zM368 392l2 1l4 3l-3 1l-4 0l-1-2zM361 394l4-3l4-3l2 4l0 4zM360 408l0-3l3-3l1 4zM370 376l-2-2l-2-3l3 0l2-1l0 3zM349 372l-1 4l-2 3l-1-2l-3-4l5-1zM342 370l-4 3l-4 1l2-6l2-1zM334 364l2-1l7-1l-1 4l-4 2zM311 371l0 4l-2 5l-4-4l0-4z"/><path fill="#16280e" d="M284 75l-4 1l-3 1l0-4l0-3l3 1zM275 71l4-1l4 1l-2 3l-4 1zM300 46l3 0l4 0l0 4l-3 3l-4-2zM319 47l2 3l-2 3l-2-1l-2-2zM364 71l-4-3l-2-4l4 0l6 4zM283 96l-4 2l-5-1l2-2l4-3zM270 97l3 2l1 3l-3 1l-4-3zM299 99l-3-5l2-3l2 4zM319 88l-6-2l-2-2l4-1l4 1zM288 96l-3-1l-3-1l4-2l2 0zM319 100l-2-3l-1-2l4 0l2 2zM312 124l-2-3l0-3l5 0l2 4zM345 139l6 1l4 3l-2 3l-5 2l-1-4zM308 124l-2 3l-5 1l-1-4l6-3zM335 140l-4 0l-2-1l3-3l4 0l-1 3zM329 131l4-1l5-1l-3 5l-2 2zM321 141l2-4l4-1l1 4l-1 4zM286 150l-2 4l-6 1l2-4zM291 153l2 2l1 3l-4-1l-2-1zM286 142l6 0l4 5l-6 0zM294 149l-6-2l-1-3l5-2l3 2zM325 121l-1 3l-2 3l-2-3l-3-1l4-2zM325 122l4 2l5 2l-3 2l-3 3l-2-4zM319 142l-2 4l-6 2l1-6zM317 151l3 2l0 3l-4 0l-2-2zM320 156l-3 5l-6 1l3-5zM361 149l1-3l4-1l0 3l-1 4zM378 167l2-5l6-2l0 4l-1 5zM196 182l4-2l2-2l2 3l1 4l-5-1zM199 178l-5 6l-4 0l0-5l6-2zM222 197l0 5l-9 1l4-6zM234 195l4-1l5 3l-3 1l-4 2zM241 167l0 4l-3 4l-5-4l-1-3l5-2zM260 179l4 0l4 0l-1 3l-6 2zM265 195l5 0l5 0l-2 5l-6 0zM261 200l-4-3l-1-2l4-1l2 2zM310 185l-1 5l-5 2l0-5zM296 195l-1 4l-4 3l0-4l2-3zM300 200l3-2l3-1l0 5l-1 2l-4-1zM296 181l4 3l3 3l-3 3l-7-1zM319 169l-6 3l-5-2l3-3l6-1zM386 175l-4 4l-6 1l2-5zM362 180l3 2l3 4l-3 0l-4 1zM357 187l-3-1l-3-3l3 0l3 1zM304 158l2-3l7-2l0 5l-6 2zM332 147l2-1l5 0l-2 3l0 1l-3-1zM284 161l-1 3l-4 1l0-2l-1-3zM278 156l2-6l4-2l2 3l3 3l-7 1zM280 159l5 1l2 4l-6 0l-3 0zM268 173l-2 3l-1 1l-1-2l0-3zM259 173l7-2l4 4l-5 2zM364 174l-2-3l-1-4l4 1l3 1l-2 2zM370 172l1 4l-4 2l0-4zM290 183l-4-2l-2-2l4-2l4 1zM308 162l-1-5l6-4l2 4l-2 6zM364 179l2-1l0-4l4 3l2 3l-4 0zM425 152l-4 2l-6-1l4-3l4-3zM430 165l-4-2l-4-4l5-1l5 3zM429 166l-2-2l-2-2l3-2l4 0l-1 2zM431 191l-3-4l-1-5l7 3l4 3zM461 180l-5-5l3-4l3 5zM451 183l2-3l4 0l-1 2l-1 3zM451 170l6 4l0 4l-6-1l-3-3zM371 236l1 5l-4 4l-2-5l-1-5zM347 186l3 3l0 4l-2-1l-5 0l1-3zM313 196l0-2l3-1l0 4zM284 235l1-3l2-1l1 2l1 3l-2 1zM270 221l3-3l4 0l-2 4l-2 1zM349 267l-4-2l1-4l4 2zM313 224l0-3l0-3l3 1l2 0l-1 3zM422 247l-3-4l0-5l5 1l3 4zM426 210l3-5l2-3l3 5l3 2l-6 1zM307 213l-5-5l2-5l3 3zM412 232l-1 3l-3 0l-2-2l1-3zM282 213l4 2l2 3l-6-1l-3-1zM421 201l-1-4l3-3l1 4zM353 206l-4 0l-1-3l3-1l3 2zM340 188l0-3l3-3l1 2l2 4zM398 208l-1-5l7-1l-1 5zM314 228l3 0l2 1l-2 2l-4 1zM357 230l2-3l3-2l1 4l-3 3zM300 215l1-2l1-1l3 1l2 1l-4 2zM369 247l-2-1l-2-4l5-1l3 2zM368 216l6 0l-1 4l-3-2zM374 232l-2 2l-3 1l1-3l3-2zM437 236l-3 4l-6 1l1-5zM422 213l2-4l4 0l-1 4zM367 233l-1 2l-3 3l-2-2l-1-2l3-1zM271 212l-2-3l1-4l4 0l3 1l-2 4zM280 212l-2 2l-3 1l-1-2l-1-2l3 0zM366 259l-3 0l-3-1l2-2l2-2l2 3zM308 191l4-2l5-1l-1 6l-6 3zM367 178l7 2l1 6l-6-2l-6-3zM351 197l-2 2l-4 2l1-5l3-2zM398 193l4-3l2 0l-1 4l-3 2zM409 193l4 0l2 1l-1 4l-4 5l-2-4zM428 223l-2-2l-3-1l2-3l4-2l1 4zM285 223l3 2l2 4l-2 1l-7 1l2-5zM287 230l-2-4l1-5l3 1l4 5zM297 243l2 2l2 3l-4 0l-2 0l0-3zM316 210l-3-4l2-4l3 2l3 4zM282 218l-2-1l1-4l2 2l2 2zM222 272l4-2l3 0l-1 2l-2 3zM230 275l-1-5l3-3l3 2l2 6zM246 259l0 4l-3 2l-2-3l-1-4zM216 288l-3-3l-1-3l4 0l3 2zM242 281l-3-2l-3-3l4 0l3 1zM268 253l-3-3l3-4l3 2zM275 252l-2 2l-7 1l3-5zM254 266l-4 1l-5-2l5-2l3 0zM250 263l1 3l-2 3l-2-3l0-3zM317 276l0-3l3-4l1 4l1 2zM379 263l3-2l4 0l0 3l-2 2zM342 247l-4-2l-1-2l5-1l4-2l-1 5zM298 239l-2 4l-5-2l4-2zM289 300l6 2l2 5l-4-1l-7-1zM312 303l-1-3l3-4l2 2l1 4zM287 252l-4 1l-4 1l1-4l3-2zM399 245l1 5l-1 3l-5-1l-4-4l5-1zM348 276l-1-4l3-5l3 3l1 4zM370 263l-3 2l-3 2l-1-5l4-3zM314 278l7 2l1 5l-7-1zM318 314l-5-2l-4-6l8 1l5 3zM420 265l2 4l0 3l-3-1l-4 1l3-5zM419 266l1 5l-2 4l-4-3l-3-4zM297 306l-2 3l-6-1l2-2zM311 294l-2 0l-6-2l1-3l2-3l5 4zM326 276l1 5l-7 2l2-5zM300 276l2 5l-4 3l-2-6zM323 311l0 4l-6 1l1-3zM324 300l-2-2l4-3l1 3zM269 281l3-1l5 2l-3 3l-4 0zM332 293l-3-3l0-2l4 1l1 2zM333 290l4 3l-2 4l-3-2l-4-2zM313 260l-4 0l-4 0l3-5l7 0zM264 283l2 2l4 1l-5 3l-3 1l-1-4zM349 287l4 8l-7 3l-1-5zM335 308l-3 2l-3 1l0-4l1-3l2 3zM384 292l-1-4l1-3l4 2l1 2zM392 289l-4-1l2-5l3 4zM335 263l3-3l7 0l-1 3l-3 4zM400 242l3 4l2 6l-5-2l-5 0l1-4zM330 305l1 3l0 1l-3-1l-4 0l4-2zM316 272l-2 0l-4-1l2-2l4-1zM329 262l-1 4l-1 2l-2-2zM352 284l4-1l5 1l-3 2l-5 2zM399 271l0 4l-2 4l-5-1l-4-4l5-1zM379 283l4-3l8 2l-4 3zM286 309l-4 1l-3-1l1-3l6-1zM267 265l0-5l1-4l4 3l0 6zM307 301l-2-3l3-3l2 2l1 3zM373 309l-1-4l2-3l3 3zM379 309l-2-1l-3-2l4-1l2 1zM412 294l-5-2l-3-1l2-5l6-1l1 3zM384 289l-3 0l-2-1l2-2l3-1l0 2zM395 292l-2-5l0-3l4 2l0 5zM202 326l-3 3l-4-1l2-3zM163 306l-5 0l-1-6l4 0l5 2zM128 314l3-3l5 1l-3 3zM173 346l-2-2l-1-3l3-1l4 0l-1 3zM181 341l-6 3l-5-4l4-3zM159 312l1-2l0-3l3 2l2 1l-3 2zM134 326l4-2l3 0l0 4l-4 2l-2-2zM150 299l7 0l3-1l-3 6l-4 1zM137 329l4-1l4 0l-2 4l-3 2zM181 307l1 3l1 4l-5-2l-2-3zM169 314l3 3l-2 4l-2-1l-2-5zM177 345l-3-1l-3-3l4 0l3-2l0 4zM154 333l-1-3l3-2l1 3zM146 334l8-2l4 6l-7 0zM158 298l1-2l2-3l2 3l1 2l-2 0zM143 317l-4 2l-4-2l2-1l5-1zM139 303l-4-1l-5-5l4-2l4-1zM142 306l-3-5l1-4l4 3l4 3zM209 321l5-2l5 4l-5 2l-4 0zM225 309l0-3l1-4l5 4l0 3zM220 303l3 0l3 5l-6-1zM198 341l-5-3l-2-4l8 0l2 5zM271 327l-1-5l0-2l5 1l2 2l-2 2zM301 309l-4-4l2-5l5 2l1 4zM282 318l-4 4l-4 2l-1-4l3-4zM297 330l1-3l2-2l2 3l-1 3zM364 318l-5 1l-7-3l6-3zM347 308l6 0l1 6l-4-1zM360 314l-2 4l-3 0l0-2l2-3zM344 311l-3 2l-1 2l-2-3l0-3l3 0zM298 303l0-4l4-1l-1 4zM328 330l-7-2l-3-3l5-2l6 3zM321 329l3-3l5 2l-2 2zM326 312l2 6l-2 5l-3-4l-3-4zM319 335l-1-3l3-2l1 2l0 2zM321 347l2-4l3-2l1 3l-3 3zM346 313l-4 0l-4 0l3-3l4-1zM300 338l6 0l5 3l-4 4l-4 2l-1-5zM354 339l-4 5l-3 2l-1-6l2-4zM289 315l-3-2l-5-3l4-3l4 0l0 2zM310 361l-2 2l-4 1l2-3zM374 317l-6-3l-4-4l6-2l6 1l-2 3zM327 288l5 2l0 5l-4-2zM365 338l-4-1l-4-4l5-2l4 1zM367 332l2 2l1 1l-1 1l-3 1l-1-3zM374 334l-2 6l-4 2l-4-3l3-6zM365 348l2-2l6 2l-5 3zM380 332l0-4l2-2l3 3l-1 3zM341 314l6-2l4 0l-2 5l-4 1zM384 343l3-3l4-1l-1 4l-1 4zM397 324l-4 1l-4 2l0-5l2-4l3 2zM357 336l2 1l2 3l-5 1l-5 0zM350 376l-3 1l-3-1l1-2l5-2zM334 398l2 2l3 4l-4 0l-5-2zM354 404l-2 4l-5 1l2-3zM355 397l1-4l5-1l1 3l-1 3zM337 401l4-5l4 1l1 3l-5 3zM351 373l-4-1l-3-5l6 1l5 2zM384 350l-3 0l-5 0l3-4l4-1zM375 340l5-5l4 1l-1 3l-6 5zM371 353l-4 3l-5-3l5-3zM387 346l-5 2l-4-2l5-2z"/><path fill="#1c3412" d="M258 35l4-4l3-2l1 5l-2 2zM273 32l3 4l1 3l-4 0l-5-1l3-2zM280 70l5 0l2 8l-6-3zM274 63l-3-2l-2-3l3 0l4 2zM314 50l-5-1l0-4l4 2zM306 55l1-5l4-4l2 5l2 3zM308 111l0-3l3-2l1 3l1 3zM312 103l-4-2l2-4l2 3zM334 93l0 4l0 2l-3-1l-3-3l2-1zM305 105l1-2l1-2l3 2l2 1l-4 2zM307 101l2 3l-2 4l-4-3zM265 137l-7 0l-1-2l6-1zM276 147l4-3l4-1l0 4l-5 3zM282 139l2-4l3-2l1 3l-1 4zM282 126l-1 5l-3 3l-2-5l0-4zM274 157l3-3l2-4l3 5l0 3zM282 145l-2 2l-3 2l-1-3l1-3l2 1zM287 148l5-1l3 2l-4 2zM379 148l2-5l1-3l5 4l-1 4zM187 153l4 4l0 6l-5-1l-3-5zM189 161l5 0l2 4l-3 1l-6-1zM199 171l-4-3l-1-5l4 1l4 1l-1 4zM208 176l2-1l3 1l-1 3l-2 1zM202 186l4-6l5 1l-2 3zM223 199l-5 1l-5-1l2-3l3-2zM257 193l-3 3l-6 2l2-5l3-5zM235 182l4 0l0 6l-3-3zM275 199l3 0l3 1l-1 2l-2 3l-2-3zM303 186l2 3l0 5l-5-2l-2-5zM366 199l-3 0l-4 0l1-2l1-3l3 2zM280 189l-2 4l-7 0l4-4zM294 169l-7-4l-1-5l6 1l3 2zM305 210l-4 0l-2-1l2-3l5 1zM314 194l-1-3l-1-3l4 2l3 1l-2 2zM301 148l-2-5l6-5l0 7zM299 143l-3 2l-6 0l2-2l0-4l4 2zM302 201l-3 3l-6 1l2-3l2-4zM308 167l-1 5l-3 1l-2-2l1-3zM307 180l2 3l-2 4l-4-3l-1-4zM304 169l-1 4l-2 2l-2-3l0-2zM356 183l-1-3l1-3l3 1l1 3zM293 156l4-5l4-1l0 6l-2 2zM297 191l-3 1l-3 0l1-2l4-1zM300 189l-1-6l2-3l4 2l2 5zM321 168l-1 1l-4 2l0-3l-1-2l3 1zM320 152l4 2l0 3l-4-1zM333 161l0-3l2-4l3 4l-1 4zM312 175l-4 4l-5-2l3-2l5-4zM304 158l-2 0l-3-2l3-1l3-1l0 3zM281 180l5 4l4 1l-3 3l-6 0l0-3zM351 153l1 2l0 3l-4-2l-1-2zM451 192l-4-2l-2-3l5-3l5 0l-3 5zM391 245l2-3l5-2l1 4l-4 5zM325 234l5 4l0 4l-4-2l-4 0l3-3zM339 252l5-3l3 1l-2 4zM320 214l-1 2l-3 2l-1-2l0-3l3 0zM291 214l1-3l3-1l2 3l-1 2zM307 193l3-3l5-1l0 5l-5 3zM306 254l-6 0l-3-4l4 0zM362 224l-5 4l-5-3l5-1zM422 203l4 5l-1 5l-6-3l-2-4zM415 205l2 1l1 3l-3 0l-3 0l2-3zM333 192l2-6l7-1l-2 5l-1 3zM357 225l2 3l-2 4l-3-2l-2-5zM284 231l1-2l5-2l-1 5l-4 1zM362 230l5 5l2 4l-6 1l-5-7zM370 243l-1-4l2-4l4 4zM375 239l-3 3l-2 1l-1-1l-2-2l2-2zM331 211l3-5l6 1l-4 3zM352 229l-1-5l2-3l3 2l2 3zM352 225l-1-4l0-5l5 2l1 4zM427 211l1 2l0 3l-3-1l-3-1l3-2zM356 197l1 3l-3 4l-2-5zM267 212l4-1l4 0l-1 4l-2 3l-3-3zM297 200l-1-3l0-2l3 1l3 1zM362 209l0-3l0-2l3 1l2 4zM350 197l-6-2l-4-2l4-3l7 0zM266 213l6-1l4 1l-4 4l-6 0zM279 206l1 5l-6 2l0-4zM319 190l-4 0l-5-4l4-1l5 0zM343 201l5-1l4 1l-4 3l-2 1zM373 241l0-3l0-3l4 2l3 3l-4 1zM390 195l3 3l-1 3l-3-2l-2-2zM406 219l-2-4l-1-5l6 2l3 3zM427 226l-6-2l-3-2l6-3l3 1zM428 223l1 4l-2 4l-3-3l-3-2zM392 220l1 5l-1 5l-5-5l-1-3zM391 216l3 3l-3 3l-1-3zM305 242l-1 5l-2 2l-3-2l0-3zM298 238l2 3l1 4l-3-1l-4-1zM278 231l0 3l-4 4l-2-3l-1-4zM281 233l1-4l4-3l0 6zM290 244l4-2l4-1l1 4l-2 3l-3-1zM296 240l4 0l4 3l-4 2l-4 1l-1-3zM293 244l4 1l4 4l-6 1zM462 243l-7 0l-4-3l7-2zM423 245l-2 5l-4 2l-1-5l3-2zM234 273l6 2l5 2l-3 2l-5 2l-2-5zM228 291l-6 0l-3-5l5-1l4 0zM216 274l0-4l3-6l3 4l2 5zM215 276l-3 3l-3 2l-1-5l1-2l3 1zM218 249l-4 3l-4-1l1-3l0-2l4 1zM236 264l1 3l-1 4l-3-1l-3-2l2-3zM221 257l3 2l3 1l-4 3l-3 1l-1-4zM233 260l-5-5l1-3l4 0l4 5zM209 255l4 2l1 2l-4 1l-2-2zM226 263l4-2l3 0l-2 4l-1 3zM273 266l1 2l2 2l-3 1l-4 0l2-3zM262 247l3 1l1 2l-5 2l-3-3zM265 245l2-5l5-1l1 5l-3 2zM265 247l4-1l2 4l-4 0zM271 249l4 0l4 2l-2 1l-4 2zM306 286l3 3l1 3l-4 0l-4-2l3-2zM301 297l-2-2l-4-3l6-2l3 1l0 4zM251 271l1 3l0 2l-3-1l-2-2l2-1zM305 249l-3-3l-1-5l4 1l5 3zM356 288l-2 2l-5 2l-1-5l1-2l6 0zM308 294l2-2l2-1l1 2l1 3l-3 0zM307 293l3-3l4-2l-1 3l1 3l-4 0zM319 299l-4 1l-3 2l-1-2l-1-5l4 2zM312 298l-4 3l-6 1l1-4l3-5zM302 270l-1-4l1-5l3 3l3 3l-4 1zM406 284l5 4l1 6l-6-1zM334 273l2-3l5 0l-1 3l-5 2zM361 260l2-2l3-1l0 3l-2 2zM405 293l3 4l-1 4l-3-1l-3-5zM364 300l2-3l6 1l-5 3zM312 272l-1-3l1-3l1 2l4 2l-4 1zM325 281l3 2l2 5l-4-2l-3-2zM399 274l4-2l2-2l1 3l0 3l-5-1zM399 265l7 4l1 5l-5-2zM263 296l4-4l4-1l-1 6zM344 291l-3 3l-3 3l-2-2l-3-5l4 0zM317 297l-3 5l-5 1l3-5zM262 268l-3-2l-1-2l3-1l3 2zM426 273l-3-1l-3-5l5 0l4 4zM335 273l-2-5l3-3l5 2l-1 4zM339 271l3 0l2 2l-3 1l-2-1zM374 275l-2-2l-4-2l5-2l2-1l0 3zM366 304l3 2l1 6l-3 0l-5-4zM374 287l3 0l6 2l-6 3l-3 3l-2-4zM333 310l0 5l-3 2l-3-2l-2-5zM378 278l4 0l7 0l-3 2l-4 5l-1-3zM318 283l0-4l6-1l-1 3zM267 268l-1 3l0 2l-4 0l-3-2l4-2zM299 264l-5 1l-3 1l-2-5l1-3l6 3zM349 307l3 4l-6 4l-2-6zM416 294l1 4l-6 3l0-5zM367 310l0-3l1-4l3 2l1 3zM375 314l2-1l3-1l0 4l-3 3zM391 293l2-3l6 1l-3 4zM391 306l-1-2l-2-4l4 0l4 0l-2 3zM373 309l0-2l1-3l2 2l2 1l-1 1zM402 276l-4-1l-4-2l4 0l4 0zM389 298l-2 3l-4 1l0-4l3-3zM398 279l0 3l-5 3l-2-5l2-4zM392 309l-4 1l-3-2l3-2l4 0zM427 300l-4 0l-2-1l2-3l2-1l1 3zM165 308l-5-1l-3-2l3-2l4-2l0 4zM182 317l4-3l2-2l2 5l0 3l-4-1zM163 308l-3 3l-7-2l6-4zM179 337l-2-2l-6-2l6-3l2-2l1 4zM132 349l-4 2l-4-2l2-3l4-2l0 3zM143 331l-4-2l-3-3l3-2l5 2zM146 340l-5 3l-4 0l2-5l3-1zM177 303l5 0l3 3l-5 1zM174 348l-3-2l2-4l3 2l2 3zM189 329l3-1l5 1l-3 3l-3 1zM144 306l1 5l-5 2l0-5zM141 318l3 1l3 2l-3 1l-4-1zM152 307l4 2l1 3l-3-1l-3 0zM148 306l-5-1l-3-2l2-3l5-1l0 2zM224 360l-3-3l-1-4l5-1l5 1l-2 3zM208 320l1 3l-3 5l-2-5zM196 351l-1-5l3-2l2 3l-1 5zM222 323l-4-1l-2-2l5-2l4 3zM192 343l-5 0l-6 0l2-3l5-2zM190 347l-1-6l1-2l2 1l4 3l-4 2zM257 337l0-4l4-2l-1 4zM285 328l4 0l5 0l-2 2l0 4l-4-2zM256 332l2 2l4 3l-5 1l-5-1zM295 305l3-2l5 0l-1 2l-2 4l-2-3zM273 336l-2-3l1-5l5 1l2 3l-2 2zM290 311l1-4l5-3l0 6zM306 304l-4 3l-5-3l5-1zM240 325l-1-3l2-4l2 5zM356 341l4 3l2 1l-3 3l-5 0l0-3zM297 314l5 1l2 3l-5 2zM368 306l0 2l0 3l-3-1l-2-3zM359 308l4 1l2 1l-2 3l-5-1zM363 310l4-2l5 1l-3 4l-4 2zM326 334l0 7l-3 4l-2-3l-1-6zM327 329l2-5l4-1l0 5l-1 2zM326 314l1 4l-3 4l-2-4zM331 316l2 3l3 3l-5 1l-3 2l1-5zM340 322l-5-4l-1-5l8 3zM367 345l3-2l3-1l1 5l-1 2zM314 332l-1-1l-1-3l3 0l3 2l-2 2zM352 349l-1 4l-6 3l-1-5l4-4zM316 359l0-5l5-4l2 1l2 5l-4 2zM332 310l3 1l3 2l-1 1l-5 2l0-3zM317 333l1 3l-3 4l-3-2l-3-5zM304 340l7-1l3 3l-7 1zM282 315l-3 3l-4 1l1-3l1-4zM301 324l3 4l-1 6l-5-5zM302 329l0 2l0 3l-2 0l-2-1l1-3zM387 341l-2 5l-6 0l3-4zM372 343l1-2l3-3l2 3l-2 4zM287 312l-1-3l2-3l3 1l3 2l-4 1zM288 313l4 1l5 0l-1 2l-4 4l-3-3zM332 293l-3 0l-2 0l0-3l3-1l2 2zM334 303l-1-5l4-4l1 5zM398 326l1 5l0 5l-7-4l0-3zM399 335l3-2l6 0l0 5l-3 3l-3-2zM348 333l-1 2l-2 2l-2-3l2-2zM351 324l0-3l0-4l4 2l0 3zM358 342l-5 3l-5-3l5-3zM370 378l1-2l4-2l1 4l-1 2l-3-1zM355 373l1 2l1 3l-3 0l-2-3zM358 396l3-3l4-4l2 6l-4 5zM358 374l2-4l6-3l-1 6l-2 4zM341 364l-3 2l-4-2l1-3l3-1zM379 355l-3-2l-2-2l4-3l5 0l-1 3zM381 348l-6 0l-3-1l1-2l6-1zM250 383l4-4l4 0l-1 5l-2 3z"/><path fill="#223d16" d="M274 41l1 3l-2 2l-4-3l-1-3zM275 46l-4-1l-5-1l6-4l4 1zM345 63l6 1l1 4l-4 0l-5-1zM328 101l2 4l-3 3l-1-4zM329 87l-3 1l-4-2l3-2l5-1zM299 87l4 1l2 2l-3 1l-4 0zM312 84l-6-4l-1-5l7 2l4 3zM261 140l-3 0l-3-2l2-2l5 1zM264 130l4 1l2 2l-4 2l-3-1zM323 144l0-4l1-3l5 3l0 4zM326 138l1-3l3-2l1 4l-1 3zM271 146l3 2l2 1l-1 1l-4 2l0-3zM352 143l-4 0l-4-3l4-2l5 1zM275 154l-5-3l2-5l5 5zM289 149l-4-1l-3-1l1-2l4-2l0 3zM284 158l-3-1l-1-4l4 0l3 3zM300 158l-4-4l1-5l5 5zM323 128l1-3l2-2l2 2l2 3l-2 0zM329 147l3-3l4-3l2 4l0 5l-4-1zM355 154l-3 3l-1 3l-3-4l0-2zM391 135l-3 2l-3 2l1-5l2-2zM390 147l-6 2l-3-5l5 0zM192 164l-1-4l1-3l3 3l1 2zM198 153l1 4l-5 2l-2-3l3-5zM205 177l4-2l7 1l-5 4l-4 4zM198 182l0 5l-1 3l-4-2l0-4zM212 185l3 1l3 2l-4 2l-3 0l0-2zM220 203l0 4l-3 1l-1-4zM248 190l-1 3l0 2l-3 0l-3-1l2-3zM252 189l0 5l-4 3l0-3l0-4zM265 184l5 4l0 4l-2 0l-6 0l0-5zM370 170l-1-3l2-3l3 2l1 2zM359 201l-1-6l5-4l2 4l1 5zM339 206l0-2l-1-3l3 0l4 0l-2 4zM307 187l-1-3l-1-3l4 1l2 2l-3 2zM282 162l4 1l0 5l-4 0l-4-2zM352 170l3-1l4 2l-4 2zM291 211l0-3l2-4l4 4l-1 4zM296 167l3-3l5-1l0 4l-1 2l-3-1zM323 143l6 0l4-1l-2 4l-1 4l-4-3zM293 203l0-4l5-1l-1 4zM306 144l-3-3l3-4l3 3zM311 147l-7-3l-1-3l6-2l3 3zM291 171l0 3l0 2l-4-1l-1-4zM300 174l-6-1l-5-1l4-3l5-2l1 4zM305 166l5 1l5 1l-4 3l-4 3l-1-3zM366 172l-2 2l-1 0l-2-2l0-2l3 0zM361 175l5-2l4 1l-1 3l-5 5l-2-4zM298 191l3 3l2 5l-7-1l-4-3zM295 186l-1 5l-5 3l-1-5zM332 146l2-3l4-3l2 3l-1 4zM289 149l3 1l3 0l-2 4l-2 2l-3-4zM334 168l4 3l-1 3l-3-1l-2-3zM289 161l-2-2l3-3l1 3zM344 175l-6 1l-5-2l5-3zM305 152l-4 2l-4 0l2-4l2 0zM286 182l-4-1l-3 0l2-3l2-2l2 3zM350 169l-3 1l-4 2l2-4l3-2zM349 159l-2 0l-5-1l4-2l4 0zM425 168l0 3l-5 1l2-4zM447 185l-4 4l-4 2l0-6l4-3zM465 178l-3-1l-1-4l3 1zM387 234l1-4l2-2l3 3l-1 2zM389 239l0-3l2-3l2 2l2 4zM267 219l4 2l0 4l-4 0l-2-4zM336 254l4 1l2 3l-3 1l-4-2zM342 239l1 5l-4 1l0-4zM414 211l-2-4l4-4l3 4l1 4zM366 217l0-4l4-4l1 5zM301 215l6-4l6 0l-3 5l-2 3l-2-2zM300 191l6-1l4 4l-6 1zM286 213l6 3l-1 5l-5-3zM286 224l-6-2l-2-5l7 2zM282 199l6 2l3 0l-3 5l-5 1l-1-4zM344 226l3-2l4 2l-3 1zM416 206l-3 2l-3-3l4-1zM391 246l-6 1l-3-2l4-2l4 0zM399 242l-5 0l-1-5l5 2zM287 224l4 3l-2 3l-3-2zM364 219l-3-6l6-2l2 4zM295 218l-2-3l-3-4l7 0l4 3zM364 223l-3 2l-3 1l0-3l2-2zM281 235l-6-2l1-5l5 2l3 2zM297 227l-5 2l-6-3l5-1zM289 229l-5-2l-4-4l6-1l4 0zM416 202l-5-1l-4-1l2-4l6-2l0 4zM406 193l3 6l3 2l-8 1l-6-2l4-2zM343 189l1-3l1-3l5 0l3 3l-4 3zM394 238l-6 0l-3-3l7-2zM314 192l-4 2l-5-3l4-1l5-1zM343 207l-3-3l3-4l2 4zM267 207l4-3l7 1l-3 3l-3 4zM374 210l7 3l-1 5l-5-5zM379 191l2 3l-4 5l-2-6zM366 228l3 3l3 4l-6 1l-3-2zM404 223l-1 5l-6 1l1-5zM288 235l0 4l-4 2l0-4zM269 233l4 3l1 4l-6-1l-4-4zM295 231l0-3l2-4l2 2l6 0l-5 4zM301 228l7-3l5 1l-2 4l-4 3zM296 256l5-4l3-1l2 4l-1 3l-4-2zM430 253l-2-3l-1-4l6 2l2 1l-2 3zM216 243l5 5l0 4l-6-1l-4-5zM222 280l-6 3l-4 1l0-3l2-6l3 3zM223 279l-4 4l-4 1l1-5l4-4zM276 270l2 2l1 3l-4 1l-3-2l2-2zM245 265l-3-3l2-4l3 3zM254 271l-7-2l-3-3l2-2l7-1l-1 3zM274 283l-3 4l-5 2l0-3l1-5zM342 237l-6 2l-4 1l0-5l7-2zM334 238l-3-4l2-3l4 2zM279 308l-1-4l-1-3l3 0l5 2l-2 2zM292 299l-3 5l-4 1l-3-5l6-4zM349 294l-1-4l-2-1l3-2l4 1l-1 3zM274 259l2-3l1-5l5 4l1 3l-3 1zM374 253l-4-1l-3-2l2-1l4-1l1 2zM399 239l4 4l2 5l-6-1l-6-1zM352 277l0 5l-1 2l-6-2l0-3zM356 270l-1-4l1-3l2 1l3 3zM314 276l4 1l3 1l-3 1l-3 0zM315 279l4 1l4 2l-4 2l-4-1zM290 306l1 2l1 3l-3 0l-5-3zM419 294l-5 4l-7 0l3-5zM315 304l1 6l-6 3l0-6zM400 283l7 4l-5 4l-3-3zM344 313l3-3l6 0l-2 3l-4 3zM333 291l6 1l0 5l-3 0l-4-2zM275 256l-2-3l1-4l2 1l2 3zM280 259l-4 1l-1-3l3-1zM322 306l-3 2l-1 3l-4-2l0-4l3 0zM318 306l5-2l5 6l-6-1zM261 288l2-5l4-1l2 4l-3 5zM249 271l4 2l4 3l-6 1l-4-2zM362 240l-1 2l-3 3l-1-4l1-3zM369 250l2-3l4 0l-1 3l-2 2zM296 311l-4-6l2-4l4 5zM345 267l-3-2l-1-3l3 0l3 2zM301 310l-2-2l-1-2l4 1l2 1zM296 254l4 3l-1 4l-4-3zM383 273l2-4l1-2l2 3l0 4l-2-1zM360 265l2 1l1 5l-3-1zM284 287l3 0l6 3l-5 2l-4 0zM400 261l4 2l3 5l-6 1l-3 0l1-4zM396 255l2 3l-4 6l-3-5l0-5zM267 265l-6 2l-4-4l6-1zM324 302l1 4l-5 2l-1-4zM348 254l4 0l4-1l-1 4l-2 4l-3-4zM281 294l5 3l-2 4l-4-3zM355 263l6 1l1 6l-6-2zM348 270l4-2l5-1l-3 4l-4 2zM324 261l0 3l-5 1l2-4zM287 256l-2 5l-2 2l-3-2l1-5zM361 254l1 2l-3 4l-1-3l-1-4zM409 264l5 1l1 3l-2 1l-3 0l0-2zM417 260l-5 1l-3-3l4-1zM385 314l6 0l3 2l-5 2l-5 1zM414 293l-4-2l-5-3l3-2l3-2l3 3zM412 329l-5 0l-5-4l3-1l4-2zM381 287l-7 1l-5-2l5-4l5-1zM403 269l-1-3l0-3l2 1l4 1l-2 2zM398 278l-4 1l-2 0l1-3l3-2zM424 296l2 2l3 4l-2 0l-5 1l1-4zM156 298l1 4l-5 2l0-3zM191 295l-5 5l-7-1l5-5zM173 334l1-4l3-2l1 4zM161 348l3-4l6 1l-2 4zM150 340l-6-3l-1-5l6 0l3 5zM154 306l1 3l-1 3l-3-1l-3-2l2-2zM156 298l4 1l4 3l-5 2l-6 0zM132 290l-2 7l-8 0l4-5zM241 310l-3 3l-4 2l1-6l3-1zM221 337l-2-2l-1-3l5 1l2 2zM297 335l-2-3l1-4l4 1l2 3zM269 324l3-4l6-1l-2 4zM296 316l6-3l4 5l-6 1zM278 332l1 2l1 2l-1 0l-4 0l1-2zM297 324l-5-2l-1-4l4 1l4 4zM246 309l3-1l3 3l-3 2l-5 0zM267 323l-3 0l-3-3l4 0zM253 318l3-2l5 1l-4 2zM273 294l-5 3l-4-3l4-1zM255 297l1-5l2-2l3 3l2 1l-3 2zM246 321l3 1l2 1l-4 3l-3 0zM281 336l6-3l6 4l-8 2zM350 305l-6 3l-4 0l2-5l3-2zM293 352l-4 4l-6-1l5-5zM284 349l5 2l1 3l-5 0l-2-1zM361 298l-3 7l-4 1l-2-3l1-7zM329 325l-3 0l-4 0l2-3l5-1zM296 312l4-3l4 1l0 3l-5 2zM317 335l4 2l-1 4l-4-3zM294 352l4 2l0 2l-4 0l-2-2zM316 347l1 2l1 4l-6 0l-3-1l3-4zM340 294l1 5l-2 2l-2-1l-4-3l4-1zM378 333l0 4l-1 5l-3-2l-3-2l3-3zM373 345l-3-2l0-3l4 1zM361 343l0 3l-3 2l-1-1l-2-2l3-2zM343 307l5 1l0 5l-5-1zM372 327l-5-3l-1-4l5 1zM368 306l0 3l-2 4l-3-2l-3-4zM359 312l4 0l5 2l-4 2zM347 360l1-1l2-1l1 3l-1 3l-2-2zM343 360l3-3l5-1l0 3l-1 3zM344 332l-4-1l-3-5l6-1l4 0l0 4zM313 316l-1-3l1-5l5 2l3 4l-3 2zM293 316l3 1l2 3l-3 0l-3 1l0-3zM326 342l-4-4l0-5l5 2l3 3zM388 308l-3-1l-2-2l4-1l3 2zM414 343l-8-1l1-4l7 0zM405 333l2-3l3-3l1 4l-2 2zM396 335l-6-3l-2-3l7 0l3 4zM371 340l-1 7l-5 0l0-4zM368 391l-4-3l-1-2l3-1l5 4zM351 393l6-1l3 3l-4 2l-4 0zM368 408l-5 1l-5-2l6-3l5-2zM340 388l7 0l5 0l-5 6l-5 1zM344 391l3 3l2 5l-4-1l-5-2l3-2zM362 374l1-5l5 1l-3 3zM350 378l-4-4l6-6l2 5l1 5zM338 358l1 1l0 4l-3-2l-2-3zM373 352l6-3l7 1l-4 5zM382 345l-3 4l-6 1l3-5zM261 388l-4 2l-5-1l2-3l2-1l2 1zM323 361l3-2l4 1l-2 2l0 2l-3-3zM320 362l-3-2l0-2l3 0l2 1z"/><path fill="#152813" d="M282 52l-6-1l-3-2l6-3l4-1zM301 64l1-3l6 1l-3 3zM351 64l0 5l-7 5l0-6zM272 93l-1-4l0-2l3 1l1 3l-1 0zM280 90l-5 4l-6 0l5-5zM333 92l-5-2l1-4l4 1zM298 95l4-1l5 0l-4 4l-3 1zM256 125l-3-1l-3-3l4 0l3 2zM242 125l4-1l6 3l-6 1zM254 126l-6 2l-6-2l6-3zM294 158l-2-3l1-4l4 2l1 3zM264 134l4-1l4-1l-1 4l-4 2zM283 131l-2 1l-3 0l0-2l3-3zM334 156l-1-3l3-6l4 5l-1 5zM321 153l-4-1l-2-4l3-1l7 3zM355 147l-3 0l-2-1l2-2l0-2l3 2zM314 130l3 2l0 3l-4-2zM317 156l0 4l-4 3l-1-4zM347 141l0-4l2-3l4 3l3 3zM396 140l-4-1l-3-2l3-2l1-3l2 4zM375 164l4-1l4 2l-5 2zM190 171l-4-1l-3-3l5-1l4 3zM194 165l1 4l-5 3l-2-3l2-5zM207 186l4 2l4 4l-5 1l-7-3zM200 181l0 4l-2 3l-2-3zM213 200l-5 3l-6 0l4-6l6-2zM262 189l4 3l1 4l-4-1l-4-3zM263 197l-4 1l-3-1l3-2l3-2l0 3zM239 199l3-4l4-4l2 4l1 4l-5 1zM246 203l-5-1l-2-5l4-1l5 2zM302 187l-6-1l-3-1l3-2l3-2l0 3zM286 181l4 2l0 4l-4 0l-4-3zM337 152l3-2l4 3l-3 1zM277 173l5-2l3 2l-1 1l-4 3zM290 169l2 4l3 2l-5 2l-5-2l1-2zM321 145l3-1l3 1l-2 3l-2 0zM283 170l3 1l2 3l-4 1l-3-1l0-2zM299 152l5-1l3 0l0 5l-5 2l-1-3zM295 201l-3 2l-3 2l-1-5l-1-5l7 3zM343 151l-5-1l-2-4l6 1zM337 138l2 3l-4 3l-1-3l-2-4zM343 155l4-2l6 4l-4 2l-6 0zM300 180l3 2l1 4l-4 0l-5-2zM335 149l-2 7l-6-1l2-4zM340 163l2 3l0 4l-4-2l-2-4zM287 173l-3 0l-3-2l3-2l3-1zM282 158l6 1l3 1l-1 4l-3 1l-2-2zM286 159l2-2l4-3l2 2l-1 6l-2-2zM332 163l-4-1l-3-1l2-3l6 0zM363 161l-5 1l-4 0l4-4zM350 164l0-6l5-1l-1 3zM412 144l-1 4l2 6l-4-2l-5 1l2-6zM434 178l0 5l-6 2l0-4zM426 178l-1-3l0-3l2 1l3 2l-2 1zM420 167l-4 1l-3-5l5 0zM421 175l1-4l6-1l-3 3zM433 175l2-3l7 0l-3 4l-3 2zM463 186l-6-1l-1-5l4 1zM381 200l1 2l-2 4l-2-3l0-3zM375 184l-2-4l-4-3l7 0l4 1l-2 2zM414 237l5-3l6 2l-3 3l-4 0zM355 228l-5-4l0-6l6 4zM292 242l3 0l2 3l-4 2l-4-2zM370 193l3-3l3-2l2 4l-1 3l-3-1zM365 190l1-3l4-3l0 4zM339 248l-4 2l-5 1l0-4l1-4l3 2zM348 223l-3 2l-4-2l3-1zM285 218l3 3l1 3l-5-2l-3-3zM287 213l-4-2l1-4l2 1l5 0l-3 3zM283 212l-2 1l-4-2l1-2l2-2l2 3zM403 197l0 6l-6 3l-1-6zM356 224l-2-1l-1-3l3-1l2 3zM383 241l5 0l3 3l-6 3l-4 0zM363 193l-2 4l-4 3l-2-4l1-3l3 0zM336 208l1-4l1-2l2 3l1 2zM335 245l6-2l4-2l-1 4l0 3l-6-1zM291 208l4 2l1 4l-3-1l-3-1zM286 220l1 4l0 4l-6-2l-1-3l2 0zM280 229l-5-5l4-5l3 4zM290 193l6 1l1 3l-4 0l-5 0zM300 186l4 4l0 3l-5-1l-3-4zM301 197l1 4l-4 1l-1-3zM352 185l-1 3l-3 0l0-2l2-2zM376 249l4-2l4 1l-2 2l-3 1zM381 247l4 1l4 4l-5 1l-5 0l0-2zM266 218l2-4l6 1l-3 3zM401 205l3-2l1-3l5 4l1 1l-5 1zM366 243l-3-5l0-3l5 2l2 2zM441 219l-3 0l-2-3l4-1l3 1zM414 199l-3 2l-4-1l3-2zM414 234l0-5l3-3l2 5zM406 220l-2 2l-1 4l-2-2l-3-2l3-2zM388 222l5-1l3 0l-3 4l-4 0zM400 222l-2 1l-4-3l3-1l3 1zM318 243l6 2l2 5l-5-1l-5-2zM268 232l3 0l4 1l-2 4l-4 2l-1-3zM273 228l3-3l5 0l-3 4zM270 233l-4-4l1-4l4 4zM275 232l-4-2l-1-2l3-1l5 2zM287 213l3 7l-4 3l-5-4l2-3zM321 214l-4 0l-5 0l3-4l3-2l3 3zM461 225l5 3l2 2l-3 2l-5 1l2-4zM215 277l6-1l7 2l-3 3l-8 2zM236 265l-3 3l-3 0l2-4zM226 261l0-2l0-3l4 1l2 2l-3 2zM216 259l4 1l2 3l-5-2zM231 266l4 3l-1 6l-6-4zM259 264l3 0l3 3l-2 1l-4 1zM264 246l3 2l0 3l-4-2zM276 262l5-4l5 1l-2 4l-3 2zM284 253l-3 4l-6 1l2-5l1-3zM274 248l4-2l4 1l-3 3l-3 4l0-3zM320 297l-5 0l-3-2l3-2l4-2zM277 248l6-1l5 1l-3 3l-5 1zM374 284l-4 1l-6-2l6-3l3-2zM334 283l3-2l3 1l-2 3l-3 0zM341 240l1-2l0-3l3 1l2 3l-3 1zM307 300l-3 0l-1-4l3 0l3 1zM286 247l-1-3l4-2l0 4zM395 251l-4 3l-4 0l2-6zM393 291l-3 1l-4 1l0-3l1-2zM410 287l6 2l1 4l-5 1l-4-3zM406 299l2-3l3-3l2 4l1 4l-5 0zM338 247l-1-4l1-3l4 3l2 1l-3 2zM319 315l-2-1l-1-2l2-1l4 1zM301 291l3-5l4-1l1 4l2 3l-6-1zM308 284l-1 6l-6 2l0-6zM327 278l-3 0l-4 0l3-3l2-1zM312 276l-3-4l1-5l5 2l4 4zM330 259l1 5l-3 5l-3-5zM411 267l2 3l1 3l-5-1l-1-4zM317 316l1-3l4-2l0 4l-3 3zM338 314l7-2l5 2l-5 3l-7 0zM324 305l2-3l4-3l1 6l-3 3zM306 290l1-3l2-2l3 3l-2 4zM312 296l1-4l0-4l5 3l3 4zM365 248l2 3l1 6l-6-1l-2-5zM258 272l4-2l4 1l-3 3zM264 269l-3 0l-5-1l3-2l4-1zM263 293l-1-2l-2-5l5 1l2 0l1 3zM258 284l-2 2l-3 3l-2-3l0-2l2 0zM262 281l4 4l4 1l-6 3l-4 0l1-4zM422 267l2-3l3 0l1 2l1 3l-4-1zM403 257l5-2l5-1l-1 5l-3 5l-3-5zM298 298l1 4l1 2l-5 0l-2-2l1-2zM298 255l-3 2l-7-3l4-3l2-4l4 5zM382 273l2-1l4-1l-1 4l-1 3l-3-3zM364 274l-2 3l-2 2l-1-3l-1-3l4 1zM401 275l1-4l3-1l1 3l-1 3zM288 289l1 5l-4 4l-1-5zM262 288l-3 0l-4 0l2-3l2-2l2 3zM310 308l4 0l2 4l-5 0l-3-1zM348 263l-3 3l-4-1l2-3zM392 256l2 5l-3 4l-4-4l0-7zM400 256l-2-4l3-3l1 4zM269 285l6 4l-2 5l-4-3zM316 280l-2 4l-4 2l-1-3l0-4l4 1zM263 250l4 3l1 4l-5 0l-4-6zM305 310l5 3l2 5l-4 0l-6-2zM325 265l5 1l4 1l-2 4l-3 1l-4-4zM348 248l1 4l-1 3l-4-2l1-4zM390 318l-1-5l3-4l2 5zM420 311l6-2l5 2l-6 2zM368 284l5-1l5-2l-2 7l-4 2zM408 297l5-2l7 3l-5 2zM366 280l4-3l6 0l-3 4l-2 3zM410 282l2-3l3-1l0 4l-3 2zM398 280l-1 4l-1 4l-4-2l-2-4l3-1zM367 284l1-1l3-4l3 4l1 4l-5 0zM191 321l1-2l2-2l3 3l-1 2zM155 306l-1-3l0-2l2 0l3 1l-1 1zM193 347l-3-2l4-3l1 3zM164 350l0-2l0-3l4 1l3 3l-4 1zM174 319l1 3l-6 2l0-3zM183 311l3 3l2 4l-6-2l-5-3zM154 342l-4 2l-6-1l2-2l4-3zM175 351l5-1l4-1l-3 6l-2 2l-2-4zM179 310l3 1l2 2l-2 2l-3 2l-1-4zM176 349l-4-5l0-3l6 2l2 2zM158 309l-4-3l-3-2l5-2l4-1l-1 5zM184 342l2-4l3 0l1 2l-3 3zM186 339l-6-1l0-3l4 0zM147 312l5 4l-6 4l0-4zM129 301l-4 2l-7-1l3-5l5 0zM223 326l-7-2l-2-6l8 1zM235 307l-3-2l2-3l2 3zM194 342l1 3l-2 4l-2-2l-3-3l3-1zM207 336l2-3l5-2l-1 3l2 4l-5-1zM191 322l-2 5l-3 2l-3-2l-1-4l4-1zM262 328l-1 2l-1 2l-2-2l-2-2l3-1zM299 296l3 0l3 2l-4 2l-2 0zM242 321l-4 2l-4-1l3-2zM243 318l3 2l3 3l-3 2l-3-1l0-3zM296 337l2 1l1 3l-3 0l-2-2zM280 302l4-3l7 0l-1 4l-3 4zM375 305l-6 4l-3-1l2-4l2-3zM355 307l-3 0l-4-3l4-2l3 2zM353 298l3 1l2 0l-1 4l-2 1l-3-2zM367 314l1-5l1-2l3 1l2 4l-3 0zM342 344l2-4l3-1l1 3l1 3l-5 0zM328 332l0-3l1-3l2 1l1 4zM365 314l-4 3l-5-3l4-2zM349 355l-1-4l4-2l2 3l-2 3zM314 354l3-1l6 0l-2 4l-3 2zM356 305l-4 2l-3 1l0-3l3-2zM370 321l-5 2l-4-1l2-3l3-3zM364 302l-1 3l-3 1l0-3l0-3zM387 339l-2 1l-6 2l0-4l-2-4l7 2zM288 365l0-3l5-2l-1 3zM379 325l2 3l1 4l-5-2l-2-3zM374 321l1 3l-1 4l-4-4l-1-2zM341 289l-6 1l-3-3l6-1zM295 314l-4 5l-8 1l2-4l5-5zM328 337l7-3l4 7l-6 0zM390 334l5 1l2 3l-6 1zM377 332l2-4l4-3l3 5l-3 4zM396 316l-3-3l1-3l4 2zM379 325l-3 2l-4 1l0-3l3-3zM393 325l4-6l5 1l-2 4zM354 340l4-5l3-3l1 5l1 2l-3 1zM371 382l0 2l-1 4l-3-2l-3-2zM338 382l-4 1l-4-1l2-2l2-3l1 3zM333 387l7 3l1 5l-6-2l-4-2zM353 391l4 1l2 5l-7-1zM363 366l4-1l5 5l-6 0zM364 347l7-4l7 3l-6 2zM370 352l2-1l2 2l-1 1l-5 1zM259 390l-5-1l-2-4l7 1z"/><path fill="#2a4c1b" d="M349 75l-5 0l-2-5l7 0zM302 101l5-2l4-2l1 7l-1 1l-4 1zM308 69l0 6l-1 1l-6-2l-1-3l1-1zM274 142l-3-2l-1-3l5-1l5 1l-2 3zM329 128l-6 2l-6-3l3-2l5-3l1 4zM382 150l-4-1l-4-4l3-1l6 0zM396 132l0 5l-8 3l2-7zM390 150l-3 0l-4 0l2-3l4-2l1 3zM266 180l3 4l2 5l-5 0l-5-1l1-2zM272 183l3 3l0 4l-2-1l-4-1l2-2zM298 150l-2-2l0-5l5 3zM359 176l-5 3l-6-2l4-4l6 0zM421 157l1 5l-4 3l-3-2l1-5zM417 158l-5 1l-2 0l0-2l2-3l2 3zM445 161l0 3l-1 2l-3-1l-2-2l3-1zM425 164l5 2l2 3l-6 1l-5 1zM464 169l-4 3l-5 3l-2-4l0-3l5 0zM462 184l-4 4l-4 0l0-3l2-4zM400 244l-4 4l-5-1l3-4zM384 192l-7 1l-2-2l4-3l6 1zM324 199l-1 2l0 2l-3-1l-2-1l3-2zM270 222l0 5l-2 2l-5-3l1-4zM326 235l-5 5l-4-1l4-5zM319 241l4 3l1 4l-6-2zM373 237l4-2l5 2l-3 2l-3 1zM292 226l-4-3l1-4l4-1l3 1l-1 5zM301 208l4 2l1 2l-2 0l-4 0zM359 195l4-4l4 2l-1 2l-4 3zM418 209l-2-5l6-3l2 4zM349 236l3 0l4-1l-1 3l-1 4l-4-3zM376 185l3-3l3-1l-1 4l-2 2zM407 202l4-1l7-2l-1 3l1 5l-6-1zM434 213l-3 5l-6-1l4-3zM395 218l-1 3l-3 4l-3-5l0-2zM287 233l-4-1l-3-5l6 0l5 0zM301 221l5-2l5 3l-4 2zM304 236l4 4l-2 5l-3-2l-3-4zM320 251l-5-1l0-6l4 3zM280 258l-1-2l-1-4l4-2l4 2l-2 3zM466 243l-3-2l0-3l4 2l2 2zM462 246l-1-3l-1-2l3 0l3 0l-2 3zM430 245l0-2l0-4l3 2l2 2zM213 249l8 0l5 2l-6 3l-6 0zM208 271l4 4l-5 4l-3-5zM246 281l-5 0l-3-1l3-3l4 0zM230 267l4 3l0 4l-4 0l-3-3zM260 257l3-2l4 0l0 3l-2 4zM278 268l-1 5l-4 3l-3-4l2-4zM276 262l-3 1l-3-2l2-2l6 1zM284 240l-4-1l-4-2l4-2l5 1zM317 277l-4-2l-3-4l3-1l6 1zM337 281l1 0l5 0l-3 2l-2 2zM271 277l-8 3l-3-5l5 0zM308 253l-2-4l0-4l4 3l2 3zM349 284l0 4l-4 3l-1-4l-1-4zM281 252l-4-3l-1-3l3-1l4 0l-1 4zM399 292l-2 3l-4 2l-3-3l1-5l4 2zM328 301l2 0l3 0l-1 3l-3 0zM431 287l2-4l3-2l2 5l-5 3zM334 258l-5 3l-4 0l1-3l4-3zM415 259l1 4l-3 2l-1-4zM356 293l1 2l-4 4l-2-2l0-3zM319 311l-3-3l-4-4l4 0l5-1l2 3zM270 253l-2-2l-3-1l4-3l3-2l1 5zM388 281l1-4l1-2l4 3l0 2l-4 1zM346 249l-4-2l-2-1l1-1l4-2l0 2zM386 295l0-4l2-3l3 5zM393 258l3-3l4-3l1 5l-2 4zM398 297l-1 5l-5 3l-3-3l0-4l3 0zM373 295l1-5l4 0l-2 3zM392 295l4 2l3 3l-2 1l-4 1l-2-3zM409 299l4 2l0 5l-3-2l-3-3zM409 262l-2 2l-3 1l0-4l5-2zM388 309l-4 4l-4 3l0-5l1-4zM399 296l-2 1l-4 2l-2-3l2-3l3 0zM141 334l2 6l-4 3l-2-3l-4-4zM165 328l-2-1l-3-2l4-2l2-1l0 4zM123 306l6-2l5 2l-4 4l-2 0zM188 347l-1 3l-3 2l-2-3l2-5zM201 328l4-1l6 1l-4 3l-5 1zM297 324l2 2l1 2l-4 0l-3-2zM304 321l2 3l-2 4l-2-2l-2-4zM284 302l-1 2l-5 3l-2-3l1-4l3 1zM351 315l1 3l1 2l-4 1l-5-2l4-2zM300 357l2 2l2 4l-4-1l-4-1zM308 319l-3 0l-3-2l3-2l3 1zM296 317l-4-4l1-5l5 3l1 4zM350 345l-1 3l-3 1l0-3l0-2zM341 292l-3 5l-4 0l3-4zM319 334l-5-2l-3-4l3-1l5-1l1 3zM342 311l-2-2l-2-1l3-1l3-1l-1 3zM361 315l3-2l4 0l-2 5l-1 3l-2-3zM344 330l2-3l4-2l-1 4zM364 343l3-1l5 0l-4 4zM371 337l3 3l1 4l-5-1l-3-4zM317 358l3-2l2-4l3 2l-1 4l-2 1zM379 329l3 5l-3 3l-4-5zM385 334l-6 4l-5-2l3-3l4-4zM370 334l4 2l0 5l-3-3zM353 381l3-1l4-1l-1 3l-4 2zM345 371l1 5l-3 4l-1-5zM365 395l-6 1l-2 0l1-4l2-1l2 2zM251 380l-2-5l1-4l6 3l2 6zM316 364l4 1l4 3l-6 2l-4 0z"/><path fill="#335a21" d="M265 38l4-2l5-1l-1 5l-6 3zM301 49l3 2l3 4l-4 0l-5-2zM261 87l1 3l-3 4l-4-3l0-3zM303 77l5 4l2 3l-6 1l-4-1l2-2zM321 84l4-2l5 1l-3 5l-6 1zM322 96l1 3l-2 3l-4-2l0-5zM293 149l4-1l3 1l-2 2l-3 1zM360 146l-4-1l-3-1l4-2l3 1zM291 159l1-2l5-3l-1 4zM376 140l2 4l-3 3l-2-1l-1-4zM386 166l5 3l0 5l-5-4zM211 189l-5 3l-6-1l3-2l0-4l5 2zM232 182l-1-3l-2-4l4 0l5 2l-3 1zM380 172l-5 2l-4 0l0-3l5-4zM352 156l-5 6l-5 1l0-6zM299 142l-4-1l-3-6l5 0l4 2zM303 160l-3 2l-4 1l1-4l3-2zM356 175l-5-1l-4-4l4-1l3-1l2 2zM428 189l-2-5l2-2l3 1l1 3zM340 227l-1 2l-2 2l-2-1l0-3l2 0zM347 190l0 2l-1 3l-3-3l-1-2zM375 250l-7-1l-4-4l5-1l5 0zM320 247l0-3l0-3l4 2l1 4zM356 216l2-2l4-2l1 4l-2 4zM302 198l4 1l2 3l-4-1zM302 191l-3 3l-4-3l3-2zM279 203l5 2l2 2l-4 1l-2-1zM285 209l-1-3l2-4l2 5zM324 208l5 0l4 2l-2 2l-5 1zM335 238l4 1l3 2l-3 2l-4-1zM328 246l0-4l2-2l4 3l1 4zM370 220l-5-1l-1-5l7 2zM429 243l-3 1l-3-2l2-2l4-2zM287 213l-2-2l-1-1l2-1l3-2l0 3zM280 213l4 3l2 7l-7-2zM395 199l-7-3l3-5l4 3zM273 213l-4 0l-4 0l4-4l5-1zM391 226l4-1l2 2l-1 2l-3 2l-1-3zM276 210l-5-3l1-5l4 3l3 1zM411 219l1-5l4-2l1 5zM310 252l1-4l5-4l1 5zM297 240l-2 3l-3 2l-3-3l3-4zM304 240l6 1l0 3l-4-1zM287 242l0-3l2-2l3 3l0 3l-3-1zM427 255l1 4l-1 4l-4-3l1-4zM221 282l4 5l-2 4l-5-4zM216 270l2 5l-5 4l-1-4l0-5zM224 275l-3 4l-3 2l-3-5l4-4zM206 261l-7 0l-4-2l6-2zM250 276l1-2l-1-3l5 1l2 0l-2 4zM302 298l-3-4l0-5l6 2l1 4zM313 275l-5 3l-6 1l1-6l7-2zM299 243l4-4l4-1l1 4l-3 4zM314 293l0-5l2-4l2 2l3 5l-2 1zM317 297l-7 1l-3-4l6-2zM340 301l-1-3l2-2l2 2l0 3zM412 300l-4-3l1-3l3 0l4 3zM331 301l-6 3l-7-2l4-3zM330 303l-1 5l-6 0l1-4zM362 250l-5-3l4-5l3 5zM370 300l-5-3l2-6l4 5zM418 297l-4-3l-1-4l5 0l3 4zM310 304l4-2l4-2l0 5l-3 3zM272 288l2 3l-1 6l-5-2l-1-5zM352 317l3-5l5-2l-1 5l-2 2zM300 279l4 1l2 2l-4 1zM403 255l4-2l6 2l-2 3l-7 3zM271 303l2-2l5-2l-1 2l-1 4zM349 241l-2 2l-4 2l0-3l0-4l2 1zM415 270l-3-4l6-4l0 6zM368 276l2 4l-2 5l-5-4l1-5zM365 277l-3 4l-4 3l-1-4l0-5zM381 301l5 1l-1 4l-4-2zM378 297l1-3l4-4l1 4l2 2l-3 1zM419 292l4-3l3 3l-2 2l-5 1zM401 298l2-3l2-2l2 5l0 1l-4 0zM194 336l-1 4l-7 1l1-4l4-3zM175 309l-2 0l-3 0l1-3l2-2l1 3zM181 353l3 2l2 2l-3 1l-3 2l0-3zM134 300l4 5l-4 4l-4-3zM118 303l5 0l3 3l-4 2l-5-1zM195 353l4 6l-1 4l-4-2l-4-2zM231 341l-2-2l-1-3l2 0l3 0l-1 3zM192 331l5-3l4 3l-5 2zM191 331l-4-4l-2-4l5 1l6 2zM268 345l3-3l4 2l-4 3zM287 323l-3 2l-4-1l2-2l3-2zM242 317l2 3l2 3l-4 1l-5 0l2-4zM238 321l4 0l3-1l1 3l-3 4l-3-2zM253 321l4 0l3 1l-2 3l-2 2l-2-3zM344 346l4 0l2 4l-4 1l-5-2zM354 349l0 2l-4 2l0-4zM348 344l0 2l0 3l-5-1l-3-2l3-1zM310 310l-1-4l-1-2l4 1l3 0l-1 2zM297 339l3-1l3 1l-1 2l-4 1zM338 298l-4 4l-3 0l1-3zM369 335l4-4l5-1l-1 5l-5 3zM371 342l-1 4l-4 1l1-3zM378 343l2 1l1 4l-4-1l-2-1zM372 327l2-2l4 0l0 3l-5 2zM353 365l-3 3l-5 1l0-5l3-2zM359 400l5 1l3 1l-1 5l-3 3l-3-4zM360 382l0-4l3-3l2 2l2 4l-4 0zM345 399l-2-4l3-2l1 3zM377 347l-5 0l-4-3l4-2l3 0zM261 367l4 4l-4 4l-2-2l-2-6z"/><path fill="#3b6626" d="M299 62l4 1l3 4l-5-1zM340 69l1 4l-3 4l-2-3l0-4zM282 95l3-2l1 0l2 2l-1 1l-3 0zM253 136l2-2l3-1l0 3l-2 3zM253 129l2-5l4-3l3 4l0 4zM355 140l0-4l2-3l4 2l1 5zM277 151l3-3l4-2l1 5l0 4l-3-2zM317 119l1-2l5-1l-1 3l-4 2zM335 130l6 2l3 6l-8-2zM382 137l3-3l4-1l1 4l1 3l-5-1zM225 188l0 2l-4 1l0-2l0-3l2 1zM247 194l4-1l4 5l-5 1l-5-1zM243 195l-1 2l-5 0l0-3l4-2zM273 207l-1-5l1-4l6 4l0 5zM287 214l-6 2l-4-3l6-2zM254 196l0 4l-3 3l-1-3l0-3zM346 175l5 2l4 2l-5 2l-3-2zM290 200l2 6l-4 3l-4-3l-1-4zM311 167l-2 3l-8 0l3-4zM301 197l-7 1l-6-1l7-4zM335 156l1-5l3-2l2 5l-1 2zM329 158l1-4l1-3l4 1l5 3l-6 3zM326 186l-1-6l3-3l4 4l0 5zM426 165l0 4l-5 3l-1-5l0-3zM432 168l-3 0l-2-1l2-2l3 1zM407 212l-4 2l-3-1l1-3l4-2zM315 248l3-2l2-2l3 4l2 2l-5 1zM390 196l0 3l-1 5l-3-3l0-4zM430 244l0 2l0 3l-4-1l-3 0l4-3zM433 234l-5 3l-3 0l1-4l3-2zM428 239l0 2l-3 3l-1-2l-1-3zM276 221l3-3l6 2l-5 4zM415 197l4 4l0 5l-5-2l-2-5zM370 192l5-1l4 2l-2 3l-4 3l-1-5zM427 239l-2 5l-5 2l0-6zM359 200l-4-3l-3-4l7 0l3 3zM284 222l4 6l-4 4l-4-4zM296 194l4-2l5 0l-4 4zM311 188l2-3l3-3l2 3l1 3l-4 0zM399 206l-2 3l-4 1l1-2l1-4zM395 208l-1-3l3-4l2 4zM276 228l4-4l4 0l0 5l-6 3zM272 216l-1 5l-2 3l-4-3l1-4zM306 234l-4-1l-3-1l0-2l4-3l1 3zM301 244l-3 4l-2 4l-3-3l-3-4l6 0zM286 236l4 1l1 4l-4 0l-2 0l0-3zM286 237l0-4l5-3l0 3l0 4zM290 238l0 3l-1 3l-2-2l-2-2zM467 247l-4 6l-4 1l-2-5l6-3zM465 238l-5-1l-2-2l3-1l4 1zM241 273l-1 3l-3 3l-2-4l0-3zM223 297l-1-4l3-3l2 4zM239 265l0 3l-4 2l-1-3l1-3zM217 254l2 5l-4 5l-4-3l-1-1l3-4zM253 275l-1 4l-2 4l-4-5l-2-2l5-2zM250 279l3 1l2 2l-3 1l-3 0l0-2zM262 266l3-4l6-1l0 5l-1 4l-6-3zM269 258l3 4l-3 3l-1-3zM279 237l2 5l-2 5l-4-6zM313 274l1 3l-5 5l-1-5zM350 298l2 4l-5 4l-1-4l0-3zM312 278l-2 2l-1 1l-3-1l0-3l2 0zM336 282l4 1l5 0l-3 3l-3 4l-1-4zM317 298l4 3l0 4l-4 0l-3-3zM344 270l1-3l4-3l1 4l0 3l-2-1zM403 273l-5 1l-7-2l4-2l5-3zM330 316l-5-4l1-4l6 2zM270 263l1 2l1 3l-2 0l-3-1l1-3zM308 312l-1-1l-1-3l3-1l3 1l-1 2zM276 305l6 1l6 4l-8 1zM384 293l-4 1l-3-2l3-3zM313 298l0-4l4-2l2 3l-2 5zM409 299l-4 5l-5 0l1-6l4-1zM398 301l-4 2l-7-1l4-4l5-1zM185 312l5 3l0 5l-3 0l-6 0l3-5zM165 305l-4-7l1-5l4 4l3 2zM166 345l-4-4l0-3l4 2l2 3zM149 325l-5 0l-2-2l2-2l4 0zM177 344l0-3l-4-3l4-2l5-2l-1 6zM145 320l3-5l7-2l-1 4l-4 4zM168 320l0-6l5-3l1 6l-2 4zM142 302l0-4l7-1l-2 4l-2 2zM193 333l4-2l3 1l-1 2l-3 2zM146 294l4 2l0 5l-4-2l-2-3zM250 336l2-2l3-1l1 3l-3 4zM277 312l-3 2l-4 1l0-3l1-3l3 2zM244 302l0-3l6-4l1 4l3 4l-6 0zM262 318l-3 0l-3-1l1-2l4-1zM258 290l3-5l7-1l-2 5l-2 2zM297 331l4 1l1 3l-5-1l-1 0zM291 361l3 1l5 2l-5 2l-5 1l2-3zM285 350l1-3l6 1l-2 2l-2 2zM366 307l2 4l-4 5l-4-3l-1-1l3-3zM321 336l-4-5l2-4l4 3l1 2zM359 330l-5-1l0-7l7 3zM361 313l6 0l2 5l-4 0zM335 316l-1-5l0-3l6 2l1 4zM316 295l-3 3l-4 0l0-3l2-4zM345 346l-3 1l-3-3l2-2l5 0zM352 325l-3 4l-4 0l1-3zM346 325l0-5l2-3l4 5l-2 3zM362 321l-4-4l0-5l7 3l3 1zM333 331l3 2l1 4l-4-1l-3-2zM366 392l-5 1l-4-1l3-5l6-1zM356 384l0-3l2-2l2 3l-2 2zM365 376l4-5l5-3l0 3l2 4l-7 0zM389 343l-5 4l-6-3l4-3zM350 369l-3 3l-4 1l1-3l-1-5l5 3zM311 358l6 2l1 5l-5-2z"/><path fill="#2f542c" d="M271 39l2 3l1 4l-4-1l-4 1l0-4zM306 106l2-2l4 0l-1 3l-3 1zM296 87l4 0l5 2l-2 3l-5 2zM251 119l4-1l2 4l-5-1zM316 132l-6-1l-5-4l8-1zM280 141l-4 0l-3-3l6-1zM319 134l3 3l-3 5l-3-4zM284 148l5 0l3 1l-2 1l-3 2zM312 120l2-3l3-2l3 3l-1 3zM357 132l-1 2l-2 3l-3-1l-3-2l4-2zM392 145l-5-3l-1-4l5 1l3 1zM383 152l3-4l5 0l-2 4zM253 192l-1 4l-5 4l-1-5l1-3zM360 188l-7 2l-3-3l5-3zM321 187l-2 3l-2 2l-1-2l-1-4zM267 184l-2-3l-1-3l5 2l1 2zM280 180l-3 0l-6-2l2-3l7-2zM262 170l3-5l3-2l1 5l-3 3zM342 171l-6 1l-3-2l0-2l1-3l4 2zM322 192l5-1l6 1l-4 3l-4 1zM322 175l1 4l-2 4l-3-2l-2-4zM420 178l5 0l1 3l-6 0zM428 179l2 1l4 2l-3 1l-1 2l-2-3zM424 158l1-3l1-3l2 2l2 3l-3 1zM344 200l0-5l1-2l3 2l-1 4zM374 187l0-3l1-2l3 0l2 3l-3 1zM335 243l0-3l1-3l4 2l3 3l-3 1zM356 212l-3-3l4-5l2 1l3 4zM300 210l0-4l5-1l-2 3zM288 225l-5-1l-3-3l3-2l6 1zM304 252l3-3l4 0l-1 4l-2 3zM390 251l-1-5l5-3l1 5zM367 204l1 3l-4 2l0-4zM363 239l-4-2l0-5l4 1l4 4zM422 244l2-2l3-1l0 2l1 4l-3-1zM336 250l-1-1l-2-2l2-1l2-1l1 3zM368 211l-2 4l-5 2l1-5l2-4zM276 208l-1 2l-2 2l-2-3l0-1l2-1zM351 188l4 2l6 4l-6 1l-4 0zM374 177l-1 6l-4 1l-1-4l1-4zM287 188l3-3l4-1l0 5l-1 2zM375 213l0 2l1 3l-6 0l-4 0l5-4zM284 225l-6 0l-1-4l5 0zM293 228l-4 4l-4 0l1-5zM286 245l-3-4l0-4l5 1l3 3zM319 205l-3-1l-3-1l2-3l6 0zM279 234l3-2l3-1l1 3l-3 2zM216 279l6 2l3 4l-4 1l-2 2l-2-4zM235 281l6 0l3 4l-5 1zM257 267l-1 5l-3 4l-2-4l-1-4zM251 255l5 4l1 6l-6-2l-5-2zM271 247l5-3l4-1l-2 5l-3 3l-2-2zM267 275l0 4l-2 2l-2-3zM383 316l-5-3l-3-4l5-1l4 0l0 4zM281 247l-2 5l-5 0l1-4zM368 252l-2 3l-7-1l3-2l3-4zM395 291l-6 1l-6-2l5-4l7-1zM368 247l-3-1l-4-2l4-1l3-1zM304 264l1-6l2-1l4 3l-1 3zM377 302l-4 2l-5-2l3-3l2-3l2 4zM384 278l2-3l4 0l-1 3zM264 259l4 5l-4 6l-3-5zM320 282l-5-2l-3-4l7 1zM340 267l3 1l2 2l-3 3l-2 1l-2-4zM394 277l-4-4l-2-3l4-2l3-2l0 6zM416 263l3-1l6 3l-3 1l-7 1zM330 262l-7 2l-5-3l6-2zM416 310l-5-3l1-4l4 1zM389 283l1 4l2 3l-4 0l-4 2l1-5zM199 311l4 3l0 2l-3 2l-6-3l4-2zM194 312l2 3l-1 3l-3-2l-2-2zM205 345l-4-5l2-4l5 3zM159 308l7 2l1 5l-4 0l-5-2zM183 361l-4 2l-4-2l2-3l3-1zM182 315l-2-3l-3-2l4-2l3 0l1 3zM141 312l2-4l2-4l3 5l0 5zM206 346l-5-3l4-4l3 4zM194 353l2-3l4-1l-1 2l-2 3zM218 304l7 1l0 5l-4-2zM186 320l4 1l3 4l-4 1l-4-3zM278 326l-4 3l-3-1l1-2l4-1zM280 344l0-5l4-4l2 3l2 5zM289 343l2 4l-4 3l0-4zM248 311l5 0l5 3l-5 3l-4-1zM366 318l5 0l2 6l-6-1zM302 298l-5 1l-5 1l1-4l1-3l5 1zM362 316l2 5l-3 4l-3-5zM351 313l5-4l5-3l0 6l-3 4zM314 311l-2-3l1-5l5 1l4 5zM367 337l3-3l2-1l1 4l0 3l-5-3zM356 317l-3 0l-3 0l2-3l1-1l2 1zM386 330l4-1l3 0l-2 3l-2 1zM343 334l-3-3l-1-2l4 0l2 2zM369 392l0-3l3-3l1 2l3 2l-4 1zM345 397l1-2l2-5l6 4l2 2l-6 3zM360 387l2-4l3-1l0 4l-2 2zM341 387l-4-3l1-4l4 3zM373 340l2 2l3 2l-3 1l-3 0l0-2z"/><path fill="#3a6131" d="M274 56l-3-7l4-4l3 4l3 4zM274 48l-2 1l-3 0l1-3l1-2l2 1zM279 66l5-2l2-2l1 4l0 3l-4-1zM284 90l-1 5l-3 3l-4-4l-1-4zM324 89l-1 2l-2 3l-2-2l-2-2l3 0zM332 86l-4-1l1-4l3 2zM304 98l-2 3l-4-1l1-1zM312 85l-5 2l-4 2l-1-4l3-5zM303 84l-5-1l-1-3l5 0zM352 142l1-4l-1-5l5 1l3 6zM331 130l0 3l-1 2l-2 0l-3-3l3-1zM275 152l-4-4l1-5l5 1l2 3zM277 142l1 3l0 5l-7-2l-1-3zM293 146l0 4l-6 2l2-4zM315 156l3-1l3 0l-2 3l-2 1zM381 133l-3 3l-5 1l-1-3l4-5zM382 143l2 0l3 1l-3 3l-3-1zM261 195l3-3l4-3l1 5l-3 3zM251 168l0-3l6 1l-4 3zM371 181l-4-3l-1-3l4-1l4 1zM284 168l5 1l0 4l-3 0l-4-3zM329 140l-1 3l-4 3l0-3l0-3zM290 153l0-6l2-4l3 4l2 6zM338 145l-5 1l-4-1l2-4l5-1l1 2zM283 163l1-3l6-4l2 6l-4 3zM342 148l0 5l-1 4l-4-4l-1-3zM316 156l-1 3l-2 3l-3-4l2-3zM370 175l-6 1l-5-3l6-2zM445 190l0 4l-3 4l-1-4l0-5zM356 244l-1-3l3-3l2 1l1 4zM319 190l2 0l4 2l-3 2l-5 1zM403 241l-3 3l-3 3l-3-2l-2-5l6 0zM322 209l-3-1l-1-4l3 0l4 3zM292 224l2-3l6 2l-3 2zM306 195l-3-1l-4-2l4-2l5 0zM296 258l5-3l5-1l-1 5l-5 3zM365 231l-4 3l-5-2l1-4l4-2zM290 215l0-4l4-3l0 5zM293 211l0 4l-2 3l-3-3l-1-5zM270 205l2-3l3-1l0 3l-1 3l-2-2zM376 242l-2-1l0-4l4 2zM396 228l-3 3l-4 0l1-5l1-1zM364 248l-2 1l-3 1l0-2l2-2zM335 203l0-3l3-3l2 3l0 3zM272 217l-4-1l-4-5l8 0l3 3zM392 199l-3-3l2-4l2 3zM404 198l-4 3l-6-3l5-2zM389 191l1-7l8 0l-3 5zM420 203l5-1l5 1l-1 3l-3 3l-3-4zM291 227l0 5l0 3l-4-1l-4-2l3-2zM301 230l3-5l5-1l0 3l-4 6zM275 242l-3-2l-3-2l3-2l4 0l1 2zM289 235l3 3l-1 5l-4-2l-4-4zM322 212l3 3l-2 3l-3 0l-3-4zM214 254l-3-2l-1-5l4 0l3 3zM211 282l-4-1l-1-4l5 1zM225 275l3 0l4 0l-2 4l-4 2zM246 271l0-2l1-4l3 1l2 2l-2 2zM373 281l4-2l3-2l1 3l-2 4l-3-1zM344 247l1-4l3-2l1 3l2 3zM294 297l3 2l1 3l-3-1l-2 0l0-2zM366 245l5-2l5 1l-4 3l-2 2zM380 286l3-4l5 0l-3 3zM284 282l5-1l2 2l-4 3zM313 321l3-3l2-1l1 2l0 2l-2 0zM256 286l-4-1l-3-1l4-3l2-1l2 3zM271 273l2 4l-3 4l-3-2l-2-5zM344 257l4-2l4 1l-3 1zM383 274l4 1l3 1l-2 3l-4 0zM361 256l-4 1l-4-1l4-3zM391 273l-3 1l-5 0l3-2l1-3l2 2zM343 273l-7-2l-1-5l7 1zM347 277l0 4l-3 3l-3-4l3-4zM400 265l-3 5l-5 2l1-4l4-5zM267 256l6 1l4 4l-5 2l-6-4zM379 290l-5 4l-6-4l6-3zM373 302l1 3l1 4l-3 0l-5-2zM408 282l-1 2l-3 2l0-4zM369 279l4 2l2 1l-4 3l-4 0zM414 287l1 3l-2 3l-3-3zM198 318l2 1l3 2l-3 2l-4 0l1-2zM188 311l-3 1l-5 0l2-4l4-1zM188 333l7-2l6 1l-6 5l-5 1zM166 301l1-3l1-2l2 2l-1 4zM134 309l0 4l-4 2l0-4zM189 305l-3 4l-3 1l-1-4l3-2zM154 309l4 1l4 2l-2 0l-2 2l-3-2zM145 310l-3-5l3-3l3 3zM209 366l-3-3l-3-4l6 0l5 1l-3 4zM216 312l1-3l4 0l-2 4zM280 336l6 0l1 5l-4 1l-6-3zM296 319l1 5l0 3l-4-2l-3-4zM268 333l5 0l3 0l-2 6l-4 1l-2-3zM270 335l-3-5l3-3l2 4zM276 337l-7 2l-6-3l5-3l5 1zM282 318l-1 5l-4 3l-2-6l0-5zM277 326l1-3l2-3l1 4l1 3l-4 0zM341 323l-2-3l2-5l4 4zM364 309l-4 1l-4-2l2-2l5-3zM336 325l2 0l2 2l-2 2l-4 1l0-3zM322 344l3-3l3 0l-1 2l0 3l-3-1zM369 354l-1-3l0-3l3 1l2 1l-1 2zM319 327l2 3l0 3l-5-1l-3-2l3-2zM349 343l-4 1l-6-3l5-3l5 1zM333 320l1-4l6-4l2 5l-2 3zM323 318l4 2l1 1l-2 2l-4-3zM267 306l7 3l4 4l-6 1l-3 3l-2-5zM353 301l-3 3l-3 0l0-4l4-2zM345 323l4 2l2 6l-6-1l-5-3zM352 330l0 4l0 2l-5 0l-4-2l4-4zM292 357l4 0l3 2l-2 2l-5-2zM367 330l-3 3l-4 2l-1-3l2-4zM390 312l3-2l4 1l-2 2l-4 1zM387 326l2 2l2 3l-4 0l-5-1l2-2zM349 382l2-3l6-1l-1 4l-4 4zM356 413l-1-4l4-3l2 3l-1 5zM345 386l0-2l3-4l3 3l-2 5zM331 386l4-3l6-1l0 5l-5 4z"/><path fill="#4f8033" d="M390 134l3 2l4 2l-5 2l-5-1zM374 158l2 4l-1 2l-2 0l-5-2l4-2zM332 160l5-1l3 3l-4 2l-4 0zM344 211l3-6l3-3l3 6l-2 4zM357 175l-2 3l-2 3l-2-4l-1-3l4 0zM283 160l0 2l-4 3l-1-2l-1-4zM282 152l2-1l3-1l1 1l1 3l-4 0zM323 252l4-1l4 1l-3 3l-3 1zM401 208l4 2l3 7l-7 0l-5-4zM399 222l-4 1l-4-1l4-3zM306 240l2 5l0 3l-4-1l-5-1l4-3zM282 237l0-4l-1-5l6 2l4 5l-5 0zM300 248l-2 1l-3-2l1-1l5-1zM455 232l1 4l-2 6l-4-5l0-5zM266 261l3-3l1-1l3 1l-2 4zM387 283l2 3l-1 3l-3-1l-3-2zM335 308l-2 3l-4 2l0-2l-2-3l4 0zM277 284l-4-1l-1-4l5 2zM348 257l-2 3l-4 0l1-1l2-3zM281 252l-4-3l2-3l2 2zM387 274l-2 2l-4-1l1-2l2-1zM168 345l7-2l3 4l-4 2l-4-1zM248 328l0-5l6-3l0 5zM353 350l-1 1l-2 3l-1-2l0-3zM285 358l6 1l1 3l-6 0zM353 315l0-2l1-3l2 2l1 2zM298 332l3-1l4-1l-1 4l-2 5l-3-5zM352 304l0-4l4-5l3 5l1 4z"/><path fill="#5e953b" d="M315 58l-2 1l-2-1l1-2l4 0zM306 130l-3-3l1-4l5 0l3 6zM204 193l4-4l3-2l2 5l-4 5zM359 195l-4 0l-3-8l6 3zM355 179l-2-4l2-4l4 2l2 4zM444 188l0 3l0 2l-3-2l-1-1zM296 242l4-3l2-2l2 3l1 4l-3-1zM280 247l1-3l4-1l0 1l1 3l-4 1zM346 208l4 3l2 6l-5-1l-3-3zM347 223l-6 2l-5 0l3-4l1-2l3 2zM356 228l2-3l8-1l-4 5zM280 238l-2 3l-4 1l2-4zM377 283l-4 0l-4-3l5-1l3 1zM396 257l-3-2l0-3l4 2zM175 322l-3-1l-3-3l5-1l3 1zM165 309l-5 1l-3-4l4-2l4 3zM156 303l-3-2l-2-3l3-1l4-1l0 5zM144 306l2 3l-4 4l-1-4zM299 313l-4-1l0-3l3-1l3 1l-1 2zM314 294l-2 4l-4 2l-2-3l1-5zM285 307l-3-3l-1-4l4-1l5 0l-3 5zM341 311l1 4l-2 4l-5-2l0-5zM376 323l0-4l2-2l3 2l0 3zM336 330l-4 2l-4 0l3-3l3-2zM349 322l-2-1l0-3l1 0l4 1l-2 2zM397 318l-2-2l-2-3l6-1l4 2l-1 2zM351 397l0-2l1-6l4 3l3 2l-5 3zM247 379l2-3l5 0l-4 3z"/><path fill="#6ba344" d="M270 43l-3-3l3-2l1 4zM275 67l5 2l0 2l-2 2l-4-2zM313 106l-7 3l-3-2l3-4l5 0zM288 144l-5 2l-8 0l5-4zM317 146l0 2l-1 2l-3-1l-1-2zM430 174l-4-2l-4-4l6-1l3 0l0 5zM413 240l-1-4l4-3l3 5zM366 215l3-3l4 0l-1 4l-1 3zM414 218l0-3l2-2l2 2l0 3zM298 194l-6-2l1-5l5 2zM398 201l-7-2l-4-2l4-3l5 1zM215 261l4-1l4 0l-2 5l-4 1zM388 283l3 3l-1 3l-3-1l-2-3zM316 287l-2 1l-3 3l-1-5l0-2l4 1zM340 286l6-2l6 2l-5 3l-5 0zM417 262l-2 3l-1 4l-4-4l2-4zM316 288l-3 2l-3-2l1-1l4-1zM305 286l3 0l5 0l0 3l0 3l-6-1zM396 322l-4 0l-1-5l4 2zM365 285l3 1l1 5l-4-2zM408 281l0 4l-7 3l1-5zM293 361l4-2l3 0l0 3l-3 2zM327 311l1 4l-6 4l0-7zM343 323l-4 3l-7 2l2-6l4-3zM383 336l0-4l1-3l3 4zM309 363l4-1l2-1l0 3l0 3l-3-2z"/><path fill="#4d7c4e" d="M297 98l3-1l5 1l-4 3l-3 1zM203 194l-5 0l-4-3l6-2l4 0zM246 186l6 6l-4 3l-4-4zM267 211l-3 1l-4-3l3-2l4-1zM295 187l3 0l4-1l-2 4l-4 1zM322 163l-2 3l-5 1l3-5zM405 154l3-1l3 0l0 2l-3 2zM306 190l4 1l4 2l-3 2l-3 0l-1-1zM282 234l-2 2l-4 0l0-2l2-4zM421 213l-1-4l-2-4l3 0l6 2l-2 2zM272 205l4 2l3 3l-4 1l-6 0zM319 194l2-5l5-1l-1 5zM269 209l5 0l3 2l-3 2l-1 1l-2-3zM340 239l-1-4l2-3l4 2l3 3l-5 2zM313 259l-3 5l-3 3l-3-5l0-5zM418 247l3 3l-1 4l-4-2zM387 304l-5 1l-1-5l4 1zM137 353l-2-2l0-3l4 0l2 2zM136 337l1-4l5-3l0 6zM307 323l-2 3l-1 1l-2-1l-4-2l5-2zM323 327l2-3l3-1l1 3l-3 3zM332 330l2 5l-3 4l-3-2l-1-5zM360 330l0 4l1 3l-5-2l-3-3l5-2zM353 407l2 2l2 2l-4 2l-3-1l0-3zM378 367l0 4l-6 4l-2-5l3-5zM341 364l-3-3l1-4l3 2zM379 338l3 1l3 4l-3 1l-5-1z"/><path fill="#7db254" d="M297 55l-2-6l5-2l1 5zM389 165l-5-2l-2-3l5 0l3 1zM300 184l4 0l5 2l-5 3l-5 1zM339 173l-4-2l2-6l4 3zM395 242l-3 0l-3-1l0-2l0-3l4 2zM279 232l4-1l3 3l-3 1l-3 1l-1-3zM298 249l-2-2l-3-2l3-3l6 0l-1 4zM360 221l2 3l-1 3l-2-1l-3 0l2-4zM417 214l1 1l4-3l0 5l0 2l-4-1zM345 185l6 2l1 4l-4 1l-5-4zM290 244l3-2l5-2l1 4l-2 3zM282 244l-2 2l-2 1l-1-2l-1-2l4 0zM338 287l3-2l2-1l1 4l0 1l-4-1zM351 307l-4 3l-6-2l3-2l5-1zM319 281l1 3l-1 4l-4-3l0-3zM352 262l1-3l3-2l4 2l0 4l-3 1zM321 266l-4 1l-4-3l4-1l4 0zM409 321l2 4l0 3l-3-1l-3-3zM197 330l6 2l1 3l-3 1l-6-2zM220 312l4-3l3 0l-1 2l-4 2zM336 332l-1-2l1-4l3 0l2 4zM379 334l-1 2l-3 2l-1-5l2-1zM350 309l1-5l7-2l-1 5l-1 2zM379 349l3-2l4-1l-1 2l0 4l-3-2zM320 367l-2 4l-6 4l0-7l2-4z"/><path fill="#8fc062" d="M266 42l4-3l7 5l-7 2zM259 125l0-6l5-3l1 3l-2 5zM306 148l4 3l-3 3l-2-2zM372 140l3-4l4 0l-1 4zM385 148l-5-2l-2-4l4 0l5 2zM187 160l6 3l0 5l-6-2zM243 188l-2 3l-5 2l1-3l1-2zM306 145l-1 4l-1 1l-2-2l-2-2l3-1zM297 183l-1-5l1-3l2 0l4 3l-4 2zM325 246l-8 1l-3-5l6 1zM318 217l-6 1l-4-1l3-3l4-4l2 5zM367 238l3-3l6 1l-1 4l-5 2zM369 237l-2 4l-5 0l3-4zM284 253l4 2l4 3l-5 2l-4-1zM280 241l-6 3l-7-1l6-5l4 0zM249 266l0-4l4-2l0 4l-1 1zM277 233l2-1l3-1l0 3l-3 2zM371 290l-4-1l-1-3l2-1l6 0l-1 2zM287 315l-2 0l-5 0l2-5l5-4l0 4zM323 296l2 5l-2 4l-3-5zM404 296l0 4l-4 2l-1-3zM187 313l-3-1l-3-2l4-1l4-1l-1 4zM210 323l6-4l4 0l-1 4l-5 3zM185 328l-3-4l1-3l5 1l3 1l-3 4zM349 337l3 2l1 3l-3 0l-2-3zM315 364l3-3l2-5l4 3l4 2l-5 4zM360 317l-4-2l-1-4l4 1l4 1zM404 311l-3 2l-4 2l1-4l3-2zM343 378l5 2l3 2l-4 2l-5-1z"/></g>
<text x="4.500" y="13.200" font-size="11.600" fill="#4f545a">perspective</text>
<rect x="2.500" y="19" width="158.500" height="94" fill="#434859"/>
<g font-size="10" fill="#d9d9d2"><text x="7.600" y="33.700" font-weight="bold" font-family="DejaVu Sans Condensed, DejaVu Sans, sans-serif" font-size="10.200" fill="#e6e5dc">POLYGONS - MODEL</text><text x="89" y="53.300" text-anchor="end" fill="#b9bab6">branches:</text><text x="95" y="53.300"><tspan font-weight="bold" font-family="DejaVu Sans Condensed, DejaVu Sans, sans-serif" font-size="10.200" fill="#e6e5dc">546,535</tspan> <tspan fill="#b9bab6">tris</tspan></text><text x="89" y="66.600" text-anchor="end" fill="#b9bab6">leaf meshes:</text><text x="95" y="66.600"><tspan font-weight="bold" font-family="DejaVu Sans Condensed, DejaVu Sans, sans-serif" font-size="10.200" fill="#e6e5dc">284,656</tspan> <tspan fill="#b9bab6">tris</tspan></text><text x="89" y="79.900" text-anchor="end" font-weight="bold" font-family="DejaVu Sans Condensed, DejaVu Sans, sans-serif" font-size="10.200" fill="#e6e5dc">TOTAL:</text><text x="95" y="79.900" fill="#e0dfd6">831,191</text><text x="89" y="106.500" text-anchor="end" fill="#b9bab6">bones:</text><text x="95" y="106.500" fill="#e0dfd6">42</text></g>
<g stroke-width="1.100" fill="none"><path d="M572.5 48l0 -15" stroke="#2846d8"/><path d="M572.5 48l11 -3" stroke="#a9b26a"/><path d="M572.5 48l12 3.500" stroke="#e0743a"/></g><text x="570.0" y="31" font-size="7.500" fill="#2846d8">z</text><text x="584.5" y="46.5" font-size="7.500" fill="#b3b56a">y</text><text x="585.0" y="56.5" font-size="7.500" fill="#e0743a">x</text>
<circle cx="623" cy="35" r="10.500" fill="#7b8794"/><circle cx="621" cy="32" r="7" fill="#8e9aa6" opacity=".7"/><ellipse cx="626" cy="29" rx="4.500" ry="5" fill="#aeb8c2"/><ellipse cx="626.5" cy="27" rx="3" ry="2.600" fill="#d5dbe1"/>
<text x="633.5" y="58.5" font-size="8.200" text-anchor="middle" fill="#8f96a0">2.00</text>
<g fill="#75818f"><ellipse cx="612" cy="92" rx="8" ry="6.500" transform="rotate(-25 612 92)"/><ellipse cx="627.5" cy="84" rx="4" ry="8"/><ellipse cx="618" cy="110" rx="5.500" ry="8" transform="rotate(15 618 110)"/><ellipse cx="633" cy="98" rx="11" ry="9"/></g><ellipse cx="632" cy="96" rx="8" ry="6" fill="#8895a3"/><circle cx="637" cy="99" r="3" fill="#697582"/>
<rect x="318.500" y="536.500" width="336" height="17" fill="#3b3933" opacity=".93"/>
<text x="321.500" y="549" font-size="10" fill="#d6d5cc" textLength="330" lengthAdjust="spacingAndGlyphs">[8 cpu threads], Last Compute 616.72 ms (draw time 357.36 ms)</text>
</svg>
<!--VP_END-->
<!-- ===== right dock: Generation ===== -->
<div class="vline" style="left:1034px;top:21px;height:716px"></div>
<div class="vline" style="left:1037px;top:21px;height:716px"></div>
<div class="abs" style="left:1035px;top:22px;width:2px;height:715px;background:#4b4c4e"></div>
<div class="dtitle" style="left:1038px;top:21px;width:328px"><b style="left:13px">Generation</b><svg class="abs" style="left:296px;top:5px" width="26" height="11" viewBox="0 0 26 11"><path d="M3.500 1h6v5.200h-2" fill="none" stroke="#f1f1f1" stroke-width="1"/><path d="M3 .700h7" stroke="#f1f1f1" stroke-width="1.400"/><rect x=".500" y="4" width="6.500" height="5" fill="none" stroke="#f1f1f1" stroke-width="1"/><path d="M0 3.900h7.500" stroke="#f1f1f1" stroke-width="1.600"/><path d="M16 1 L23.600 8.800M23.600 1 L16 8.800" stroke="#fafafa" stroke-width="1.600"/></svg></div>


<div class="btn tb dd rbt" style="left:1043px;top:51px;width:65px"><svg viewBox="0 0 24 24" style="left:9px;margin-left:0">
  <path d="M7 22 L8 4 L10.500 4 L11 10 L14.500 3 L16.500 4 L12.500 13 L12.500 22Z" fill="#a87693" stroke="#2b2c2e" stroke-width=".8"/>
  <path d="M15.200 8.500h3.600v4.200h4.200v3.600h-4.200v4.200h-3.600v-4.200H11v-3.600h4.200z" fill="#fff" stroke="#222" stroke-width=".9"/></svg><em style="left:34px">Add</em></div>
<div class="btn tb dd rbt dis" style="left:1111px;top:51px;width:81px"><svg viewBox="0 0 24 24" style="left:7px;margin-left:0">
  <circle cx="12" cy="12" r="10" fill="none" stroke="#8e8e8e" stroke-width="2"/>
  <path d="M8.500 4.500 L8.500 19 L12 15.500 L14.500 21 L17 20 L14.500 14.500 L19 14.500Z" fill="#b9b9b9" stroke="#4a4a4a" stroke-width=".8"/></svg><em style="left:34px">Actions</em></div>
<div class="btn tb rbt" style="left:1195px;top:51px;width:98px"><svg viewBox="0 0 24 24" style="left:8px;margin-left:0;width:22px;height:22px;top:4px">
  <rect x="2.500" y="3" width="18.500" height="18.500" fill="#f7f7f7" stroke="#2a2a2a" stroke-width="1"/>
  <g fill="#151515"><circle cx="7" cy="7.500" r="1.700"/><circle cx="16.500" cy="7.500" r="1.700"/><circle cx="11.800" cy="12.200" r="1.700"/><circle cx="7" cy="17" r="1.700"/><circle cx="16.500" cy="17" r="1.700"/></g></svg><em style="left:35px">Randomize</em></div>
<div class="btn tb dd rbt" style="left:1043px;top:86px;width:83px"><svg viewBox="0 0 24 24" style="left:9px;margin-left:0;width:22px;height:22px;top:3px">
  <g transform="translate(12 11.500)"><g fill="#4b9be3"><rect x="-2.200" y="-11.500" width="4.400" height="23" rx="1"/><rect x="-2.200" y="-11.500" width="4.400" height="23" rx="1" transform="rotate(36)"/><rect x="-2.200" y="-11.500" width="4.400" height="23" rx="1" transform="rotate(72)"/><rect x="-2.200" y="-11.500" width="4.400" height="23" rx="1" transform="rotate(108)"/><rect x="-2.200" y="-11.500" width="4.400" height="23" rx="1" transform="rotate(144)"/></g>
  <circle r="8.300" fill="#4b9be3"/><circle r="5.400" fill="#6b727b"/></g></svg><em style="left:34px">Options</em></div>
<svg class="abs" style="left:1042px;top:127px" width="320" height="576" viewBox="0 0 320 576" font-family="DejaVu Sans, Liberation Sans, sans-serif">
<defs><filter id="nsh" x="-40%" y="-40%" width="180%" height="190%"><feGaussianBlur stdDeviation="2.200"/></filter><symbol id="nLeaf" viewBox="-16 -16 32 32"><circle r="14.400" fill="#88a963" stroke="#050505" stroke-width="2.600"/><path d="M-9.700 5.800 C-8 4.500 -7.500 3.500 -7.500 2 C-8.500 -3 -4.500 -8 1.500 -7.800 C5 -7.600 7.500 -5.500 9.700 -4 C8.500 -1 8 4 3.500 6.500 C0 8.300 -4 7 -6 4.500 C-7 5 -8.500 6 -9.200 6.600Z" fill="#fdfdf8"/><path d="M-6.500 4 C-2 1 3 -2 8 -3.800" fill="none" stroke="#88a963" stroke-width=".9"/></symbol><symbol id="nBr" viewBox="-16 -16 32 32"><circle r="14.400" fill="#8f2b10" stroke="#050505" stroke-width="2.600"/><path d="M-2.600 13.800 C-2.600 8 -4 3 -6 0 L-11.500 -5 L-9.500 -7.500 L-4.500 -3.500 L-4.800 -11 L-1.800 -11.500 L-.500 -3.500 L1.500 -1.500 L3.500 -6 L2.800 -12 L5.500 -12.300 L6.300 -7 L10 -10 L12 -7.800 L7 -3 L5 2 L9.500 -1 L11 1.500 L5.300 6 C5.200 9 5.800 11.500 6.800 13.500 C3.500 14.700 0 14.700 -2.600 13.800Z" fill="#fbfaf6"/><path d="M-1 6 l3 .800M-.500 9.500 l3.500 .600" stroke="#8f2b10" stroke-width=".8"/></symbol><symbol id="nTree" viewBox="-16 -16 32 32"><circle r="14.400" fill="#3f7fd0" stroke="#050505" stroke-width="2.600"/><path d="M-1.500 13.800 C-.800 9 -.800 6 -1.500 3.500 C-5 5.500 -10.500 4 -10.500 -.500 C-12 -5 -8 -8.500 -5 -7.500 C-3.500 -11.500 3.500 -11.500 5 -7.500 C9 -8.500 12 -4.500 10.500 -.500 C10.500 4 5 5.500 1.500 3.500 C.800 6 .800 9 1.500 13.800Z" fill="#f7fbff"/><g fill="#3f7fd0"><circle cx="-5" cy="-2" r=".9"/><circle cx="4.500" cy="-3" r=".9"/><circle cx="0" cy="-6" r=".9"/><circle cx="-7" cy="1" r=".8"/><circle cx="7" cy="0.500" r=".8"/><path d="M0 -3 l0 5" stroke="#3f7fd0" stroke-width=".9"/></g></symbol></defs>
<rect x="0" y="0" width="320" height="576" fill="#8c9db1"/>
<rect x="0" y="494" width="320" height="82" fill="#6f7f92"/>
<path d="M28.0 74.5 C28.0 100.5 45.0 96.5 45.0 122.5" fill="none" stroke="#5d6b7c" stroke-width="2.200" opacity=".55" transform="translate(.6 .8)"/>
<path d="M28.0 74.5 C28.0 100.5 45.0 96.5 45.0 122.5" fill="none" stroke="#f6f7f8" stroke-width="1.300"/>
<path d="M28.0 146.5 C28.0 172.5 117.0 168.5 117.0 194.5" fill="none" stroke="#5d6b7c" stroke-width="2.200" opacity=".55" transform="translate(.6 .8)"/>
<path d="M28.0 146.5 C28.0 172.5 117.0 168.5 117.0 194.5" fill="none" stroke="#f6f7f8" stroke-width="1.300"/>
<path d="M100.0 146.5 C100.0 172.5 117.0 168.5 117.0 194.5" fill="none" stroke="#5d6b7c" stroke-width="2.200" opacity=".55" transform="translate(.6 .8)"/>
<path d="M100.0 146.5 C100.0 172.5 117.0 168.5 117.0 194.5" fill="none" stroke="#f6f7f8" stroke-width="1.300"/>
<path d="M100.0 218.5 C100.0 244.5 189.0 240.5 189.0 266.5" fill="none" stroke="#5d6b7c" stroke-width="2.200" opacity=".55" transform="translate(.6 .8)"/>
<path d="M100.0 218.5 C100.0 244.5 189.0 240.5 189.0 266.5" fill="none" stroke="#f6f7f8" stroke-width="1.300"/>
<path d="M172.0 218.5 C172.0 244.5 189.0 240.5 189.0 266.5" fill="none" stroke="#5d6b7c" stroke-width="2.200" opacity=".55" transform="translate(.6 .8)"/>
<path d="M172.0 218.5 C172.0 244.5 189.0 240.5 189.0 266.5" fill="none" stroke="#f6f7f8" stroke-width="1.300"/>
<path d="M172.0 290.5 C172.0 316.5 189.0 312.5 189.0 338.5" fill="none" stroke="#5d6b7c" stroke-width="2.200" opacity=".55" transform="translate(.6 .8)"/>
<path d="M172.0 290.5 C172.0 316.5 189.0 312.5 189.0 338.5" fill="none" stroke="#f6f7f8" stroke-width="1.300"/>
<path d="M244.0 290.5 C244.0 316.5 261.0 312.5 261.0 338.5" fill="none" stroke="#5d6b7c" stroke-width="2.200" opacity=".55" transform="translate(.6 .8)"/>
<path d="M244.0 290.5 C244.0 316.5 261.0 312.5 261.0 338.5" fill="none" stroke="#f6f7f8" stroke-width="1.300"/>
<path d="M172.0 362.5 C172.0 388.5 261.0 384.5 261.0 410.5" fill="none" stroke="#5d6b7c" stroke-width="2.200" opacity=".55" transform="translate(.6 .8)"/>
<path d="M172.0 362.5 C172.0 388.5 261.0 384.5 261.0 410.5" fill="none" stroke="#f6f7f8" stroke-width="1.300"/>
<path d="M244.0 362.5 C244.0 388.5 261.0 384.5 261.0 410.5" fill="none" stroke="#5d6b7c" stroke-width="2.200" opacity=".55" transform="translate(.6 .8)"/>
<path d="M244.0 362.5 C244.0 388.5 261.0 384.5 261.0 410.5" fill="none" stroke="#f6f7f8" stroke-width="1.300"/>
<path d="M244.0 434.5 C244.0 460.5 261.0 456.5 261.0 482.5" fill="none" stroke="#5d6b7c" stroke-width="2.200" opacity=".55" transform="translate(.6 .8)"/>
<path d="M244.0 434.5 C244.0 460.5 261.0 456.5 261.0 482.5" fill="none" stroke="#f6f7f8" stroke-width="1.300"/>
<circle cx="36.5" cy="98.5" r="2.600" fill="#a9bdd2" stroke="#35414f" stroke-width="1"/>
<text x="41.0" y="101.1" font-size="6.800" fill="#dfe7ef">15,588</text>
<circle cx="72.5" cy="170.5" r="2.600" fill="#a9bdd2" stroke="#35414f" stroke-width="1"/>
<text x="77.0" y="173.1" font-size="6.800" fill="#dfe7ef">4,677</text>
<circle cx="108.5" cy="170.5" r="2.600" fill="#a9bdd2" stroke="#35414f" stroke-width="1"/>
<text x="113.0" y="173.1" font-size="6.800" fill="#dfe7ef">447</text>
<circle cx="144.5" cy="242.5" r="2.600" fill="#a9bdd2" stroke="#35414f" stroke-width="1"/>
<text x="149.0" y="245.1" font-size="6.800" fill="#dfe7ef">447</text>
<circle cx="180.5" cy="242.5" r="2.600" fill="#a9bdd2" stroke="#35414f" stroke-width="1"/>
<text x="185.0" y="245.1" font-size="6.800" fill="#dfe7ef">117</text>
<circle cx="180.5" cy="314.5" r="2.600" fill="#a9bdd2" stroke="#35414f" stroke-width="1"/>
<text x="185.0" y="317.1" font-size="6.800" fill="#dfe7ef">165</text>
<circle cx="252.5" cy="314.5" r="2.600" fill="#a9bdd2" stroke="#35414f" stroke-width="1"/>
<text x="257.0" y="317.1" font-size="6.800" fill="#dfe7ef">19</text>
<circle cx="216.5" cy="386.5" r="2.600" fill="#a9bdd2" stroke="#35414f" stroke-width="1"/>
<text x="221.0" y="389.1" font-size="6.800" fill="#dfe7ef">28</text>
<circle cx="252.5" cy="386.5" r="2.600" fill="#a9bdd2" stroke="#35414f" stroke-width="1"/>
<text x="257.0" y="389.1" font-size="6.800" fill="#dfe7ef">3</text>
<circle cx="252.5" cy="458.5" r="2.600" fill="#a9bdd2" stroke="#35414f" stroke-width="1"/>
<text x="257.0" y="461.1" font-size="6.800" fill="#dfe7ef">1</text>
<ellipse cx="37.0" cy="66.5" rx="14" ry="13.500" fill="#1b222b" opacity=".55" filter="url(#nsh)"/>
<ellipse cx="37.0" cy="138.5" rx="14" ry="13.500" fill="#1b222b" opacity=".55" filter="url(#nsh)"/>
<ellipse cx="109.0" cy="138.5" rx="14" ry="13.500" fill="#1b222b" opacity=".55" filter="url(#nsh)"/>
<ellipse cx="109.0" cy="210.5" rx="14" ry="13.500" fill="#1b222b" opacity=".55" filter="url(#nsh)"/>
<ellipse cx="181.0" cy="210.5" rx="14" ry="13.500" fill="#1b222b" opacity=".55" filter="url(#nsh)"/>
<ellipse cx="181.0" cy="282.5" rx="14" ry="13.500" fill="#1b222b" opacity=".55" filter="url(#nsh)"/>
<ellipse cx="253.0" cy="282.5" rx="14" ry="13.500" fill="#1b222b" opacity=".55" filter="url(#nsh)"/>
<ellipse cx="181.0" cy="354.5" rx="14" ry="13.500" fill="#1b222b" opacity=".55" filter="url(#nsh)"/>
<ellipse cx="253.0" cy="354.5" rx="14" ry="13.500" fill="#1b222b" opacity=".55" filter="url(#nsh)"/>
<ellipse cx="253.0" cy="426.5" rx="14" ry="13.500" fill="#1b222b" opacity=".55" filter="url(#nsh)"/>
<ellipse cx="253.0" cy="498.5" rx="14" ry="13.500" fill="#1b222b" opacity=".55" filter="url(#nsh)"/>
<use href="#nLeaf" x="20.0" y="46.5" width="32" height="32"/>
<text x="36.0" y="43.0" font-size="11" text-anchor="middle" fill="#272a2e">Leaf</text>
<use href="#nBr" x="20.0" y="118.5" width="32" height="32"/>
<text x="36.0" y="115.0" font-size="11" text-anchor="middle" fill="#272a2e">Twigs</text>
<use href="#nLeaf" x="92.0" y="118.5" width="32" height="32"/>
<text x="108.0" y="115.0" font-size="11" text-anchor="middle" fill="#272a2e">Leaf 2</text>
<use href="#nBr" x="92.0" y="190.5" width="32" height="32"/>
<text x="108.0" y="187.0" font-size="11" text-anchor="middle" fill="#272a2e">Little 2</text>
<use href="#nLeaf" x="164.0" y="190.5" width="32" height="32"/>
<text x="180.0" y="187.0" font-size="11" text-anchor="middle" fill="#272a2e">Leaf 3</text>
<use href="#nBr" x="164.0" y="262.5" width="32" height="32"/>
<text x="180.0" y="259.0" font-size="11" text-anchor="middle" fill="#272a2e">Little</text>
<use href="#nBr" x="236.0" y="262.5" width="32" height="32"/>
<text x="252.0" y="259.0" font-size="11" text-anchor="middle" fill="#272a2e">Root Twigs</text>
<use href="#nBr" x="164.0" y="334.5" width="32" height="32"/>
<text x="180.0" y="331.0" font-size="11" text-anchor="middle" fill="#272a2e">Big</text>
<use href="#nBr" x="236.0" y="334.5" width="32" height="32"/>
<text x="252.0" y="331.0" font-size="11" text-anchor="middle" fill="#272a2e">Roots</text>
<use href="#nBr" x="236.0" y="406.5" width="32" height="32"/>
<text x="252.0" y="403.0" font-size="11" text-anchor="middle" fill="#272a2e">Trunk</text>
<use href="#nTree" x="236.0" y="478.5" width="32" height="32"/>
<text x="252.0" y="475.0" font-size="11" text-anchor="middle" fill="#272a2e">Tree</text>
<path d="M84.0 192.5 h7 a3.500 3.500 0 0 1 3.500 3.500 v4 a3.500 3.500 0 0 1 -3.500 3.500 h-1 l2.500 3.500 l-5.500 -3.500 h-3 a3.500 3.500 0 0 1 -3.500 -3.500 v-4 a3.500 3.500 0 0 1 3.500 -3.500z" fill="#d4d8dc" stroke="#5d6670" stroke-width=".8"/>
<text x="87.5" y="201.7" font-size="9" font-weight="bold" text-anchor="middle" fill="#e0672a">!</text>
<path d="M156.0 336.5 h7 a3.500 3.500 0 0 1 3.500 3.500 v4 a3.500 3.500 0 0 1 -3.500 3.500 h-1 l2.500 3.500 l-5.500 -3.500 h-3 a3.500 3.500 0 0 1 -3.500 -3.500 v-4 a3.500 3.500 0 0 1 3.500 -3.500z" fill="#d4d8dc" stroke="#5d6670" stroke-width=".8"/>
<text x="159.5" y="345.7" font-size="9" font-weight="bold" text-anchor="middle" fill="#e0672a">!</text>
<g><path d="M259 427 L267 425.500 L271.500 442 L266 445.500Z" fill="#f2e7b9" stroke="#9b9270" stroke-width=".6"/><path d="M261 428.500 L275 428.500" stroke="#4a4a44" stroke-width="1"/><path d="M272 429 L275.500 429 L273 434Z" fill="#d9682e"/><path d="M275 429 L278 425.500" stroke="#8a6a3a" stroke-width=".9"/></g>
<text x="233.0" y="499.0" font-size="4.700" text-anchor="end" fill="#dfe7ef">Total: 21,493</text>
<text x="217" y="515" font-size="5.600" text-anchor="middle" fill="#22262b">Forces</text>
<text x="288" y="515" font-size="5.600" text-anchor="middle" fill="#22262b">Collision</text>
<path d="M209 533 C210 524 217 516 222 519 C226 522 222 531 219 537" fill="none" stroke="#93a7bd" stroke-width="2.300"/>
<text x="225" y="521" font-size="5" fill="#b6c4d3">1</text><text x="297" y="521" font-size="5" fill="#b6c4d3">3</text>
<g fill="#8fa3b9"><circle cx="289" cy="524" r="5.500"/><ellipse cx="289" cy="530" rx="7" ry="3.500"/><rect x="287" y="530" width="4.500" height="9" rx="2"/></g>
</svg>
<!-- bottom tabs -->
<div class="btab" style="left:1108px;width:62px">Materials</div>
<div class="btab" style="left:1170px;width:80px">Material Sets</div>
<div class="btab" style="left:1250px;width:54px">Meshes</div>
<div class="btab" style="left:1304px;width:40px;text-align:left;padding-left:7px;border-radius:0 0 0 4px">Mask</div>
<div class="abs" style="left:1038px;top:712px;width:71px;height:25px;background:#464749;border:1px solid #2a2a2e;border-top:none;border-radius:0 0 5px 5px;font-size:10.800px;line-height:30px;text-align:center;color:#f2f2f2">Generation</div>
<div class="abs" style="left:1336px;top:716px;width:15px;height:21px;background:#464749;border:1px solid #2f3032"><svg class="abs" style="left:4px;top:6px" width="7" height="8"><path d="M5 .500 L5 7.500 L.500 4Z" fill="#7c7c7c"/></svg></div>
<div class="abs" style="left:1350px;top:716px;width:15px;height:21px;background:linear-gradient(#7c848e,#5b6169);border:1px solid #2f3032"><svg class="abs" style="left:4px;top:6px" width="7" height="8"><path d="M1 .500 L1 7.500 L5.500 4Z" fill="#f4f4f4"/></svg></div>

<div class="hline" style="left:365px;top:21px;width:4px"></div><div class="hline" style="left:1034px;top:21px;width:4px"></div><div class="hline" style="left:365px;top:737px;width:4px"></div><div class="hline" style="left:1034px;top:737px;width:4px"></div>
<!-- ===== status bar ===== -->
<div class="abs" style="left:0;top:742px;width:1366px;height:2px;background:#262626"></div>

</body>
</html>
